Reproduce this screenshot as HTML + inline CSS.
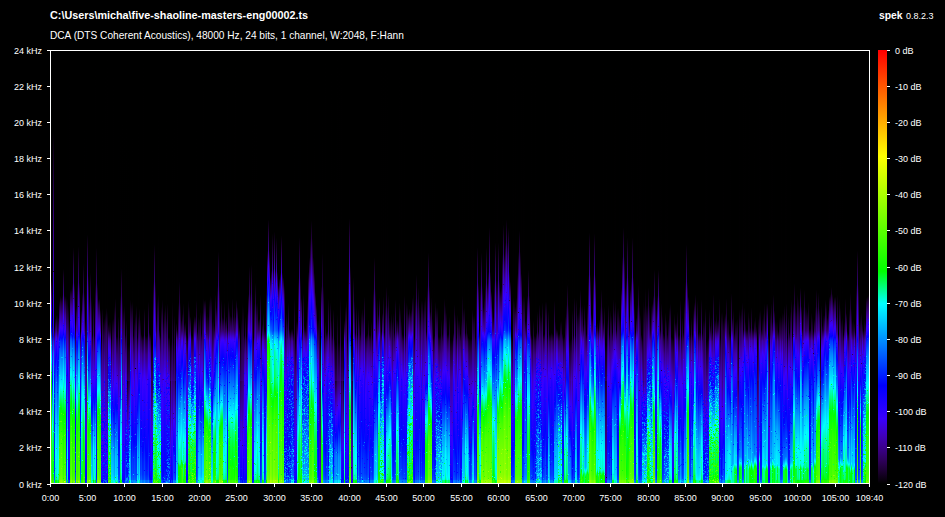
<!DOCTYPE html>
<html lang="en">
<head>
<meta charset="utf-8">
<title>Spek - five-shaoline-masters-eng00002.ts</title>
<style>
html,body{margin:0;padding:0;background:#000;}
body{width:945px;height:517px;overflow:hidden;position:relative;color:#fff;font-family:"Liberation Sans",Arial,sans-serif;}
#spek{position:absolute;left:0;top:0;width:945px;height:517px;background:#000;overflow:hidden;}
#spek svg{position:absolute;left:0;top:0;display:block;}
#sg{position:absolute;left:51px;top:51px;width:818px;height:432px;overflow:hidden;background:#000;}
#sg i{position:absolute;top:0;width:1px;height:432px;display:block;}
.title{position:absolute;left:50px;top:8px;font-size:10.8px;font-weight:bold;line-height:14px;white-space:nowrap;}
.sub{position:absolute;left:50px;top:29px;font-size:10.15px;line-height:13px;white-space:nowrap;}
.brand{position:absolute;right:11.5px;top:8px;font-size:12px;line-height:14px;white-space:nowrap;text-align:right;}
.brand b{font-size:10.4px;}
.brand span{font-size:9px;}
.fl{position:absolute;left:0;width:42px;text-align:right;font-size:9px;line-height:11px;height:11px;white-space:nowrap;}
.tl{position:absolute;top:492.5px;width:60px;text-align:center;font-size:9px;line-height:11px;height:11px;white-space:nowrap;}
.dl{position:absolute;left:895px;font-size:9px;line-height:11px;height:11px;white-space:nowrap;}
</style>
</head>
<body>
<div id="spek">
<div id="sg"><i style="left:0px;background:linear-gradient(#000 228.5px,#010002 229.5px,#1f0036 235.5px,#3e009e 247.5px,#3900fd 259.5px,#00f 275.5px,#0027ff 280.5px,#009eff 290.5px,#00e4ff 302.5px,#00fffa 309.5px,#0f2 330.5px,#01ff00 338.5px,#2cff00 386.5px,#3eff00 421.5px,#5f0 428.5px,#72ff00 429.5px,#78ff00 431.5px)"></i>
<i style="left:1px;background:linear-gradient(#000 0.5px,#010001 266.5px,#19002a 276.5px,#2e005b 285.5px,#3e009c 290.5px,#3b00f1 302.5px,#3600ff 306.5px,#0003ff 330.5px,#009eff 355.5px,#00fdff 375.5px,#00ff83 390.5px,#00ff4c 401.5px,#00ff18 421.5px,#01ff00 424.5px,#10ff00 428.5px,#2dff00 429.5px,#3f0 431.5px)"></i>
<i style="left:2px;background:linear-gradient(#000 0.5px,#000001 80.5px,#180028 107.5px,#3c0091 180.5px,#3b00f5 250.5px,#3400ff 264.5px,#2400ff 280.5px,#0100ff 285.5px,#0036ff 290.5px,#0081ff 303.5px,#00f5ff 332.5px,#00fffc 337.5px,#00ff82 362.5px,#00ff36 384.5px,#00ff16 403.5px,#02ff00 415.5px,#1f0 425.5px,#1eff00 428.5px,#3bff00 429.5px,#41ff00 431.5px)"></i>
<i style="left:3px;background:linear-gradient(#000 275.5px,#12001d 279.5px,#3a0088 287.5px,#3f00ad 290.5px,#3900fe 301.5px,#0004ff 327.5px,#0010ff 333.5px,#002aff 409.5px,#003fff 423.5px,#0058ff 428.5px,#0080ff 429.5px,#0089ff 431.5px)"></i>
<i style="left:4px;background:linear-gradient(#000 0.5px,#010001 267.5px,#21003a 274.5px,#350071 280.5px,#4000cb 286.5px,#3a00f9 289.5px,#2700ff 295.5px,#0002ff 310.5px,#0068ff 336.5px,#00d8ff 377.5px,#00fffb 399.5px,#00ffc1 421.5px,#00ff87 427.5px,#00ff70 428.5px,#00ff0b 429.5px,#03ff00 431.5px)"></i>
<i style="left:5px;background:linear-gradient(#000 263.5px,#030004 264.5px,#1e0035 270.5px,#39007f 279.5px,#3d00e9 286.5px,#3500ff 288.5px,#0100ff 303.5px,#0076ff 333.5px,#00e2ff 380.5px,#00fffa 401.5px,#00ffc7 421.5px,#00ff8d 427.5px,#00ff76 428.5px,#0f1 429.5px,#01ff00 431.5px)"></i>
<i style="left:6px;background:linear-gradient(#000 0.5px,#010001 263.5px,#170027 272.5px,#240042 279.5px,#3f00a6 286.5px,#3f00d4 289.5px,#3700ff 295.5px,#0001ff 317.5px,#0045ff 335.5px,#00c0ff 383.5px,#00eaff 409.5px,#00fbff 422.5px,#00fff7 424.5px,#00ffd9 427.5px,#00ffc2 428.5px,#00ff5d 429.5px,#00ff48 431.5px)"></i>
<i style="left:7px;background:linear-gradient(#000 0.5px,#010001 266.5px,#1d0032 272.5px,#37007a 280.5px,#3f00d5 286.5px,#3700ff 289.5px,#0100ff 307.5px,#0068ff 334.5px,#00d7ff 379.5px,#00fffe 406.5px,#00ffd5 421.5px,#00ff9b 427.5px,#00ff84 428.5px,#00ff1f 429.5px,#00ff0a 431.5px)"></i>
<i style="left:8px;background:linear-gradient(#000 0.5px,#010001 249.5px,#200038 256.5px,#3e009e 269.5px,#3800ff 280.5px,#00f 288.5px,#0038ff 296.5px,#0071ff 308.5px,#00ecff 336.5px,#00fffe 340.5px,#00ff50 356.5px,#01ff00 365.5px,#32ff00 393.5px,#4bff00 423.5px,#5dff00 428.5px,#7aff00 429.5px,#7fff00 431.5px)"></i>
<i style="left:9px;background:linear-gradient(#000 244.5px,#040005 245.5px,#200038 251.5px,#3e009e 264.5px,#3800ff 276.5px,#1800ff 282.5px,#0006ff 286.5px,#0032ff 290.5px,#0078ff 302.5px,#00fffa 334.5px,#0f4 350.5px,#0f0 357.5px,#3bff00 385.5px,#5dff00 423.5px,#6fff00 428.5px,#8cff00 429.5px,#92ff00 431.5px)"></i>
<i style="left:10px;background:linear-gradient(#000 246.5px,#1c0030 252.5px,#3d0096 265.5px,#3a00f9 277.5px,#1f00ff 282.5px,#0006ff 287.5px,#0025ff 290.5px,#0070ff 303.5px,#00f1ff 333.5px,#00fffa 336.5px,#00ff2e 353.5px,#00ff04 357.5px,#40ff00 386.5px,#62ff00 423.5px,#74ff00 428.5px,#91ff00 429.5px,#97ff00 431.5px)"></i>
<i style="left:11px;background:linear-gradient(#000 243.5px,#020003 244.5px,#200038 251.5px,#3d009a 264.5px,#3900fc 277.5px,#1800ff 283.5px,#0300ff 286.5px,#002dff 291.5px,#0071ff 303.5px,#0ff 336.5px,#00ff50 352.5px,#01ff00 361.5px,#36ff00 389.5px,#53ff00 423.5px,#65ff00 428.5px,#82ff00 429.5px,#8f0 431.5px)"></i>
<i style="left:12px;background:linear-gradient(#000 217.5px,#020002 218.5px,#1d0032 227.5px,#3d009a 247.5px,#3900fe 266.5px,#1400ff 280.5px,#0001ff 283.5px,#004cff 289.5px,#009dff 303.5px,#00fffb 327.5px,#00ff95 339.5px,#00ff03 361.5px,#26ff00 396.5px,#3bff00 423.5px,#4dff00 428.5px,#69ff00 429.5px,#6fff00 431.5px)"></i>
<i style="left:13px;background:linear-gradient(#000 243.5px,#020002 244.5px,#200039 252.5px,#3e009f 267.5px,#3b00f1 279.5px,#3800ff 280.5px,#0100ff 288.5px,#0053ff 301.5px,#0df 333.5px,#00fdff 339.5px,#00ff28 358.5px,#00ff01 362.5px,#3aff00 391.5px,#56ff00 423.5px,#68ff00 428.5px,#85ff00 429.5px,#8bff00 431.5px)"></i>
<i style="left:14px;background:linear-gradient(#000 244.5px,#020003 245.5px,#1b002d 250.5px,#3c0093 263.5px,#3b00f5 275.5px,#3200ff 278.5px,#0004ff 286.5px,#002fff 290.5px,#0076ff 302.5px,#00fffc 335.5px,#00ff4f 353.5px,#0f0 363.5px,#2dff00 392.5px,#46ff00 423.5px,#58ff00 428.5px,#75ff00 429.5px,#7bff00 431.5px)"></i>
<i style="left:15px;background:linear-gradient(#000 245.5px,#1c002f 258.5px,#3d0095 286.5px,#3900fe 317.5px,#1f00ff 341.5px,#0005ff 386.5px,#0032ff 413.5px,#0042ff 423.5px,#005bff 428.5px,#0084ff 429.5px,#008cff 431.5px)"></i>
<i style="left:16px;background:linear-gradient(#000 0.5px,#000001 247.5px,#200038 262.5px,#3b0089 282.5px,#4000be 290.5px,#3700ff 299.5px,#0002ff 323.5px,#0090ff 362.5px,#00e8ff 395.5px,#00fffa 414.5px,#00ffe6 421.5px,#00ffac 427.5px,#00ff95 428.5px,#00ff30 429.5px,#00ff1b 431.5px)"></i>
<i style="left:17px;background:linear-gradient(#000 254.5px,#1e0035 268.5px,#3e009e 294.5px,#3800ff 317.5px,#2000ff 333.5px,#0d00ff 417.5px,#0006ff 427.5px,#000fff 428.5px,#0037ff 429.5px,#0040ff 431.5px)"></i>
<i style="left:18px;background:linear-gradient(#000 0.5px,#010001 270.5px,#190029 280.5px,#3b008a 309.5px,#3f00cd 329.5px,#3600ff 372.5px,#0a00ff 424.5px,#0002ff 428.5px,#002bff 429.5px,#03f 431.5px)"></i>
<i style="left:19px;background:linear-gradient(#000 237.5px,#010002 238.5px,#1f0036 244.5px,#3d0099 256.5px,#3900fe 269.5px,#0600ff 281.5px,#0002ff 282.5px,#005aff 289.5px,#00a6ff 302.5px,#00fdff 323.5px,#00ff8a 336.5px,#00ff01 355.5px,#2fff00 391.5px,#47ff00 423.5px,#59ff00 428.5px,#76ff00 429.5px,#7bff00 431.5px)"></i>
<i style="left:20px;background:linear-gradient(#000 237.5px,#030005 238.5px,#1c0030 243.5px,#3b008c 254.5px,#3b00f1 267.5px,#3400ff 270.5px,#0b00ff 280.5px,#0005ff 282.5px,#005cff 289.5px,#00a8ff 302.5px,#00fffd 323.5px,#00ff2f 344.5px,#01ff00 350.5px,#3dff00 383.5px,#5eff00 423.5px,#70ff00 428.5px,#8dff00 429.5px,#93ff00 431.5px)"></i>
<i style="left:21px;background:linear-gradient(#000 231.5px,#020002 232.5px,#1e0033 240.5px,#3d009b 257.5px,#3900fc 273.5px,#2300ff 280.5px,#00f 285.5px,#0037ff 290.5px,#0082ff 303.5px,#00fffc 334.5px,#00ff65 353.5px,#0f0 369.5px,#20ff00 401.5px,#3f0 423.5px,#4f0 428.5px,#61ff00 429.5px,#67ff00 431.5px)"></i>
<i style="left:22px;background:linear-gradient(#000 196.5px,#07000a 199.5px,#270047 214.5px,#3f00ad 239.5px,#3700ff 260.5px,#0e00ff 280.5px,#0100ff 282.5px,#0056ff 289.5px,#00a3ff 302.5px,#00feff 324.5px,#00ffa3 334.5px,#00ff0a 356.5px,#04ff00 360.5px,#2cff00 396.5px,#40ff00 423.5px,#52ff00 428.5px,#6fff00 429.5px,#75ff00 431.5px)"></i>
<i style="left:23px;background:linear-gradient(#000 231.5px,#020002 232.5px,#200038 241.5px,#3e009c 258.5px,#3800ff 275.5px,#2000ff 281.5px,#0005ff 286.5px,#0030ff 290.5px,#07f 302.5px,#00fffe 335.5px,#00ff57 354.5px,#00ff01 366.5px,#27ff00 397.5px,#3cff00 423.5px,#4dff00 428.5px,#6aff00 429.5px,#70ff00 431.5px)"></i>
<i style="left:24px;background:linear-gradient(#000 269.5px,#09000e 273.5px,#28004b 287.5px,#4000bb 311.5px,#3800ff 325.5px,#2100ff 348.5px,#0005ff 391.5px,#0029ff 410.5px,#0039ff 422.5px,#0056ff 428.5px,#007eff 429.5px,#0087ff 431.5px)"></i>
<i style="left:25px;background:linear-gradient(#000 254.5px,#08000d 256.5px,#22003c 262.5px,#3f00a5 275.5px,#4000c7 279.5px,#3600ff 283.5px,#0600ff 291.5px,#000eff 295.5px,#0042ff 305.5px,#00b7ff 332.5px,#00fffe 345.5px,#00ff4c 360.5px,#01ff00 368.5px,#30ff00 392.5px,#4cff00 423.5px,#5dff00 428.5px,#7aff00 429.5px,#80ff00 431.5px)"></i>
<i style="left:26px;background:linear-gradient(#000 231.5px,#1f0036 245.5px,#3e009c 271.5px,#4000bb 279.5px,#3a00f8 283.5px,#2700ff 286.5px,#0b00ff 291.5px,#0004ff 295.5px,#0038ff 305.5px,#00b6ff 334.5px,#00fffb 349.5px,#00ff58 365.5px,#0f0 376.5px,#21ff00 400.5px,#34ff00 423.5px,#46ff00 428.5px,#63ff00 429.5px,#69ff00 431.5px)"></i>
<i style="left:27px;background:linear-gradient(#000 195.5px,#0a0010 200.5px,#22003c 212.5px,#3f00a8 242.5px,#3700ff 267.5px,#1d00ff 280.5px,#0100ff 284.5px,#0042ff 290.5px,#0089ff 302.5px,#00fdff 330.5px,#00ff3a 352.5px,#01ff00 360.5px,#2fff00 391.5px,#48ff00 423.5px,#5aff00 428.5px,#7f0 429.5px,#7dff00 431.5px)"></i>
<i style="left:28px;background:linear-gradient(#000 231.5px,#1c0031 239.5px,#3c0094 255.5px,#3c00f0 270.5px,#3400ff 274.5px,#2000ff 280.5px,#0005ff 285.5px,#0037ff 289.5px,#0083ff 302.5px,#00fffa 332.5px,#00ff32 352.5px,#0f0 358.5px,#35ff00 388.5px,#52ff00 423.5px,#64ff00 428.5px,#81ff00 429.5px,#87ff00 431.5px)"></i>
<i style="left:29px;background:linear-gradient(#000 280.5px,#12001c 283.5px,#34006e 290.5px,#4000c0 302.5px,#3700ff 315.5px,#1500ff 332.5px,#0005ff 374.5px,#0049ff 423.5px,#0062ff 428.5px,#008bff 429.5px,#0093ff 431.5px)"></i>
<i style="left:30px;background:linear-gradient(#000 258.5px,#12001e 262.5px,#29004d 268.5px,#3f00a9 279.5px,#3b00f6 284.5px,#2f00ff 286.5px,#1000ff 292.5px,#0002ff 297.5px,#0053ff 315.5px,#00b2ff 340.5px,#00fffb 368.5px,#00ff97 388.5px,#00ff6f 402.5px,#00ff40 421.5px,#05ff00 428.5px,#2f0 429.5px,#28ff00 431.5px)"></i>
<i style="left:31px;background:linear-gradient(#000 240.5px,#010002 241.5px,#1d0031 248.5px,#3d0098 263.5px,#3900ff 278.5px,#0003ff 287.5px,#02f 290.5px,#0068ff 302.5px,#00e0ff 332.5px,#00fffc 348.5px,#00ff91 375.5px,#00ff5c 396.5px,#00ff48 409.5px,#00ff26 421.5px,#00ff01 425.5px,#0cff00 428.5px,#29ff00 429.5px,#2fff00 431.5px)"></i>
<i style="left:32px;background:linear-gradient(#000 212.5px,#0a0010 217.5px,#200038 228.5px,#3f00a7 259.5px,#3c00ef 279.5px,#3900fd 280.5px,#0200ff 288.5px,#05f 302.5px,#00fcff 344.5px,#0fe 347.5px,#00ff6d 365.5px,#00ff10 383.5px,#02ff00 389.5px,#1cff00 423.5px,#2eff00 428.5px,#4bff00 429.5px,#51ff00 431.5px)"></i>
<i style="left:33px;background:linear-gradient(#000 0.5px,#010001 241.5px,#21003a 254.5px,#3e009f 277.5px,#3f00a8 279.5px,#3700ff 285.5px,#1400ff 291.5px,#0007ff 298.5px,#00dcff 349.5px,#00fffa 360.5px,#00ff84 377.5px,#00ff39 393.5px,#01ff00 419.5px,#1bff00 428.5px,#38ff00 429.5px,#3eff00 431.5px)"></i>
<i style="left:34px;background:linear-gradient(#000 269.5px,#180029 279.5px,#3b008a 314.5px,#3f00b2 329.5px,#4000c1 344.5px,#3600ff 387.5px,#1200ff 425.5px,#0800ff 428.5px,#001aff 429.5px,#02f 431.5px)"></i>
<i style="left:35px;background:linear-gradient(#000 0.5px,#000001 225.5px,#140021 261.5px,#23003f 281.5px,#3c008f 329.5px,#3a0084 330.5px,#3d00ea 374.5px,#3600ff 384.5px,#1200ff 412.5px,#0001ff 427.5px,#000aff 428.5px,#03f 429.5px,#003bff 431.5px)"></i>
<i style="left:36px;background:linear-gradient(#000 183.5px,#200038 199.5px,#3f00a7 230.5px,#3800ff 255.5px,#0c00ff 280.5px,#0003ff 282.5px,#005bff 289.5px,#00a7ff 302.5px,#0ff 323.5px,#00ff54 341.5px,#01ff00 352.5px,#37ff00 385.5px,#5f0 423.5px,#67ff00 428.5px,#84ff00 429.5px,#8aff00 431.5px)"></i>
<i style="left:37px;background:linear-gradient(#000 224.5px,#240040 242.5px,#3f00ad 272.5px,#3f00d2 281.5px,#3400ff 289.5px,#00f 306.5px,#006bff 331.5px,#00f5ff 353.5px,#00fffc 355.5px,#00ff54 369.5px,#01ff00 378.5px,#25ff00 400.5px,#39ff00 423.5px,#4bff00 428.5px,#68ff00 429.5px,#6eff00 431.5px)"></i>
<i style="left:38px;background:linear-gradient(#000 246.5px,#1e0033 260.5px,#390082 280.5px,#3e00dd 286.5px,#3900fc 288.5px,#0200ff 305.5px,#006dff 331.5px,#00fcff 352.5px,#00ffcb 356.5px,#00ff25 369.5px,#00ff04 372.5px,#32ff00 395.5px,#4cff00 423.5px,#5dff00 428.5px,#7aff00 429.5px,#80ff00 431.5px)"></i>
<i style="left:39px;background:linear-gradient(#000 221.5px,#0a0010 226.5px,#200038 237.5px,#3f00a8 268.5px,#3e00dc 281.5px,#30f 287.5px,#1700ff 293.5px,#0005ff 301.5px,#0086ff 331.5px,#00fcff 350.5px,#00ffcf 354.5px,#00ff29 368.5px,#00ff01 372.5px,#2fff00 396.5px,#47ff00 423.5px,#59ff00 428.5px,#76ff00 429.5px,#7bff00 431.5px)"></i>
<i style="left:40px;background:linear-gradient(#000 246.5px,#1e0033 260.5px,#390081 282.5px,#3d00e5 328.5px,#3a00f9 333.5px,#2c00ff 339.5px,#0001ff 357.5px,#00abff 399.5px,#00c1ff 410.5px,#00d1ff 422.5px,#0ef 428.5px,#00ffc5 429.5px,#00ffb0 431.5px)"></i>
<i style="left:41px;background:linear-gradient(#000 283.5px,#040005 284.5px,#1a002c 288.5px,#3a0084 301.5px,#3c00ee 323.5px,#3700ff 327.5px,#0005ff 356.5px,#00a9ff 405.5px,#00beff 422.5px,#00d1ff 427.5px,#00dbff 428.5px,#00fff5 429.5px,#00ffe0 431.5px)"></i>
<i style="left:42px;background:linear-gradient(#000 252.5px,#1c0030 265.5px,#3a0085 289.5px,#3d00e7 321.5px,#3700ff 330.5px,#0004ff 346.5px,#00a3ff 375.5px,#00f6ff 396.5px,#00fff9 400.5px,#00ffda 409.5px,#00ffb9 421.5px,#00ff7f 427.5px,#00ff68 428.5px,#00ff03 429.5px,#05ff00 431.5px)"></i>
<i style="left:43px;background:linear-gradient(#000 283.5px,#020002 284.5px,#170027 288.5px,#38007e 301.5px,#3e00e3 322.5px,#3600ff 329.5px,#0005ff 351.5px,#00a2ff 389.5px,#00d1ff 405.5px,#00eaff 423.5px,#00faff 427.5px,#00fff5 428.5px,#00ff8f 429.5px,#00ff7b 431.5px)"></i>
<i style="left:44px;background:linear-gradient(#000 0.5px,#010001 232.5px,#1e0034 246.5px,#3e009d 275.5px,#3f00d9 299.5px,#3600ff 319.5px,#2400ff 332.5px,#0005ff 344.5px,#009dff 374.5px,#00f0ff 396.5px,#00fffb 403.5px,#00ffca 421.5px,#00ff90 427.5px,#00ff79 428.5px,#00ff13 429.5px,#0f0 431.5px)"></i>
<i style="left:45px;background:linear-gradient(#000 196.5px,#200038 216.5px,#3e009f 252.5px,#3b00f4 283.5px,#3500ff 295.5px,#1a00ff 338.5px,#0800ff 417.5px,#0006ff 425.5px,#0018ff 428.5px,#0040ff 429.5px,#0049ff 431.5px)"></i>
<i style="left:46px;background:linear-gradient(#000 231.5px,#040007 233.5px,#1b002e 241.5px,#3d0094 262.5px,#3d00e7 279.5px,#3600ff 281.5px,#0003ff 289.5px,#0054ff 303.5px,#00d6ff 333.5px,#00fcff 340.5px,#00ffd3 344.5px,#00ff26 359.5px,#0f0 363.5px,#39ff00 390.5px,#56ff00 423.5px,#68ff00 428.5px,#85ff00 429.5px,#8bff00 431.5px)"></i>
<i style="left:47px;background:linear-gradient(#000 248.5px,#1c002f 254.5px,#3e009d 268.5px,#3a00f9 279.5px,#1200ff 285.5px,#0005ff 288.5px,#003dff 296.5px,#006fff 306.5px,#00dfff 332.5px,#00fffc 338.5px,#00ff36 354.5px,#0f0 359.5px,#40ff00 387.5px,#61ff00 423.5px,#73ff00 428.5px,#90ff00 429.5px,#96ff00 431.5px)"></i>
<i style="left:48px;background:linear-gradient(#000 247.5px,#1c0030 253.5px,#3e009d 267.5px,#3a00f9 278.5px,#1500ff 284.5px,#00f 287.5px,#001eff 290.5px,#0065ff 302.5px,#00f8ff 336.5px,#00fff8 338.5px,#00ff48 354.5px,#01ff00 362.5px,#36ff00 390.5px,#52ff00 423.5px,#64ff00 428.5px,#81ff00 429.5px,#87ff00 431.5px)"></i>
<i style="left:49px;background:linear-gradient(#000 257.5px,#020002 258.5px,#21003a 265.5px,#3f00a5 278.5px,#3f00cb 281.5px,#3a00fa 284.5px,#1200ff 291.5px,#0006ff 297.5px,#08f 327.5px,#00fffb 348.5px,#0f4 363.5px,#01ff00 370.5px,#32ff00 395.5px,#4aff00 423.5px,#5cff00 428.5px,#79ff00 429.5px,#7fff00 431.5px)"></i>
<i style="left:50px;background:linear-gradient(#000 287.5px,#0d0015 291.5px,#270047 301.5px,#4000ba 328.5px,#3500ff 408.5px,#2700ff 424.5px,#1b00ff 428.5px,#0500ff 429.5px,#00f 431.5px)"></i>
<i style="left:51px;background:linear-gradient(#000 0.5px,#010001 257.5px,#200038 271.5px,#310064 285.5px,#4000c2 329.5px,#3b00f3 388.5px,#30f 405.5px,#2300ff 424.5px,#1800ff 428.5px,#0100ff 429.5px,#0006ff 431.5px)"></i>
<i style="left:52px;background:linear-gradient(#000 270.5px,#170027 280.5px,#350071 304.5px,#4000bb 329.5px,#3b00f4 372.5px,#3500ff 384.5px,#0f00ff 425.5px,#0500ff 428.5px,#0020ff 429.5px,#0028ff 431.5px)"></i>
<i style="left:53px;background:linear-gradient(#000 267.5px,#140021 275.5px,#2a0050 287.5px,#4000b8 315.5px,#3c00ee 330.5px,#3600ff 383.5px,#2300ff 422.5px,#1300ff 428.5px,#0006ff 429.5px,#000eff 431.5px)"></i>
<i style="left:54px;background:linear-gradient(#000 0.5px,#010001 262.5px,#1d0031 274.5px,#2b0052 285.5px,#3f00ab 329.5px,#3f00a8 332.5px,#3700ff 394.5px,#1b00ff 424.5px,#1000ff 428.5px,#000cff 429.5px,#0015ff 431.5px)"></i>
<i style="left:55px;background:linear-gradient(#000 256.5px,#23003e 272.5px,#300062 284.5px,#3f00ae 329.5px,#3f00ab 332.5px,#3700ff 392.5px,#1900ff 424.5px,#0e00ff 428.5px,#0010ff 429.5px,#0018ff 431.5px)"></i>
<i style="left:56px;background:linear-gradient(#000 0.5px,#010001 260.5px,#1a002c 275.5px,#350072 312.5px,#3b008c 329.5px,#39007f 330.5px,#3d00ea 392.5px,#3600ff 403.5px,#2100ff 425.5px,#1700ff 428.5px,#0100ff 429.5px,#0007ff 431.5px)"></i>
<i style="left:57px;background:linear-gradient(#000 272.5px,#010002 273.5px,#1c0031 279.5px,#3e00a1 287.5px,#4000c7 290.5px,#3600ff 298.5px,#0005ff 322.5px,#0034ff 332.5px,#00beff 356.5px,#00feff 370.5px,#00ff85 384.5px,#00ff3d 396.5px,#02ff00 421.5px,#19ff00 428.5px,#36ff00 429.5px,#3cff00 431.5px)"></i>
<i style="left:58px;background:linear-gradient(#000 270.5px,#160024 279.5px,#19002a 280.5px,#3d0097 288.5px,#4000c4 293.5px,#3900fe 301.5px,#0004ff 327.5px,#0af 364.5px,#0ff 390.5px,#00ffc4 402.5px,#00ff91 421.5px,#00ff57 427.5px,#00ff40 428.5px,#0bff00 429.5px,#10ff00 431.5px)"></i>
<i style="left:59px;background:linear-gradient(#000 270.5px,#160025 279.5px,#1e0034 281.5px,#3e00a4 289.5px,#3900fc 301.5px,#0003ff 327.5px,#00c3ff 360.5px,#00feff 373.5px,#00ff87 387.5px,#00ff48 398.5px,#00ff0a 421.5px,#02ff00 423.5px,#14ff00 428.5px,#31ff00 429.5px,#37ff00 431.5px)"></i>
<i style="left:60px;background:linear-gradient(#000 287.5px,#09000e 289.5px,#21003b 298.5px,#3f00a6 323.5px,#3e00dc 334.5px,#3800ff 340.5px,#0001ff 361.5px,#0af 400.5px,#00bdff 408.5px,#00cfff 422.5px,#00e2ff 427.5px,#00ecff 428.5px,#00ffca 429.5px,#00ffb6 431.5px)"></i>
<i style="left:61px;background:linear-gradient(#000 268.5px,#200038 282.5px,#3e009e 304.5px,#3700ff 325.5px,#0005ff 352.5px,#00adff 400.5px,#00c2ff 413.5px,#00d3ff 423.5px,#00ecff 428.5px,#00ffca 429.5px,#00ffb6 431.5px)"></i>
<i style="left:62px;background:linear-gradient(#000 0.5px,#010001 267.5px,#0c0013 271.5px,#22003c 282.5px,#3e009d 313.5px,#3f00da 332.5px,#3800ff 339.5px,#0002ff 362.5px,#00adff 404.5px,#00c7ff 423.5px,#00e0ff 428.5px,#00ffe7 429.5px,#00ffd2 431.5px)"></i>
<i style="left:63px;background:linear-gradient(#000 255.5px,#08000d 259.5px,#22003c 271.5px,#3e009d 300.5px,#3900fe 331.5px,#0004ff 363.5px,#0093ff 406.5px,#00abff 423.5px,#00c4ff 428.5px,#00edff 429.5px,#00f5ff 431.5px)"></i>
<i style="left:64px;background:linear-gradient(#000 247.5px,#1e0033 261.5px,#3a0087 285.5px,#3d00ea 324.5px,#3400ff 333.5px,#0002ff 354.5px,#00a8ff 395.5px,#00c7ff 407.5px,#00daff 422.5px,#00f7ff 428.5px,#00ffae 429.5px,#00ff9a 431.5px)"></i>
<i style="left:65px;background:linear-gradient(#000 284.5px,#010002 285.5px,#160025 289.5px,#37007a 304.5px,#3e00e3 326.5px,#3600ff 333.5px,#0002ff 357.5px,#00b0ff 403.5px,#00cdff 423.5px,#00e6ff 428.5px,#00ffd9 429.5px,#00ffc4 431.5px)"></i>
<i style="left:66px;background:linear-gradient(#000 285.5px,#09000e 287.5px,#140020 289.5px,#34006e 303.5px,#3f00d6 325.5px,#3700ff 334.5px,#0005ff 357.5px,#00adff 399.5px,#00c1ff 408.5px,#00d7ff 423.5px,#00f0ff 428.5px,#00ffbf 429.5px,#0fa 431.5px)"></i>
<i style="left:67px;background:linear-gradient(#000 0.5px,#000001 265.5px,#10001a 271.5px,#23003f 281.5px,#3d0098 317.5px,#4000b5 329.5px,#4000b9 333.5px,#3700ff 359.5px,#0003ff 397.5px,#0025ff 407.5px,#0038ff 422.5px,#004bff 427.5px,#05f 428.5px,#007dff 429.5px,#0085ff 431.5px)"></i>
<i style="left:68px;background:linear-gradient(#000 285.5px,#010002 286.5px,#10001a 289.5px,#260047 297.5px,#3f00a8 318.5px,#3e00de 330.5px,#3700ff 347.5px,#0003ff 396.5px,#02f 408.5px,#0038ff 423.5px,#0051ff 428.5px,#007aff 429.5px,#0082ff 431.5px)"></i>
<i style="left:69px;background:linear-gradient(#000 0.5px,#010001 244.5px,#1e0034 258.5px,#3c0091 284.5px,#3b00f5 320.5px,#30f 328.5px,#0002ff 342.5px,#0096ff 365.5px,#00fcff 386.5px,#00ffea 389.5px,#00ffa0 399.5px,#00ff70 415.5px,#00ff5f 421.5px,#00ff25 427.5px,#00ff0e 428.5px,#19ff00 429.5px,#1fff00 431.5px)"></i>
<i style="left:70px;background:linear-gradient(#000 217.5px,#0a0010 222.5px,#240040 235.5px,#3f00a7 263.5px,#3e00e2 279.5px,#3800ff 281.5px,#0100ff 289.5px,#004fff 303.5px,#00bfff 331.5px,#00f8ff 398.5px,#00fffa 411.5px,#0fd 421.5px,#00ffa3 427.5px,#00ff8c 428.5px,#00ff27 429.5px,#00ff12 431.5px)"></i>
<i style="left:71px;background:linear-gradient(#000 0.5px,#010001 244.5px,#1e0035 266.5px,#33006b 290.5px,#3f00aa 329.5px,#3f00a7 332.5px,#3700ff 386.5px,#0e00ff 426.5px,#0600ff 428.5px,#001dff 429.5px,#0026ff 431.5px)"></i>
<i style="left:72px;background:linear-gradient(#000 258.5px,#08000d 262.5px,#1d0031 271.5px,#3c0090 299.5px,#3c00ee 330.5px,#3600ff 362.5px,#1700ff 422.5px,#0700ff 428.5px,#001bff 429.5px,#0023ff 431.5px)"></i>
<i style="left:73px;background:linear-gradient(#000 0.5px,#010001 254.5px,#250042 271.5px,#33006b 284.5px,#4000c2 329.5px,#3600ff 382.5px,#1000ff 425.5px,#0600ff 428.5px,#001dff 429.5px,#0026ff 431.5px)"></i>
<i style="left:74px;background:linear-gradient(#000 283.5px,#010002 284.5px,#170026 288.5px,#390081 302.5px,#3d00e6 323.5px,#3600ff 329.5px,#0005ff 395.5px,#02f 410.5px,#0036ff 423.5px,#004fff 428.5px,#07f 429.5px,#0080ff 431.5px)"></i>
<i style="left:75px;background:linear-gradient(#000 0.5px,#010001 269.5px,#1d0031 281.5px,#3d0096 310.5px,#3f00d8 330.5px,#3600ff 354.5px,#0005ff 411.5px,#0014ff 422.5px,#0027ff 427.5px,#0031ff 428.5px,#0059ff 429.5px,#0061ff 431.5px)"></i>
<i style="left:76px;background:linear-gradient(#000 293.5px,#0c0014 300.5px,#1a002c 316.5px,#280049 329.5px,#0e0017 330.5px,#270048 343.5px,#3f00ad 368.5px,#3700ff 387.5px,#0500ff 407.5px,#0006ff 421.5px,#0026ff 428.5px,#004fff 429.5px,#0057ff 431.5px)"></i>
<i style="left:77px;background:linear-gradient(#000 0.5px,#010001 293.5px,#10001a 301.5px,#1c0030 313.5px,#2f005d 329.5px,#23003e 330.5px,#3f00aa 359.5px,#3700ff 380.5px,#0005ff 404.5px,#0023ff 423.5px,#003cff 428.5px,#0064ff 429.5px,#006dff 431.5px)"></i>
<i style="left:78px;background:linear-gradient(#000 292.5px,#12001d 301.5px,#1e0033 312.5px,#320067 329.5px,#2a0050 330.5px,#4000b5 346.5px,#3800ff 358.5px,#0002ff 378.5px,#008fff 405.5px,#00a4ff 422.5px,#00c1ff 428.5px,#00e9ff 429.5px,#00f2ff 431.5px)"></i>
<i style="left:79px;background:linear-gradient(#000 248.5px,#150023 258.5px,#390083 282.5px,#4000ca 293.5px,#3800ff 300.5px,#0002ff 325.5px,#0021ff 336.5px,#00a6ff 408.5px,#00bcff 423.5px,#00d5ff 428.5px,#00fdff 429.5px,#0fe 431.5px)"></i>
<i style="left:80px;background:linear-gradient(#000 252.5px,#240040 269.5px,#38007f 288.5px,#3e00e1 325.5px,#3700ff 342.5px,#0004ff 397.5px,#001fff 408.5px,#0031ff 422.5px,#004eff 428.5px,#0076ff 429.5px,#007fff 431.5px)"></i>
<i style="left:81px;background:linear-gradient(#000 0.5px,#010001 250.5px,#1e0035 264.5px,#3d0094 290.5px,#3a00fb 320.5px,#0003ff 383.5px,#0039ff 410.5px,#0049ff 422.5px,#0065ff 428.5px,#008eff 429.5px,#0096ff 431.5px)"></i>
<i style="left:82px;background:linear-gradient(#000 284.5px,#0f0018 287.5px,#1a002d 289.5px,#390080 303.5px,#3d00ea 325.5px,#3800ff 330.5px,#0003ff 390.5px,#002eff 408.5px,#0040ff 422.5px,#005cff 428.5px,#0085ff 429.5px,#008dff 431.5px)"></i>
<i style="left:83px;background:linear-gradient(#000 270.5px,#1a002b 281.5px,#3c008e 311.5px,#3f00cc 331.5px,#3700ff 351.5px,#0003ff 391.5px,#0038ff 407.5px,#004bff 422.5px,#0068ff 428.5px,#0090ff 429.5px,#09f 431.5px)"></i>
<i style="left:84px;background:linear-gradient(#000 262.5px,#1c0030 274.5px,#3d0096 299.5px,#3a00f9 323.5px,#2b00ff 335.5px,#0004ff 387.5px,#0032ff 410.5px,#0042ff 422.5px,#005fff 428.5px,#0087ff 429.5px,#0090ff 431.5px)"></i>
<i style="left:85px;background:linear-gradient(#000 254.5px,#0d0015 260.5px,#2a004f 275.5px,#4000b5 305.5px,#3800ff 328.5px,#0005ff 392.5px,#002aff 409.5px,#003fff 423.5px,#0058ff 428.5px,#0080ff 429.5px,#0089ff 431.5px)"></i>
<i style="left:86px;background:linear-gradient(#000 285.5px,#020003 286.5px,#11001c 289.5px,#300060 301.5px,#4000c9 324.5px,#3500ff 336.5px,#0004ff 358.5px,#00a8ff 398.5px,#00c0ff 408.5px,#00d6ff 423.5px,#00efff 428.5px,#00ffc2 429.5px,#00ffad 431.5px)"></i>
<i style="left:87px;background:linear-gradient(#000 0.5px,#010001 265.5px,#150022 273.5px,#28004a 282.5px,#390083 291.5px,#3f00cf 302.5px,#3700ff 312.5px,#0400ff 338.5px,#0012ff 349.5px,#009aff 408.5px,#00acff 422.5px,#00bfff 427.5px,#00c9ff 428.5px,#00f1ff 429.5px,#00f9ff 431.5px)"></i>
<i style="left:88px;background:linear-gradient(#000 257.5px,#1e0033 270.5px,#38007e 287.5px,#3e00e1 305.5px,#3600ff 312.5px,#0003ff 338.5px,#00abff 393.5px,#00caff 410.5px,#00daff 422.5px,#00f7ff 428.5px,#00ffae 429.5px,#00ff9a 431.5px)"></i>
<i style="left:89px;background:linear-gradient(#000 268.5px,#200038 282.5px,#3e00a0 306.5px,#3900fe 327.5px,#0005ff 392.5px,#0029ff 409.5px,#003eff 423.5px,#0057ff 428.5px,#007fff 429.5px,#08f 431.5px)"></i>
<i style="left:90px;background:linear-gradient(#000 282.5px,#020004 283.5px,#130020 286.5px,#270048 290.5px,#3d0096 302.5px,#3a00f8 322.5px,#2c00ff 329.5px,#0005ff 383.5px,#003bff 410.5px,#004bff 422.5px,#0068ff 428.5px,#0090ff 429.5px,#09f 431.5px)"></i>
<i style="left:91px;background:linear-gradient(#000 284.5px,#020002 285.5px,#170026 289.5px,#38007b 304.5px,#3e00df 325.5px,#3b00f6 331.5px,#3400ff 342.5px,#0004ff 399.5px,#001aff 410.5px,#002eff 423.5px,#0047ff 428.5px,#0070ff 429.5px,#0078ff 431.5px)"></i>
<i style="left:92px;background:linear-gradient(#000 0.5px,#010001 284.5px,#11001b 287.5px,#1c0030 289.5px,#3a0084 303.5px,#3d00ea 324.5px,#3700ff 329.5px,#0004ff 396.5px,#001fff 410.5px,#002fff 422.5px,#0042ff 427.5px,#004cff 428.5px,#0074ff 429.5px,#007cff 431.5px)"></i>
<i style="left:93px;background:linear-gradient(#000 257.5px,#1e0033 270.5px,#3e009c 298.5px,#3900ff 325.5px,#0004ff 386.5px,#0037ff 410.5px,#004aff 423.5px,#0063ff 428.5px,#008cff 429.5px,#0094ff 431.5px)"></i>
<i style="left:94px;background:linear-gradient(#000 284.5px,#150023 288.5px,#1b002d 289.5px,#390081 303.5px,#3d00e6 324.5px,#3800ff 330.5px,#0004ff 399.5px,#001aff 412.5px,#002cff 423.5px,#0045ff 428.5px,#006dff 429.5px,#0076ff 431.5px)"></i>
<i style="left:95px;background:linear-gradient(#000 285.5px,#150023 289.5px,#350072 303.5px,#3f00da 325.5px,#3c00ef 330.5px,#3600ff 344.5px,#0004ff 404.5px,#001cff 422.5px,#0038ff 428.5px,#0061ff 429.5px,#0069ff 431.5px)"></i>
<i style="left:96px;background:linear-gradient(#000 284.5px,#0f0018 287.5px,#1a002d 289.5px,#390080 303.5px,#3d00ea 325.5px,#3800ff 330.5px,#0005ff 402.5px,#0026ff 423.5px,#003fff 428.5px,#0068ff 429.5px,#0070ff 431.5px)"></i>
<i style="left:97px;background:linear-gradient(#000 250.5px,#11001c 258.5px,#300060 276.5px,#4000c9 301.5px,#3600ff 315.5px,#1800ff 334.5px,#0005ff 380.5px,#0042ff 423.5px,#005bff 428.5px,#0084ff 429.5px,#008cff 431.5px)"></i>
<i style="left:98px;background:linear-gradient(#000 280.5px,#010002 281.5px,#19002a 285.5px,#310063 290.5px,#4000b4 302.5px,#3800ff 317.5px,#1c00ff 332.5px,#0900ff 416.5px,#0005ff 425.5px,#0017ff 428.5px,#003fff 429.5px,#0047ff 431.5px)"></i>
<i style="left:99px;background:linear-gradient(#000 283.5px,#100019 286.5px,#230040 290.5px,#3b008c 302.5px,#3b00f2 323.5px,#3500ff 327.5px,#1200ff 421.5px,#00f 428.5px,#0029ff 429.5px,#0031ff 431.5px)"></i>
<i style="left:100px;background:linear-gradient(#000 292.5px,#11001b 301.5px,#1f0037 315.5px,#300061 329.5px,#260045 330.5px,#4000b4 370.5px,#3700ff 394.5px,#1e00ff 409.5px,#0c00ff 426.5px,#0400ff 428.5px,#0021ff 429.5px,#0029ff 431.5px)"></i>
<i style="left:101px;background:linear-gradient(#000 0.5px,#010001 293.5px,#0f0018 300.5px,#1e0034 315.5px,#2e005c 329.5px,#22003d 330.5px,#3f00a7 357.5px,#3700ff 378.5px,#00f 401.5px,#001aff 406.5px,#002eff 422.5px,#004aff 428.5px,#0073ff 429.5px,#007bff 431.5px)"></i>
<i style="left:102px;background:linear-gradient(#000 230.5px,#1a002b 242.5px,#3d0095 271.5px,#3900fd 299.5px,#0002ff 332.5px,#00a0ff 362.5px,#00fdff 386.5px,#00ffac 400.5px,#00ff72 421.5px,#00ff38 427.5px,#00ff21 428.5px,#13ff00 429.5px,#19ff00 431.5px)"></i>
<i style="left:103px;background:linear-gradient(#000 193.5px,#0a0010 198.5px,#250042 212.5px,#3f00aa 241.5px,#3600ff 266.5px,#0e00ff 287.5px,#0006ff 294.5px,#003fff 305.5px,#00b1ff 334.5px,#00fffb 367.5px,#00ff9f 389.5px,#00ff51 421.5px,#00ff16 427.5px,#0f0 428.5px,#1dff00 429.5px,#23ff00 431.5px)"></i>
<i style="left:104px;background:linear-gradient(#000 230.5px,#1e0034 243.5px,#3e009b 269.5px,#4000c3 279.5px,#3800ff 283.5px,#0800ff 291.5px,#0005ff 294.5px,#0036ff 303.5px,#00c9ff 340.5px,#00fffd 358.5px,#00ff86 378.5px,#0f4 395.5px,#00ff14 417.5px,#03ff00 423.5px,#15ff00 428.5px,#32ff00 429.5px,#38ff00 431.5px)"></i>
<i style="left:105px;background:linear-gradient(#000 267.5px,#1f0035 280.5px,#370077 291.5px,#4000c3 302.5px,#3600ff 315.5px,#0700ff 333.5px,#0009ff 336.5px,#00a1ff 360.5px,#00feff 379.5px,#00ff8a 393.5px,#00ff5e 402.5px,#00ff2c 421.5px,#01ff00 426.5px,#0bff00 428.5px,#27ff00 429.5px,#2dff00 431.5px)"></i>
<i style="left:106px;background:linear-gradient(#000 247.5px,#21003a 263.5px,#3f00a7 291.5px,#3600ff 314.5px,#0f00ff 333.5px,#0003ff 338.5px,#009bff 367.5px,#00f8ff 391.5px,#00fffa 394.5px,#00ffca 403.5px,#00ff9a 421.5px,#00ff60 427.5px,#00ff49 428.5px,#08ff00 429.5px,#0eff00 431.5px)"></i>
<i style="left:107px;background:linear-gradient(#000 0.5px,#010001 243.5px,#250042 261.5px,#3f00ae 289.5px,#3600ff 310.5px,#0003ff 336.5px,#00a5ff 369.5px,#00faff 393.5px,#00fff1 397.5px,#00ffce 406.5px,#00ffa5 421.5px,#00ff6b 427.5px,#00ff54 428.5px,#05ff00 429.5px,#0bff00 431.5px)"></i>
<i style="left:108px;background:linear-gradient(#000 278.5px,#030004 279.5px,#1c0030 283.5px,#390080 289.5px,#3e00db 302.5px,#3600ff 310.5px,#0002ff 334.5px,#00a3ff 375.5px,#00ebff 401.5px,#00fffb 420.5px,#00ffbd 427.5px,#00ffa6 428.5px,#00ff41 429.5px,#00ff2c 431.5px)"></i>
<i style="left:109px;background:linear-gradient(#000 284.5px,#08000d 286.5px,#180029 289.5px,#38007b 303.5px,#3e00df 324.5px,#3500ff 331.5px,#0002ff 345.5px,#009aff 370.5px,#00fdff 392.5px,#00ffbc 403.5px,#00ff8c 421.5px,#00ff52 427.5px,#00ff3b 428.5px,#0cff00 429.5px,#12ff00 431.5px)"></i>
<i style="left:110px;background:linear-gradient(#000 255.5px,#0d0015 261.5px,#2a004f 276.5px,#3f00ad 308.5px,#3c00eb 332.5px,#3600ff 346.5px,#0005ff 402.5px,#001dff 419.5px,#0037ff 427.5px,#0040ff 428.5px,#0069ff 429.5px,#0071ff 431.5px)"></i>
<i style="left:111px;background:linear-gradient(#000 248.5px,#23003e 265.5px,#38007c 283.5px,#3e00e2 327.5px,#3600ff 353.5px,#0005ff 425.5px,#0017ff 428.5px,#003fff 429.5px,#0047ff 431.5px)"></i>
<i style="left:112px;background:linear-gradient(#000 270.5px,#21003a 284.5px,#3e009f 307.5px,#3800ff 328.5px,#0700ff 422.5px,#0007ff 427.5px,#0010ff 428.5px,#0038ff 429.5px,#0041ff 431.5px)"></i>
<i style="left:113px;background:linear-gradient(#000 259.5px,#1f0037 273.5px,#3e009e 299.5px,#3800ff 324.5px,#2800ff 342.5px,#0005ff 412.5px,#0013ff 422.5px,#002fff 428.5px,#0058ff 429.5px,#0060ff 431.5px)"></i>
<i style="left:114px;background:linear-gradient(#000 253.5px,#1d0031 266.5px,#3b008a 291.5px,#3b00f6 325.5px,#3600ff 331.5px,#0004ff 416.5px,#0016ff 424.5px,#002bff 428.5px,#0053ff 429.5px,#005cff 431.5px)"></i>
<i style="left:115px;background:linear-gradient(#000 0.5px,#010001 267.5px,#0c0013 271.5px,#240040 283.5px,#3e00a1 312.5px,#3f00d9 330.5px,#3600ff 360.5px,#0002ff 425.5px,#0013ff 428.5px,#003cff 429.5px,#04f 431.5px)"></i>
<i style="left:116px;background:linear-gradient(#000 252.5px,#11001c 260.5px,#28004a 272.5px,#3f00aa 300.5px,#3700ff 328.5px,#0005ff 407.5px,#001cff 423.5px,#0035ff 428.5px,#005eff 429.5px,#06f 431.5px)"></i>
<i style="left:117px;background:linear-gradient(#000 285.5px,#030004 286.5px,#12001d 289.5px,#310062 301.5px,#3f00cb 324.5px,#3d00e7 331.5px,#3600ff 347.5px,#0005ff 403.5px,#0024ff 423.5px,#003dff 428.5px,#0065ff 429.5px,#006eff 431.5px)"></i>
<i style="left:118px;background:linear-gradient(#000 285.5px,#020003 286.5px,#11001b 289.5px,#30005f 301.5px,#4000c7 324.5px,#3e00e1 330.5px,#3700ff 352.5px,#0003ff 418.5px,#001eff 427.5px,#0028ff 428.5px,#0050ff 429.5px,#0058ff 431.5px)"></i>
<i style="left:119px;background:linear-gradient(#000 293.5px,#0e0016 300.5px,#1b002d 314.5px,#2b0053 329.5px,#1a002b 330.5px,#3e009c 373.5px,#3a00fb 401.5px,#1f00ff 425.5px,#1600ff 428.5px,#0001ff 429.5px,#000aff 431.5px)"></i>
<i style="left:120px;background:linear-gradient(#000 289.5px,#09000e 293.5px,#1b002f 301.5px,#37007a 323.5px,#3d0094 329.5px,#3b008c 330.5px,#3b00f6 374.5px,#3200ff 383.5px,#0c00ff 411.5px,#0004ff 425.5px,#0016ff 428.5px,#003eff 429.5px,#0046ff 431.5px)"></i>
<i style="left:121px;background:linear-gradient(#000 0.5px,#010001 250.5px,#0d0014 265.5px,#2d0057 300.5px,#390082 329.5px,#360073 330.5px,#3e00de 380.5px,#3700ff 394.5px,#2000ff 414.5px,#10f 426.5px,#0a00ff 428.5px,#0017ff 429.5px,#001fff 431.5px)"></i>
<i style="left:122px;background:linear-gradient(#000 291.5px,#150022 300.5px,#230040 312.5px,#38007c 329.5px,#34006e 330.5px,#3f00d5 358.5px,#3600ff 370.5px,#0003ff 397.5px,#002eff 406.5px,#0042ff 422.5px,#005fff 428.5px,#0087ff 429.5px,#0090ff 431.5px)"></i>
<i style="left:123px;background:linear-gradient(#000 0.5px,#010001 264.5px,#1b002e 279.5px,#360073 319.5px,#390082 329.5px,#360073 330.5px,#3e00dc 360.5px,#3800ff 370.5px,#0003ff 399.5px,#0023ff 406.5px,#0037ff 422.5px,#0053ff 428.5px,#007cff 429.5px,#0084ff 431.5px)"></i>
<i style="left:124px;background:linear-gradient(#000 293.5px,#0e0017 301.5px,#19002b 313.5px,#2b0052 329.5px,#180029 330.5px,#3c008f 356.5px,#3b00f3 379.5px,#30f 384.5px,#0002ff 404.5px,#001dff 422.5px,#0030ff 427.5px,#003aff 428.5px,#0062ff 429.5px,#006aff 431.5px)"></i>
<i style="left:125px;background:linear-gradient(#000 271.5px,#020003 272.5px,#21003a 279.5px,#3e009d 286.5px,#4000ca 289.5px,#3800ff 296.5px,#0002ff 319.5px,#0032ff 332.5px,#00b5ff 402.5px,#00ceff 422.5px,#00eaff 428.5px,#00ffcd 429.5px,#00ffb8 431.5px)"></i>
<i style="left:126px;background:linear-gradient(#000 0.5px,#010001 278.5px,#0c0012 280.5px,#2a004e 285.5px,#3a0086 289.5px,#3e00e2 302.5px,#3600ff 309.5px,#0002ff 335.5px,#00a9ff 406.5px,#00bdff 422.5px,#00d9ff 428.5px,#00fff8 429.5px,#00ffe3 431.5px)"></i>
<i style="left:127px;background:linear-gradient(#000 251.5px,#22003c 267.5px,#360076 281.5px,#3d009a 287.5px,#4000c0 290.5px,#3600ff 299.5px,#0004ff 323.5px,#00bfff 365.5px,#0ff 384.5px,#00ffaf 398.5px,#00ff8e 410.5px,#00ff78 411.5px,#00ff1a 413.5px,#02ff00 414.5px,#02ff00 428.5px,#14ff00 429.5px,#1aff00 431.5px)"></i>
<i style="left:128px;background:linear-gradient(#000 230.5px,#0a0010 235.5px,#200038 246.5px,#3f00a8 277.5px,#3700ff 297.5px,#0004ff 325.5px,#00b1ff 366.5px,#00fffb 392.5px,#00ffc9 403.5px,#00ffb6 411.5px,#00ffa5 412.5px,#00ff18 415.5px,#01ff00 416.5px,#01ff00 428.5px,#0eff00 431.5px)"></i>
<i style="left:129px;background:linear-gradient(#000 251.5px,#22003c 267.5px,#38007b 282.5px,#3f00a9 289.5px,#3900fd 300.5px,#0004ff 326.5px,#00b3ff 365.5px,#0ff 388.5px,#0fb 401.5px,#00ffa2 411.5px,#00ff91 412.5px,#0f3 414.5px,#00ff12 415.5px,#00ff12 428.5px,#0eff00 429.5px,#14ff00 431.5px)"></i>
<i style="left:130px;background:linear-gradient(#000 269.5px,#23003f 277.5px,#2f005d 280.5px,#4000c4 287.5px,#3e00e3 289.5px,#3800ff 293.5px,#0600ff 311.5px,#0009ff 316.5px,#00c2ff 361.5px,#00fffb 381.5px,#00ffad 395.5px,#00ff87 408.5px,#01ff00 411.5px,#1cff00 413.5px,#1fff00 431.5px)"></i>
<i style="left:131px;background:linear-gradient(#000 261.5px,#020002 262.5px,#1f0035 271.5px,#300060 279.5px,#4000c8 286.5px,#3b00f6 289.5px,#3200ff 292.5px,#00f 310.5px,#06f 336.5px,#00d9ff 379.5px,#00fffb 402.5px,#00fff0 407.5px,#00ffe3 408.5px,#00ff28 412.5px,#02ff00 413.5px,#3fff00 418.5px,#3fff00 431.5px)"></i>
<i style="left:132px;background:linear-gradient(#000 252.5px,#1c0030 265.5px,#37007a 283.5px,#3f00d5 299.5px,#3800ff 307.5px,#00f 331.5px,#09f 360.5px,#00fcff 385.5px,#00fff0 388.5px,#00ffa9 400.5px,#00ff87 413.5px,#00ff75 414.5px,#00ff6f 421.5px,#00ff35 427.5px,#00ff1f 428.5px,#14ff00 429.5px,#1aff00 431.5px)"></i>
<i style="left:133px;background:linear-gradient(#000 272.5px,#020003 273.5px,#1d0032 279.5px,#3e00a2 287.5px,#4000c8 290.5px,#3900fe 297.5px,#0002ff 321.5px,#00b0ff 364.5px,#0ff 391.5px,#0fc 403.5px,#0fb 410.5px,#00ffa2 411.5px,#00ff16 414.5px,#07ff00 415.5px,#10ff00 417.5px,#10ff00 431.5px)"></i>
<i style="left:134px;background:linear-gradient(#000 270.5px,#020003 271.5px,#1d0033 277.5px,#2a0050 280.5px,#4000b7 287.5px,#3e00dd 290.5px,#3700ff 295.5px,#0002ff 317.5px,#00a7ff 359.5px,#00fdff 389.5px,#00ffc7 404.5px,#0fb 409.5px,#00ff97 410.5px,#00ff0b 413.5px,#0aff00 414.5px,#1eff00 416.5px,#1eff00 431.5px)"></i>
<i style="left:135px;background:linear-gradient(#000 283.5px,#160024 287.5px,#240041 290.5px,#3c0092 303.5px,#3b00f4 323.5px,#3500ff 327.5px,#2c00ff 354.5px,#1b00ff 418.5px,#0700ff 428.5px,#001cff 429.5px,#0025ff 431.5px)"></i>
<i style="left:136px;background:linear-gradient(#000 286.5px,#07000b 288.5px,#0f0018 290.5px,#2a004f 300.5px,#4000bd 325.5px,#3f00cf 330.5px,#3700ff 370.5px,#0b00ff 424.5px,#0001ff 428.5px,#002aff 429.5px,#0032ff 431.5px)"></i>
<i style="left:137px;background:linear-gradient(#000 249.5px,#200038 264.5px,#38007d 281.5px,#3e009c 286.5px,#3f00cf 290.5px,#3600ff 297.5px,#0003ff 320.5px,#004fff 336.5px,#00d2ff 363.5px,#00fffe 375.5px,#00ff96 389.5px,#00ff62 400.5px,#00ff2c 421.5px,#01ff00 426.5px,#0bff00 428.5px,#27ff00 429.5px,#2dff00 431.5px)"></i>
<i style="left:138px;background:linear-gradient(#000 255.5px,#08000d 259.5px,#22003c 271.5px,#300061 280.5px,#4000c6 287.5px,#3c00ec 290.5px,#3700ff 293.5px,#0300ff 312.5px,#0023ff 322.5px,#0062ff 335.5px,#00e4ff 361.5px,#00fffb 368.5px,#00ff7f 383.5px,#00ff38 396.5px,#01ff00 420.5px,#1aff00 428.5px,#37ff00 429.5px,#3dff00 431.5px)"></i>
<i style="left:139px;background:linear-gradient(#000 265.5px,#240041 273.5px,#350072 279.5px,#3f00cc 285.5px,#3a00fa 288.5px,#0500ff 304.5px,#000cff 309.5px,#00daff 359.5px,#00fffa 371.5px,#00ff94 387.5px,#00ff60 400.5px,#00ff2c 421.5px,#01ff00 426.5px,#0bff00 428.5px,#27ff00 429.5px,#2dff00 431.5px)"></i>
<i style="left:140px;background:linear-gradient(#000 283.5px,#160024 287.5px,#240041 290.5px,#3c0092 303.5px,#3b00f4 323.5px,#3500ff 327.5px,#0004ff 341.5px,#00a3ff 365.5px,#00feff 383.5px,#00ff98 395.5px,#00ff6f 403.5px,#00ff40 421.5px,#05ff00 428.5px,#2f0 429.5px,#28ff00 431.5px)"></i>
<i style="left:141px;background:linear-gradient(#000 284.5px,#0f0018 287.5px,#1a002d 289.5px,#390080 303.5px,#3d00ea 325.5px,#3600ff 330.5px,#00f 341.5px,#00a0ff 362.5px,#00feff 378.5px,#00ff81 390.5px,#00ff43 399.5px,#04ff00 423.5px,#16ff00 428.5px,#3f0 429.5px,#39ff00 431.5px)"></i>
<i style="left:142px;background:linear-gradient(#000 270.5px,#200037 283.5px,#3f00a5 305.5px,#3700ff 324.5px,#1a00ff 333.5px,#0004ff 339.5px,#00a4ff 361.5px,#00feff 377.5px,#00ff7d 390.5px,#00ff42 399.5px,#04ff00 423.5px,#16ff00 428.5px,#3f0 429.5px,#39ff00 431.5px)"></i>
<i style="left:143px;background:linear-gradient(#000 264.5px,#08000d 266.5px,#1f0035 271.5px,#3a0086 280.5px,#3c00f0 287.5px,#3800ff 288.5px,#0300ff 304.5px,#0080ff 335.5px,#00f6ff 363.5px,#00fffd 366.5px,#00ff8e 381.5px,#00ff47 395.5px,#04ff00 423.5px,#16ff00 428.5px,#3f0 429.5px,#39ff00 431.5px)"></i>
<i style="left:144px;background:linear-gradient(#000 265.5px,#09000f 267.5px,#270048 274.5px,#39007f 280.5px,#3d00e9 287.5px,#3500ff 289.5px,#0100ff 306.5px,#007cff 335.5px,#00f5ff 363.5px,#00fffd 366.5px,#00ff8b 381.5px,#00ff42 395.5px,#03ff00 422.5px,#17ff00 428.5px,#34ff00 429.5px,#3aff00 431.5px)"></i>
<i style="left:145px;background:linear-gradient(#000 0.5px,#010001 249.5px,#1d0031 262.5px,#3d0097 287.5px,#3900ff 309.5px,#0c00ff 332.5px,#0006ff 385.5px,#002cff 422.5px,#0048ff 428.5px,#0071ff 429.5px,#0079ff 431.5px)"></i>
<i style="left:146px;background:linear-gradient(#000 279.5px,#020003 280.5px,#1b002d 284.5px,#360075 290.5px,#4000c8 302.5px,#3800ff 313.5px,#10f 333.5px,#0006ff 369.5px,#0050ff 423.5px,#0069ff 428.5px,#0091ff 429.5px,#009aff 431.5px)"></i>
<i style="left:147px;background:linear-gradient(#000 265.5px,#180028 275.5px,#3c0091 300.5px,#3b00f4 323.5px,#3400ff 328.5px,#0005ff 354.5px,#00afff 403.5px,#00c8ff 422.5px,#00e5ff 428.5px,#00ffdb 429.5px,#00ffc7 431.5px)"></i>
<i style="left:148px;background:linear-gradient(#000 267.5px,#160025 276.5px,#22003c 281.5px,#30005f 287.5px,#390082 290.5px,#3f00d6 302.5px,#3700ff 311.5px,#0001ff 337.5px,#00a8ff 395.5px,#00c3ff 411.5px,#00d6ff 423.5px,#00efff 428.5px,#00ffc2 429.5px,#00ffad 431.5px)"></i>
<i style="left:149px;background:linear-gradient(#000 260.5px,#09000e 264.5px,#23003e 276.5px,#3f00ab 304.5px,#3600ff 327.5px,#0002ff 355.5px,#00a9ff 404.5px,#00c4ff 423.5px,#0df 428.5px,#00ffef 429.5px,#00ffda 431.5px)"></i>
<i style="left:150px;background:linear-gradient(#000 281.5px,#020003 282.5px,#1a002b 286.5px,#2d0056 290.5px,#3f00a6 302.5px,#3800ff 320.5px,#00f 352.5px,#0098ff 407.5px,#00abff 422.5px,#00c7ff 428.5px,#00f0ff 429.5px,#00f8ff 431.5px)"></i>
<i style="left:151px;background:linear-gradient(#000 0.5px,#000001 261.5px,#160025 270.5px,#3b008d 295.5px,#3b00f2 318.5px,#3700ff 322.5px,#0005ff 349.5px,#00a9ff 395.5px,#00c7ff 409.5px,#00d8ff 422.5px,#00ebff 427.5px,#00f5ff 428.5px,#00ffb4 429.5px,#00ff9f 431.5px)"></i>
<i style="left:152px;background:linear-gradient(#000 0.5px,#010001 247.5px,#240041 269.5px,#34006e 287.5px,#3f00b0 330.5px,#3800ff 342.5px,#0001ff 362.5px,#00abff 399.5px,#00c1ff 408.5px,#00d7ff 423.5px,#00f0ff 428.5px,#00ffbf 429.5px,#0fa 431.5px)"></i>
<i style="left:153px;background:linear-gradient(#000 249.5px,#1b002d 255.5px,#3c0093 268.5px,#3c00f0 279.5px,#3900ff 280.5px,#0100ff 288.5px,#0056ff 302.5px,#00e5ff 335.5px,#00feff 340.5px,#00ff3f 358.5px,#0f0 365.5px,#31ff00 392.5px,#4bff00 423.5px,#5dff00 428.5px,#7aff00 429.5px,#7fff00 431.5px)"></i>
<i style="left:154px;background:linear-gradient(#000 248.5px,#060009 250.5px,#23003f 259.5px,#3e009e 275.5px,#4000b6 279.5px,#3700ff 284.5px,#0e00ff 291.5px,#0006ff 296.5px,#03f 305.5px,#00a9ff 332.5px,#00fffb 347.5px,#00ff3b 363.5px,#01ff00 369.5px,#32ff00 394.5px,#4cff00 423.5px,#5dff00 428.5px,#7aff00 429.5px,#80ff00 431.5px)"></i>
<i style="left:155px;background:linear-gradient(#000 264.5px,#1c0030 276.5px,#250042 280.5px,#3f00a6 287.5px,#3f00cc 290.5px,#3700ff 297.5px,#0005ff 321.5px,#002dff 330.5px,#00d4ff 349.5px,#00fffa 355.5px,#00ff34 367.5px,#02ff00 371.5px,#41ff00 392.5px,#64ff00 424.5px,#73ff00 428.5px,#90ff00 429.5px,#96ff00 431.5px)"></i>
<i style="left:156px;background:linear-gradient(#000 262.5px,#09000e 266.5px,#23003e 278.5px,#2d0057 282.5px,#4000be 289.5px,#3700ff 298.5px,#0004ff 322.5px,#0027ff 330.5px,#00c7ff 348.5px,#00fcff 355.5px,#00ffe3 357.5px,#0f2 369.5px,#00ff06 371.5px,#14ff00 377.5px,#43ff00 395.5px,#5eff00 423.5px,#70ff00 428.5px,#8dff00 429.5px,#93ff00 431.5px)"></i>
<i style="left:157px;background:linear-gradient(#000 265.5px,#140021 273.5px,#260045 281.5px,#310063 286.5px,#3b008e 289.5px,#3d00ea 302.5px,#3700ff 307.5px,#0100ff 330.5px,#00adff 350.5px,#00fcff 361.5px,#00ff2c 376.5px,#01ff00 380.5px,#2bff00 399.5px,#40ff00 423.5px,#52ff00 428.5px,#6fff00 429.5px,#75ff00 431.5px)"></i>
<i style="left:158px;background:linear-gradient(#000 248.5px,#150023 258.5px,#370079 280.5px,#3d0099 283.5px,#3b00f5 289.5px,#3000ff 293.5px,#0100ff 310.5px,#005bff 331.5px,#00e6ff 351.5px,#00feff 355.5px,#00ff4a 369.5px,#0f0 376.5px,#2cff00 398.5px,#42ff00 423.5px,#54ff00 428.5px,#71ff00 429.5px,#7f0 431.5px)"></i>
<i style="left:159px;background:linear-gradient(#000 244.5px,#150023 254.5px,#360075 276.5px,#4000b4 288.5px,#3800ff 298.5px,#0003ff 322.5px,#0026ff 330.5px,#00caff 351.5px,#00feff 359.5px,#00ff4f 372.5px,#0f0 379.5px,#29ff00 399.5px,#3eff00 423.5px,#50ff00 428.5px,#6dff00 429.5px,#73ff00 431.5px)"></i>
<i style="left:160px;background:linear-gradient(#000 246.5px,#1e0033 260.5px,#3d0097 287.5px,#3900fc 315.5px,#0005ff 348.5px,#0af 397.5px,#00c1ff 409.5px,#00d6ff 423.5px,#00efff 428.5px,#00ffc2 429.5px,#00ffad 431.5px)"></i>
<i style="left:161px;background:linear-gradient(#000 270.5px,#180028 280.5px,#3c0090 303.5px,#3b00f2 324.5px,#3600ff 328.5px,#0002ff 353.5px,#0af 399.5px,#00c0ff 411.5px,#00cfff 422.5px,#00e2ff 427.5px,#00ecff 428.5px,#00ffca 429.5px,#00ffb6 431.5px)"></i>
<i style="left:162px;background:linear-gradient(#000 267.5px,#1f0035 280.5px,#3c0091 297.5px,#4000c4 306.5px,#3800ff 318.5px,#1200ff 332.5px,#0003ff 336.5px,#009eff 356.5px,#0ff 372.5px,#00ff80 383.5px,#00ff2c 393.5px,#00ff03 402.5px,#13ff00 423.5px,#24ff00 428.5px,#41ff00 429.5px,#47ff00 431.5px)"></i>
<i style="left:163px;background:linear-gradient(#000 0.5px,#010001 274.5px,#180027 279.5px,#3d0095 287.5px,#3f00b3 289.5px,#3800ff 299.5px,#0003ff 324.5px,#002cff 332.5px,#00bfff 355.5px,#00fdff 367.5px,#00ff67 383.5px,#00ff1f 394.5px,#0f0 403.5px,#15ff00 424.5px,#24ff00 428.5px,#41ff00 429.5px,#47ff00 431.5px)"></i>
<i style="left:164px;background:linear-gradient(#000 243.5px,#1d0032 257.5px,#3b008b 280.5px,#3f00ab 285.5px,#3d00e5 289.5px,#3600ff 293.5px,#0500ff 311.5px,#000cff 316.5px,#004eff 331.5px,#0df 354.5px,#00fffc 361.5px,#00ff70 374.5px,#00ff08 387.5px,#06ff00 392.5px,#23ff00 423.5px,#34ff00 428.5px,#51ff00 429.5px,#57ff00 431.5px)"></i>
<i style="left:165px;background:linear-gradient(#000 256.5px,#07000b 258.5px,#22003c 265.5px,#3e009e 279.5px,#3a00fa 285.5px,#1900ff 291.5px,#00f 298.5px,#0089ff 331.5px,#00e4ff 383.5px,#00fffa 411.5px,#0fd 421.5px,#00ffa3 427.5px,#00ff8c 428.5px,#00ff27 429.5px,#00ff12 431.5px)"></i>
<i style="left:166px;background:linear-gradient(#000 234.5px,#1a002b 246.5px,#3d0095 275.5px,#3f00ab 280.5px,#3800ff 286.5px,#1c00ff 291.5px,#0005ff 300.5px,#08f 333.5px,#00ebff 379.5px,#00fffb 394.5px,#00ffb6 421.5px,#00ff7c 427.5px,#00ff65 428.5px,#0f0 429.5px,#06ff00 431.5px)"></i>
<i style="left:167px;background:linear-gradient(#000 200.5px,#0a0010 205.5px,#22003c 217.5px,#3f00a9 247.5px,#3600ff 272.5px,#2400ff 280.5px,#0200ff 285.5px,#0035ff 290.5px,#007bff 302.5px,#00efff 331.5px,#00fffb 359.5px,#00ffcd 402.5px,#00ffa7 419.5px,#00ff8d 423.5px,#00ff65 427.5px,#00ff4e 428.5px,#07ff00 429.5px,#0cff00 431.5px)"></i>
<i style="left:168px;background:linear-gradient(#000 234.5px,#1c0030 249.5px,#3d0096 282.5px,#3d00ea 330.5px,#3a00fa 331.5px,#0004ff 340.5px,#00afff 356.5px,#0ff 365.5px,#00ff42 375.5px,#00ff02 379.5px,#37ff00 396.5px,#53ff00 423.5px,#65ff00 428.5px,#82ff00 429.5px,#8f0 431.5px)"></i>
<i style="left:169px;background:linear-gradient(#000 268.5px,#010002 269.5px,#1d0032 275.5px,#300060 280.5px,#4000c8 287.5px,#3c00ef 290.5px,#3600ff 293.5px,#0200ff 312.5px,#0049ff 330.5px,#00e9ff 352.5px,#00fff9 356.5px,#00ff54 368.5px,#00ff03 375.5px,#2fff00 397.5px,#46ff00 423.5px,#58ff00 428.5px,#75ff00 429.5px,#7bff00 431.5px)"></i>
<i style="left:170px;background:linear-gradient(#000 248.5px,#150023 258.5px,#370079 280.5px,#3e00e0 287.5px,#3900fe 289.5px,#0300ff 307.5px,#005cff 330.5px,#00f9ff 352.5px,#00fffe 353.5px,#00ff53 365.5px,#0f0 372.5px,#3f0 393.5px,#52ff00 424.5px,#61ff00 428.5px,#7eff00 429.5px,#84ff00 431.5px)"></i>
<i style="left:171px;background:linear-gradient(#000 265.5px,#030004 266.5px,#260045 274.5px,#34006e 279.5px,#3f00d7 286.5px,#3600ff 289.5px,#00f 307.5px,#0061ff 330.5px,#00f7ff 351.5px,#00fdff 352.5px,#00ff32 367.5px,#00ff03 371.5px,#35ff00 393.5px,#54ff00 424.5px,#63ff00 428.5px,#80ff00 429.5px,#86ff00 431.5px)"></i>
<i style="left:172px;background:linear-gradient(#000 266.5px,#020003 267.5px,#1e0034 273.5px,#320065 279.5px,#3f00ce 286.5px,#3900fc 289.5px,#0400ff 307.5px,#0009ff 311.5px,#0063ff 334.5px,#00d6ff 379.5px,#00feff 405.5px,#00ffd5 421.5px,#00ff9b 427.5px,#00ff84 428.5px,#00ff1f 429.5px,#00ff0a 431.5px)"></i>
<i style="left:173px;background:linear-gradient(#000 0.5px,#010001 251.5px,#1f0035 265.5px,#350071 280.5px,#3c0090 283.5px,#3c00eb 289.5px,#3400ff 293.5px,#00f 312.5px,#005cff 336.5px,#00d2ff 381.5px,#00fbff 407.5px,#00fff5 415.5px,#00ffe3 421.5px,#00ffa9 427.5px,#00ff92 428.5px,#00ff2d 429.5px,#00ff18 431.5px)"></i>
<i style="left:174px;background:linear-gradient(#000 269.5px,#240040 277.5px,#2f005e 280.5px,#4000c6 287.5px,#3c00ec 290.5px,#3700ff 293.5px,#0300ff 312.5px,#0023ff 322.5px,#008fff 352.5px,#0ef 387.5px,#00fffb 397.5px,#00ffb9 421.5px,#00ff7f 427.5px,#00ff68 428.5px,#00ff03 429.5px,#05ff00 431.5px)"></i>
<i style="left:175px;background:linear-gradient(#000 265.5px,#09000f 267.5px,#270048 274.5px,#39007f 280.5px,#3d00e9 287.5px,#3500ff 289.5px,#0100ff 306.5px,#0080ff 339.5px,#00eaff 376.5px,#00fff9 387.5px,#00ffc2 402.5px,#00ff91 421.5px,#00ff57 427.5px,#00ff40 428.5px,#0bff00 429.5px,#10ff00 431.5px)"></i>
<i style="left:176px;background:linear-gradient(#000 0.5px,#010001 276.5px,#0f0018 279.5px,#270049 283.5px,#3e009d 289.5px,#3a00fb 302.5px,#0002ff 328.5px,#000bff 341.5px,#0023ff 409.5px,#0038ff 423.5px,#0051ff 428.5px,#007aff 429.5px,#0082ff 431.5px)"></i>
<i style="left:177px;background:linear-gradient(#000 249.5px,#1e0034 262.5px,#38007c 279.5px,#3f00d6 285.5px,#3600ff 288.5px,#0100ff 304.5px,#0085ff 335.5px,#00f8ff 361.5px,#00fffd 363.5px,#00ff7e 379.5px,#00ff32 393.5px,#00ff14 405.5px,#02ff00 415.5px,#1f0 425.5px,#1eff00 428.5px,#3bff00 429.5px,#41ff00 431.5px)"></i>
<i style="left:178px;background:linear-gradient(#000 256.5px,#040006 258.5px,#1f0037 269.5px,#310062 279.5px,#4000ca 286.5px,#3a00f7 289.5px,#3500ff 291.5px,#0600ff 307.5px,#000aff 312.5px,#0062ff 332.5px,#00e6ff 356.5px,#00fff9 362.5px,#00ff73 376.5px,#00ff1f 388.5px,#01ff00 395.5px,#19ff00 423.5px,#2bff00 428.5px,#48ff00 429.5px,#4eff00 431.5px)"></i>
<i style="left:179px;background:linear-gradient(#000 0.5px,#000001 264.5px,#180029 269.5px,#38007b 279.5px,#3f00d6 285.5px,#3600ff 288.5px,#0100ff 304.5px,#008eff 337.5px,#00fcff 363.5px,#00ffe3 367.5px,#00ff70 383.5px,#00ff32 396.5px,#00ff0b 413.5px,#04ff00 414.5px,#1aff00 416.5px,#1bff00 428.5px,#38ff00 429.5px,#3eff00 431.5px)"></i>
<i style="left:180px;background:linear-gradient(#000 265.5px,#09000f 267.5px,#270048 274.5px,#39007f 280.5px,#3d00e9 287.5px,#3500ff 289.5px,#0100ff 306.5px,#007cff 335.5px,#00f4ff 362.5px,#0ff 365.5px,#00ff82 381.5px,#00ff3d 394.5px,#00ff0b 414.5px,#08ff00 415.5px,#12ff00 417.5px,#13ff00 427.5px,#1aff00 428.5px,#37ff00 429.5px,#3dff00 431.5px)"></i>
<i style="left:181px;background:linear-gradient(#000 247.5px,#150023 257.5px,#360076 279.5px,#3e00dd 286.5px,#3900fc 288.5px,#0200ff 305.5px,#0075ff 333.5px,#0ef 359.5px,#00feff 363.5px,#0f7 380.5px,#00ff30 393.5px,#00ff14 403.5px,#04ff00 414.5px,#1f0 415.5px,#15ff00 426.5px,#1fff00 428.5px,#3cff00 429.5px,#42ff00 431.5px)"></i>
<i style="left:182px;background:linear-gradient(#000 264.5px,#010002 265.5px,#19002b 270.5px,#360075 279.5px,#3e00de 286.5px,#3900fd 288.5px,#0100ff 305.5px,#007fff 335.5px,#00f5ff 362.5px,#00fffe 365.5px,#00ff84 381.5px,#00ff40 394.5px,#00ff0d 414.5px,#0aff00 415.5px,#15ff00 416.5px,#19ff00 428.5px,#36ff00 429.5px,#3cff00 431.5px)"></i>
<i style="left:183px;background:linear-gradient(#000 0.5px,#010001 256.5px,#200037 270.5px,#2e005a 279.5px,#4000bf 286.5px,#3c00ec 289.5px,#3700ff 292.5px,#0900ff 308.5px,#0009ff 314.5px,#0062ff 334.5px,#00dfff 360.5px,#0ff 368.5px,#00ff82 384.5px,#00ff3f 397.5px,#00ff13 415.5px,#0f0 417.5px,#0aff00 425.5px,#17ff00 428.5px,#34ff00 429.5px,#39ff00 431.5px)"></i>
<i style="left:184px;background:linear-gradient(#000 0.5px,#010001 265.5px,#21003a 272.5px,#390082 280.5px,#3e00dd 286.5px,#3900fc 288.5px,#0200ff 305.5px,#006bff 331.5px,#00ebff 354.5px,#00feff 358.5px,#00ff64 374.5px,#00ff0d 386.5px,#01ff00 389.5px,#21ff00 423.5px,#3f0 428.5px,#50ff00 429.5px,#56ff00 431.5px)"></i>
<i style="left:185px;background:linear-gradient(#000 248.5px,#020003 249.5px,#1f0037 257.5px,#3e009e 273.5px,#4000c5 279.5px,#3700ff 283.5px,#0700ff 291.5px,#0006ff 294.5px,#003cff 304.5px,#00f7ff 351.5px,#00fffb 354.5px,#00ff75 373.5px,#00ff27 389.5px,#00ff05 403.5px,#1f0 423.5px,#23ff00 428.5px,#40ff00 429.5px,#46ff00 431.5px)"></i>
<i style="left:186px;background:linear-gradient(#000 255.5px,#030004 256.5px,#1e0034 262.5px,#3e009d 275.5px,#4000bf 279.5px,#3900fc 283.5px,#0a00ff 291.5px,#0008ff 295.5px,#04f 307.5px,#00beff 338.5px,#00fffc 361.5px,#00ff8e 381.5px,#00ff54 398.5px,#00ff30 415.5px,#00ff2d 416.5px,#00ff0b 417.5px,#03ff00 418.5px,#08ff00 427.5px,#0fff00 428.5px,#2cff00 429.5px,#31ff00 431.5px)"></i>
<i style="left:187px;background:linear-gradient(#000 266.5px,#140021 274.5px,#21003b 280.5px,#30005f 286.5px,#3b008a 289.5px,#3d00e6 302.5px,#3600ff 308.5px,#0400ff 332.5px,#0009ff 394.5px,#0020ff 421.5px,#0040ff 428.5px,#0069ff 429.5px,#0071ff 431.5px)"></i>
<i style="left:188px;background:linear-gradient(#000 275.5px,#020003 276.5px,#100019 279.5px,#3c0091 288.5px,#3f00af 291.5px,#3900fd 302.5px,#0004ff 328.5px,#000cff 336.5px,#0026ff 409.5px,#0037ff 422.5px,#0053ff 428.5px,#007cff 429.5px,#0084ff 431.5px)"></i>
<i style="left:189px;background:linear-gradient(#000 292.5px,#12001d 301.5px,#1f0036 313.5px,#320068 329.5px,#2a0050 330.5px,#4000bc 370.5px,#3600ff 393.5px,#1b00ff 410.5px,#0a00ff 426.5px,#0200ff 428.5px,#0024ff 429.5px,#002cff 431.5px)"></i>
<i style="left:190px;background:linear-gradient(#000 268.5px,#150022 281.5px,#2a0050 305.5px,#350072 329.5px,#2f005e 330.5px,#4000c6 369.5px,#3600ff 389.5px,#1500ff 411.5px,#0600ff 425.5px,#0006ff 428.5px,#002eff 429.5px,#0037ff 431.5px)"></i>
<i style="left:191px;background:linear-gradient(#000 0.5px,#000001 251.5px,#0b0011 265.5px,#2d0057 302.5px,#38007e 329.5px,#34006f 330.5px,#3f00d7 383.5px,#3600ff 401.5px,#1b00ff 426.5px,#1300ff 428.5px,#0006ff 429.5px,#000eff 431.5px)"></i>
<i style="left:192px;background:linear-gradient(#000 0.5px,#000001 255.5px,#0f0017 267.5px,#23003e 285.5px,#3a0086 329.5px,#370079 330.5px,#3e00e2 372.5px,#3600ff 384.5px,#1000ff 411.5px,#0001ff 426.5px,#000fff 428.5px,#0037ff 429.5px,#0040ff 431.5px)"></i>
<i style="left:193px;background:linear-gradient(#000 284.5px,#160024 288.5px,#1b002e 289.5px,#390082 303.5px,#3d00e7 324.5px,#3700ff 330.5px,#2000ff 416.5px,#1000ff 427.5px,#0b00ff 428.5px,#0015ff 429.5px,#001eff 431.5px)"></i>
<i style="left:194px;background:linear-gradient(#000 265.5px,#1e0034 278.5px,#3d0097 302.5px,#3900fc 326.5px,#1400ff 421.5px,#0200ff 428.5px,#0024ff 429.5px,#002cff 431.5px)"></i>
<i style="left:195px;background:linear-gradient(#000 284.5px,#010002 285.5px,#160025 289.5px,#37007a 304.5px,#3e00e3 326.5px,#3b00f3 330.5px,#3500ff 352.5px,#0b00ff 422.5px,#0100ff 427.5px,#0008ff 428.5px,#0031ff 429.5px,#0039ff 431.5px)"></i>
<i style="left:196px;background:linear-gradient(#000 260.5px,#09000e 264.5px,#23003e 276.5px,#3f00a8 300.5px,#3700ff 320.5px,#1b00ff 331.5px,#0003ff 336.5px,#00a9ff 354.5px,#00fdff 365.5px,#00ff3e 378.5px,#00ff01 383.5px,#27ff00 401.5px,#3bff00 423.5px,#4dff00 428.5px,#69ff00 429.5px,#6fff00 431.5px)"></i>
<i style="left:197px;background:linear-gradient(#000 242.5px,#020003 243.5px,#1d0032 250.5px,#3d0098 265.5px,#3a00f7 279.5px,#2f00ff 281.5px,#0003ff 288.5px,#003bff 296.5px,#0075ff 308.5px,#00e6ff 334.5px,#00fffc 339.5px,#00ff46 355.5px,#00ff02 362.5px,#37ff00 390.5px,#54ff00 423.5px,#65ff00 428.5px,#82ff00 429.5px,#8f0 431.5px)"></i>
<i style="left:198px;background:linear-gradient(#000 215.5px,#0a0010 220.5px,#250042 234.5px,#3f00ab 263.5px,#3d00e5 279.5px,#3900ff 281.5px,#0003ff 290.5px,#004aff 302.5px,#0cf 332.5px,#00feff 340.5px,#00ff1d 357.5px,#02ff00 360.5px,#4f0 386.5px,#60ff00 416.5px,#72ff00 426.5px,#7bff00 428.5px,#98ff00 429.5px,#9eff00 431.5px)"></i>
<i style="left:199px;background:linear-gradient(#000 241.5px,#0b0012 245.5px,#23003e 254.5px,#3f00a6 275.5px,#4000ba 279.5px,#3a00f7 283.5px,#2f00ff 285.5px,#0c00ff 291.5px,#0003ff 295.5px,#0037ff 305.5px,#00acff 332.5px,#00fdff 346.5px,#00ff31 364.5px,#0f0 369.5px,#31ff00 394.5px,#4aff00 423.5px,#5cff00 428.5px,#79ff00 429.5px,#7fff00 431.5px)"></i>
<i style="left:200px;background:linear-gradient(#000 213.5px,#0a0010 218.5px,#250042 232.5px,#3f00aa 261.5px,#3b00f3 280.5px,#2d00ff 283.5px,#00f 290.5px,#004bff 303.5px,#00d1ff 334.5px,#00fffe 343.5px,#00ff43 360.5px,#00ff03 367.5px,#2fff00 394.5px,#48ff00 423.5px,#59ff00 428.5px,#76ff00 429.5px,#7cff00 431.5px)"></i>
<i style="left:201px;background:linear-gradient(#000 0.5px,#010001 242.5px,#200037 267.5px,#390081 304.5px,#3f00a8 329.5px,#3e00a3 331.5px,#3800ff 387.5px,#1200ff 425.5px,#0900ff 428.5px,#0019ff 429.5px,#0021ff 431.5px)"></i>
<i style="left:202px;background:linear-gradient(#000 286.5px,#10001a 290.5px,#2b0052 300.5px,#4000c1 325.5px,#3f00d4 330.5px,#3600ff 369.5px,#0b00ff 424.5px,#0001ff 428.5px,#002aff 429.5px,#0032ff 431.5px)"></i>
<i style="left:203px;background:linear-gradient(#000 0.5px,#010001 252.5px,#23003e 268.5px,#360074 281.5px,#3d0095 286.5px,#4000c2 289.5px,#3900ff 297.5px,#0003ff 321.5px,#0073ff 352.5px,#00daff 389.5px,#00fcff 411.5px,#00fff0 420.5px,#00ffb1 427.5px,#00ff9b 428.5px,#00ff35 429.5px,#00ff20 431.5px)"></i>
<i style="left:204px;background:linear-gradient(#000 231.5px,#200038 247.5px,#3f00a9 278.5px,#3700ff 298.5px,#0004ff 326.5px,#00a3ff 371.5px,#00edff 400.5px,#00fffb 418.5px,#00ffe8 422.5px,#00ffb7 427.5px,#00ffa0 428.5px,#00ff3b 429.5px,#00ff26 431.5px)"></i>
<i style="left:205px;background:linear-gradient(#000 0.5px,#010001 252.5px,#23003e 268.5px,#360074 281.5px,#3e009d 287.5px,#4000c3 290.5px,#3800ff 298.5px,#0002ff 322.5px,#00a2ff 364.5px,#00f7ff 395.5px,#00fff7 402.5px,#00ffc4 421.5px,#00ff8a 427.5px,#00ff73 428.5px,#00ff0e 429.5px,#02ff00 431.5px)"></i>
<i style="left:206px;background:linear-gradient(#000 251.5px,#22003c 267.5px,#350071 280.5px,#3f00d9 287.5px,#3900ff 290.5px,#0600ff 307.5px,#000aff 312.5px,#00a1ff 351.5px,#0ff 384.5px,#00ffb9 400.5px,#00ff83 421.5px,#00ff49 427.5px,#00ff32 428.5px,#0fff00 429.5px,#14ff00 431.5px)"></i>
<i style="left:207px;background:linear-gradient(#000 268.5px,#12001e 272.5px,#29004d 278.5px,#390080 282.5px,#3d00ea 289.5px,#3800ff 292.5px,#0300ff 311.5px,#001bff 319.5px,#0071ff 342.5px,#0df 380.5px,#00fffd 398.5px,#00ffbe 421.5px,#00ff84 427.5px,#00ff6d 428.5px,#00ff08 429.5px,#04ff00 431.5px)"></i>
<i style="left:208px;background:linear-gradient(#000 266.5px,#010002 267.5px,#19002b 272.5px,#310064 279.5px,#3f00cc 286.5px,#3a00fa 289.5px,#0500ff 307.5px,#000cff 312.5px,#0061ff 334.5px,#00cfff 379.5px,#00faff 407.5px,#00fff8 415.5px,#00ffe6 421.5px,#00ffac 427.5px,#00ff95 428.5px,#00ff30 429.5px,#00ff1b 431.5px)"></i>
<i style="left:209px;background:linear-gradient(#000 243.5px,#240041 261.5px,#3e009e 288.5px,#3700ff 323.5px,#0004ff 402.5px,#0024ff 423.5px,#003dff 428.5px,#0065ff 429.5px,#006eff 431.5px)"></i>
<i style="left:210px;background:linear-gradient(#000 283.5px,#040005 284.5px,#1a002c 288.5px,#3a0084 301.5px,#3c00ee 323.5px,#3700ff 327.5px,#0005ff 390.5px,#002fff 411.5px,#0041ff 423.5px,#005aff 428.5px,#0083ff 429.5px,#008bff 431.5px)"></i>
<i style="left:211px;background:linear-gradient(#000 272.5px,#020003 273.5px,#1d0032 279.5px,#3e00a2 287.5px,#4000c8 290.5px,#3900fe 297.5px,#0002ff 321.5px,#00a9ff 363.5px,#00fcff 392.5px,#00ffce 407.5px,#00ffa8 421.5px,#00ff6e 427.5px,#00ff57 428.5px,#04ff00 429.5px,#0aff00 431.5px)"></i>
<i style="left:212px;background:linear-gradient(#000 261.5px,#09000e 265.5px,#23003e 277.5px,#300062 283.5px,#4000ba 289.5px,#3900ff 298.5px,#0005ff 323.5px,#008aff 361.5px,#00e2ff 394.5px,#00fffb 418.5px,#00ffe8 422.5px,#00ffb7 427.5px,#00ffa0 428.5px,#00ff3b 429.5px,#00ff26 431.5px)"></i>
<i style="left:213px;background:linear-gradient(#000 277.5px,#08000d 279.5px,#21003b 283.5px,#3b008e 289.5px,#3d00ea 302.5px,#3700ff 307.5px,#0300ff 331.5px,#01f 404.5px,#0027ff 422.5px,#04f 428.5px,#006cff 429.5px,#0075ff 431.5px)"></i>
<i style="left:214px;background:linear-gradient(#000 279.5px,#040005 280.5px,#1c0030 284.5px,#350072 289.5px,#3f00cc 302.5px,#3600ff 313.5px,#0f00ff 333.5px,#0005ff 375.5px,#003bff 422.5px,#0058ff 428.5px,#0080ff 429.5px,#0089ff 431.5px)"></i>
<i style="left:215px;background:linear-gradient(#000 233.5px,#240040 251.5px,#3f00a6 279.5px,#3700ff 311.5px,#1700ff 332.5px,#0001ff 339.5px,#009fff 369.5px,#00f8ff 392.5px,#00fffa 395.5px,#00ffcd 404.5px,#00ff9f 421.5px,#00ff65 427.5px,#00ff4e 428.5px,#07ff00 429.5px,#0cff00 431.5px)"></i>
<i style="left:216px;background:linear-gradient(#000 199.5px,#1a002c 206.5px,#3c0090 217.5px,#3b00f5 228.5px,#3500ff 230.5px,#00f 243.5px,#004aff 254.5px,#00c9ff 279.5px,#00faff 283.5px,#00ffec 284.5px,#00ff50 289.5px,#00ff06 294.5px,#0dff00 300.5px,#53ff00 378.5px,#68ff00 421.5px,#7fff00 428.5px,#9cff00 429.5px,#a2ff00 431.5px)"></i>
<i style="left:217px;background:linear-gradient(#000 168.5px,#0b0012 172.5px,#23003e 181.5px,#3f00a7 202.5px,#3f00d2 209.5px,#3800ff 215.5px,#00f 231.5px,#0084ff 253.5px,#00ecff 279.5px,#00f8ff 280.5px,#00fff2 281.5px,#00ff18 288.5px,#02ff00 289.5px,#26ff00 300.5px,#46ff00 340.5px,#59ff00 414.5px,#6aff00 425.5px,#76ff00 428.5px,#93ff00 429.5px,#9f0 431.5px)"></i>
<i style="left:218px;background:linear-gradient(#000 199.5px,#1a002b 206.5px,#3d0098 218.5px,#3900fc 229.5px,#0005ff 244.5px,#004cff 255.5px,#00c4ff 279.5px,#00f6ff 283.5px,#00fff7 284.5px,#00ff5c 289.5px,#0f1 294.5px,#0f0 296.5px,#19ff00 316.5px,#42ff00 377.5px,#52ff00 418.5px,#65ff00 427.5px,#6cff00 428.5px,#89ff00 429.5px,#8fff00 431.5px)"></i>
<i style="left:219px;background:linear-gradient(#000 225.5px,#030005 226.5px,#1d0033 230.5px,#3c008f 238.5px,#3b00f6 247.5px,#3200ff 249.5px,#0002ff 263.5px,#006bff 279.5px,#0ef 290.5px,#00fffc 293.5px,#00ffbd 300.5px,#00ff54 330.5px,#0f0 338.5px,#50ff00 372.5px,#70ff00 401.5px,#83ff00 423.5px,#95ff00 428.5px,#b2ff00 429.5px,#b8ff00 431.5px)"></i>
<i style="left:220px;background:linear-gradient(#000 218.5px,#030005 219.5px,#1a002b 223.5px,#3e009e 235.5px,#3900fd 245.5px,#0002ff 262.5px,#005eff 279.5px,#00daff 289.5px,#0ff 296.5px,#00ffdc 301.5px,#00ff76 330.5px,#01ff00 342.5px,#48ff00 375.5px,#64ff00 403.5px,#79ff00 424.5px,#8f0 428.5px,#a5ff00 429.5px,#abff00 431.5px)"></i>
<i style="left:221px;background:linear-gradient(#000 182.5px,#0a0010 187.5px,#200038 198.5px,#300061 208.5px,#4000c7 224.5px,#3800ff 233.5px,#0001ff 254.5px,#004eff 280.5px,#00c2ff 290.5px,#00e7ff 298.5px,#00fffc 314.5px,#00ffc2 330.5px,#00ff13 348.5px,#00ff01 350.5px,#3dff00 382.5px,#61ff00 423.5px,#72ff00 428.5px,#8fff00 429.5px,#95ff00 431.5px)"></i>
<i style="left:222px;background:linear-gradient(#000 0.5px,#000001 217.5px,#1e0033 223.5px,#3d0099 235.5px,#3900fe 247.5px,#0001ff 268.5px,#03f 279.5px,#00afff 289.5px,#00d7ff 297.5px,#00f7ff 316.5px,#00fff9 324.5px,#00ffe0 330.5px,#00ff0e 347.5px,#02ff00 349.5px,#4dff00 379.5px,#68ff00 403.5px,#7dff00 424.5px,#8cff00 428.5px,#a9ff00 429.5px,#afff00 431.5px)"></i>
<i style="left:223px;background:linear-gradient(#000 180.5px,#09000e 184.5px,#270047 198.5px,#360076 208.5px,#3f00d6 222.5px,#3900ff 228.5px,#0003ff 247.5px,#0026ff 255.5px,#0074ff 279.5px,#00f7ff 290.5px,#00fff5 292.5px,#00ffd0 295.5px,#00ffa3 301.5px,#00ff3f 330.5px,#0f0 337.5px,#46ff00 371.5px,#64ff00 401.5px,#7f0 423.5px,#89ff00 428.5px,#a6ff00 429.5px,#acff00 431.5px)"></i>
<i style="left:224px;background:linear-gradient(#000 217.5px,#020004 218.5px,#1e0034 223.5px,#3e009e 234.5px,#3900fe 244.5px,#0300ff 259.5px,#0069ff 279.5px,#00e5ff 289.5px,#00feff 293.5px,#00ffbf 301.5px,#00ff5b 330.5px,#01ff00 341.5px,#41ff00 377.5px,#68ff00 423.5px,#7aff00 428.5px,#97ff00 429.5px,#9cff00 431.5px)"></i>
<i style="left:225px;background:linear-gradient(#000 186.5px,#09000e 190.5px,#23003e 202.5px,#2e005c 208.5px,#4000c2 223.5px,#3900ff 232.5px,#0005ff 252.5px,#005bff 279.5px,#00d8ff 289.5px,#00fcff 296.5px,#00ffda 303.5px,#00ff7c 330.5px,#01ff00 344.5px,#42ff00 378.5px,#69ff00 423.5px,#7bff00 428.5px,#98ff00 429.5px,#9eff00 431.5px)"></i>
<i style="left:226px;background:linear-gradient(#000 220.5px,#210039 226.5px,#3d009a 236.5px,#3a00fa 246.5px,#0003ff 264.5px,#05f 279.5px,#00d1ff 289.5px,#00f9ff 297.5px,#00ffd7 309.5px,#00ff8d 330.5px,#00ff04 343.5px,#4aff00 377.5px,#64ff00 404.5px,#79ff00 424.5px,#8f0 428.5px,#a5ff00 429.5px,#abff00 431.5px)"></i>
<i style="left:227px;background:linear-gradient(#000 234.5px,#19002a 238.5px,#3b0089 247.5px,#3f00d1 255.5px,#3800ff 261.5px,#0003ff 277.5px,#001dff 280.5px,#0094ff 290.5px,#00c5ff 300.5px,#00fffa 326.5px,#00ffe4 331.5px,#00ffb1 394.5px,#00ffa7 407.5px,#00ff80 421.5px,#00ff46 427.5px,#00ff30 428.5px,#0fff00 429.5px,#15ff00 431.5px)"></i>
<i style="left:228px;background:linear-gradient(#000 227.5px,#1d0033 232.5px,#3e009c 242.5px,#3700ff 252.5px,#00f 268.5px,#004aff 279.5px,#00c7ff 289.5px,#0ff 300.5px,#00ff38 334.5px,#01ff00 343.5px,#36ff00 383.5px,#50ff00 422.5px,#65ff00 428.5px,#82ff00 429.5px,#8f0 431.5px)"></i>
<i style="left:229px;background:linear-gradient(#000 221.5px,#050007 222.5px,#21003a 227.5px,#3e00a0 237.5px,#3900ff 246.5px,#0001ff 261.5px,#07f 279.5px,#00f4ff 289.5px,#00fffc 291.5px,#00ffc4 295.5px,#00ff89 301.5px,#0f0 325.5px,#36ff00 374.5px,#4fff00 421.5px,#6f0 428.5px,#83ff00 429.5px,#89ff00 431.5px)"></i>
<i style="left:230px;background:linear-gradient(#000 184.5px,#050007 186.5px,#23003e 197.5px,#3a0086 210.5px,#3d00e6 224.5px,#3800ff 228.5px,#0004ff 247.5px,#006aff 271.5px,#008aff 279.5px,#00faff 288.5px,#00ff97 295.5px,#00ff5c 301.5px,#01ff00 318.5px,#36ff00 359.5px,#5eff00 422.5px,#72ff00 428.5px,#8fff00 429.5px,#95ff00 431.5px)"></i>
<i style="left:231px;background:linear-gradient(#000 221.5px,#1b002f 226.5px,#3d0096 237.5px,#3900fe 248.5px,#0004ff 265.5px,#0058ff 279.5px,#00dbff 290.5px,#00fffd 297.5px,#00ffd8 301.5px,#00ff20 334.5px,#01ff00 342.5px,#29ff00 392.5px,#3bff00 422.5px,#50ff00 428.5px,#6dff00 429.5px,#73ff00 431.5px)"></i>
<i style="left:232px;background:linear-gradient(#000 226.5px,#0c0013 228.5px,#270047 233.5px,#3f00b1 243.5px,#3700ff 251.5px,#0002ff 267.5px,#005eff 280.5px,#00cfff 289.5px,#00feff 298.5px,#00ffd5 304.5px,#01ff00 341.5px,#35ff00 385.5px,#4cff00 422.5px,#61ff00 428.5px,#7eff00 429.5px,#84ff00 431.5px)"></i>
<i style="left:233px;background:linear-gradient(#000 233.5px,#010002 234.5px,#1e0033 243.5px,#34006e 255.5px,#3f00d1 283.5px,#3b00f3 296.5px,#3500ff 325.5px,#0004ff 404.5px,#001cff 422.5px,#0038ff 428.5px,#0061ff 429.5px,#0069ff 431.5px)"></i>
<i style="left:234px;background:linear-gradient(#000 283.5px,#030004 284.5px,#19002a 288.5px,#390081 301.5px,#3d00e7 322.5px,#3600ff 328.5px,#0004ff 396.5px,#001fff 411.5px,#002eff 422.5px,#004aff 428.5px,#0073ff 429.5px,#007bff 431.5px)"></i>
<i style="left:235px;background:linear-gradient(#000 261.5px,#09000e 265.5px,#23003e 277.5px,#3f00a5 306.5px,#3a00f8 331.5px,#3000ff 352.5px,#0003ff 421.5px,#0023ff 428.5px,#004cff 429.5px,#0054ff 431.5px)"></i>
<i style="left:236px;background:linear-gradient(#000 269.5px,#180029 279.5px,#2b0052 286.5px,#38007c 289.5px,#3f00d7 302.5px,#3600ff 311.5px,#0b00ff 332.5px,#0006ff 398.5px,#0020ff 422.5px,#003dff 428.5px,#0065ff 429.5px,#006eff 431.5px)"></i>
<i style="left:237px;background:linear-gradient(#000 251.5px,#21003b 267.5px,#3e009d 293.5px,#3900ff 319.5px,#2600ff 334.5px,#0100ff 420.5px,#0017ff 427.5px,#0020ff 428.5px,#0048ff 429.5px,#0050ff 431.5px)"></i>
<i style="left:238px;background:linear-gradient(#000 277.5px,#07000b 279.5px,#200039 283.5px,#3b008b 289.5px,#3c00ed 303.5px,#3600ff 308.5px,#0400ff 331.5px,#000aff 394.5px,#0025ff 422.5px,#0041ff 428.5px,#006aff 429.5px,#0072ff 431.5px)"></i>
<i style="left:239px;background:linear-gradient(#000 280.5px,#0b0011 282.5px,#28004b 287.5px,#34006d 290.5px,#4000bf 302.5px,#3800ff 315.5px,#1600ff 332.5px,#0005ff 410.5px,#0015ff 422.5px,#0032ff 428.5px,#005aff 429.5px,#0062ff 431.5px)"></i>
<i style="left:240px;background:linear-gradient(#000 277.5px,#08000d 279.5px,#21003b 283.5px,#3b008e 289.5px,#3d00ea 302.5px,#3700ff 307.5px,#0200ff 332.5px,#002eff 399.5px,#004bff 422.5px,#0068ff 428.5px,#0090ff 429.5px,#09f 431.5px)"></i>
<i style="left:241px;background:linear-gradient(#000 277.5px,#09000f 279.5px,#22003d 283.5px,#3d0098 290.5px,#3c00ed 302.5px,#3500ff 307.5px,#0100ff 332.5px,#0046ff 401.5px,#0063ff 422.5px,#007fff 428.5px,#00a8ff 429.5px,#00b0ff 431.5px)"></i>
<i style="left:242px;background:linear-gradient(#000 281.5px,#020003 282.5px,#1a002b 286.5px,#2d0056 290.5px,#3f00a6 302.5px,#3800ff 320.5px,#1f00ff 335.5px,#0004ff 378.5px,#003eff 411.5px,#0051ff 423.5px,#006aff 428.5px,#0092ff 429.5px,#009bff 431.5px)"></i>
<i style="left:243px;background:linear-gradient(#000 0.5px,#010001 247.5px,#1a002b 268.5px,#390080 313.5px,#3d0098 329.5px,#3c0090 331.5px,#3b00f5 393.5px,#3200ff 403.5px,#1e00ff 425.5px,#1400ff 428.5px,#0005ff 429.5px,#000dff 431.5px)"></i>
<i style="left:244px;background:linear-gradient(#000 289.5px,#19002a 299.5px,#1d0032 301.5px,#390080 323.5px,#3d009a 329.5px,#3d0095 331.5px,#3a00f9 384.5px,#2700ff 402.5px,#0e00ff 426.5px,#0600ff 428.5px,#001dff 429.5px,#0026ff 431.5px)"></i>
<i style="left:245px;background:linear-gradient(#000 269.5px,#1a002b 280.5px,#3b008a 310.5px,#4000c3 330.5px,#3600ff 380.5px,#10f 424.5px,#0600ff 428.5px,#001eff 429.5px,#0027ff 431.5px)"></i>
<i style="left:246px;background:linear-gradient(#000 270.5px,#12001d 274.5px,#260045 279.5px,#3f00aa 286.5px,#3f00d8 289.5px,#3900fe 294.5px,#00f 316.5px,#0058ff 339.5px,#00ceff 380.5px,#00fbff 405.5px,#00fff7 412.5px,#0fd 421.5px,#00ffa3 427.5px,#00ff8c 428.5px,#00ff27 429.5px,#00ff12 431.5px)"></i>
<i style="left:247px;background:linear-gradient(#000 0.5px,#000001 226.5px,#1c002f 239.5px,#3d0095 267.5px,#3900fe 299.5px,#0900ff 331.5px,#0005ff 334.5px,#0098ff 356.5px,#0ff 376.5px,#00ff87 389.5px,#00ff4b 399.5px,#00ff10 421.5px,#01ff00 423.5px,#13ff00 428.5px,#30ff00 429.5px,#35ff00 431.5px)"></i>
<i style="left:248px;background:linear-gradient(#000 186.5px,#0a0010 191.5px,#200038 202.5px,#3f00a7 233.5px,#3800ff 258.5px,#0003ff 289.5px,#007fff 317.5px,#00d2ff 339.5px,#00fffb 355.5px,#00ff83 376.5px,#00ff40 394.5px,#0f1 416.5px,#08ff00 424.5px,#17ff00 428.5px,#34ff00 429.5px,#39ff00 431.5px)"></i>
<i style="left:249px;background:linear-gradient(#000 0.5px,#000001 226.5px,#1c002f 239.5px,#3d0095 267.5px,#4000c8 280.5px,#3700ff 284.5px,#0e00ff 291.5px,#0006ff 296.5px,#03f 305.5px,#00aeff 336.5px,#00fffd 367.5px,#00ff9e 387.5px,#00ff75 402.5px,#00ff45 421.5px,#03ff00 428.5px,#20ff00 429.5px,#26ff00 431.5px)"></i>
<i style="left:250px;background:linear-gradient(#000 246.5px,#010002 247.5px,#150023 251.5px,#3b0089 264.5px,#3b00f3 277.5px,#2f00ff 280.5px,#0002ff 287.5px,#0021ff 290.5px,#0067ff 302.5px,#00e3ff 333.5px,#00fffb 345.5px,#00ff85 368.5px,#00ff3c 389.5px,#00ff10 412.5px,#01ff00 420.5px,#1aff00 428.5px,#37ff00 429.5px,#3dff00 431.5px)"></i>
<i style="left:251px;background:linear-gradient(#000 279.5px,#020003 280.5px,#1b002d 284.5px,#360075 290.5px,#4000c8 302.5px,#3800ff 313.5px,#0300ff 340.5px,#005fff 378.5px,#00a5ff 408.5px,#0bf 423.5px,#00d4ff 428.5px,#00fcff 429.5px,#00fff1 431.5px)"></i>
<i style="left:252px;background:linear-gradient(#000 242.5px,#1a002b 254.5px,#3d0098 282.5px,#3b00f6 299.5px,#30f 303.5px,#0004ff 326.5px,#0018ff 334.5px,#0093ff 422.5px,#00b0ff 428.5px,#00d8ff 429.5px,#00e1ff 431.5px)"></i>
<i style="left:253px;background:linear-gradient(#000 274.5px,#160025 279.5px,#3c0093 287.5px,#4000b8 290.5px,#3900fd 299.5px,#0005ff 325.5px,#0020ff 334.5px,#00a0ff 410.5px,#00b4ff 423.5px,#00cdff 428.5px,#00f6ff 429.5px,#00feff 431.5px)"></i>
<i style="left:254px;background:linear-gradient(#000 276.5px,#08000c 278.5px,#13001f 280.5px,#3b008a 288.5px,#3f00af 292.5px,#3b00f5 302.5px,#3400ff 306.5px,#0004ff 330.5px,#0094ff 411.5px,#00a3ff 422.5px,#00b6ff 427.5px,#00c0ff 428.5px,#00e8ff 429.5px,#00f0ff 431.5px)"></i>
<i style="left:255px;background:linear-gradient(#000 268.5px,#09000e 272.5px,#1c0030 280.5px,#29004e 284.5px,#3e009c 290.5px,#3b00f1 302.5px,#3600ff 306.5px,#0003ff 331.5px,#008eff 410.5px,#00a2ff 423.5px,#0bf 428.5px,#00e4ff 429.5px,#00ecff 431.5px)"></i>
<i style="left:256px;background:linear-gradient(#000 0.5px,#010001 249.5px,#1d0031 262.5px,#38007e 281.5px,#3e009e 286.5px,#3f00d2 290.5px,#3800ff 296.5px,#0002ff 319.5px,#002fff 331.5px,#009cff 422.5px,#00b9ff 428.5px,#00e1ff 429.5px,#00eaff 431.5px)"></i>
<i style="left:257px;background:linear-gradient(#000 220.5px,#22003d 232.5px,#3e009f 251.5px,#3700ff 279.5px,#1b00ff 302.5px,#0005ff 344.5px,#0079ff 413.5px,#0089ff 423.5px,#00a2ff 428.5px,#00cbff 429.5px,#00d3ff 431.5px)"></i>
<i style="left:258px;background:linear-gradient(#000 206.5px,#210039 215.5px,#3e00a1 231.5px,#3700ff 246.5px,#0005ff 271.5px,#0024ff 279.5px,#00a7ff 290.5px,#0df 301.5px,#0ff 314.5px,#00ff8d 331.5px,#00ff04 348.5px,#38ff00 384.5px,#57ff00 423.5px,#69ff00 428.5px,#86ff00 429.5px,#8cff00 431.5px)"></i>
<i style="left:259px;background:linear-gradient(#000 187.5px,#200038 203.5px,#3f00a5 225.5px,#3800ff 243.5px,#0002ff 275.5px,#0019ff 281.5px,#0042ff 285.5px,#007aff 290.5px,#00b3ff 302.5px,#00fffd 331.5px,#00ff58 351.5px,#00ff02 364.5px,#26ff00 396.5px,#3bff00 423.5px,#4dff00 428.5px,#69ff00 429.5px,#6fff00 431.5px)"></i>
<i style="left:260px;background:linear-gradient(#000 169.5px,#0a0010 174.5px,#250042 188.5px,#3c0092 209.5px,#3b00f4 228.5px,#3700ff 231.5px,#0001ff 257.5px,#004cff 281.5px,#00acff 289.5px,#00e8ff 301.5px,#00fffd 310.5px,#00ff26 344.5px,#01ff00 352.5px,#2bff00 394.5px,#40ff00 423.5px,#52ff00 428.5px,#6fff00 429.5px,#75ff00 431.5px)"></i>
<i style="left:261px;background:linear-gradient(#000 187.5px,#200038 203.5px,#3f00a5 225.5px,#3800ff 243.5px,#0002ff 275.5px,#0019ff 281.5px,#0079ff 289.5px,#00b6ff 301.5px,#0ff 329.5px,#00ff31 350.5px,#01ff00 356.5px,#37ff00 387.5px,#5f0 423.5px,#67ff00 428.5px,#84ff00 429.5px,#8aff00 431.5px)"></i>
<i style="left:262px;background:linear-gradient(#000 206.5px,#1e0033 215.5px,#3d009b 233.5px,#3900fc 250.5px,#0300ff 279.5px,#07f 289.5px,#00b3ff 301.5px,#00fffd 330.5px,#00ff4c 348.5px,#0f0 357.5px,#36ff00 389.5px,#51ff00 423.5px,#63ff00 428.5px,#80ff00 429.5px,#86ff00 431.5px)"></i>
<i style="left:263px;background:linear-gradient(#000 0.5px,#010001 221.5px,#240040 232.5px,#3f00a7 250.5px,#3700ff 272.5px,#2300ff 280.5px,#00f 285.5px,#0037ff 290.5px,#006eff 301.5px,#00dcff 341.5px,#00fffa 354.5px,#00ff7e 376.5px,#00ff3d 394.5px,#00ff16 413.5px,#06ff00 423.5px,#17ff00 428.5px,#34ff00 429.5px,#3aff00 431.5px)"></i>
<i style="left:264px;background:linear-gradient(#000 240.5px,#020002 241.5px,#1e0034 247.5px,#3b008c 259.5px,#3b00f2 274.5px,#3500ff 277.5px,#1400ff 283.5px,#0002ff 286.5px,#002dff 290.5px,#0064ff 301.5px,#00c4ff 336.5px,#00fffe 355.5px,#00ff89 374.5px,#00ff41 391.5px,#02ff00 421.5px,#19ff00 428.5px,#36ff00 429.5px,#3cff00 431.5px)"></i>
<i style="left:265px;background:linear-gradient(#000 253.5px,#1c002f 259.5px,#3e00a0 273.5px,#3f00d2 279.5px,#3800ff 282.5px,#0400ff 290.5px,#001eff 296.5px,#005cff 309.5px,#00d9ff 341.5px,#00fffa 354.5px,#00ff82 373.5px,#00ff35 391.5px,#02ff00 417.5px,#16ff00 427.5px,#1cff00 428.5px,#39ff00 429.5px,#3fff00 431.5px)"></i>
<i style="left:266px;background:linear-gradient(#000 269.5px,#09000e 273.5px,#1c0031 281.5px,#38007d 295.5px,#4000b9 305.5px,#3600ff 320.5px,#1e00ff 334.5px,#0005ff 384.5px,#0035ff 416.5px,#0046ff 424.5px,#005bff 428.5px,#0084ff 429.5px,#008cff 431.5px)"></i>
<i style="left:267px;background:linear-gradient(#000 269.5px,#180028 279.5px,#2d0057 288.5px,#4000b6 301.5px,#3800ff 316.5px,#1800ff 332.5px,#0004ff 416.5px,#0016ff 424.5px,#002bff 428.5px,#0053ff 429.5px,#005cff 431.5px)"></i>
<i style="left:268px;background:linear-gradient(#000 0.5px,#000001 255.5px,#08000c 266.5px,#1b002e 285.5px,#30005f 313.5px,#360076 329.5px,#310063 330.5px,#4000c5 394.5px,#3d00ea 413.5px,#3200ff 426.5px,#2b00ff 428.5px,#1500ff 429.5px,#1000ff 431.5px)"></i>
<i style="left:269px;background:linear-gradient(#000 0.5px,#000001 293.5px,#0e0017 300.5px,#1c0030 314.5px,#2d0059 329.5px,#1f0036 330.5px,#3d0098 394.5px,#4000bd 413.5px,#3f00d1 423.5px,#3c00f0 428.5px,#2900ff 429.5px,#2400ff 431.5px)"></i>
<i style="left:270px;background:linear-gradient(#000 234.5px,#020003 235.5px,#200037 243.5px,#3e00a0 259.5px,#3800ff 274.5px,#20f 280.5px,#00f 285.5px,#0032ff 289.5px,#007fff 302.5px,#00feff 334.5px,#0f6 360.5px,#00ff0f 381.5px,#01ff00 388.5px,#18ff00 422.5px,#2cff00 428.5px,#49ff00 429.5px,#4fff00 431.5px)"></i>
<i style="left:271px;background:linear-gradient(#000 0.5px,#010001 202.5px,#1b002f 222.5px,#3d0095 267.5px,#3f00cf 296.5px,#3700ff 328.5px,#1f00ff 334.5px,#00f 340.5px,#009fff 360.5px,#00fcff 375.5px,#00ff70 388.5px,#00ff2c 397.5px,#0f1 405.5px,#02ff00 414.5px,#12ff00 425.5px,#1fff00 428.5px,#3cff00 429.5px,#42ff00 431.5px)"></i>
<i style="left:272px;background:linear-gradient(#000 234.5px,#0a0010 239.5px,#22003c 251.5px,#3f00a9 281.5px,#3700ff 309.5px,#1500ff 337.5px,#0005ff 372.5px,#0047ff 416.5px,#0058ff 424.5px,#006dff 428.5px,#0096ff 429.5px,#009eff 431.5px)"></i>
<i style="left:273px;background:linear-gradient(#000 285.5px,#150022 289.5px,#350071 303.5px,#3f00d8 325.5px,#3c00ef 331.5px,#3600ff 342.5px,#0004ff 395.5px,#0025ff 409.5px,#0039ff 423.5px,#0052ff 428.5px,#007bff 429.5px,#0083ff 431.5px)"></i>
<i style="left:274px;background:linear-gradient(#000 0.5px,#010001 270.5px,#21003b 284.5px,#3e009c 306.5px,#3800ff 328.5px,#0004ff 399.5px,#001aff 412.5px,#002cff 423.5px,#0045ff 428.5px,#006dff 429.5px,#0076ff 431.5px)"></i>
<i style="left:275px;background:linear-gradient(#000 281.5px,#0a0010 283.5px,#270048 288.5px,#370078 294.5px,#3f00b2 303.5px,#3700ff 319.5px,#1d00ff 334.5px,#0004ff 386.5px,#0030ff 418.5px,#004bff 427.5px,#05f 428.5px,#007dff 429.5px,#0085ff 431.5px)"></i>
<i style="left:276px;background:linear-gradient(#000 279.5px,#030004 280.5px,#1b002e 284.5px,#370076 290.5px,#4000ca 302.5px,#3800ff 313.5px,#1000ff 333.5px,#0005ff 369.5px,#0049ff 422.5px,#0065ff 428.5px,#008eff 429.5px,#0096ff 431.5px)"></i>
<i style="left:277px;background:linear-gradient(#000 247.5px,#0a0010 252.5px,#240040 265.5px,#3f00a8 293.5px,#3700ff 318.5px,#2300ff 334.5px,#0005ff 411.5px,#0014ff 422.5px,#0027ff 427.5px,#0031ff 428.5px,#0059ff 429.5px,#0061ff 431.5px)"></i>
<i style="left:278px;background:linear-gradient(#000 282.5px,#09000f 284.5px,#1b002d 287.5px,#28004b 290.5px,#3d0099 302.5px,#3900fc 322.5px,#0004ff 356.5px,#0098ff 407.5px,#00abff 422.5px,#00c7ff 428.5px,#00f0ff 429.5px,#00f8ff 431.5px)"></i>
<i style="left:279px;background:linear-gradient(#000 251.5px,#22003c 267.5px,#3a0084 288.5px,#3d00e9 324.5px,#3500ff 334.5px,#0003ff 365.5px,#0089ff 406.5px,#00a1ff 423.5px,#00baff 428.5px,#00e2ff 429.5px,#00ebff 431.5px)"></i>
<i style="left:280px;background:linear-gradient(#000 0.5px,#010001 269.5px,#1f0037 282.5px,#3d009a 303.5px,#3900fb 323.5px,#0002ff 352.5px,#00acff 403.5px,#00c6ff 422.5px,#00e2ff 428.5px,#00ffe1 429.5px,#0fc 431.5px)"></i>
<i style="left:281px;background:linear-gradient(#000 284.5px,#0f0018 287.5px,#1a002d 289.5px,#390080 303.5px,#3d00ea 325.5px,#3800ff 330.5px,#0004ff 365.5px,#0087ff 407.5px,#009aff 422.5px,#00adff 427.5px,#00b7ff 428.5px,#00dfff 429.5px,#00e7ff 431.5px)"></i>
<i style="left:282px;background:linear-gradient(#000 258.5px,#200037 272.5px,#3e009e 299.5px,#3800ff 325.5px,#0003ff 403.5px,#001dff 422.5px,#0030ff 427.5px,#003aff 428.5px,#0062ff 429.5px,#006aff 431.5px)"></i>
<i style="left:283px;background:linear-gradient(#000 0.5px,#010001 287.5px,#0d0014 290.5px,#23003e 298.5px,#3f00aa 323.5px,#3f00ce 332.5px,#3600ff 347.5px,#0002ff 379.5px,#005eff 403.5px,#006eff 411.5px,#0080ff 423.5px,#09f 428.5px,#00c2ff 429.5px,#00caff 431.5px)"></i>
<i style="left:284px;background:linear-gradient(#000 293.5px,#0e0017 301.5px,#19002b 313.5px,#2b0052 329.5px,#19002a 330.5px,#3d0095 348.5px,#3900fe 365.5px,#0001ff 385.5px,#07f 405.5px,#0090ff 423.5px,#00a9ff 428.5px,#00d2ff 429.5px,#00daff 431.5px)"></i>
<i style="left:285px;background:linear-gradient(#000 0.5px,#000001 293.5px,#0e0017 300.5px,#1c0030 314.5px,#2d0059 329.5px,#200038 330.5px,#3e00a0 347.5px,#3900fd 362.5px,#0005ff 383.5px,#0080ff 405.5px,#09f 423.5px,#00b2ff 428.5px,#00dbff 429.5px,#00e3ff 431.5px)"></i>
<i style="left:286px;background:linear-gradient(#000 0.5px,#010001 263.5px,#1b002e 284.5px,#33006a 319.5px,#370078 329.5px,#320067 330.5px,#4000cb 351.5px,#3700ff 362.5px,#0003ff 386.5px,#005bff 403.5px,#0069ff 407.5px,#0080ff 423.5px,#09f 428.5px,#00c2ff 429.5px,#00caff 431.5px)"></i>
<i style="left:287px;background:linear-gradient(#000 291.5px,#150023 301.5px,#240041 313.5px,#370079 329.5px,#33006b 330.5px,#3f00ce 346.5px,#3800ff 354.5px,#0003ff 375.5px,#0097ff 405.5px,#00acff 422.5px,#00bfff 427.5px,#00c9ff 428.5px,#00f1ff 429.5px,#00f9ff 431.5px)"></i>
<i style="left:288px;background:linear-gradient(#000 0.5px,#010001 291.5px,#170026 301.5px,#230040 311.5px,#390080 329.5px,#360074 330.5px,#3f00d7 348.5px,#3700ff 356.5px,#0005ff 379.5px,#0085ff 406.5px,#09f 422.5px,#00b5ff 428.5px,#00deff 429.5px,#00e6ff 431.5px)"></i>
<i style="left:289px;background:linear-gradient(#000 246.5px,#160025 266.5px,#310062 296.5px,#3d0096 329.5px,#3c008e 330.5px,#3b00f5 347.5px,#3200ff 351.5px,#0001ff 370.5px,#00a1ff 405.5px,#00b6ff 422.5px,#00d3ff 428.5px,#00fbff 429.5px,#00fff4 431.5px)"></i>
<i style="left:290px;background:linear-gradient(#000 0.5px,#010001 293.5px,#0f0018 300.5px,#1e0034 315.5px,#2e005c 329.5px,#22003c 330.5px,#3f00ab 376.5px,#3800ff 403.5px,#2100ff 425.5px,#1800ff 428.5px,#0100ff 429.5px,#0006ff 431.5px)"></i>
<i style="left:291px;background:linear-gradient(#000 292.5px,#11001c 300.5px,#200038 313.5px,#33006b 329.5px,#2c0056 330.5px,#4000c0 371.5px,#3600ff 393.5px,#1d00ff 409.5px,#0d00ff 425.5px,#0400ff 428.5px,#02f 429.5px,#002aff 431.5px)"></i>
<i style="left:292px;background:linear-gradient(#000 293.5px,#0d0014 300.5px,#19002a 314.5px,#260046 327.5px,#29004c 329.5px,#11001c 330.5px,#2c0054 348.5px,#4000c3 380.5px,#3600ff 396.5px,#1e00ff 408.5px,#0d00ff 425.5px,#0400ff 428.5px,#02f 429.5px,#002aff 431.5px)"></i>
<i style="left:293px;background:linear-gradient(#000 269.5px,#09000d 271.5px,#22003e 277.5px,#2e005b 280.5px,#4000c3 287.5px,#3d00e9 290.5px,#3800ff 293.5px,#0700ff 311.5px,#0008ff 316.5px,#008aff 350.5px,#00eaff 383.5px,#00fffa 394.5px,#00ffd4 406.5px,#00ffab 421.5px,#00ff71 427.5px,#00ff5a 428.5px,#03ff00 429.5px,#09ff00 431.5px)"></i>
<i style="left:294px;background:linear-gradient(#000 255.5px,#1f0037 269.5px,#3f00a6 296.5px,#3800ff 317.5px,#1f00ff 332.5px,#0c00ff 416.5px,#0004ff 426.5px,#01f 428.5px,#003aff 429.5px,#0042ff 431.5px)"></i>
<i style="left:295px;background:linear-gradient(#000 249.5px,#11001c 257.5px,#300060 275.5px,#38007f 287.5px,#4000ca 329.5px,#3600ff 391.5px,#1c00ff 424.5px,#1000ff 428.5px,#000bff 429.5px,#0014ff 431.5px)"></i>
<i style="left:296px;background:linear-gradient(#000 289.5px,#160025 298.5px,#1e0034 302.5px,#3a0087 325.5px,#3d0099 329.5px,#3c0094 331.5px,#3b00f5 379.5px,#3200ff 389.5px,#1600ff 415.5px,#0600ff 427.5px,#0100ff 428.5px,#0027ff 429.5px,#0030ff 431.5px)"></i>
<i style="left:297px;background:linear-gradient(#000 215.5px,#1e0034 239.5px,#3d0097 285.5px,#3e00e1 332.5px,#3600ff 366.5px,#0e00ff 424.5px,#0200ff 428.5px,#0024ff 429.5px,#002cff 431.5px)"></i>
<i style="left:298px;background:linear-gradient(#000 167.5px,#0a0010 172.5px,#250042 186.5px,#3f00aa 215.5px,#3600ff 240.5px,#0005ff 276.5px,#0036ff 287.5px,#005eff 292.5px,#00a0ff 304.5px,#00fffe 327.5px,#00ff7a 342.5px,#00ff02 359.5px,#2bff00 393.5px,#42ff00 423.5px,#54ff00 428.5px,#71ff00 429.5px,#7f0 431.5px)"></i>
<i style="left:299px;background:linear-gradient(#000 215.5px,#1f0036 227.5px,#3e009c 250.5px,#3900ff 272.5px,#2400ff 280.5px,#0200ff 285.5px,#0035ff 290.5px,#007bff 302.5px,#00fffa 334.5px,#00ff50 352.5px,#00ff01 362.5px,#2eff00 393.5px,#46ff00 423.5px,#58ff00 428.5px,#75ff00 429.5px,#7bff00 431.5px)"></i>
<i style="left:300px;background:linear-gradient(#000 291.5px,#150023 301.5px,#240041 313.5px,#370079 329.5px,#330069 330.5px,#3f00b1 400.5px,#3f00d5 422.5px,#3a00f9 428.5px,#2500ff 429.5px,#2000ff 431.5px)"></i>
<i style="left:301px;background:linear-gradient(#000 293.5px,#0e0016 300.5px,#19002a 312.5px,#2c0054 329.5px,#1a002c 330.5px,#3d0097 394.5px,#4000ba 410.5px,#3f00ce 422.5px,#3d00e6 427.5px,#3b00f2 428.5px,#2800ff 429.5px,#2300ff 431.5px)"></i>
<i style="left:302px;background:linear-gradient(#000 226.5px,#0a0010 231.5px,#250042 245.5px,#3f00ac 274.5px,#4000cb 281.5px,#3d00e5 285.5px,#3800ff 287.5px,#1c00ff 293.5px,#0005ff 303.5px,#0084ff 335.5px,#00f2ff 379.5px,#00fffb 387.5px,#00ffca 402.5px,#00ff9a 421.5px,#00ff60 427.5px,#00ff49 428.5px,#08ff00 429.5px,#0eff00 431.5px)"></i>
<i style="left:303px;background:linear-gradient(#000 0.5px,#000001 249.5px,#1a002d 261.5px,#38007e 281.5px,#3d0098 285.5px,#3f00d4 289.5px,#3700ff 295.5px,#0001ff 317.5px,#0054ff 339.5px,#00ceff 383.5px,#00f6ff 407.5px,#00fffb 417.5px,#0fe 421.5px,#00ffb4 427.5px,#00ff9d 428.5px,#00ff38 429.5px,#00ff23 431.5px)"></i>
<i style="left:304px;background:linear-gradient(#000 281.5px,#030005 282.5px,#1b002d 286.5px,#2d0059 290.5px,#3f00ae 303.5px,#3700ff 320.5px,#0003ff 341.5px,#009fff 373.5px,#00f1ff 396.5px,#00fffb 403.5px,#00ffca 421.5px,#00ff90 427.5px,#00ff79 428.5px,#00ff13 429.5px,#0f0 431.5px)"></i>
<i style="left:305px;background:linear-gradient(#000 255.5px,#22003d 271.5px,#350071 283.5px,#4000bf 296.5px,#3b00f2 304.5px,#3600ff 308.5px,#0004ff 332.5px,#00a1ff 370.5px,#00f4ff 398.5px,#00fff9 408.5px,#00ffd5 421.5px,#00ff9b 427.5px,#00ff84 428.5px,#00ff1f 429.5px,#00ff0a 431.5px)"></i>
<i style="left:306px;background:linear-gradient(#000 283.5px,#160025 287.5px,#240042 290.5px,#3c0093 303.5px,#3b00f5 323.5px,#3400ff 327.5px,#0003ff 403.5px,#001dff 422.5px,#0030ff 427.5px,#003aff 428.5px,#0062ff 429.5px,#006aff 431.5px)"></i>
<i style="left:307px;background:linear-gradient(#000 257.5px,#1e0033 270.5px,#38007e 287.5px,#3e00e1 305.5px,#3600ff 312.5px,#0c00ff 333.5px,#0006ff 355.5px,#0050ff 402.5px,#006dff 422.5px,#0080ff 427.5px,#008aff 428.5px,#00b2ff 429.5px,#00baff 431.5px)"></i>
<i style="left:308px;background:linear-gradient(#000 269.5px,#040007 271.5px,#200037 283.5px,#3e009e 308.5px,#3a00fa 331.5px,#0005ff 396.5px,#0021ff 409.5px,#0036ff 423.5px,#004fff 428.5px,#07f 429.5px,#0080ff 431.5px)"></i>
<i style="left:309px;background:linear-gradient(#000 282.5px,#030004 283.5px,#1a002b 287.5px,#270049 290.5px,#3d0097 302.5px,#3900ff 323.5px,#2700ff 335.5px,#0004ff 397.5px,#002dff 423.5px,#0046ff 428.5px,#006eff 429.5px,#07f 431.5px)"></i>
<i style="left:310px;background:linear-gradient(#000 261.5px,#09000e 265.5px,#23003e 277.5px,#3f00aa 300.5px,#3600ff 319.5px,#1c00ff 334.5px,#0005ff 374.5px,#0046ff 412.5px,#0054ff 422.5px,#0071ff 428.5px,#09f 429.5px,#00a2ff 431.5px)"></i>
<i style="left:311px;background:linear-gradient(#000 257.5px,#1e0033 270.5px,#3e00a0 296.5px,#3800ff 318.5px,#1e00ff 334.5px,#0005ff 384.5px,#0035ff 416.5px,#0046ff 424.5px,#005bff 428.5px,#0084ff 429.5px,#008cff 431.5px)"></i>
<i style="left:312px;background:linear-gradient(#000 263.5px,#160025 272.5px,#3b008b 298.5px,#3b00f5 325.5px,#3400ff 331.5px,#0004ff 387.5px,#0037ff 409.5px,#004bff 423.5px,#0064ff 428.5px,#008dff 429.5px,#0095ff 431.5px)"></i>
<i style="left:313px;background:linear-gradient(#000 245.5px,#1c002f 258.5px,#3e009e 287.5px,#3800ff 311.5px,#1400ff 333.5px,#0005ff 379.5px,#003bff 422.5px,#0058ff 428.5px,#0080ff 429.5px,#0089ff 431.5px)"></i>
<i style="left:314px;background:linear-gradient(#000 285.5px,#08000d 287.5px,#13001f 289.5px,#29004d 297.5px,#4000ba 320.5px,#3d00e8 330.5px,#3600ff 344.5px,#0004ff 394.5px,#0028ff 408.5px,#003aff 422.5px,#0057ff 428.5px,#007fff 429.5px,#08f 431.5px)"></i>
<i style="left:315px;background:linear-gradient(#000 283.5px,#010002 284.5px,#170026 288.5px,#390081 302.5px,#3d00e6 323.5px,#3600ff 329.5px,#0005ff 397.5px,#001eff 410.5px,#002eff 422.5px,#004aff 428.5px,#0073ff 429.5px,#007bff 431.5px)"></i>
<i style="left:316px;background:linear-gradient(#000 282.5px,#09000f 284.5px,#1b002d 287.5px,#28004b 290.5px,#3d0099 302.5px,#3900fc 322.5px,#2500ff 336.5px,#0004ff 388.5px,#002dff 412.5px,#003fff 423.5px,#0058ff 428.5px,#0080ff 429.5px,#0089ff 431.5px)"></i>
<i style="left:317px;background:linear-gradient(#000 268.5px,#09000e 272.5px,#260045 285.5px,#3f00a9 307.5px,#3700ff 326.5px,#0005ff 383.5px,#0040ff 410.5px,#0053ff 423.5px,#006cff 428.5px,#0095ff 429.5px,#009dff 431.5px)"></i>
<i style="left:318px;background:linear-gradient(#000 283.5px,#160025 287.5px,#240042 290.5px,#3c0093 303.5px,#3b00f5 323.5px,#3400ff 327.5px,#1500ff 420.5px,#0200ff 428.5px,#0024ff 429.5px,#002cff 431.5px)"></i>
<i style="left:319px;background:linear-gradient(#000 283.5px,#020003 284.5px,#180028 288.5px,#39007f 301.5px,#3d00e9 323.5px,#3700ff 328.5px,#0004ff 394.5px,#0023ff 410.5px,#0037ff 423.5px,#0050ff 428.5px,#0079ff 429.5px,#0081ff 431.5px)"></i>
<i style="left:320px;background:linear-gradient(#000 270.5px,#1d0032 282.5px,#3d0096 304.5px,#3900fe 326.5px,#0005ff 393.5px,#0027ff 411.5px,#0039ff 423.5px,#0052ff 428.5px,#007bff 429.5px,#0083ff 431.5px)"></i>
<i style="left:321px;background:linear-gradient(#000 285.5px,#020002 286.5px,#130020 290.5px,#320066 303.5px,#3f00d0 326.5px,#3e00e1 331.5px,#3600ff 349.5px,#0004ff 401.5px,#0016ff 410.5px,#0026ff 422.5px,#0039ff 427.5px,#0043ff 428.5px,#006bff 429.5px,#0073ff 431.5px)"></i>
<i style="left:322px;background:linear-gradient(#000 237.5px,#19002a 249.5px,#3d0094 278.5px,#3900fd 310.5px,#1800ff 338.5px,#0005ff 379.5px,#003eff 418.5px,#0059ff 427.5px,#0062ff 428.5px,#008bff 429.5px,#0093ff 431.5px)"></i>
<i style="left:323px;background:linear-gradient(#000 206.5px,#12001d 215.5px,#2c0055 231.5px,#4000bc 261.5px,#3900fe 281.5px,#0c00ff 335.5px,#0005ff 344.5px,#00abff 404.5px,#00c5ff 423.5px,#00deff 428.5px,#00ffec 429.5px,#00ffd7 431.5px)"></i>
<i style="left:324px;background:linear-gradient(#000 237.5px,#19002a 249.5px,#3d0094 278.5px,#3900fd 308.5px,#0003ff 344.5px,#00adff 401.5px,#00ceff 423.5px,#00e7ff 428.5px,#00ffd6 429.5px,#00ffc1 431.5px)"></i>
<i style="left:325px;background:linear-gradient(#000 270.5px,#19002a 280.5px,#2c0055 287.5px,#370078 290.5px,#4000cb 302.5px,#3700ff 313.5px,#0002ff 339.5px,#00a4ff 389.5px,#00ceff 409.5px,#00e2ff 423.5px,#00fbff 428.5px,#00ffa3 429.5px,#00ff8e 431.5px)"></i>
<i style="left:326px;background:linear-gradient(#000 248.5px,#1e0033 262.5px,#3e009e 290.5px,#3800ff 315.5px,#0005ff 351.5px,#009dff 407.5px,#00b4ff 423.5px,#00cdff 428.5px,#00f6ff 429.5px,#00feff 431.5px)"></i>
<i style="left:327px;background:linear-gradient(#000 263.5px,#200037 270.5px,#390082 279.5px,#3e00dd 285.5px,#3900fc 287.5px,#0200ff 302.5px,#0092ff 337.5px,#0ff 364.5px,#0f8 380.5px,#00ff3e 395.5px,#04ff00 422.5px,#18ff00 428.5px,#35ff00 429.5px,#3bff00 431.5px)"></i>
<i style="left:328px;background:linear-gradient(#000 246.5px,#060009 248.5px,#240040 257.5px,#3f00a9 274.5px,#4000c7 279.5px,#3600ff 283.5px,#0600ff 291.5px,#000eff 295.5px,#0042ff 305.5px,#00c5ff 338.5px,#00fffc 358.5px,#00ff8a 378.5px,#00ff4c 394.5px,#00ff1a 417.5px,#00ff0d 421.5px,#04ff00 424.5px,#13ff00 428.5px,#30ff00 429.5px,#36ff00 431.5px)"></i>
<i style="left:329px;background:linear-gradient(#000 265.5px,#040006 267.5px,#1c002f 277.5px,#3e009d 300.5px,#3800ff 320.5px,#0005ff 343.5px,#00a4ff 379.5px,#00e9ff 401.5px,#00fffe 420.5px,#00ffbf 427.5px,#00ffa9 428.5px,#00ff43 429.5px,#00ff2f 431.5px)"></i>
<i style="left:330px;background:linear-gradient(#000 0.5px,#010001 280.5px,#19002a 284.5px,#350071 290.5px,#4000c4 302.5px,#3800ff 314.5px,#0005ff 338.5px,#00a3ff 374.5px,#00efff 398.5px,#00fffa 411.5px,#0fd 421.5px,#00ffa3 427.5px,#00ff8c 428.5px,#00ff27 429.5px,#00ff12 431.5px)"></i>
<i style="left:331px;background:linear-gradient(#000 261.5px,#030004 262.5px,#22003c 269.5px,#3c008f 279.5px,#3a00fa 286.5px,#1c00ff 292.5px,#0003ff 301.5px,#007fff 332.5px,#00deff 390.5px,#00feff 421.5px,#00ffc8 427.5px,#00ffb1 428.5px,#00ff4c 429.5px,#00ff37 431.5px)"></i>
<i style="left:332px;background:linear-gradient(#000 0.5px,#010001 245.5px,#250043 263.5px,#3b008c 281.5px,#3f00a7 284.5px,#3b00f3 289.5px,#3400ff 292.5px,#0300ff 309.5px,#0023ff 319.5px,#0058ff 333.5px,#00cdff 387.5px,#00fbff 422.5px,#00fff7 424.5px,#00ffd9 427.5px,#00ffc2 428.5px,#00ff5d 429.5px,#00ff48 431.5px)"></i>
<i style="left:333px;background:linear-gradient(#000 281.5px,#0a0010 283.5px,#270048 288.5px,#370078 294.5px,#3f00b2 303.5px,#3700ff 319.5px,#1d00ff 334.5px,#0004ff 380.5px,#003bff 416.5px,#004cff 424.5px,#0061ff 428.5px,#0089ff 429.5px,#0092ff 431.5px)"></i>
<i style="left:334px;background:linear-gradient(#000 0.5px,#010001 254.5px,#250042 271.5px,#4000b4 298.5px,#3700ff 316.5px,#1b00ff 333.5px,#0005ff 397.5px,#0025ff 422.5px,#0041ff 428.5px,#006aff 429.5px,#0072ff 431.5px)"></i>
<i style="left:335px;background:linear-gradient(#000 235.5px,#0a0010 240.5px,#200038 251.5px,#3f00a9 282.5px,#3700ff 308.5px,#0900ff 334.5px,#0006ff 338.5px,#00a4ff 372.5px,#00f5ff 396.5px,#00fff9 402.5px,#00ffc4 421.5px,#00ff8a 427.5px,#00ff73 428.5px,#00ff0e 429.5px,#02ff00 431.5px)"></i>
<i style="left:336px;background:linear-gradient(#000 0.5px,#010001 254.5px,#250042 271.5px,#3f00ac 298.5px,#3700ff 320.5px,#1a00ff 333.5px,#0004ff 341.5px,#009eff 369.5px,#00feff 393.5px,#00ffc8 403.5px,#00ff97 421.5px,#00ff5d 427.5px,#00ff46 428.5px,#09ff00 429.5px,#0fff00 431.5px)"></i>
<i style="left:337px;background:linear-gradient(#000 243.5px,#1e0033 257.5px,#3e00a0 286.5px,#3900ff 311.5px,#0d00ff 333.5px,#0006ff 338.5px,#009fff 366.5px,#0ff 390.5px,#00ffbf 400.5px,#00ff83 421.5px,#00ff49 427.5px,#00ff32 428.5px,#0fff00 429.5px,#14ff00 431.5px)"></i>
<i style="left:338px;background:linear-gradient(#000 266.5px,#180029 276.5px,#270047 282.5px,#3f00ad 290.5px,#3900fe 301.5px,#0004ff 327.5px,#00b0ff 362.5px,#00fffa 384.5px,#00ffa9 397.5px,#00ff6e 418.5px,#00ff5b 422.5px,#00ff2a 427.5px,#00ff13 428.5px,#17ff00 429.5px,#1dff00 431.5px)"></i>
<i style="left:339px;background:linear-gradient(#000 269.5px,#180028 279.5px,#29004c 285.5px,#3b008b 290.5px,#3e00df 302.5px,#3700ff 309.5px,#0002ff 332.5px,#009eff 359.5px,#0ff 381.5px,#00ffa2 393.5px,#0f7 402.5px,#00ff45 421.5px,#03ff00 428.5px,#20ff00 429.5px,#26ff00 431.5px)"></i>
<i style="left:340px;background:linear-gradient(#000 262.5px,#040007 264.5px,#1c002f 274.5px,#3e009d 300.5px,#3800ff 323.5px,#0003ff 349.5px,#0af 394.5px,#00c9ff 407.5px,#00e0ff 423.5px,#00f9ff 428.5px,#00ffa9 429.5px,#00ff94 431.5px)"></i>
<i style="left:341px;background:linear-gradient(#000 270.5px,#180027 280.5px,#3b008a 309.5px,#3f00cf 330.5px,#3700ff 352.5px,#0004ff 397.5px,#0021ff 407.5px,#0038ff 423.5px,#0051ff 428.5px,#007aff 429.5px,#0082ff 431.5px)"></i>
<i style="left:342px;background:linear-gradient(#000 262.5px,#09000e 266.5px,#23003e 278.5px,#3f00a8 302.5px,#3700ff 322.5px,#2400ff 336.5px,#0005ff 399.5px,#0026ff 422.5px,#0039ff 427.5px,#0043ff 428.5px,#006bff 429.5px,#0073ff 431.5px)"></i>
<i style="left:343px;background:linear-gradient(#000 281.5px,#0b0011 283.5px,#22003d 287.5px,#2f005d 290.5px,#3f00b3 303.5px,#3700ff 319.5px,#1d00ff 333.5px,#0005ff 393.5px,#0030ff 423.5px,#0049ff 428.5px,#0072ff 429.5px,#007aff 431.5px)"></i>
<i style="left:344px;background:linear-gradient(#000 248.5px,#23003e 265.5px,#3e00a1 292.5px,#3700ff 320.5px,#1a00ff 349.5px,#0005ff 385.5px,#0034ff 411.5px,#0047ff 423.5px,#0060ff 428.5px,#08f 429.5px,#0091ff 431.5px)"></i>
<i style="left:345px;background:linear-gradient(#000 268.5px,#19002b 279.5px,#2d0057 283.5px,#3f00ad 289.5px,#3800ff 300.5px,#0003ff 325.5px,#00b8ff 362.5px,#00fffe 381.5px,#00ffa6 394.5px,#00ff81 404.5px,#00ff53 421.5px,#00ff19 427.5px,#00ff02 428.5px,#1cff00 429.5px,#2f0 431.5px)"></i>
<i style="left:346px;background:linear-gradient(#000 268.5px,#020003 269.5px,#1e0033 275.5px,#310062 280.5px,#4000ca 287.5px,#3c00f0 290.5px,#3500ff 293.5px,#0400ff 311.5px,#0012ff 317.5px,#00d3ff 362.5px,#0ff 375.5px,#00ff9f 390.5px,#00ff70 402.5px,#00ff40 421.5px,#05ff00 428.5px,#2f0 429.5px,#28ff00 431.5px)"></i>
<i style="left:347px;background:linear-gradient(#000 270.5px,#160024 279.5px,#19002b 280.5px,#3d0098 288.5px,#4000b6 291.5px,#3900ff 301.5px,#0001ff 326.5px,#00a7ff 364.5px,#00fdff 391.5px,#00ffca 404.5px,#00ff9d 421.5px,#00ff62 427.5px,#00ff4c 428.5px,#07ff00 429.5px,#0dff00 431.5px)"></i>
<i style="left:348px;background:linear-gradient(#000 0.5px,#010001 251.5px,#1f0035 265.5px,#3e009e 293.5px,#3900fe 319.5px,#20f 338.5px,#0005ff 387.5px,#0032ff 414.5px,#0041ff 423.5px,#005aff 428.5px,#0083ff 429.5px,#008bff 431.5px)"></i>
<i style="left:349px;background:linear-gradient(#000 257.5px,#23003e 273.5px,#3f00a6 302.5px,#3700ff 328.5px,#0005ff 389.5px,#0032ff 409.5px,#0047ff 423.5px,#0060ff 428.5px,#08f 429.5px,#0091ff 431.5px)"></i>
<i style="left:350px;background:linear-gradient(#000 0.5px,#010001 270.5px,#1c0030 281.5px,#350072 292.5px,#4000bb 303.5px,#3800ff 317.5px,#1a00ff 332.5px,#0005ff 381.5px,#0041ff 423.5px,#005aff 428.5px,#0083ff 429.5px,#008bff 431.5px)"></i>
<i style="left:351px;background:linear-gradient(#000 282.5px,#020004 283.5px,#130020 286.5px,#270048 290.5px,#3d0096 302.5px,#3a00f8 322.5px,#2c00ff 329.5px,#0004ff 392.5px,#0028ff 414.5px,#0037ff 423.5px,#0050ff 428.5px,#0079ff 429.5px,#0081ff 431.5px)"></i>
<i style="left:352px;background:linear-gradient(#000 284.5px,#09000f 286.5px,#1a002c 289.5px,#38007e 303.5px,#3e00de 323.5px,#3900fe 330.5px,#0004ff 392.5px,#002aff 409.5px,#003fff 423.5px,#0058ff 428.5px,#0080ff 429.5px,#0089ff 431.5px)"></i>
<i style="left:353px;background:linear-gradient(#000 0.5px,#010001 244.5px,#1e0034 258.5px,#3c0091 284.5px,#3b00f5 318.5px,#3400ff 325.5px,#0005ff 390.5px,#002bff 410.5px,#003fff 423.5px,#0058ff 428.5px,#0080ff 429.5px,#0089ff 431.5px)"></i>
<i style="left:354px;background:linear-gradient(#000 284.5px,#160024 288.5px,#1b002e 289.5px,#390082 303.5px,#3d00e7 324.5px,#3700ff 330.5px,#0004ff 397.5px,#0020ff 413.5px,#0030ff 423.5px,#0049ff 428.5px,#0072ff 429.5px,#007aff 431.5px)"></i>
<i style="left:355px;background:linear-gradient(#000 251.5px,#21003b 267.5px,#3e00a0 293.5px,#3700ff 318.5px,#2000ff 334.5px,#0005ff 391.5px,#0035ff 423.5px,#004eff 428.5px,#0076ff 429.5px,#007fff 431.5px)"></i>
<i style="left:356px;background:linear-gradient(#000 253.5px,#08000d 257.5px,#21003b 269.5px,#3e009c 298.5px,#3900ff 330.5px,#0005ff 344.5px,#0097ff 366.5px,#00fffe 387.5px,#0fa 397.5px,#00ff8a 404.5px,#00ff5c 421.5px,#0f2 427.5px,#00ff0b 428.5px,#1aff00 429.5px,#20ff00 431.5px)"></i>
<i style="left:357px;background:linear-gradient(#000 262.5px,#1c0030 268.5px,#3b008b 279.5px,#3b00f6 286.5px,#2f00ff 288.5px,#0004ff 302.5px,#008bff 336.5px,#00f4ff 376.5px,#00fff9 383.5px,#00ffbd 399.5px,#00ff86 421.5px,#00ff4c 427.5px,#00ff35 428.5px,#0eff00 429.5px,#14ff00 431.5px)"></i>
<i style="left:358px;background:linear-gradient(#000 257.5px,#1c002f 263.5px,#3d0099 276.5px,#4000c2 280.5px,#3900ff 284.5px,#0f00ff 291.5px,#0004ff 296.5px,#0042ff 309.5px,#00d7ff 347.5px,#00fffe 360.5px,#00ff87 379.5px,#00ff43 396.5px,#00ff0c 420.5px,#03ff00 423.5px,#15ff00 428.5px,#32ff00 429.5px,#38ff00 431.5px)"></i>
<i style="left:359px;background:linear-gradient(#000 261.5px,#1c0030 267.5px,#3c0093 279.5px,#3c00ef 285.5px,#3900fe 286.5px,#1e00ff 291.5px,#0002ff 300.5px,#00a2ff 340.5px,#00fffc 373.5px,#00ffa3 391.5px,#00ff7f 405.5px,#00ff53 421.5px,#00ff19 427.5px,#00ff02 428.5px,#1cff00 429.5px,#2f0 431.5px)"></i>
<i style="left:360px;background:linear-gradient(#000 257.5px,#020002 258.5px,#22003c 266.5px,#3d0098 279.5px,#3b00f3 285.5px,#3700ff 286.5px,#1800ff 292.5px,#00f 299.5px,#00aeff 342.5px,#00fffc 369.5px,#00ff95 388.5px,#00ff68 403.5px,#00ff3a 421.5px,#0f0 427.5px,#07ff00 428.5px,#23ff00 429.5px,#29ff00 431.5px)"></i>
<i style="left:361px;background:linear-gradient(#000 246.5px,#140021 252.5px,#2d0056 261.5px,#4000c1 279.5px,#3900fe 283.5px,#0900ff 291.5px,#0009ff 295.5px,#0038ff 304.5px,#00ebff 349.5px,#00fffa 356.5px,#00ff81 374.5px,#00ff35 390.5px,#00ff16 403.5px,#02ff00 415.5px,#1f0 425.5px,#1eff00 428.5px,#3bff00 429.5px,#41ff00 431.5px)"></i>
<i style="left:362px;background:linear-gradient(#000 0.5px,#000001 243.5px,#1b002e 260.5px,#34006d 284.5px,#4000b8 329.5px,#4000bd 334.5px,#3700ff 364.5px,#0005ff 407.5px,#001cff 423.5px,#0035ff 428.5px,#005eff 429.5px,#06f 431.5px)"></i>
<i style="left:363px;background:linear-gradient(#000 285.5px,#08000d 287.5px,#13001f 289.5px,#29004d 297.5px,#4000ba 320.5px,#3d00e7 330.5px,#3600ff 357.5px,#0800ff 424.5px,#0100ff 427.5px,#0007ff 428.5px,#002fff 429.5px,#0038ff 431.5px)"></i>
<i style="left:364px;background:linear-gradient(#000 247.5px,#1e0033 261.5px,#3e009e 289.5px,#3800ff 314.5px,#1b00ff 334.5px,#0005ff 390.5px,#0030ff 422.5px,#004dff 428.5px,#0075ff 429.5px,#007eff 431.5px)"></i>
<i style="left:365px;background:linear-gradient(#000 223.5px,#0a0010 228.5px,#200038 239.5px,#3f00a8 270.5px,#3f00d5 285.5px,#3600ff 308.5px,#0001ff 392.5px,#002fff 423.5px,#0048ff 428.5px,#0071ff 429.5px,#0079ff 431.5px)"></i>
<i style="left:366px;background:linear-gradient(#000 247.5px,#1e0033 261.5px,#3d0095 288.5px,#3a00f8 318.5px,#3100ff 325.5px,#0004ff 389.5px,#002bff 411.5px,#003eff 423.5px,#0057ff 428.5px,#007fff 429.5px,#08f 431.5px)"></i>
<i style="left:367px;background:linear-gradient(#000 236.5px,#200038 252.5px,#3e009e 280.5px,#3900ff 313.5px,#1e00ff 340.5px,#0005ff 395.5px,#002eff 423.5px,#0047ff 428.5px,#0070ff 429.5px,#0078ff 431.5px)"></i>
<i style="left:368px;background:linear-gradient(#000 254.5px,#0d0015 260.5px,#2a004f 275.5px,#4000b7 302.5px,#3600ff 322.5px,#0004ff 376.5px,#0046ff 404.5px,#0062ff 423.5px,#007bff 428.5px,#00a3ff 429.5px,#00acff 431.5px)"></i>
<i style="left:369px;background:linear-gradient(#000 265.5px,#1e0034 278.5px,#3d0097 305.5px,#3b00f2 331.5px,#3500ff 344.5px,#0005ff 404.5px,#001dff 422.5px,#0030ff 427.5px,#003aff 428.5px,#0062ff 429.5px,#006aff 431.5px)"></i>
<i style="left:370px;background:linear-gradient(#000 0.5px,#010001 249.5px,#1d0031 262.5px,#3f00a5 291.5px,#3700ff 313.5px,#1500ff 333.5px,#0005ff 382.5px,#0037ff 422.5px,#0053ff 428.5px,#007cff 429.5px,#0084ff 431.5px)"></i>
<i style="left:371px;background:linear-gradient(#000 249.5px,#1e0033 263.5px,#360076 282.5px,#3f00d9 335.5px,#3600ff 356.5px,#0003ff 403.5px,#0023ff 423.5px,#003cff 428.5px,#0064ff 429.5px,#006dff 431.5px)"></i>
<i style="left:372px;background:linear-gradient(#000 258.5px,#200037 272.5px,#3f00a8 303.5px,#3600ff 329.5px,#0005ff 400.5px,#001aff 413.5px,#002bff 423.5px,#04f 428.5px,#006cff 429.5px,#0075ff 431.5px)"></i>
<i style="left:373px;background:linear-gradient(#000 0.5px,#010001 249.5px,#1d0031 262.5px,#38007c 283.5px,#3e00e1 325.5px,#3600ff 345.5px,#0005ff 403.5px,#0024ff 423.5px,#003dff 428.5px,#0065ff 429.5px,#006eff 431.5px)"></i>
<i style="left:374px;background:linear-gradient(#000 245.5px,#19002a 257.5px,#3b008a 283.5px,#3b00f4 315.5px,#3500ff 321.5px,#2000ff 331.5px,#0001ff 337.5px,#00abff 357.5px,#00fcff 369.5px,#00ffb1 375.5px,#00ff3c 385.5px,#0f0 392.5px,#1aff00 418.5px,#2dff00 427.5px,#34ff00 428.5px,#51ff00 429.5px,#56ff00 431.5px)"></i>
<i style="left:375px;background:linear-gradient(#000 280.5px,#0b0011 282.5px,#28004b 287.5px,#34006d 290.5px,#4000bf 302.5px,#3800ff 315.5px,#1000ff 331.5px,#0100ff 334.5px,#00a8ff 356.5px,#00fdff 370.5px,#00ff63 384.5px,#00ff16 394.5px,#01ff00 399.5px,#17ff00 423.5px,#28ff00 428.5px,#45ff00 429.5px,#4bff00 431.5px)"></i>
<i style="left:376px;background:linear-gradient(#000 234.5px,#0a0010 239.5px,#22003c 251.5px,#3f00a8 281.5px,#3700ff 311.5px,#1d00ff 330.5px,#0200ff 335.5px,#00b0ff 356.5px,#00fffb 368.5px,#0f6 379.5px,#00ff01 389.5px,#16ff00 405.5px,#2aff00 424.5px,#39ff00 428.5px,#56ff00 429.5px,#5cff00 431.5px)"></i>
<i style="left:377px;background:linear-gradient(#000 201.5px,#0a0010 206.5px,#200038 217.5px,#3f00a7 248.5px,#3800ff 273.5px,#2700ff 281.5px,#0004ff 287.5px,#0023ff 290.5px,#0069ff 302.5px,#00eaff 332.5px,#00fffb 336.5px,#00ff32 352.5px,#02ff00 357.5px,#4f0 385.5px,#6bff00 424.5px,#7aff00 428.5px,#97ff00 429.5px,#9dff00 431.5px)"></i>
<i style="left:378px;background:linear-gradient(#000 234.5px,#0b0012 238.5px,#23003f 247.5px,#3f00a9 268.5px,#3e00e0 279.5px,#3900ff 281.5px,#0003ff 290.5px,#004aff 302.5px,#0cf 332.5px,#00fffb 341.5px,#00ff45 355.5px,#00ff02 361.5px,#3eff00 387.5px,#63ff00 424.5px,#72ff00 428.5px,#8fff00 429.5px,#95ff00 431.5px)"></i>
<i style="left:379px;background:linear-gradient(#000 0.5px,#000001 260.5px,#1c0030 266.5px,#3e009b 279.5px,#3a00f7 285.5px,#2e00ff 287.5px,#0200ff 298.5px,#008fff 331.5px,#0ff 348.5px,#00ff41 362.5px,#01ff00 368.5px,#37ff00 390.5px,#57ff00 423.5px,#69ff00 428.5px,#86ff00 429.5px,#8cff00 431.5px)"></i>
<i style="left:380px;background:linear-gradient(#000 246.5px,#1e0033 260.5px,#3b008b 282.5px,#3f00d5 294.5px,#3700ff 300.5px,#0004ff 325.5px,#0025ff 331.5px,#0cf 349.5px,#00fbff 355.5px,#00ffe2 357.5px,#00ff26 368.5px,#02ff00 371.5px,#43ff00 391.5px,#5fff00 419.5px,#78ff00 428.5px,#95ff00 429.5px,#9bff00 431.5px)"></i>
<i style="left:381px;background:linear-gradient(#000 0.5px,#010001 267.5px,#1d0032 279.5px,#2e005a 286.5px,#3b0089 290.5px,#3e00de 302.5px,#3800ff 309.5px,#0800ff 332.5px,#0006ff 403.5px,#001dff 422.5px,#0030ff 427.5px,#003aff 428.5px,#0062ff 429.5px,#006aff 431.5px)"></i>
<i style="left:382px;background:linear-gradient(#000 286.5px,#020002 287.5px,#0b0011 289.5px,#260046 299.5px,#4000b8 325.5px,#3f00cd 331.5px,#3600ff 355.5px,#0005ff 400.5px,#001bff 408.5px,#0030ff 423.5px,#0049ff 428.5px,#0072ff 429.5px,#007aff 431.5px)"></i>
<i style="left:383px;background:linear-gradient(#000 0.5px,#010001 284.5px,#11001b 287.5px,#1c002f 289.5px,#390083 303.5px,#3d00e9 324.5px,#3700ff 329.5px,#0005ff 405.5px,#001eff 423.5px,#0037ff 428.5px,#0060ff 429.5px,#0068ff 431.5px)"></i>
<i style="left:384px;background:linear-gradient(#000 250.5px,#22003c 266.5px,#3b008a 289.5px,#3b00f5 326.5px,#3700ff 333.5px,#0005ff 404.5px,#001dff 422.5px,#0030ff 427.5px,#003aff 428.5px,#0062ff 429.5px,#006aff 431.5px)"></i>
<i style="left:385px;background:linear-gradient(#000 256.5px,#23003e 272.5px,#3f00ad 300.5px,#3800ff 321.5px,#0004ff 353.5px,#00a5ff 406.5px,#00bdff 423.5px,#00d6ff 428.5px,#0ff 429.5px,#00ffeb 431.5px)"></i>
<i style="left:386px;background:linear-gradient(#000 256.5px,#23003e 272.5px,#3f00a5 301.5px,#3700ff 328.5px,#0004ff 359.5px,#009dff 406.5px,#00b5ff 423.5px,#00ceff 428.5px,#00f7ff 429.5px,#0ff 431.5px)"></i>
<i style="left:387px;background:linear-gradient(#000 284.5px,#020002 285.5px,#170026 289.5px,#38007b 304.5px,#3e00df 325.5px,#3700ff 333.5px,#0005ff 361.5px,#00a2ff 406.5px,#00b6ff 422.5px,#00d3ff 428.5px,#00fbff 429.5px,#00fff4 431.5px)"></i>
<i style="left:388px;background:linear-gradient(#000 285.5px,#030004 286.5px,#12001d 289.5px,#310062 301.5px,#3f00cb 324.5px,#3700ff 336.5px,#0002ff 362.5px,#00a1ff 405.5px,#00b6ff 422.5px,#00d3ff 428.5px,#00fbff 429.5px,#00fff4 431.5px)"></i>
<i style="left:389px;background:linear-gradient(#000 284.5px,#09000f 286.5px,#1a002c 289.5px,#38007e 303.5px,#3e00de 323.5px,#3900ff 330.5px,#0003ff 360.5px,#009dff 406.5px,#00b5ff 423.5px,#00ceff 428.5px,#00f7ff 429.5px,#0ff 431.5px)"></i>
<i style="left:390px;background:linear-gradient(#000 268.5px,#180029 278.5px,#3b0089 305.5px,#3b00f2 335.5px,#3500ff 340.5px,#0005ff 371.5px,#0080ff 406.5px,#0098ff 423.5px,#00b1ff 428.5px,#00d9ff 429.5px,#00e2ff 431.5px)"></i>
<i style="left:391px;background:linear-gradient(#000 282.5px,#020004 283.5px,#130020 286.5px,#270048 290.5px,#3d0096 302.5px,#3a00f8 322.5px,#2c00ff 329.5px,#0002ff 346.5px,#00a3ff 384.5px,#00dfff 404.5px,#00f5ff 422.5px,#00fffb 425.5px,#00ffe7 427.5px,#00ffd0 428.5px,#00ff6b 429.5px,#00ff56 431.5px)"></i>
<i style="left:392px;background:linear-gradient(#000 267.5px,#09000e 271.5px,#200038 281.5px,#3b008e 297.5px,#3e00de 312.5px,#3700ff 319.5px,#0003ff 344.5px,#00a4ff 387.5px,#00d5ff 406.5px,#00e9ff 422.5px,#00fcff 427.5px,#00ffef 428.5px,#00ff8a 429.5px,#00ff75 431.5px)"></i>
<i style="left:393px;background:linear-gradient(#000 247.5px,#0a0010 252.5px,#240040 265.5px,#3e00a1 292.5px,#3800ff 321.5px,#1300ff 339.5px,#0002ff 347.5px,#009fff 385.5px,#00d8ff 404.5px,#00f2ff 423.5px,#00feff 426.5px,#00fff8 427.5px,#00ffe1 428.5px,#00ff7c 429.5px,#00ff67 431.5px)"></i>
<i style="left:394px;background:linear-gradient(#000 254.5px,#1e0035 268.5px,#3e009f 294.5px,#3800ff 317.5px,#0600ff 338.5px,#000aff 342.5px,#00a1ff 374.5px,#00f1ff 397.5px,#00fff9 407.5px,#00ffd2 421.5px,#00ff98 427.5px,#00ff81 428.5px,#00ff1c 429.5px,#00ff07 431.5px)"></i>
<i style="left:395px;background:linear-gradient(#000 0.5px,#010001 261.5px,#1d0031 273.5px,#3e009c 298.5px,#3900fd 320.5px,#0003ff 345.5px,#00a2ff 383.5px,#00e0ff 404.5px,#00faff 423.5px,#00fff9 425.5px,#00ffe4 427.5px,#00ffcd 428.5px,#00ff68 429.5px,#00ff53 431.5px)"></i>
<i style="left:396px;background:linear-gradient(#000 283.5px,#040005 284.5px,#1a002c 288.5px,#3a0084 301.5px,#3c00ee 323.5px,#3700ff 327.5px,#0002ff 350.5px,#00a5ff 391.5px,#00ceff 406.5px,#00e2ff 422.5px,#0ff 428.5px,#00ff9b 429.5px,#00ff86 431.5px)"></i>
<i style="left:397px;background:linear-gradient(#000 282.5px,#020004 283.5px,#130020 286.5px,#270048 290.5px,#3d0096 302.5px,#3a00f8 322.5px,#2c00ff 329.5px,#0003ff 346.5px,#00a5ff 384.5px,#00e1ff 404.5px,#00fbff 423.5px,#00fff6 425.5px,#00ffe1 427.5px,#00ffca 428.5px,#00ff65 429.5px,#00ff50 431.5px)"></i>
<i style="left:398px;background:linear-gradient(#000 265.5px,#1e0034 278.5px,#3e009d 303.5px,#3800ff 326.5px,#0001ff 348.5px,#00a3ff 386.5px,#00dbff 405.5px,#00f4ff 423.5px,#00fffc 426.5px,#00fff2 427.5px,#00ffdb 428.5px,#00ff76 429.5px,#00ff61 431.5px)"></i>
<i style="left:399px;background:linear-gradient(#000 288.5px,#0f0018 294.5px,#200037 301.5px,#3c0093 325.5px,#3f00a5 329.5px,#3e00a4 332.5px,#3800ff 377.5px,#0e00ff 416.5px,#0003ff 427.5px,#000dff 428.5px,#0035ff 429.5px,#003dff 431.5px)"></i>
<i style="left:400px;background:linear-gradient(#000 288.5px,#09000e 292.5px,#1d0032 300.5px,#3b008b 324.5px,#3e00a1 329.5px,#3e00a1 333.5px,#3800ff 383.5px,#1500ff 419.5px,#0200ff 428.5px,#0025ff 429.5px,#002eff 431.5px)"></i>
<i style="left:401px;background:linear-gradient(#000 288.5px,#1a002b 297.5px,#3e009d 325.5px,#3f00b0 329.5px,#4000c3 348.5px,#3600ff 392.5px,#1900ff 424.5px,#0e00ff 428.5px,#0010ff 429.5px,#0018ff 431.5px)"></i>
<i style="left:402px;background:linear-gradient(#000 281.5px,#0b0011 283.5px,#22003d 287.5px,#2f005d 290.5px,#3f00b3 303.5px,#3700ff 319.5px,#1d00ff 333.5px,#0005ff 384.5px,#0040ff 423.5px,#0059ff 428.5px,#0082ff 429.5px,#008aff 431.5px)"></i>
<i style="left:403px;background:linear-gradient(#000 253.5px,#0d0015 259.5px,#2a004f 274.5px,#4000b5 305.5px,#3800ff 330.5px,#0004ff 394.5px,#0026ff 411.5px,#0038ff 423.5px,#0051ff 428.5px,#007aff 429.5px,#0082ff 431.5px)"></i>
<i style="left:404px;background:linear-gradient(#000 263.5px,#1c0030 275.5px,#3c008f 307.5px,#4000cb 331.5px,#3700ff 355.5px,#0005ff 401.5px,#0017ff 408.5px,#002dff 423.5px,#0046ff 428.5px,#006eff 429.5px,#07f 431.5px)"></i>
<i style="left:405px;background:linear-gradient(#000 286.5px,#0e0017 289.5px,#2a004f 299.5px,#4000c0 324.5px,#3f00d8 330.5px,#3600ff 354.5px,#0005ff 411.5px,#0014ff 422.5px,#0027ff 427.5px,#0031ff 428.5px,#0059ff 429.5px,#0061ff 431.5px)"></i>
<i style="left:406px;background:linear-gradient(#000 263.5px,#160025 272.5px,#28004a 281.5px,#3e009c 295.5px,#3f00d0 303.5px,#3700ff 313.5px,#1000ff 332.5px,#0005ff 377.5px,#0039ff 422.5px,#0056ff 428.5px,#007eff 429.5px,#0087ff 431.5px)"></i>
<i style="left:407px;background:linear-gradient(#000 269.5px,#180029 279.5px,#3c0090 306.5px,#3d00e9 330.5px,#3600ff 345.5px,#0005ff 400.5px,#0019ff 410.5px,#002dff 423.5px,#0046ff 428.5px,#006eff 429.5px,#07f 431.5px)"></i>
<i style="left:408px;background:linear-gradient(#000 0.5px,#010001 269.5px,#1d0033 281.5px,#3e009e 303.5px,#3800ff 323.5px,#2500ff 335.5px,#0005ff 386.5px,#0032ff 411.5px,#0041ff 422.5px,#0054ff 427.5px,#005eff 428.5px,#0086ff 429.5px,#008eff 431.5px)"></i>
<i style="left:409px;background:linear-gradient(#000 282.5px,#11001b 285.5px,#2a0050 290.5px,#3e009f 302.5px,#3900fd 321.5px,#2600ff 332.5px,#0a00ff 419.5px,#0005ff 426.5px,#0012ff 428.5px,#003bff 429.5px,#0043ff 431.5px)"></i>
<i style="left:410px;background:linear-gradient(#000 269.5px,#09000e 273.5px,#19002a 280.5px,#3b008a 311.5px,#4000bf 330.5px,#3600ff 362.5px,#0004ff 409.5px,#0015ff 422.5px,#0032ff 428.5px,#005aff 429.5px,#0062ff 431.5px)"></i>
<i style="left:411px;background:linear-gradient(#000 0.5px,#010001 244.5px,#1e0035 267.5px,#370078 299.5px,#3f00a7 329.5px,#3e00a2 330.5px,#3700ff 345.5px,#0002ff 365.5px,#00afff 403.5px,#00cdff 423.5px,#00e6ff 428.5px,#00ffd9 429.5px,#00ffc4 431.5px)"></i>
<i style="left:412px;background:linear-gradient(#000 258.5px,#09000e 262.5px,#210039 273.5px,#310063 282.5px,#38007b 286.5px,#3f00ad 290.5px,#3900fe 301.5px,#0004ff 327.5px,#005dff 364.5px,#00b4ff 408.5px,#00c6ff 422.5px,#00e2ff 428.5px,#00ffe1 429.5px,#0fc 431.5px)"></i>
<i style="left:413px;background:linear-gradient(#000 0.5px,#010001 256.5px,#200037 270.5px,#38007e 286.5px,#4000c9 299.5px,#3700ff 310.5px,#00f 337.5px,#00a4ff 406.5px,#00bcff 423.5px,#00d5ff 428.5px,#00fdff 429.5px,#0fe 431.5px)"></i>
<i style="left:414px;background:linear-gradient(#000 281.5px,#040005 282.5px,#1b002e 286.5px,#2e005a 290.5px,#3f00aa 302.5px,#3600ff 320.5px,#0600ff 338.5px,#0007ff 341.5px,#009fff 371.5px,#00f2ff 393.5px,#00fffd 398.5px,#00ffdc 406.5px,#00ffb3 421.5px,#00ff79 427.5px,#00ff62 428.5px,#01ff00 429.5px,#07ff00 431.5px)"></i>
<i style="left:415px;background:linear-gradient(#000 269.5px,#180028 279.5px,#39007f 295.5px,#3f00b2 303.5px,#3700ff 319.5px,#0005ff 343.5px,#00a0ff 381.5px,#00e1ff 403.5px,#00fcff 423.5px,#00ffe9 426.5px,#00ffde 427.5px,#00ffc8 428.5px,#00ff62 429.5px,#00ff4e 431.5px)"></i>
<i style="left:416px;background:linear-gradient(#000 281.5px,#030005 282.5px,#1b002d 286.5px,#2d0059 290.5px,#3f00ae 303.5px,#3700ff 320.5px,#0004ff 342.5px,#009bff 375.5px,#00ecff 399.5px,#00fffa 415.5px,#00ffe9 421.5px,#00ffae 427.5px,#00ff98 428.5px,#00ff32 429.5px,#00ff1e 431.5px)"></i>
<i style="left:417px;background:linear-gradient(#000 0.5px,#010001 286.5px,#100019 289.5px,#300060 302.5px,#4000c8 325.5px,#3800ff 336.5px,#0001ff 359.5px,#00abff 401.5px,#00bfff 413.5px,#00cfff 423.5px,#00e8ff 428.5px,#00ffd3 429.5px,#00ffbe 431.5px)"></i>
<i style="left:418px;background:linear-gradient(#000 287.5px,#08000d 289.5px,#23003f 299.5px,#3f00ad 325.5px,#4000c1 329.5px,#3600ff 356.5px,#0003ff 395.5px,#002aff 407.5px,#0041ff 423.5px,#005aff 428.5px,#0083ff 429.5px,#008bff 431.5px)"></i>
<i style="left:419px;background:linear-gradient(#000 287.5px,#0b0012 290.5px,#29004d 302.5px,#4000bd 328.5px,#3600ff 358.5px,#0003ff 400.5px,#0018ff 408.5px,#002eff 423.5px,#0047ff 428.5px,#0070ff 429.5px,#0078ff 431.5px)"></i>
<i style="left:420px;background:linear-gradient(#000 0.5px,#010001 287.5px,#0d0014 290.5px,#23003e 298.5px,#3f00aa 323.5px,#4000c6 330.5px,#3700ff 352.5px,#0005ff 393.5px,#03f 407.5px,#004aff 423.5px,#0063ff 428.5px,#008cff 429.5px,#0094ff 431.5px)"></i>
<i style="left:421px;background:linear-gradient(#000 0.5px,#010001 258.5px,#1e0035 271.5px,#33006b 288.5px,#3f00cc 328.5px,#3e00df 333.5px,#3800ff 339.5px,#0003ff 363.5px,#00abff 405.5px,#00c4ff 423.5px,#0df 428.5px,#00ffef 429.5px,#00ffda 431.5px)"></i>
<i style="left:422px;background:linear-gradient(#000 0.5px,#010001 264.5px,#170026 273.5px,#3a0085 301.5px,#3d00e4 331.5px,#3700ff 336.5px,#0001ff 357.5px,#00abff 397.5px,#00c6ff 408.5px,#00d8ff 422.5px,#00ebff 427.5px,#00f5ff 428.5px,#00ffb4 429.5px,#00ff9f 431.5px)"></i>
<i style="left:423px;background:linear-gradient(#000 263.5px,#160025 272.5px,#2b0052 286.5px,#4000b6 329.5px,#4000c6 337.5px,#3700ff 358.5px,#0005ff 396.5px,#002cff 407.5px,#0042ff 423.5px,#005bff 428.5px,#0084ff 429.5px,#008cff 431.5px)"></i>
<i style="left:424px;background:linear-gradient(#000 285.5px,#020003 286.5px,#11001b 289.5px,#30005f 301.5px,#4000c7 324.5px,#3e00e3 331.5px,#3600ff 345.5px,#0005ff 392.5px,#0031ff 407.5px,#0048ff 423.5px,#0061ff 428.5px,#0089ff 429.5px,#0092ff 431.5px)"></i>
<i style="left:425px;background:linear-gradient(#000 0.5px,#000001 232.5px,#1b002d 262.5px,#3b008b 315.5px,#3e00a1 329.5px,#3d0099 330.5px,#3900fd 366.5px,#0002ff 403.5px,#0010ff 410.5px,#0024ff 423.5px,#003dff 428.5px,#0065ff 429.5px,#006eff 431.5px)"></i>
<i style="left:426px;background:linear-gradient(#000 196.5px,#200038 212.5px,#3f00a7 243.5px,#3800ff 268.5px,#10f 287.5px,#0006ff 292.5px,#0048ff 304.5px,#00c6ff 333.5px,#00fdff 343.5px,#0f2 363.5px,#01ff00 367.5px,#3f0 393.5px,#4cff00 423.5px,#5eff00 428.5px,#7bff00 429.5px,#81ff00 431.5px)"></i>
<i style="left:427px;background:linear-gradient(#000 231.5px,#060009 233.5px,#240041 242.5px,#3f00aa 259.5px,#3800ff 273.5px,#2100ff 280.5px,#0004ff 285.5px,#003cff 290.5px,#0082ff 302.5px,#00fffa 332.5px,#00ff3c 349.5px,#00ff01 355.5px,#42ff00 388.5px,#60ff00 423.5px,#72ff00 428.5px,#8eff00 429.5px,#94ff00 431.5px)"></i>
<i style="left:428px;background:linear-gradient(#000 279.5px,#11001c 282.5px,#320068 288.5px,#4000b8 298.5px,#3700ff 312.5px,#0004ff 335.5px,#00a9ff 368.5px,#00fffe 392.5px,#00ffc7 402.5px,#00ff94 421.5px,#00ff5a 427.5px,#00ff43 428.5px,#0aff00 429.5px,#10ff00 431.5px)"></i>
<i style="left:429px;background:linear-gradient(#000 234.5px,#0a0010 239.5px,#22003c 251.5px,#3f00a8 281.5px,#3700ff 313.5px,#1b00ff 332.5px,#0004ff 342.5px,#00a2ff 376.5px,#00f2ff 400.5px,#00fffa 412.5px,#00ffe0 421.5px,#00ffa6 427.5px,#00ff8f 428.5px,#00ff2a 429.5px,#00ff15 431.5px)"></i>
<i style="left:430px;background:linear-gradient(#000 201.5px,#0a0010 206.5px,#200038 217.5px,#3f00a7 248.5px,#3800ff 273.5px,#1400ff 288.5px,#0002ff 293.5px,#003eff 304.5px,#00b2ff 331.5px,#00fdff 342.5px,#00ff12 359.5px,#02ff00 361.5px,#45ff00 385.5px,#5fff00 408.5px,#71ff00 424.5px,#80ff00 428.5px,#9dff00 429.5px,#a3ff00 431.5px)"></i>
<i style="left:431px;background:linear-gradient(#000 234.5px,#050007 236.5px,#23003f 248.5px,#3f00a7 270.5px,#3f00d1 279.5px,#3900ff 282.5px,#0500ff 290.5px,#0016ff 295.5px,#004aff 305.5px,#00baff 331.5px,#00fdff 341.5px,#0f1 358.5px,#02ff00 360.5px,#46ff00 384.5px,#5eff00 404.5px,#73ff00 424.5px,#82ff00 428.5px,#9fff00 429.5px,#a5ff00 431.5px)"></i>
<i style="left:432px;background:linear-gradient(#000 255.5px,#1b002d 261.5px,#3e009f 275.5px,#4000c0 279.5px,#3900fe 283.5px,#0900ff 291.5px,#0009ff 295.5px,#0038ff 304.5px,#00acff 331.5px,#00fcff 344.5px,#00ffeb 346.5px,#00ff38 360.5px,#0f0 365.5px,#3aff00 390.5px,#59ff00 423.5px,#6aff00 428.5px,#87ff00 429.5px,#8dff00 431.5px)"></i>
<i style="left:433px;background:linear-gradient(#000 245.5px,#11001b 251.5px,#320065 266.5px,#3f00a5 279.5px,#3800ff 285.5px,#1500ff 291.5px,#0005ff 298.5px,#0097ff 331.5px,#00fffe 346.5px,#00ff3e 359.5px,#01ff00 364.5px,#43ff00 388.5px,#60ff00 419.5px,#79ff00 428.5px,#96ff00 429.5px,#9cff00 431.5px)"></i>
<i style="left:434px;background:linear-gradient(#000 231.5px,#09000e 235.5px,#200039 245.5px,#3e00a0 269.5px,#4000ca 279.5px,#3a00f8 282.5px,#2700ff 285.5px,#0500ff 291.5px,#01f 295.5px,#004dff 307.5px,#00b5ff 331.5px,#00fffd 342.5px,#00ff2f 356.5px,#02ff00 360.5px,#47ff00 384.5px,#60ff00 404.5px,#75ff00 424.5px,#84ff00 428.5px,#a1ff00 429.5px,#a7ff00 431.5px)"></i>
<i style="left:435px;background:linear-gradient(#000 196.5px,#200038 212.5px,#3f00a7 243.5px,#3800ff 268.5px,#0d00ff 289.5px,#0005ff 294.5px,#0036ff 303.5px,#00afff 331.5px,#00fffb 343.5px,#00ff3b 356.5px,#02ff00 361.5px,#48ff00 386.5px,#65ff00 415.5px,#74ff00 425.5px,#81ff00 428.5px,#9eff00 429.5px,#a4ff00 431.5px)"></i>
<i style="left:436px;background:linear-gradient(#000 231.5px,#020003 232.5px,#22003c 240.5px,#3f00a7 255.5px,#3700ff 268.5px,#0d00ff 280.5px,#0001ff 282.5px,#005fff 290.5px,#00a5ff 302.5px,#00fffb 324.5px,#0f1 347.5px,#0f0 349.5px,#42ff00 382.5px,#6f0 423.5px,#78ff00 428.5px,#95ff00 429.5px,#9bff00 431.5px)"></i>
<i style="left:437px;background:linear-gradient(#000 220.5px,#1f0037 229.5px,#3d0095 244.5px,#3900ff 261.5px,#00f 280.5px,#0070ff 289.5px,#00c1ff 303.5px,#0ff 318.5px,#0f5 335.5px,#00ff03 345.5px,#3cff00 380.5px,#60ff00 423.5px,#72ff00 428.5px,#8eff00 429.5px,#94ff00 431.5px)"></i>
<i style="left:438px;background:linear-gradient(#000 176.5px,#0c0013 182.5px,#23003f 194.5px,#3f00a7 223.5px,#3600ff 249.5px,#0700ff 279.5px,#00f 280.5px,#0070ff 289.5px,#00c1ff 303.5px,#0ff 318.5px,#00ff2d 339.5px,#00ff01 344.5px,#41ff00 378.5px,#69ff00 423.5px,#7aff00 428.5px,#97ff00 429.5px,#9dff00 431.5px)"></i>
<i style="left:439px;background:linear-gradient(#000 220.5px,#140021 226.5px,#38007c 242.5px,#3e00e3 260.5px,#3600ff 266.5px,#0e00ff 280.5px,#0100ff 282.5px,#0056ff 289.5px,#00a3ff 302.5px,#00feff 324.5px,#00ff0d 348.5px,#04ff00 351.5px,#42ff00 383.5px,#65ff00 423.5px,#76ff00 428.5px,#93ff00 429.5px,#9f0 431.5px)"></i>
<i style="left:440px;background:linear-gradient(#000 240.5px,#1e0034 246.5px,#3d0094 258.5px,#3b00f3 270.5px,#30f 273.5px,#0e00ff 281.5px,#0100ff 283.5px,#004aff 289.5px,#0096ff 302.5px,#00feff 327.5px,#00ff19 350.5px,#0f0 353.5px,#3bff00 384.5px,#5dff00 423.5px,#6eff00 428.5px,#8bff00 429.5px,#91ff00 431.5px)"></i>
<i style="left:441px;background:linear-gradient(#000 256.5px,#22003c 268.5px,#350072 279.5px,#3f00cc 285.5px,#3a00fa 288.5px,#0500ff 304.5px,#000cff 309.5px,#00cdff 357.5px,#0ff 373.5px,#00ff9c 390.5px,#00ff73 402.5px,#00ff42 421.5px,#04ff00 428.5px,#21ff00 429.5px,#27ff00 431.5px)"></i>
<i style="left:442px;background:linear-gradient(#000 265.5px,#09000d 267.5px,#23003e 273.5px,#38007e 280.5px,#3f00d9 286.5px,#3a00f8 288.5px,#2e00ff 291.5px,#0200ff 306.5px,#007aff 335.5px,#00f3ff 363.5px,#00fffa 367.5px,#00ff84 383.5px,#00ff41 397.5px,#04ff00 423.5px,#16ff00 428.5px,#3f0 429.5px,#39ff00 431.5px)"></i>
<i style="left:443px;background:linear-gradient(#000 0.5px,#010001 229.5px,#23003e 246.5px,#3f00a8 275.5px,#4000c8 282.5px,#3b00f3 288.5px,#3700ff 289.5px,#0100ff 307.5px,#00d6ff 360.5px,#0ff 373.5px,#00ff9c 389.5px,#00ff6d 402.5px,#00ff3d 421.5px,#00ff03 427.5px,#06ff00 428.5px,#23ff00 429.5px,#29ff00 431.5px)"></i>
<i style="left:444px;background:linear-gradient(#000 191.5px,#0a0010 196.5px,#250042 210.5px,#3f00aa 239.5px,#3600ff 264.5px,#0003ff 296.5px,#0080ff 334.5px,#00e1ff 383.5px,#00fffa 411.5px,#0fd 421.5px,#00ffa3 427.5px,#00ff8c 428.5px,#00ff27 429.5px,#00ff12 431.5px)"></i>
<i style="left:445px;background:linear-gradient(#000 0.5px,#010001 229.5px,#23003e 246.5px,#3f00a8 275.5px,#4000c9 282.5px,#3e00e3 286.5px,#3800ff 288.5px,#0300ff 304.5px,#006bff 332.5px,#00d1ff 386.5px,#00fffa 423.5px,#00ffd3 427.5px,#00ffbc 428.5px,#00ff57 429.5px,#00ff42 431.5px)"></i>
<i style="left:446px;background:linear-gradient(#000 0.5px,#010001 229.5px,#23003e 246.5px,#3f00a8 275.5px,#4000b6 279.5px,#3900fe 284.5px,#1000ff 291.5px,#0003ff 296.5px,#0041ff 309.5px,#009aff 330.5px,#0ff 342.5px,#00ff12 355.5px,#00ff02 356.5px,#59ff00 379.5px,#83ff00 399.5px,#98ff00 423.5px,#af0 428.5px,#c7ff00 429.5px,#cdff00 431.5px)"></i>
<i style="left:447px;background:linear-gradient(#000 191.5px,#0a0010 196.5px,#250042 210.5px,#3f00aa 239.5px,#3600ff 264.5px,#0004ff 298.5px,#006aff 330.5px,#00faff 347.5px,#00fff8 348.5px,#00ff25 360.5px,#00ff05 362.5px,#50ff00 385.5px,#6dff00 402.5px,#80ff00 423.5px,#92ff00 428.5px,#afff00 429.5px,#b5ff00 431.5px)"></i>
<i style="left:448px;background:linear-gradient(#000 228.5px,#050007 230.5px,#23003f 240.5px,#3f00a8 259.5px,#3800ff 275.5px,#2700ff 280.5px,#0004ff 286.5px,#002fff 290.5px,#0076ff 302.5px,#00f8ff 332.5px,#0ff 333.5px,#00ff1f 348.5px,#00ff04 350.5px,#5f0 378.5px,#7f0 400.5px,#8bff00 423.5px,#9dff00 428.5px,#baff00 429.5px,#c0ff00 431.5px)"></i>
<i style="left:449px;background:linear-gradient(#000 239.5px,#09000e 241.5px,#250042 247.5px,#3f00aa 260.5px,#3800ff 271.5px,#1300ff 280.5px,#0004ff 283.5px,#004eff 289.5px,#009bff 302.5px,#0ff 326.5px,#00ffc6 331.5px,#00ff03 346.5px,#50ff00 375.5px,#73ff00 399.5px,#87ff00 423.5px,#9f0 428.5px,#b6ff00 429.5px,#bcff00 431.5px)"></i>
<i style="left:450px;background:linear-gradient(#000 235.5px,#23003e 245.5px,#3e00a4 261.5px,#3700ff 276.5px,#2000ff 281.5px,#0004ff 286.5px,#002fff 290.5px,#0076ff 302.5px,#00f8ff 332.5px,#0ff 333.5px,#00ff1f 348.5px,#00ff04 350.5px,#5f0 378.5px,#7f0 400.5px,#8bff00 423.5px,#9dff00 428.5px,#baff00 429.5px,#c0ff00 431.5px)"></i>
<i style="left:451px;background:linear-gradient(#000 0.5px,#010001 203.5px,#23003e 220.5px,#3f00a6 249.5px,#3700ff 275.5px,#2400ff 282.5px,#0200ff 287.5px,#02f 291.5px,#0067ff 303.5px,#00dfff 331.5px,#00fff9 336.5px,#00ff20 350.5px,#00ff04 352.5px,#53ff00 378.5px,#7f0 400.5px,#8bff00 423.5px,#9dff00 428.5px,#baff00 429.5px,#c0ff00 431.5px)"></i>
<i style="left:452px;background:linear-gradient(#000 173.5px,#0d0015 179.5px,#250042 191.5px,#3f00a9 218.5px,#3700ff 242.5px,#0005ff 276.5px,#000eff 279.5px,#008aff 289.5px,#00dbff 303.5px,#00fffc 312.5px,#00ff02 336.5px,#4fff00 370.5px,#72ff00 399.5px,#86ff00 423.5px,#97ff00 428.5px,#b4ff00 429.5px,#baff00 431.5px)"></i>
<i style="left:453px;background:linear-gradient(#000 202.5px,#010002 203.5px,#1d0031 211.5px,#3e009c 229.5px,#3800ff 246.5px,#0004ff 268.5px,#0038ff 279.5px,#00b5ff 289.5px,#00fdff 301.5px,#0f0 326.5px,#54ff00 361.5px,#7fff00 394.5px,#93ff00 422.5px,#a7ff00 428.5px,#c4ff00 429.5px,#caff00 431.5px)"></i>
<i style="left:454px;background:linear-gradient(#000 191.5px,#22003c 203.5px,#3f00a6 224.5px,#3800ff 242.5px,#0005ff 268.5px,#0032ff 279.5px,#00aeff 289.5px,#0ff 303.5px,#01ff00 328.5px,#53ff00 364.5px,#79ff00 396.5px,#8eff00 423.5px,#a0ff00 428.5px,#bdff00 429.5px,#c3ff00 431.5px)"></i>
<i style="left:455px;background:linear-gradient(#000 168.5px,#0d0015 174.5px,#23003e 185.5px,#3f00a8 213.5px,#3700ff 237.5px,#0003ff 271.5px,#001bff 279.5px,#009eff 290.5px,#00e4ff 302.5px,#00fffa 309.5px,#00ff04 333.5px,#4eff00 371.5px,#6cff00 402.5px,#7eff00 423.5px,#90ff00 428.5px,#adff00 429.5px,#b3ff00 431.5px)"></i>
<i style="left:456px;background:linear-gradient(#000 191.5px,#22003c 204.5px,#3e00a2 226.5px,#3800ff 246.5px,#0003ff 274.5px,#0016ff 279.5px,#0092ff 289.5px,#00e3ff 303.5px,#00fffd 310.5px,#0f0 335.5px,#4aff00 371.5px,#68ff00 402.5px,#7aff00 423.5px,#8cff00 428.5px,#a9ff00 429.5px,#afff00 431.5px)"></i>
<i style="left:457px;background:linear-gradient(#000 176.5px,#040007 178.5px,#1c0030 187.5px,#3d0095 209.5px,#3900fe 232.5px,#0004ff 261.5px,#0046ff 279.5px,#00c2ff 289.5px,#00fffb 299.5px,#01ff00 323.5px,#4bff00 355.5px,#7aff00 391.5px,#8fff00 422.5px,#a3ff00 428.5px,#c0ff00 429.5px,#c6ff00 431.5px)"></i>
<i style="left:458px;background:linear-gradient(#000 220.5px,#10001a 224.5px,#2b0051 232.5px,#4000b9 247.5px,#3900fe 257.5px,#0003ff 276.5px,#001fff 280.5px,#0090ff 289.5px,#00dcff 302.5px,#00fdff 310.5px,#0f0 335.5px,#4fff00 368.5px,#74ff00 397.5px,#89ff00 423.5px,#9bff00 428.5px,#b7ff00 429.5px,#bdff00 431.5px)"></i>
<i style="left:459px;background:linear-gradient(#000 230.5px,#0a000f 232.5px,#2c0054 240.5px,#4000ba 252.5px,#3800ff 261.5px,#0003ff 277.5px,#001dff 280.5px,#0094ff 290.5px,#00daff 302.5px,#00fffe 311.5px,#0f0 336.5px,#4dff00 371.5px,#6dff00 403.5px,#7fff00 423.5px,#91ff00 428.5px,#aeff00 429.5px,#b4ff00 431.5px)"></i>
<i style="left:460px;background:linear-gradient(#000 285.5px,#140021 289.5px,#350070 303.5px,#3f00d7 325.5px,#3c00ec 330.5px,#3500ff 346.5px,#0005ff 407.5px,#001cff 423.5px,#0035ff 428.5px,#005eff 429.5px,#06f 431.5px)"></i>
<i style="left:461px;background:linear-gradient(#000 0.5px,#000001 289.5px,#170027 298.5px,#22003c 304.5px,#3c0093 327.5px,#3e009c 329.5px,#3d0099 331.5px,#3a00fa 365.5px,#0002ff 402.5px,#0012ff 407.5px,#0025ff 422.5px,#0041ff 428.5px,#006aff 429.5px,#0072ff 431.5px)"></i>
<i style="left:462px;background:linear-gradient(#000 0.5px,#010001 246.5px,#250043 264.5px,#3b008e 286.5px,#3b00f5 326.5px,#3400ff 338.5px,#0005ff 401.5px,#001aff 415.5px,#002cff 424.5px,#0041ff 428.5px,#006aff 429.5px,#0072ff 431.5px)"></i>
<i style="left:463px;background:linear-gradient(#000 249.5px,#200038 264.5px,#390080 285.5px,#3d00e6 325.5px,#3600ff 340.5px,#0005ff 391.5px,#0031ff 408.5px,#0047ff 423.5px,#0060ff 428.5px,#08f 429.5px,#0091ff 431.5px)"></i>
<i style="left:464px;background:linear-gradient(#000 0.5px,#010001 255.5px,#200038 262.5px,#3e00a1 275.5px,#4000c3 279.5px,#3800ff 283.5px,#0800ff 291.5px,#0005ff 294.5px,#0036ff 303.5px,#00b4ff 332.5px,#00feff 345.5px,#00ff37 362.5px,#01ff00 368.5px,#3f0 393.5px,#4dff00 423.5px,#5fff00 428.5px,#7cff00 429.5px,#82ff00 431.5px)"></i>
<i style="left:465px;background:linear-gradient(#000 246.5px,#1f0036 258.5px,#3d0096 279.5px,#3b00f1 285.5px,#3800ff 286.5px,#1c00ff 291.5px,#0005ff 300.5px,#008aff 331.5px,#00fcff 349.5px,#00ffcf 353.5px,#00ff2f 366.5px,#00ff04 370.5px,#32ff00 394.5px,#4cff00 423.5px,#5eff00 428.5px,#7bff00 429.5px,#81ff00 431.5px)"></i>
<i style="left:466px;background:linear-gradient(#000 0.5px,#000001 222.5px,#1c002f 235.5px,#3e009b 265.5px,#3f00d5 280.5px,#3900ff 283.5px,#0c00ff 290.5px,#0004ff 294.5px,#0035ff 303.5px,#00b3ff 332.5px,#0ff 345.5px,#00ff47 360.5px,#01ff00 367.5px,#37ff00 394.5px,#50ff00 423.5px,#62ff00 428.5px,#7fff00 429.5px,#85ff00 431.5px)"></i>
<i style="left:467px;background:linear-gradient(#000 200.5px,#1e0034 213.5px,#3e009c 239.5px,#3800ff 264.5px,#1700ff 280.5px,#0200ff 283.5px,#004dff 290.5px,#0093ff 302.5px,#0ff 328.5px,#00ff46 347.5px,#01ff00 356.5px,#34ff00 386.5px,#53ff00 423.5px,#65ff00 428.5px,#82ff00 429.5px,#8f0 431.5px)"></i>
<i style="left:468px;background:linear-gradient(#000 179.5px,#200038 195.5px,#3f00a7 226.5px,#3800ff 251.5px,#00f 283.5px,#0018ff 287.5px,#0037ff 290.5px,#0082ff 303.5px,#00fffd 333.5px,#00ff40 352.5px,#01ff00 360.5px,#3f0 390.5px,#4eff00 423.5px,#60ff00 428.5px,#7dff00 429.5px,#83ff00 431.5px)"></i>
<i style="left:469px;background:linear-gradient(#000 200.5px,#1c0030 212.5px,#3d0096 237.5px,#3900ff 263.5px,#1500ff 280.5px,#0100ff 283.5px,#004aff 289.5px,#0096ff 302.5px,#00feff 327.5px,#00ff3d 348.5px,#0f0 356.5px,#32ff00 387.5px,#4fff00 423.5px,#61ff00 428.5px,#7eff00 429.5px,#84ff00 431.5px)"></i>
<i style="left:470px;background:linear-gradient(#000 0.5px,#010001 222.5px,#22003d 233.5px,#3e009f 251.5px,#3800ff 269.5px,#1900ff 280.5px,#0005ff 284.5px,#0043ff 289.5px,#0094ff 303.5px,#00fffd 329.5px,#00ff40 350.5px,#01ff00 359.5px,#2fff00 390.5px,#48ff00 423.5px,#5aff00 428.5px,#7f0 429.5px,#7dff00 431.5px)"></i>
<i style="left:471px;background:linear-gradient(#000 246.5px,#1b002f 264.5px,#320068 287.5px,#3f00ad 329.5px,#3f00aa 331.5px,#3700ff 361.5px,#0002ff 397.5px,#0025ff 406.5px,#0039ff 422.5px,#0056ff 428.5px,#007eff 429.5px,#0087ff 431.5px)"></i>
<i style="left:472px;background:linear-gradient(#000 0.5px,#010001 244.5px,#1e0034 258.5px,#3b0088 282.5px,#3b00f5 339.5px,#3200ff 349.5px,#0005ff 392.5px,#0031ff 407.5px,#0048ff 423.5px,#0061ff 428.5px,#0089ff 429.5px,#0092ff 431.5px)"></i>
<i style="left:473px;background:linear-gradient(#000 0.5px,#010001 245.5px,#250043 263.5px,#3c0090 282.5px,#3e00e0 294.5px,#3900ff 298.5px,#0005ff 323.5px,#0021ff 331.5px,#005fff 404.5px,#0076ff 422.5px,#0089ff 427.5px,#0093ff 428.5px,#0bf 429.5px,#00c3ff 431.5px)"></i>
<i style="left:474px;background:linear-gradient(#000 269.5px,#030004 270.5px,#22003c 277.5px,#330068 281.5px,#3f00d1 288.5px,#3c00ef 291.5px,#3900ff 293.5px,#0500ff 312.5px,#000fff 318.5px,#0040ff 331.5px,#006eff 410.5px,#007eff 422.5px,#009aff 428.5px,#00c3ff 429.5px,#00cbff 431.5px)"></i>
<i style="left:475px;background:linear-gradient(#000 266.5px,#1e0034 279.5px,#2d0057 285.5px,#3b008e 289.5px,#3d00ea 302.5px,#3700ff 307.5px,#0100ff 332.5px,#0058ff 398.5px,#007fff 423.5px,#0098ff 428.5px,#00c1ff 429.5px,#00c9ff 431.5px)"></i>
<i style="left:476px;background:linear-gradient(#000 244.5px,#200038 252.5px,#3f00a4 267.5px,#3a00fb 279.5px,#0300ff 287.5px,#0038ff 295.5px,#006cff 305.5px,#00e6ff 336.5px,#00fffe 345.5px,#00ff7a 367.5px,#00ff28 387.5px,#00ff08 403.5px,#06ff00 416.5px,#1bff00 427.5px,#2f0 428.5px,#3fff00 429.5px,#45ff00 431.5px)"></i>
<i style="left:477px;background:linear-gradient(#000 218.5px,#09000e 222.5px,#2a004f 239.5px,#4000b8 266.5px,#3d00ea 279.5px,#3400ff 281.5px,#0005ff 289.5px,#0056ff 303.5px,#00d2ff 334.5px,#00fffe 351.5px,#00ff8c 372.5px,#00ff46 391.5px,#0f1 416.5px,#08ff00 424.5px,#17ff00 428.5px,#34ff00 429.5px,#39ff00 431.5px)"></i>
<i style="left:478px;background:linear-gradient(#000 244.5px,#23003f 254.5px,#3f00a7 270.5px,#3e00e0 279.5px,#3900ff 281.5px,#0003ff 290.5px,#004aff 302.5px,#0ff 347.5px,#00ff75 365.5px,#00ff1a 381.5px,#01ff00 388.5px,#1dff00 423.5px,#2fff00 428.5px,#4cff00 429.5px,#52ff00 431.5px)"></i>
<i style="left:479px;background:linear-gradient(#000 267.5px,#1c002f 279.5px,#250042 282.5px,#3f00a5 289.5px,#3900fe 301.5px,#0004ff 327.5px,#0010ff 333.5px,#002aff 409.5px,#003fff 423.5px,#0058ff 428.5px,#0080ff 429.5px,#0089ff 431.5px)"></i>
<i style="left:480px;background:linear-gradient(#000 0.5px,#010001 284.5px,#11001b 287.5px,#1c0030 289.5px,#3a0084 303.5px,#3d00ea 324.5px,#3700ff 329.5px,#0004ff 394.5px,#0026ff 411.5px,#0038ff 423.5px,#0051ff 428.5px,#007aff 429.5px,#0082ff 431.5px)"></i>
<i style="left:481px;background:linear-gradient(#000 286.5px,#020002 287.5px,#0b0011 289.5px,#260046 299.5px,#4000b8 325.5px,#4000ca 330.5px,#3700ff 355.5px,#0002ff 400.5px,#0017ff 408.5px,#002dff 423.5px,#0046ff 428.5px,#006eff 429.5px,#07f 431.5px)"></i>
<i style="left:482px;background:linear-gradient(#000 269.5px,#180029 279.5px,#3b0089 304.5px,#3c00ea 330.5px,#3600ff 345.5px,#0003ff 403.5px,#001eff 422.5px,#003bff 428.5px,#0063ff 429.5px,#006cff 431.5px)"></i>
<i style="left:483px;background:linear-gradient(#000 284.5px,#160024 288.5px,#1b002e 289.5px,#390082 303.5px,#3d00e7 324.5px,#3700ff 330.5px,#0005ff 397.5px,#001fff 410.5px,#002fff 422.5px,#0042ff 427.5px,#004cff 428.5px,#0074ff 429.5px,#007cff 431.5px)"></i>
<i style="left:484px;background:linear-gradient(#000 0.5px,#010001 285.5px,#150023 289.5px,#360073 303.5px,#3e00db 325.5px,#3c00f0 330.5px,#3500ff 346.5px,#0004ff 420.5px,#0026ff 428.5px,#004fff 429.5px,#0057ff 431.5px)"></i>
<i style="left:485px;background:linear-gradient(#000 0.5px,#000001 281.5px,#12001e 284.5px,#300061 290.5px,#4000b7 303.5px,#3700ff 318.5px,#1a00ff 333.5px,#0005ff 367.5px,#004eff 403.5px,#006dff 423.5px,#0086ff 428.5px,#00afff 429.5px,#00b7ff 431.5px)"></i>
<i style="left:486px;background:linear-gradient(#000 260.5px,#09000e 264.5px,#21003a 275.5px,#3e00a0 299.5px,#3800ff 321.5px,#0002ff 363.5px,#0069ff 403.5px,#08f 423.5px,#00a1ff 428.5px,#00caff 429.5px,#00d2ff 431.5px)"></i>
<i style="left:487px;background:linear-gradient(#000 279.5px,#020003 280.5px,#1a002c 284.5px,#360074 290.5px,#4000c7 302.5px,#3700ff 314.5px,#0d00ff 335.5px,#0006ff 348.5px,#008dff 408.5px,#00a3ff 423.5px,#00bcff 428.5px,#00e5ff 429.5px,#00edff 431.5px)"></i>
<i style="left:488px;background:linear-gradient(#000 253.5px,#200038 268.5px,#3d0096 294.5px,#3900ff 325.5px,#0005ff 377.5px,#004bff 403.5px,#0060ff 417.5px,#0074ff 425.5px,#0085ff 428.5px,#00aeff 429.5px,#00b6ff 431.5px)"></i>
<i style="left:489px;background:linear-gradient(#000 263.5px,#160025 272.5px,#3d0095 297.5px,#3a00fb 318.5px,#1400ff 340.5px,#0005ff 357.5px,#0084ff 408.5px,#009aff 423.5px,#00b3ff 428.5px,#00dcff 429.5px,#00e4ff 431.5px)"></i>
<i style="left:490px;background:linear-gradient(#000 265.5px,#160025 274.5px,#3a0087 301.5px,#3d00ea 330.5px,#3600ff 339.5px,#0003ff 378.5px,#0057ff 403.5px,#0065ff 410.5px,#0075ff 422.5px,#0091ff 428.5px,#00baff 429.5px,#00c2ff 431.5px)"></i>
<i style="left:491px;background:linear-gradient(#000 251.5px,#22003c 267.5px,#3a0084 288.5px,#3d00ea 323.5px,#3900ff 333.5px,#0005ff 412.5px,#0013ff 422.5px,#002fff 428.5px,#0058ff 429.5px,#0060ff 431.5px)"></i>
<i style="left:492px;background:linear-gradient(#000 283.5px,#040005 284.5px,#1a002c 288.5px,#3a0084 301.5px,#3c00ee 323.5px,#3700ff 327.5px,#0004ff 391.5px,#0029ff 410.5px,#0039ff 422.5px,#0056ff 428.5px,#007eff 429.5px,#0087ff 431.5px)"></i>
<i style="left:493px;background:linear-gradient(#000 282.5px,#170027 286.5px,#2a0051 290.5px,#3f00a5 303.5px,#3700ff 322.5px,#2300ff 334.5px,#0005ff 387.5px,#0031ff 414.5px,#0040ff 423.5px,#0059ff 428.5px,#0082ff 429.5px,#008aff 431.5px)"></i>
<i style="left:494px;background:linear-gradient(#000 0.5px,#010001 250.5px,#1e0035 264.5px,#3d0095 290.5px,#3a00f8 318.5px,#3100ff 325.5px,#0004ff 379.5px,#0042ff 409.5px,#0053ff 422.5px,#06f 427.5px,#0070ff 428.5px,#0098ff 429.5px,#00a0ff 431.5px)"></i>
<i style="left:495px;background:linear-gradient(#000 0.5px,#000001 250.5px,#22003c 266.5px,#3e009d 294.5px,#3800ff 326.5px,#0005ff 402.5px,#0025ff 423.5px,#003eff 428.5px,#0067ff 429.5px,#006fff 431.5px)"></i>
<i style="left:496px;background:linear-gradient(#000 285.5px,#09000e 287.5px,#140020 289.5px,#34006e 303.5px,#3f00d6 325.5px,#3c00ef 332.5px,#3600ff 343.5px,#0005ff 397.5px,#0020ff 408.5px,#0036ff 423.5px,#004fff 428.5px,#07f 429.5px,#0080ff 431.5px)"></i>
<i style="left:497px;background:linear-gradient(#000 259.5px,#1e0033 272.5px,#3e009e 298.5px,#3800ff 321.5px,#0004ff 348.5px,#0af 393.5px,#00cdff 408.5px,#00e2ff 423.5px,#00fbff 428.5px,#00ffa3 429.5px,#00ff8e 431.5px)"></i>
<i style="left:498px;background:linear-gradient(#000 282.5px,#020004 283.5px,#130020 286.5px,#270048 290.5px,#3d0096 302.5px,#3a00f8 322.5px,#2c00ff 329.5px,#0005ff 357.5px,#0097ff 407.5px,#00adff 423.5px,#00c6ff 428.5px,#00efff 429.5px,#00f7ff 431.5px)"></i>
<i style="left:499px;background:linear-gradient(#000 282.5px,#020003 283.5px,#19002a 287.5px,#29004e 291.5px,#3d0099 303.5px,#3900fc 323.5px,#2700ff 336.5px,#0005ff 393.5px,#0025ff 413.5px,#0036ff 423.5px,#004fff 428.5px,#07f 429.5px,#0080ff 431.5px)"></i>
<i style="left:500px;background:linear-gradient(#000 281.5px,#12001d 284.5px,#300060 290.5px,#3f00b1 302.5px,#3800ff 318.5px,#1c00ff 333.5px,#0005ff 383.5px,#0040ff 423.5px,#0059ff 428.5px,#0082ff 429.5px,#008aff 431.5px)"></i>
<i style="left:501px;background:linear-gradient(#000 282.5px,#170027 286.5px,#2a0051 290.5px,#3f00a5 303.5px,#3700ff 322.5px,#2300ff 334.5px,#0005ff 387.5px,#002fff 414.5px,#0043ff 424.5px,#0058ff 428.5px,#0080ff 429.5px,#0089ff 431.5px)"></i>
<i style="left:502px;background:linear-gradient(#000 283.5px,#040005 284.5px,#1a002c 288.5px,#3a0084 301.5px,#3c00ee 323.5px,#3700ff 327.5px,#0005ff 398.5px,#0020ff 415.5px,#0032ff 424.5px,#0047ff 428.5px,#0070ff 429.5px,#0078ff 431.5px)"></i>
<i style="left:503px;background:linear-gradient(#000 249.5px,#0a0010 254.5px,#260045 268.5px,#3f00aa 296.5px,#3600ff 322.5px,#0004ff 352.5px,#00aeff 403.5px,#00c7ff 422.5px,#00e4ff 428.5px,#00ffde 429.5px,#00ffc9 431.5px)"></i>
<i style="left:504px;background:linear-gradient(#000 270.5px,#180029 280.5px,#3d0096 302.5px,#3a00f8 322.5px,#2c00ff 329.5px,#0002ff 350.5px,#00a5ff 396.5px,#00c0ff 408.5px,#00d6ff 423.5px,#00efff 428.5px,#00ffc2 429.5px,#00ffad 431.5px)"></i>
<i style="left:505px;background:linear-gradient(#000 277.5px,#09000f 279.5px,#22003d 283.5px,#3d0098 290.5px,#3c00ed 302.5px,#3500ff 307.5px,#0004ff 332.5px,#00acff 395.5px,#0cf 417.5px,#00e0ff 425.5px,#00f1ff 428.5px,#00ffbc 429.5px,#00ffa8 431.5px)"></i>
<i style="left:506px;background:linear-gradient(#000 278.5px,#040006 279.5px,#170026 282.5px,#390082 289.5px,#3e00de 302.5px,#3800ff 309.5px,#0003ff 336.5px,#00abff 398.5px,#00ceff 422.5px,#00eaff 428.5px,#00ffcd 429.5px,#00ffb8 431.5px)"></i>
<i style="left:507px;background:linear-gradient(#000 282.5px,#020004 283.5px,#130020 286.5px,#270048 290.5px,#3d0096 302.5px,#3a00f8 322.5px,#2c00ff 329.5px,#0005ff 345.5px,#00a2ff 379.5px,#00e9ff 400.5px,#00fffb 419.5px,#00ffea 422.5px,#00ffba 427.5px,#00ffa3 428.5px,#00ff3e 429.5px,#00ff29 431.5px)"></i>
<i style="left:508px;background:linear-gradient(#000 0.5px,#010001 282.5px,#180028 286.5px,#2b0052 290.5px,#3e00a1 302.5px,#3800ff 321.5px,#0004ff 345.5px,#009fff 383.5px,#0df 404.5px,#00f3ff 422.5px,#00feff 425.5px,#00ffec 427.5px,#00ffd6 428.5px,#00ff70 429.5px,#00ff5c 431.5px)"></i>
<i style="left:509px;background:linear-gradient(#000 270.5px,#160024 279.5px,#3a0085 298.5px,#3d00e6 317.5px,#3600ff 323.5px,#0004ff 348.5px,#00a4ff 391.5px,#00caff 406.5px,#00e2ff 423.5px,#00fbff 428.5px,#00ffa3 429.5px,#00ff8e 431.5px)"></i>
<i style="left:510px;background:linear-gradient(#000 269.5px,#1d0031 281.5px,#3e009f 303.5px,#3700ff 323.5px,#0004ff 344.5px,#009fff 377.5px,#00edff 400.5px,#00fffb 416.5px,#00ffeb 421.5px,#00ffb1 427.5px,#00ff9b 428.5px,#00ff35 429.5px,#00ff20 431.5px)"></i>
<i style="left:511px;background:linear-gradient(#000 0.5px,#010001 282.5px,#180028 286.5px,#2b0052 290.5px,#3e00a1 302.5px,#3800ff 321.5px,#2300ff 333.5px,#0005ff 389.5px,#002bff 413.5px,#003cff 423.5px,#05f 428.5px,#007dff 429.5px,#0085ff 431.5px)"></i>
<i style="left:512px;background:linear-gradient(#000 286.5px,#0e0016 289.5px,#29004d 299.5px,#4000b8 323.5px,#3f00d8 331.5px,#3600ff 351.5px,#0003ff 398.5px,#001dff 407.5px,#0030ff 422.5px,#004dff 428.5px,#0075ff 429.5px,#007eff 431.5px)"></i>
<i style="left:513px;background:linear-gradient(#000 284.5px,#020004 285.5px,#180027 289.5px,#370079 303.5px,#3e00e2 325.5px,#3200ff 332.5px,#0004ff 344.5px,#00a2ff 368.5px,#00fcff 386.5px,#00ffdf 390.5px,#00ff9b 399.5px,#00ff7a 409.5px,#00ff59 421.5px,#00ff1f 427.5px,#00ff08 428.5px,#1bff00 429.5px,#21ff00 431.5px)"></i>
<i style="left:514px;background:linear-gradient(#000 0.5px,#000001 265.5px,#10001a 271.5px,#23003f 281.5px,#3e009d 322.5px,#3f00aa 330.5px,#3900fe 339.5px,#0001ff 354.5px,#0098ff 379.5px,#00edff 398.5px,#00fffb 407.5px,#00ffd5 421.5px,#00ff9b 427.5px,#00ff84 428.5px,#00ff1f 429.5px,#00ff0a 431.5px)"></i>
<i style="left:515px;background:linear-gradient(#000 0.5px,#010001 253.5px,#23003e 269.5px,#350070 281.5px,#3e009c 288.5px,#4000ba 291.5px,#3900fe 300.5px,#0005ff 326.5px,#00b3ff 363.5px,#00fffa 385.5px,#00ffad 398.5px,#00ff6d 421.5px,#0f3 427.5px,#00ff1c 428.5px,#15ff00 429.5px,#1bff00 431.5px)"></i>
<i style="left:516px;background:linear-gradient(#000 233.5px,#0a0010 238.5px,#250042 252.5px,#3f00ae 281.5px,#3700ff 300.5px,#0003ff 328.5px,#00a9ff 365.5px,#00feff 391.5px,#00ffc7 403.5px,#00ff97 421.5px,#00ff5d 427.5px,#00ff46 428.5px,#09ff00 429.5px,#0fff00 431.5px)"></i>
<i style="left:517px;background:linear-gradient(#000 0.5px,#010001 253.5px,#23003e 269.5px,#37007a 283.5px,#4000bf 294.5px,#3900fc 303.5px,#0005ff 330.5px,#0087ff 413.5px,#0098ff 423.5px,#00b1ff 428.5px,#00d9ff 429.5px,#00e2ff 431.5px)"></i>
<i style="left:518px;background:linear-gradient(#000 288.5px,#1a002d 298.5px,#3d009b 326.5px,#3f00a9 329.5px,#3f00aa 331.5px,#3600ff 351.5px,#0005ff 378.5px,#007aff 406.5px,#0092ff 423.5px,#00abff 428.5px,#00d4ff 429.5px,#00dcff 431.5px)"></i>
<i style="left:519px;background:linear-gradient(#000 289.5px,#140020 297.5px,#1b002e 300.5px,#370079 322.5px,#3d0098 329.5px,#3c0091 330.5px,#3b00f2 352.5px,#3600ff 356.5px,#0002ff 382.5px,#0061ff 403.5px,#006eff 407.5px,#0081ff 422.5px,#009eff 428.5px,#00c6ff 429.5px,#00cfff 431.5px)"></i>
<i style="left:520px;background:linear-gradient(#000 287.5px,#0b0012 290.5px,#29004d 302.5px,#4000bd 328.5px,#3600ff 355.5px,#0003ff 394.5px,#002eff 407.5px,#0041ff 422.5px,#0054ff 427.5px,#005eff 428.5px,#0086ff 429.5px,#008eff 431.5px)"></i>
<i style="left:521px;background:linear-gradient(#000 0.5px,#010001 259.5px,#1e0035 273.5px,#2c0055 285.5px,#3e009e 329.5px,#3d0096 330.5px,#3a00f9 369.5px,#2400ff 387.5px,#0200ff 410.5px,#000cff 422.5px,#0029ff 428.5px,#0051ff 429.5px,#0059ff 431.5px)"></i>
<i style="left:522px;background:linear-gradient(#000 284.5px,#09000e 286.5px,#19002b 289.5px,#38007d 303.5px,#3e00e2 324.5px,#3900fe 331.5px,#0003ff 399.5px,#0019ff 411.5px,#002cff 423.5px,#0045ff 428.5px,#006dff 429.5px,#0076ff 431.5px)"></i>
<i style="left:523px;background:linear-gradient(#000 0.5px,#010001 246.5px,#250043 264.5px,#3c008e 286.5px,#3b00f6 326.5px,#3500ff 335.5px,#0004ff 397.5px,#001eff 410.5px,#002eff 422.5px,#004aff 428.5px,#0073ff 429.5px,#007bff 431.5px)"></i>
<i style="left:524px;background:linear-gradient(#000 283.5px,#020004 284.5px,#180029 288.5px,#390080 301.5px,#3d00ea 323.5px,#3700ff 328.5px,#0003ff 351.5px,#00a9ff 393.5px,#00cdff 407.5px,#00e0ff 422.5px,#00fcff 428.5px,#00ffa0 429.5px,#00ff8b 431.5px)"></i>
<i style="left:525px;background:linear-gradient(#000 248.5px,#150023 258.5px,#360076 280.5px,#3f00da 306.5px,#3600ff 317.5px,#0003ff 347.5px,#00a7ff 397.5px,#00c0ff 410.5px,#00d0ff 422.5px,#00edff 428.5px,#00ffc8 429.5px,#00ffb3 431.5px)"></i>
<i style="left:526px;background:linear-gradient(#000 0.5px,#000001 263.5px,#19002a 273.5px,#3c0090 301.5px,#3b00f5 331.5px,#3400ff 343.5px,#0003ff 401.5px,#001bff 417.5px,#002fff 425.5px,#0040ff 428.5px,#0069ff 429.5px,#0071ff 431.5px)"></i>
<i style="left:527px;background:linear-gradient(#000 261.5px,#09000e 265.5px,#23003e 277.5px,#3e00a0 309.5px,#3e00dd 331.5px,#3600ff 352.5px,#0005ff 404.5px,#001dff 422.5px,#0030ff 427.5px,#003aff 428.5px,#0062ff 429.5px,#006aff 431.5px)"></i>
<i style="left:528px;background:linear-gradient(#000 255.5px,#0d0015 261.5px,#2a004f 276.5px,#4000b4 306.5px,#3800ff 330.5px,#0005ff 387.5px,#0039ff 408.5px,#004bff 422.5px,#0068ff 428.5px,#0090ff 429.5px,#09f 431.5px)"></i>
<i style="left:529px;background:linear-gradient(#000 238.5px,#1c0031 252.5px,#3d0094 279.5px,#3a00fb 299.5px,#0002ff 325.5px,#00bcff 363.5px,#00fffe 381.5px,#00ffa6 394.5px,#00ff81 404.5px,#00ff53 421.5px,#00ff3e 422.5px,#00ff1b 423.5px,#00ff19 427.5px,#00ff02 428.5px,#1cff00 429.5px,#2f0 431.5px)"></i>
<i style="left:530px;background:linear-gradient(#000 255.5px,#09000e 259.5px,#240040 271.5px,#300061 279.5px,#4000c8 286.5px,#3b00f6 289.5px,#3200ff 292.5px,#00f 310.5px,#00caff 360.5px,#0ff 377.5px,#00ffa5 393.5px,#00ff7f 406.5px,#00ff63 417.5px,#00ff0e 419.5px,#09ff00 420.5px,#2fff00 423.5px,#2fff00 431.5px)"></i>
<i style="left:531px;background:linear-gradient(#000 253.5px,#0d0015 259.5px,#2a004f 274.5px,#37007a 283.5px,#3d009a 287.5px,#4000c0 290.5px,#3600ff 299.5px,#0004ff 323.5px,#009eff 364.5px,#00f1ff 394.5px,#00fffa 404.5px,#0fc 421.5px,#00ffc2 422.5px,#00ff07 426.5px,#18ff00 428.5px,#18ff00 431.5px)"></i>
<i style="left:532px;background:linear-gradient(#000 272.5px,#010002 273.5px,#1c0031 279.5px,#3e00a1 287.5px,#4000c7 290.5px,#3600ff 298.5px,#0005ff 322.5px,#0bf 365.5px,#00fffe 387.5px,#00ffb8 401.5px,#0f8 420.5px,#00ff7a 421.5px,#00ff1c 423.5px,#05ff00 424.5px,#10ff00 425.5px,#14ff00 431.5px)"></i>
<i style="left:533px;background:linear-gradient(#000 253.5px,#200038 268.5px,#3d0098 294.5px,#3900fe 323.5px,#0001ff 350.5px,#00a5ff 393.5px,#00c8ff 407.5px,#00d1ff 416.5px,#00f4ff 418.5px,#00ffeb 419.5px,#00ff5f 422.5px,#00ff51 423.5px,#00ff51 431.5px)"></i>
<i style="left:534px;background:linear-gradient(#000 266.5px,#1c0030 278.5px,#3d0099 300.5px,#3900fc 320.5px,#0004ff 353.5px,#009dff 406.5px,#00acff 416.5px,#00f7ff 420.5px,#00ffe3 421.5px,#00ff28 425.5px,#02ff00 426.5px,#0cff00 428.5px,#0cff00 431.5px)"></i>
<i style="left:535px;background:linear-gradient(#000 282.5px,#09000f 284.5px,#1b002d 287.5px,#28004b 290.5px,#3d0099 302.5px,#3900fc 322.5px,#0004ff 350.5px,#00a7ff 397.5px,#00c1ff 410.5px,#00c6ff 415.5px,#00e1ff 417.5px,#00f4ff 418.5px,#00ffeb 419.5px,#00ff30 423.5px,#00ff21 424.5px,#00ff21 431.5px)"></i>
<i style="left:536px;background:linear-gradient(#000 252.5px,#11001c 260.5px,#28004a 272.5px,#4000ba 297.5px,#3800ff 312.5px,#0002ff 336.5px,#009eff 369.5px,#00f5ff 394.5px,#00fffb 399.5px,#00ffda 409.5px,#00ffc5 417.5px,#00ff0f 421.5px,#09ff00 422.5px,#1dff00 424.5px,#1dff00 431.5px)"></i>
<i style="left:537px;background:linear-gradient(#000 223.5px,#1a002b 235.5px,#3c0090 263.5px,#3f00d0 282.5px,#3700ff 310.5px,#2300ff 331.5px,#0004ff 342.5px,#00a2ff 372.5px,#00f7ff 394.5px,#00fff8 398.5px,#00ffd9 405.5px,#00ffb5 419.5px,#00ffa9 420.5px,#00ff1f 423.5px,#00ff1f 428.5px,#02ff00 429.5px,#08ff00 431.5px)"></i>
<i style="left:538px;background:linear-gradient(#000 181.5px,#200038 197.5px,#3f00a7 228.5px,#3800ff 253.5px,#0005ff 286.5px,#00afff 325.5px,#00fdff 340.5px,#00ff2c 358.5px,#00ff03 362.5px,#3bff00 390.5px,#59ff00 423.5px,#6aff00 428.5px,#87ff00 429.5px,#8dff00 431.5px)"></i>
<i style="left:539px;background:linear-gradient(#000 223.5px,#1b002d 232.5px,#3d0096 253.5px,#3900ff 274.5px,#2700ff 280.5px,#0005ff 286.5px,#0030ff 290.5px,#07f 302.5px,#00fffb 334.5px,#00ff3f 350.5px,#00ff01 356.5px,#3fff00 385.5px,#62ff00 423.5px,#74ff00 428.5px,#91ff00 429.5px,#97ff00 431.5px)"></i>
<i style="left:540px;background:linear-gradient(#000 262.5px,#030004 263.5px,#260045 271.5px,#3a0087 279.5px,#3e00e2 285.5px,#3800ff 287.5px,#1c00ff 293.5px,#0005ff 303.5px,#007eff 331.5px,#00fffe 351.5px,#00ff48 365.5px,#01ff00 372.5px,#32ff00 395.5px,#4bff00 423.5px,#5dff00 428.5px,#7aff00 429.5px,#7fff00 431.5px)"></i>
<i style="left:541px;background:linear-gradient(#000 266.5px,#020003 267.5px,#1e0034 273.5px,#320065 279.5px,#3f00ce 286.5px,#3900fc 289.5px,#0400ff 307.5px,#0009ff 311.5px,#0061ff 331.5px,#00f3ff 353.5px,#0ff 355.5px,#00ff4e 369.5px,#01ff00 377.5px,#29ff00 398.5px,#3fff00 423.5px,#51ff00 428.5px,#6dff00 429.5px,#73ff00 431.5px)"></i>
<i style="left:542px;background:linear-gradient(#000 0.5px,#010001 224.5px,#23003e 241.5px,#3f00a7 270.5px,#3d00e6 285.5px,#3700ff 291.5px,#0005ff 317.5px,#003bff 330.5px,#00d8ff 351.5px,#00feff 357.5px,#00ff4f 370.5px,#0f0 377.5px,#2bff00 397.5px,#42ff00 423.5px,#54ff00 428.5px,#71ff00 429.5px,#7f0 431.5px)"></i>
<i style="left:543px;background:linear-gradient(#000 182.5px,#0a0010 187.5px,#200038 198.5px,#3f00a7 229.5px,#3600ff 255.5px,#0b00ff 280.5px,#0006ff 282.5px,#005dff 289.5px,#00aeff 303.5px,#00fffa 323.5px,#00ff4c 341.5px,#00ff02 350.5px,#3bff00 385.5px,#59ff00 423.5px,#6bff00 428.5px,#8f0 429.5px,#8eff00 431.5px)"></i>
<i style="left:544px;background:linear-gradient(#000 223.5px,#050007 225.5px,#200038 234.5px,#3e009f 253.5px,#3800ff 271.5px,#1e00ff 280.5px,#0200ff 284.5px,#0040ff 290.5px,#008bff 303.5px,#00feff 331.5px,#00ff56 354.5px,#0f0 369.5px,#1eff00 402.5px,#30ff00 423.5px,#42ff00 428.5px,#5fff00 429.5px,#65ff00 431.5px)"></i>
<i style="left:545px;background:linear-gradient(#000 273.5px,#020003 274.5px,#190029 279.5px,#3d0098 287.5px,#4000b6 289.5px,#3700ff 299.5px,#0005ff 324.5px,#008aff 362.5px,#00e1ff 395.5px,#00fffe 419.5px,#00ffec 420.5px,#00ff02 425.5px,#0dff00 426.5px,#0dff00 431.5px)"></i>
<i style="left:546px;background:linear-gradient(#000 271.5px,#200038 278.5px,#3a0086 284.5px,#3f00d1 289.5px,#3900ff 295.5px,#0100ff 317.5px,#00a0ff 359.5px,#00f7ff 390.5px,#00fffa 395.5px,#00ffc4 413.5px,#00ffba 417.5px,#00ffa1 418.5px,#00ff14 421.5px,#08ff00 422.5px,#14ff00 423.5px,#14ff00 431.5px)"></i>
<i style="left:547px;background:linear-gradient(#000 276.5px,#020002 277.5px,#0b0011 279.5px,#29004e 284.5px,#3e009c 290.5px,#3b00f1 302.5px,#3600ff 306.5px,#0002ff 330.5px,#009dff 370.5px,#00ecff 398.5px,#00fffa 415.5px,#00ffe9 421.5px,#00ffd5 422.5px,#00ff48 425.5px,#00ff2f 426.5px,#00ff2f 429.5px,#00ff1e 431.5px)"></i>
<i style="left:548px;background:linear-gradient(#000 268.5px,#1c0030 274.5px,#320067 280.5px,#3f00cf 287.5px,#3c00ee 289.5px,#3600ff 292.5px,#0100ff 311.5px,#005eff 336.5px,#00d0ff 380.5px,#00faff 406.5px,#00fff7 414.5px,#00fff2 416.5px,#00ffce 417.5px,#00ff13 421.5px,#08ff00 422.5px,#30ff00 425.5px,#34ff00 431.5px)"></i>
<i style="left:549px;background:linear-gradient(#000 255.5px,#0d0015 261.5px,#2a004f 276.5px,#38007b 284.5px,#4000c7 290.5px,#3600ff 298.5px,#0005ff 322.5px,#00a4ff 363.5px,#00f9ff 393.5px,#00fff7 398.5px,#00ffc0 418.5px,#00ffad 419.5px,#00ff21 422.5px,#04ff00 423.5px,#09ff00 431.5px)"></i>
<i style="left:550px;background:linear-gradient(#000 238.5px,#1c0031 252.5px,#3d0094 279.5px,#3900fc 299.5px,#0004ff 325.5px,#009dff 365.5px,#00efff 394.5px,#00fffb 405.5px,#00ffd7 419.5px,#0fc 420.5px,#0f1 424.5px,#01ff00 425.5px,#01ff00 431.5px)"></i>
<i style="left:551px;background:linear-gradient(#000 255.5px,#0d0015 261.5px,#2a004f 276.5px,#3a0086 286.5px,#3f00b3 289.5px,#3800ff 299.5px,#0003ff 324.5px,#00acff 366.5px,#00fcff 394.5px,#00ffbf 416.5px,#00ffb8 419.5px,#00ff64 421.5px,#00ff06 423.5px,#08ff00 431.5px)"></i>
<i style="left:552px;background:linear-gradient(#000 0.5px,#010001 271.5px,#1c0031 277.5px,#29004e 280.5px,#4000b4 287.5px,#3f00da 290.5px,#3800ff 295.5px,#0004ff 318.5px,#06f 344.5px,#00d8ff 383.5px,#00fffe 406.5px,#00ffe1 417.5px,#00ffd0 418.5px,#00ff14 422.5px,#08ff00 423.5px,#1dff00 425.5px,#1dff00 431.5px)"></i>
<i style="left:553px;background:linear-gradient(#000 255.5px,#21003a 270.5px,#34006e 282.5px,#3b008c 287.5px,#3f00b0 290.5px,#3800ff 301.5px,#0003ff 326.5px,#00a2ff 369.5px,#00f1ff 399.5px,#00fffa 413.5px,#00ffe8 420.5px,#00ffc8 421.5px,#00ff0d 425.5px,#0f0 426.5px,#0f0 431.5px)"></i>
<i style="left:554px;background:linear-gradient(#000 293.5px,#0f0018 301.5px,#1a002d 313.5px,#2c0056 329.5px,#1c0030 330.5px,#3c0092 395.5px,#3f00b3 412.5px,#4000c4 422.5px,#3d00e8 428.5px,#2c00ff 429.5px,#2800ff 431.5px)"></i>
<i style="left:555px;background:linear-gradient(#000 0.5px,#010001 293.5px,#0f0017 300.5px,#1b002f 313.5px,#2e0059 329.5px,#200037 330.5px,#3c008f 398.5px,#4000b9 422.5px,#3f00d1 427.5px,#3e00dd 428.5px,#3100ff 429.5px,#2d00ff 431.5px)"></i>
<i style="left:556px;background:linear-gradient(#000 269.5px,#1c0030 281.5px,#3c0093 305.5px,#3b00f6 328.5px,#3400ff 337.5px,#0003ff 394.5px,#0025ff 409.5px,#0039ff 423.5px,#0052ff 428.5px,#007bff 429.5px,#0083ff 431.5px)"></i>
<i style="left:557px;background:linear-gradient(#000 253.5px,#200038 268.5px,#3e009d 295.5px,#3700ff 323.5px,#10f 366.5px,#0006ff 390.5px,#002cff 411.5px,#003fff 423.5px,#0058ff 428.5px,#0080ff 429.5px,#0089ff 431.5px)"></i>
<i style="left:558px;background:linear-gradient(#000 283.5px,#100019 286.5px,#230040 290.5px,#3b008c 302.5px,#3b00f2 323.5px,#3500ff 327.5px,#0005ff 398.5px,#0023ff 419.5px,#003dff 427.5px,#0046ff 428.5px,#006eff 429.5px,#07f 431.5px)"></i>
<i style="left:559px;background:linear-gradient(#000 259.5px,#1f0037 273.5px,#3d0097 303.5px,#3b00f1 335.5px,#3500ff 344.5px,#0003ff 389.5px,#0038ff 407.5px,#004bff 422.5px,#0068ff 428.5px,#0090ff 429.5px,#09f 431.5px)"></i>
<i style="left:560px;background:linear-gradient(#000 0.5px,#000001 264.5px,#19002a 274.5px,#3d0096 299.5px,#3a00f9 321.5px,#2800ff 333.5px,#0005ff 400.5px,#0025ff 422.5px,#0041ff 428.5px,#006aff 429.5px,#0072ff 431.5px)"></i>
<i style="left:561px;background:linear-gradient(#000 280.5px,#030005 281.5px,#1b002e 285.5px,#320068 290.5px,#4000ba 302.5px,#3800ff 316.5px,#0001ff 339.5px,#009bff 374.5px,#00ebff 399.5px,#00fffb 416.5px,#00ffeb 421.5px,#00ffb1 427.5px,#00ff9b 428.5px,#00ff35 429.5px,#00ff20 431.5px)"></i>
<i style="left:562px;background:linear-gradient(#000 248.5px,#150023 258.5px,#39007f 282.5px,#3d00e6 305.5px,#3800ff 311.5px,#0001ff 337.5px,#009eff 375.5px,#00ebff 401.5px,#00fffb 420.5px,#00ffbd 427.5px,#00ffa6 428.5px,#00ff41 429.5px,#00ff2c 431.5px)"></i>
<i style="left:563px;background:linear-gradient(#000 0.5px,#010001 258.5px,#1e0035 271.5px,#310065 282.5px,#3b008c 288.5px,#3f00aa 291.5px,#3a00f8 302.5px,#2c00ff 309.5px,#0004ff 329.5px,#00acff 399.5px,#00cfff 423.5px,#00e8ff 428.5px,#00ffd3 429.5px,#00ffbe 431.5px)"></i>
<i style="left:564px;background:linear-gradient(#000 0.5px,#010001 250.5px,#1e0035 264.5px,#38007f 282.5px,#4000ca 294.5px,#3900fc 301.5px,#0003ff 327.5px,#008bff 378.5px,#00c6ff 408.5px,#00d8ff 422.5px,#00ebff 427.5px,#00f5ff 428.5px,#00ffb4 429.5px,#00ff9f 431.5px)"></i>
<i style="left:565px;background:linear-gradient(#000 278.5px,#0b0011 280.5px,#29004d 285.5px,#3a0085 289.5px,#3e00e1 302.5px,#3600ff 309.5px,#0001ff 335.5px,#00acff 403.5px,#00c5ff 422.5px,#00e1ff 428.5px,#00ffe4 429.5px,#00ffcf 431.5px)"></i>
<i style="left:566px;background:linear-gradient(#000 257.5px,#23003e 273.5px,#3f00ae 297.5px,#3700ff 314.5px,#1300ff 332.5px,#0005ff 395.5px,#0025ff 422.5px,#0041ff 428.5px,#006aff 429.5px,#0072ff 431.5px)"></i>
<i style="left:567px;background:linear-gradient(#000 256.5px,#23003e 272.5px,#3f00ae 300.5px,#3700ff 321.5px,#2400ff 336.5px,#0005ff 399.5px,#0026ff 422.5px,#0039ff 427.5px,#0043ff 428.5px,#006bff 429.5px,#0073ff 431.5px)"></i>
<i style="left:568px;background:linear-gradient(#000 0.5px,#000001 264.5px,#19002a 274.5px,#3e009d 299.5px,#3700ff 320.5px,#1900ff 331.5px,#00f 335.5px,#00afff 353.5px,#00fffb 363.5px,#00ff40 374.5px,#00ff07 378.5px,#09ff00 381.5px,#34ff00 397.5px,#50ff00 424.5px,#5fff00 428.5px,#7cff00 429.5px,#82ff00 431.5px)"></i>
<i style="left:569px;background:linear-gradient(#000 267.5px,#160025 276.5px,#3b0089 298.5px,#3b00f1 320.5px,#3600ff 324.5px,#2100ff 331.5px,#0200ff 336.5px,#00c8ff 357.5px,#00fffd 364.5px,#00ff42 375.5px,#01ff00 380.5px,#31ff00 397.5px,#4aff00 423.5px,#5cff00 428.5px,#79ff00 429.5px,#7fff00 431.5px)"></i>
<i style="left:570px;background:linear-gradient(#000 236.5px,#07000b 238.5px,#260047 246.5px,#3f00a7 259.5px,#3800ff 271.5px,#1700ff 280.5px,#0200ff 283.5px,#004dff 290.5px,#0093ff 302.5px,#0ff 328.5px,#0f6 346.5px,#0f0 361.5px,#29ff00 393.5px,#3dff00 422.5px,#51ff00 428.5px,#6eff00 429.5px,#74ff00 431.5px)"></i>
<i style="left:571px;background:linear-gradient(#000 205.5px,#1c002f 215.5px,#3d0096 237.5px,#3900fd 259.5px,#0900ff 280.5px,#0008ff 282.5px,#005fff 289.5px,#00acff 302.5px,#0ff 322.5px,#00ff9d 332.5px,#00ff03 354.5px,#2dff00 390.5px,#45ff00 423.5px,#57ff00 428.5px,#74ff00 429.5px,#7aff00 431.5px)"></i>
<i style="left:572px;background:linear-gradient(#000 176.5px,#0a0010 181.5px,#22003c 193.5px,#3f00a6 222.5px,#3800ff 247.5px,#0400ff 279.5px,#0037ff 284.5px,#0076ff 289.5px,#00c2ff 302.5px,#00fffb 317.5px,#00ff6f 331.5px,#01ff00 351.5px,#2bff00 393.5px,#3eff00 422.5px,#52ff00 428.5px,#6fff00 429.5px,#75ff00 431.5px)"></i>
<i style="left:573px;background:linear-gradient(#000 205.5px,#1c002f 218.5px,#3d0097 247.5px,#3900fc 275.5px,#0003ff 305.5px,#0068ff 331.5px,#00f5ff 353.5px,#00fffc 355.5px,#00ff50 369.5px,#00ff01 377.5px,#27ff00 399.5px,#3cff00 423.5px,#4dff00 428.5px,#6aff00 429.5px,#70ff00 431.5px)"></i>
<i style="left:574px;background:linear-gradient(#000 236.5px,#200038 252.5px,#3f00a6 281.5px,#3700ff 296.5px,#0004ff 319.5px,#03f 330.5px,#00d8ff 351.5px,#00fffe 357.5px,#00ff50 369.5px,#01ff00 376.5px,#2fff00 396.5px,#4bff00 424.5px,#5aff00 428.5px,#7f0 429.5px,#7dff00 431.5px)"></i>
<i style="left:575px;background:linear-gradient(#000 0.5px,#010001 226.5px,#23003e 238.5px,#3f00aa 259.5px,#3800ff 276.5px,#2400ff 281.5px,#0100ff 286.5px,#002aff 290.5px,#0070ff 302.5px,#00ebff 333.5px,#00fffb 342.5px,#00ff80 367.5px,#00ff38 389.5px,#00ff10 411.5px,#01ff00 419.5px,#1bff00 428.5px,#38ff00 429.5px,#3eff00 431.5px)"></i>
<i style="left:576px;background:linear-gradient(#000 186.5px,#0a0010 191.5px,#200038 202.5px,#3f00a7 233.5px,#3800ff 258.5px,#0a00ff 283.5px,#00f 285.5px,#0037ff 290.5px,#0082ff 303.5px,#00f9ff 333.5px,#00fff6 337.5px,#00ff79 361.5px,#00ff26 384.5px,#00ff06 402.5px,#1f0 423.5px,#23ff00 428.5px,#40ff00 429.5px,#46ff00 431.5px)"></i>
<i style="left:577px;background:linear-gradient(#000 0.5px,#000001 226.5px,#1c002f 239.5px,#3d0095 267.5px,#3f00d5 283.5px,#3700ff 292.5px,#0003ff 316.5px,#0045ff 331.5px,#00d0ff 353.5px,#00feff 362.5px,#00ff6d 376.5px,#0f1 388.5px,#02ff00 392.5px,#1fff00 423.5px,#30ff00 428.5px,#4dff00 429.5px,#53ff00 431.5px)"></i>
<i style="left:578px;background:linear-gradient(#000 264.5px,#010002 265.5px,#1d0032 272.5px,#300060 279.5px,#4000c8 286.5px,#3b00f6 289.5px,#3200ff 292.5px,#00f 310.5px,#05f 330.5px,#00ebff 351.5px,#00fdff 354.5px,#00ff2d 370.5px,#00ff01 374.5px,#2fff00 395.5px,#48ff00 423.5px,#5aff00 428.5px,#7f0 429.5px,#7dff00 431.5px)"></i>
<i style="left:579px;background:linear-gradient(#000 237.5px,#030005 238.5px,#1c0030 243.5px,#3b008c 254.5px,#3b00f1 267.5px,#3400ff 270.5px,#0b00ff 280.5px,#0005ff 282.5px,#005cff 289.5px,#00a8ff 302.5px,#00fffd 323.5px,#00ff6d 338.5px,#01ff00 352.5px,#37ff00 386.5px,#51ff00 422.5px,#65ff00 428.5px,#82ff00 429.5px,#8f0 431.5px)"></i>
<i style="left:580px;background:linear-gradient(#000 0.5px,#010001 226.5px,#250042 238.5px,#3f00aa 257.5px,#3800ff 273.5px,#20f 280.5px,#00f 285.5px,#0032ff 289.5px,#007fff 302.5px,#00fdff 332.5px,#00ff26 353.5px,#00ff02 357.5px,#39ff00 387.5px,#58ff00 423.5px,#69ff00 428.5px,#86ff00 429.5px,#8cff00 431.5px)"></i>
<i style="left:581px;background:linear-gradient(#000 186.5px,#0a0010 191.5px,#200038 202.5px,#3f00a7 233.5px,#3800ff 258.5px,#0b00ff 283.5px,#0004ff 287.5px,#0023ff 290.5px,#0069ff 302.5px,#00fffe 337.5px,#00ff4b 354.5px,#01ff00 363.5px,#32ff00 391.5px,#4cff00 423.5px,#5eff00 428.5px,#7bff00 429.5px,#81ff00 431.5px)"></i>
<i style="left:582px;background:linear-gradient(#000 0.5px,#010001 226.5px,#1d0033 234.5px,#3d0097 250.5px,#3a00fb 266.5px,#1000ff 280.5px,#0200ff 282.5px,#0054ff 289.5px,#00a5ff 303.5px,#00fffc 325.5px,#0f4 344.5px,#00ff01 352.5px,#3aff00 386.5px,#58ff00 423.5px,#69ff00 428.5px,#86ff00 429.5px,#8cff00 431.5px)"></i>
<i style="left:583px;background:linear-gradient(#000 252.5px,#1c0030 265.5px,#3e00a1 293.5px,#3700ff 316.5px,#1b00ff 334.5px,#0005ff 383.5px,#0040ff 423.5px,#0059ff 428.5px,#0082ff 429.5px,#008aff 431.5px)"></i>
<i style="left:584px;background:linear-gradient(#000 280.5px,#020003 281.5px,#1a002b 285.5px,#310064 290.5px,#4000b6 302.5px,#3800ff 317.5px,#1a00ff 332.5px,#0005ff 399.5px,#0026ff 423.5px,#003fff 428.5px,#0068ff 429.5px,#0070ff 431.5px)"></i>
<i style="left:585px;background:linear-gradient(#000 266.5px,#240040 274.5px,#330069 279.5px,#3f00d2 286.5px,#3800ff 289.5px,#00f 308.5px,#007aff 339.5px,#00e9ff 377.5px,#00fffc 388.5px,#00ffc8 402.5px,#00ff97 421.5px,#00ff5d 427.5px,#00ff46 428.5px,#09ff00 429.5px,#0fff00 431.5px)"></i>
<i style="left:586px;background:linear-gradient(#000 0.5px,#010001 253.5px,#240040 269.5px,#320067 279.5px,#3f00cf 286.5px,#3900fd 289.5px,#0100ff 308.5px,#0067ff 335.5px,#00daff 381.5px,#00fffe 406.5px,#00ffd5 421.5px,#00ff9b 427.5px,#00ff84 428.5px,#00ff1f 429.5px,#00ff0a 431.5px)"></i>
<i style="left:587px;background:linear-gradient(#000 233.5px,#0a0010 238.5px,#250042 252.5px,#3f00aa 281.5px,#3700ff 322.5px,#0004ff 387.5px,#0032ff 409.5px,#0047ff 423.5px,#0060ff 428.5px,#08f 429.5px,#0091ff 431.5px)"></i>
<i style="left:588px;background:linear-gradient(#000 0.5px,#010001 253.5px,#23003e 269.5px,#3b008a 292.5px,#3b00f5 331.5px,#3400ff 343.5px,#0005ff 402.5px,#0026ff 423.5px,#003fff 428.5px,#0068ff 429.5px,#0070ff 431.5px)"></i>
<i style="left:589px;background:linear-gradient(#000 0.5px,#010001 263.5px,#1b002e 274.5px,#3a0084 302.5px,#3f00cd 330.5px,#3600ff 355.5px,#0003ff 400.5px,#0017ff 408.5px,#002dff 423.5px,#0046ff 428.5px,#006eff 429.5px,#07f 431.5px)"></i>
<i style="left:590px;background:linear-gradient(#000 0.5px,#010001 283.5px,#170027 287.5px,#250044 290.5px,#3d0095 303.5px,#3a00f8 323.5px,#2d00ff 330.5px,#0005ff 394.5px,#0023ff 412.5px,#0035ff 423.5px,#004eff 428.5px,#0076ff 429.5px,#007fff 431.5px)"></i>
<i style="left:591px;background:linear-gradient(#000 286.5px,#010002 287.5px,#0d0015 290.5px,#260045 299.5px,#4000b6 325.5px,#3700ff 341.5px,#0003ff 366.5px,#009fff 406.5px,#00b6ff 423.5px,#00cfff 428.5px,#00f8ff 429.5px,#00fffc 431.5px)"></i>
<i style="left:592px;background:linear-gradient(#000 0.5px,#000001 248.5px,#0c0012 263.5px,#270048 292.5px,#390083 329.5px,#360076 330.5px,#3e00db 346.5px,#3800ff 352.5px,#0004ff 373.5px,#009dff 405.5px,#00b6ff 423.5px,#00cfff 428.5px,#00f8ff 429.5px,#00fffc 431.5px)"></i>
<i style="left:593px;background:linear-gradient(#000 254.5px,#140020 264.5px,#2e005a 282.5px,#3f00a8 329.5px,#3e00a3 330.5px,#3700ff 346.5px,#0003ff 368.5px,#00a5ff 405.5px,#00beff 423.5px,#00d7ff 428.5px,#00fffd 429.5px,#00ffe8 431.5px)"></i>
<i style="left:594px;background:linear-gradient(#000 0.5px,#010001 237.5px,#19002a 264.5px,#390082 313.5px,#3d009b 329.5px,#3c0093 330.5px,#3a00fa 350.5px,#0004ff 376.5px,#0087ff 406.5px,#009bff 422.5px,#00b8ff 428.5px,#00e0ff 429.5px,#00e9ff 431.5px)"></i>
<i style="left:595px;background:linear-gradient(#000 254.5px,#0d0015 260.5px,#2a004f 275.5px,#3e009d 305.5px,#3f00d9 331.5px,#3600ff 340.5px,#0005ff 366.5px,#009bff 406.5px,#00b3ff 423.5px,#0cf 428.5px,#00f4ff 429.5px,#00fdff 431.5px)"></i>
<i style="left:596px;background:linear-gradient(#000 254.5px,#0d0015 260.5px,#2a004f 275.5px,#3a0086 286.5px,#3e00e3 298.5px,#3800ff 303.5px,#0003ff 328.5px,#00b6ff 358.5px,#00fffd 374.5px,#00ff8b 387.5px,#00ff4b 398.5px,#00ff0d 421.5px,#04ff00 424.5px,#13ff00 428.5px,#30ff00 429.5px,#36ff00 431.5px)"></i>
<i style="left:597px;background:linear-gradient(#000 236.5px,#200038 252.5px,#3e009f 280.5px,#3800ff 302.5px,#00f 330.5px,#00a0ff 354.5px,#00feff 372.5px,#00ff7b 386.5px,#00ff36 397.5px,#0f0 417.5px,#14ff00 427.5px,#1bff00 428.5px,#38ff00 429.5px,#3eff00 431.5px)"></i>
<i style="left:598px;background:linear-gradient(#000 254.5px,#0d0015 260.5px,#2a004f 275.5px,#370077 283.5px,#3c008e 286.5px,#4000bb 289.5px,#3800ff 298.5px,#0002ff 322.5px,#00c1ff 364.5px,#00fffc 382.5px,#00ffa6 396.5px,#00ff78 412.5px,#00ff5f 421.5px,#00ff25 427.5px,#00ff0e 428.5px,#19ff00 429.5px,#1fff00 431.5px)"></i>
<i style="left:599px;background:linear-gradient(#000 270.5px,#160024 279.5px,#200039 282.5px,#3d009b 289.5px,#3a00f8 302.5px,#2c00ff 309.5px,#0004ff 329.5px,#00a4ff 370.5px,#00f2ff 398.5px,#00fff9 410.5px,#00ffda 421.5px,#00ffa0 427.5px,#00ff8a 428.5px,#00ff24 429.5px,#00ff10 431.5px)"></i>
<i style="left:600px;background:linear-gradient(#000 0.5px,#010001 254.5px,#250042 271.5px,#3a0088 287.5px,#3d00e6 306.5px,#3600ff 312.5px,#0005ff 339.5px,#00a8ff 392.5px,#00c9ff 409.5px,#00daff 422.5px,#00f7ff 428.5px,#00ffae 429.5px,#00ff9a 431.5px)"></i>
<i style="left:601px;background:linear-gradient(#000 251.5px,#010002 252.5px,#1d0031 258.5px,#3d0098 271.5px,#3e00dc 279.5px,#3a00fb 281.5px,#00f 290.5px,#004bff 303.5px,#00baff 331.5px,#00d7ff 412.5px,#00e9ff 423.5px,#00f9ff 427.5px,#00fff7 428.5px,#00ff92 429.5px,#00ff7d 431.5px)"></i>
<i style="left:602px;background:linear-gradient(#000 244.5px,#22003c 252.5px,#3f00a8 266.5px,#3700ff 278.5px,#0300ff 286.5px,#002dff 291.5px,#0071ff 303.5px,#00fffc 336.5px,#00ff3e 353.5px,#02ff00 360.5px,#39ff00 388.5px,#58ff00 423.5px,#69ff00 428.5px,#86ff00 429.5px,#8cff00 431.5px)"></i>
<i style="left:603px;background:linear-gradient(#000 218.5px,#200038 234.5px,#3f00a8 265.5px,#3e00e1 280.5px,#3400ff 284.5px,#0a00ff 291.5px,#00f 294.5px,#0036ff 304.5px,#00b0ff 332.5px,#00fffc 346.5px,#00ff51 360.5px,#0f0 368.5px,#3f0 393.5px,#4dff00 423.5px,#5fff00 428.5px,#7cff00 429.5px,#82ff00 431.5px)"></i>
<i style="left:604px;background:linear-gradient(#000 244.5px,#21003a 260.5px,#4000b4 291.5px,#3600ff 310.5px,#0e00ff 334.5px,#0006ff 362.5px,#0042ff 404.5px,#005aff 422.5px,#0076ff 428.5px,#009fff 429.5px,#00a7ff 431.5px)"></i>
<i style="left:605px;background:linear-gradient(#000 257.5px,#0d0015 263.5px,#22003d 273.5px,#3e00a0 298.5px,#3900ff 322.5px,#2800ff 336.5px,#0005ff 405.5px,#001eff 423.5px,#0037ff 428.5px,#0060ff 429.5px,#0068ff 431.5px)"></i>
<i style="left:606px;background:linear-gradient(#000 244.5px,#200039 252.5px,#3f00a5 267.5px,#3900fc 279.5px,#0300ff 287.5px,#002dff 293.5px,#0069ff 304.5px,#00e8ff 336.5px,#00fffe 344.5px,#00ff84 363.5px,#00ff2b 382.5px,#0f0 398.5px,#14ff00 423.5px,#26ff00 428.5px,#43ff00 429.5px,#49ff00 431.5px)"></i>
<i style="left:607px;background:linear-gradient(#000 218.5px,#050008 220.5px,#200038 229.5px,#3e009d 248.5px,#3900fd 266.5px,#1400ff 280.5px,#0001ff 283.5px,#004cff 289.5px,#009dff 303.5px,#00fffb 327.5px,#00ffdb 331.5px,#00ff72 365.5px,#00ff3d 393.5px,#00ff2e 407.5px,#00ff07 421.5px,#06ff00 424.5px,#15ff00 428.5px,#32ff00 429.5px,#38ff00 431.5px)"></i>
<i style="left:608px;background:linear-gradient(#000 244.5px,#21003a 260.5px,#3f00a5 290.5px,#3700ff 319.5px,#2100ff 331.5px,#0004ff 338.5px,#00a1ff 358.5px,#00fdff 373.5px,#00ff65 387.5px,#00ff1c 397.5px,#00ff01 406.5px,#1f0 423.5px,#23ff00 428.5px,#40ff00 429.5px,#46ff00 431.5px)"></i>
<i style="left:609px;background:linear-gradient(#000 0.5px,#010001 278.5px,#0c0012 280.5px,#2a004e 285.5px,#3a0086 289.5px,#3e00e2 302.5px,#3600ff 309.5px,#0001ff 331.5px,#00a5ff 351.5px,#00fffa 365.5px,#00ff68 376.5px,#00ff03 386.5px,#1aff00 404.5px,#2fff00 424.5px,#3eff00 428.5px,#5bff00 429.5px,#61ff00 431.5px)"></i>
<i style="left:610px;background:linear-gradient(#000 0.5px,#010001 252.5px,#23003e 268.5px,#3f00a9 297.5px,#3700ff 322.5px,#2100ff 332.5px,#0003ff 340.5px,#09f 362.5px,#00fcff 381.5px,#00ffc9 387.5px,#00ff7b 397.5px,#00ff5d 405.5px,#00ff32 421.5px,#00ff02 426.5px,#09ff00 428.5px,#26ff00 429.5px,#2cff00 431.5px)"></i>
<i style="left:611px;background:linear-gradient(#000 263.5px,#1c0030 275.5px,#3e00a0 298.5px,#3900ff 316.5px,#1900ff 332.5px,#0005ff 394.5px,#0028ff 422.5px,#0045ff 428.5px,#006dff 429.5px,#0076ff 431.5px)"></i>
<i style="left:612px;background:linear-gradient(#000 282.5px,#160025 286.5px,#2a004f 290.5px,#3e009d 302.5px,#3800ff 322.5px,#2400ff 334.5px,#0005ff 389.5px,#002bff 413.5px,#003cff 423.5px,#05f 428.5px,#007dff 429.5px,#0085ff 431.5px)"></i>
<i style="left:613px;background:linear-gradient(#000 284.5px,#09000d 286.5px,#19002a 289.5px,#38007c 303.5px,#3e00e1 324.5px,#3900fe 331.5px,#0004ff 383.5px,#0047ff 407.5px,#005aff 422.5px,#0076ff 428.5px,#009fff 429.5px,#00a7ff 431.5px)"></i>
<i style="left:614px;background:linear-gradient(#000 0.5px,#010001 261.5px,#1d0031 273.5px,#3c0090 299.5px,#3b00f3 327.5px,#3500ff 335.5px,#0005ff 382.5px,#004cff 407.5px,#0063ff 423.5px,#007cff 428.5px,#00a5ff 429.5px,#00adff 431.5px)"></i>
<i style="left:615px;background:linear-gradient(#000 0.5px,#010001 268.5px,#1d0032 280.5px,#3d0097 306.5px,#3a00f7 331.5px,#3200ff 341.5px,#0005ff 385.5px,#0043ff 407.5px,#005aff 423.5px,#0073ff 428.5px,#009bff 429.5px,#00a4ff 431.5px)"></i>
<i style="left:616px;background:linear-gradient(#000 0.5px,#010001 283.5px,#170027 287.5px,#250044 290.5px,#3d0095 303.5px,#3a00f8 323.5px,#2d00ff 330.5px,#0004ff 378.5px,#04f 404.5px,#005cff 422.5px,#0079ff 428.5px,#00a1ff 429.5px,#00a9ff 431.5px)"></i>
<i style="left:617px;background:linear-gradient(#000 268.5px,#240040 284.5px,#3f00a6 308.5px,#3700ff 329.5px,#0005ff 378.5px,#004dff 403.5px,#0062ff 417.5px,#0076ff 425.5px,#0087ff 428.5px,#00b0ff 429.5px,#00b8ff 431.5px)"></i>
<i style="left:618px;background:linear-gradient(#000 256.5px,#1b002e 268.5px,#3c008f 294.5px,#3b00f4 322.5px,#3500ff 327.5px,#0003ff 345.5px,#009eff 375.5px,#00f1ff 397.5px,#00fff8 405.5px,#0fc 421.5px,#00ff92 427.5px,#00ff7c 428.5px,#00ff16 429.5px,#00ff01 431.5px)"></i>
<i style="left:619px;background:linear-gradient(#000 252.5px,#22003d 268.5px,#39007f 288.5px,#3d00e8 328.5px,#3b00f5 331.5px,#30f 334.5px,#0003ff 350.5px,#009eff 380.5px,#00ecff 401.5px,#00fffb 418.5px,#00ffe8 422.5px,#00ffb7 427.5px,#00ffa0 428.5px,#00ff3b 429.5px,#00ff26 431.5px)"></i>
<i style="left:620px;background:linear-gradient(#000 285.5px,#08000d 287.5px,#12001e 289.5px,#310063 301.5px,#4000c8 323.5px,#3600ff 334.5px,#00f 352.5px,#009eff 385.5px,#00dfff 404.5px,#00f5ff 422.5px,#00fffb 425.5px,#00ffe7 427.5px,#00ffd0 428.5px,#00ff6b 429.5px,#00ff56 431.5px)"></i>
<i style="left:621px;background:linear-gradient(#000 286.5px,#08000c 288.5px,#100019 290.5px,#260045 298.5px,#4000b9 324.5px,#3f00d1 330.5px,#3600ff 390.5px,#1d00ff 424.5px,#10f 428.5px,#0009ff 429.5px,#01f 431.5px)"></i>
<i style="left:622px;background:linear-gradient(#000 287.5px,#0b0012 290.5px,#29004d 302.5px,#4000bd 328.5px,#3600ff 390.5px,#1b00ff 424.5px,#0f00ff 428.5px,#000eff 429.5px,#0016ff 431.5px)"></i>
<i style="left:623px;background:linear-gradient(#000 262.5px,#040007 264.5px,#1c002f 274.5px,#2f005c 289.5px,#4000b9 330.5px,#3700ff 337.5px,#0100ff 349.5px,#00a8ff 374.5px,#00fdff 391.5px,#00ffb2 401.5px,#00ff78 421.5px,#00ff3e 427.5px,#00ff27 428.5px,#12ff00 429.5px,#18ff00 431.5px)"></i>
<i style="left:624px;background:linear-gradient(#000 271.5px,#020004 272.5px,#1d0033 278.5px,#390081 284.5px,#3f00cb 289.5px,#3800ff 296.5px,#0003ff 319.5px,#00c8ff 364.5px,#00fffb 381.5px,#00ffa7 395.5px,#00ff7d 409.5px,#00ff5c 421.5px,#0f2 427.5px,#00ff0b 428.5px,#1aff00 429.5px,#20ff00 431.5px)"></i>
<i style="left:625px;background:linear-gradient(#000 270.5px,#160025 279.5px,#29004d 285.5px,#3a0085 289.5px,#3e00e1 302.5px,#3600ff 309.5px,#0003ff 333.5px,#009fff 371.5px,#00f0ff 398.5px,#00fffa 411.5px,#0fd 421.5px,#00ffa3 427.5px,#00ff8c 428.5px,#00ff27 429.5px,#00ff12 431.5px)"></i>
<i style="left:626px;background:linear-gradient(#000 260.5px,#1e0033 273.5px,#2f005d 282.5px,#37007a 286.5px,#3f00ad 290.5px,#3900fe 301.5px,#0004ff 327.5px,#00a7ff 361.5px,#00feff 385.5px,#00ffaf 399.5px,#00ff72 421.5px,#00ff38 427.5px,#00ff21 428.5px,#13ff00 429.5px,#19ff00 431.5px)"></i>
<i style="left:627px;background:linear-gradient(#000 283.5px,#020003 284.5px,#180028 288.5px,#39007f 301.5px,#3d00e9 323.5px,#3700ff 328.5px,#0005ff 381.5px,#0042ff 404.5px,#005bff 422.5px,#006eff 427.5px,#0078ff 428.5px,#00a0ff 429.5px,#00a8ff 431.5px)"></i>
<i style="left:628px;background:linear-gradient(#000 283.5px,#160025 287.5px,#240042 290.5px,#3c0093 303.5px,#3b00f5 323.5px,#3400ff 327.5px,#0004ff 377.5px,#0049ff 404.5px,#0065ff 423.5px,#007eff 428.5px,#00a7ff 429.5px,#00afff 431.5px)"></i>
<i style="left:629px;background:linear-gradient(#000 248.5px,#150023 258.5px,#360075 280.5px,#3f00d8 320.5px,#3a00fa 333.5px,#0004ff 368.5px,#0085ff 407.5px,#009bff 423.5px,#00b4ff 428.5px,#0df 429.5px,#00e5ff 431.5px)"></i>
<i style="left:630px;background:linear-gradient(#000 284.5px,#020002 285.5px,#170026 289.5px,#38007b 304.5px,#3e00df 325.5px,#3a00fa 332.5px,#0005ff 381.5px,#0048ff 403.5px,#0056ff 410.5px,#06f 422.5px,#0083ff 428.5px,#00abff 429.5px,#00b4ff 431.5px)"></i>
<i style="left:631px;background:linear-gradient(#000 266.5px,#19002a 276.5px,#3c008f 304.5px,#3c00eb 331.5px,#3600ff 344.5px,#0005ff 398.5px,#001dff 408.5px,#002fff 422.5px,#0042ff 427.5px,#004cff 428.5px,#0074ff 429.5px,#007cff 431.5px)"></i>
<i style="left:632px;background:linear-gradient(#000 281.5px,#0a0010 283.5px,#270048 288.5px,#370078 294.5px,#3f00b2 303.5px,#3700ff 319.5px,#1d00ff 334.5px,#0005ff 379.5px,#003dff 415.5px,#004fff 424.5px,#0064ff 428.5px,#008dff 429.5px,#0095ff 431.5px)"></i>
<i style="left:633px;background:linear-gradient(#000 249.5px,#1e0033 263.5px,#390080 285.5px,#3d00e6 323.5px,#30f 334.5px,#0005ff 358.5px,#00aeff 404.5px,#00c5ff 422.5px,#00e1ff 428.5px,#00ffe4 429.5px,#00ffcf 431.5px)"></i>
<i style="left:634px;background:linear-gradient(#000 230.5px,#1a002b 242.5px,#3d0095 271.5px,#4000cb 289.5px,#3700ff 312.5px,#0004ff 354.5px,#0097ff 407.5px,#00adff 423.5px,#00c6ff 428.5px,#00efff 429.5px,#00f7ff 431.5px)"></i>
<i style="left:635px;background:linear-gradient(#000 193.5px,#0a0010 198.5px,#250042 212.5px,#3f00aa 241.5px,#3600ff 266.5px,#1200ff 285.5px,#0005ff 292.5px,#0047ff 304.5px,#00b2ff 331.5px,#00cdff 410.5px,#00e1ff 423.5px,#00faff 428.5px,#00ffa6 429.5px,#00ff91 431.5px)"></i>
<i style="left:636px;background:linear-gradient(#000 230.5px,#1d0031 239.5px,#3d0099 258.5px,#3900fb 276.5px,#2c00ff 280.5px,#0300ff 286.5px,#002dff 291.5px,#0071ff 303.5px,#00fdff 336.5px,#00ff30 357.5px,#0f0 363.5px,#30ff00 391.5px,#4aff00 423.5px,#5cff00 428.5px,#79ff00 429.5px,#7fff00 431.5px)"></i>
<i style="left:637px;background:linear-gradient(#000 245.5px,#19002a 250.5px,#3c0090 263.5px,#3b00f2 275.5px,#30f 278.5px,#0002ff 286.5px,#002dff 290.5px,#0078ff 303.5px,#00fffe 335.5px,#00ff4d 352.5px,#01ff00 361.5px,#3f0 390.5px,#4fff00 423.5px,#61ff00 428.5px,#7eff00 429.5px,#84ff00 431.5px)"></i>
<i style="left:638px;background:linear-gradient(#000 268.5px,#1a002d 279.5px,#34006d 290.5px,#4000bf 302.5px,#3800ff 315.5px,#1500ff 333.5px,#0005ff 368.5px,#004eff 417.5px,#0062ff 425.5px,#0073ff 428.5px,#009bff 429.5px,#00a4ff 431.5px)"></i>
<i style="left:639px;background:linear-gradient(#000 283.5px,#09000d 285.5px,#1f0036 289.5px,#3b008c 303.5px,#3b00f2 324.5px,#3500ff 328.5px,#0005ff 393.5px,#0027ff 410.5px,#0037ff 422.5px,#0053ff 428.5px,#007cff 429.5px,#0084ff 431.5px)"></i>
<i style="left:640px;background:linear-gradient(#000 266.5px,#140021 274.5px,#260045 282.5px,#3a0084 292.5px,#3f00cd 303.5px,#3800ff 313.5px,#0f00ff 334.5px,#0005ff 353.5px,#0067ff 403.5px,#0085ff 423.5px,#009eff 428.5px,#00c6ff 429.5px,#00cfff 431.5px)"></i>
<i style="left:641px;background:linear-gradient(#000 283.5px,#160025 287.5px,#240042 290.5px,#3c0093 303.5px,#3b00f5 323.5px,#3400ff 327.5px,#0005ff 372.5px,#0058ff 403.5px,#006aff 415.5px,#007cff 424.5px,#0091ff 428.5px,#00baff 429.5px,#00c2ff 431.5px)"></i>
<i style="left:642px;background:linear-gradient(#000 258.5px,#09000e 262.5px,#210039 273.5px,#3e009f 302.5px,#3900ff 330.5px,#0002ff 344.5px,#009cff 368.5px,#00fcff 388.5px,#00fff4 390.5px,#0fa 400.5px,#00ff6d 421.5px,#0f3 427.5px,#00ff1c 428.5px,#15ff00 429.5px,#1bff00 431.5px)"></i>
<i style="left:643px;background:linear-gradient(#000 251.5px,#07000b 253.5px,#250042 260.5px,#3f00ab 273.5px,#3e00dd 279.5px,#3900fc 281.5px,#0001ff 290.5px,#004cff 303.5px,#00c0ff 332.5px,#00fffd 364.5px,#00ffa8 388.5px,#00ff89 404.5px,#00ff5c 421.5px,#0f2 427.5px,#00ff0b 428.5px,#1aff00 429.5px,#20ff00 431.5px)"></i>
<i style="left:644px;background:linear-gradient(#000 243.5px,#0b0012 247.5px,#23003f 256.5px,#3e009f 275.5px,#3f00b3 279.5px,#3900ff 284.5px,#0f00ff 291.5px,#0004ff 296.5px,#0042ff 309.5px,#009cff 332.5px,#00f3ff 384.5px,#00fffb 397.5px,#00ffc6 420.5px,#00ff87 427.5px,#00ff70 428.5px,#00ff0b 429.5px,#03ff00 431.5px)"></i>
<i style="left:645px;background:linear-gradient(#000 263.5px,#160025 272.5px,#28004a 281.5px,#3e00a0 296.5px,#3f00d6 305.5px,#3700ff 314.5px,#0005ff 340.5px,#00a7ff 387.5px,#00d3ff 406.5px,#00ebff 423.5px,#00fbff 427.5px,#00fff2 428.5px,#00ff8d 429.5px,#00ff78 431.5px)"></i>
<i style="left:646px;background:linear-gradient(#000 249.5px,#11001c 257.5px,#300060 275.5px,#4000c9 296.5px,#3900fe 305.5px,#0005ff 332.5px,#00a5ff 390.5px,#00c9ff 410.5px,#00d9ff 422.5px,#00f6ff 428.5px,#00ffb1 429.5px,#00ff9c 431.5px)"></i>
<i style="left:647px;background:linear-gradient(#000 281.5px,#020003 282.5px,#1a002b 286.5px,#2d0056 290.5px,#3f00a6 302.5px,#3800ff 320.5px,#0003ff 347.5px,#00a7ff 395.5px,#00c5ff 409.5px,#00d9ff 423.5px,#00f2ff 428.5px,#00ffba 429.5px,#00ffa5 431.5px)"></i>
<i style="left:648px;background:linear-gradient(#000 280.5px,#12001d 283.5px,#35006f 290.5px,#4000c2 302.5px,#3700ff 315.5px,#0004ff 341.5px,#00a8ff 390.5px,#00cfff 408.5px,#00e1ff 422.5px,#00f4ff 427.5px,#00feff 428.5px,#00ff9d 429.5px,#00ff89 431.5px)"></i>
<i style="left:649px;background:linear-gradient(#000 281.5px,#12001d 284.5px,#300060 290.5px,#3f00b1 302.5px,#3800ff 318.5px,#0003ff 343.5px,#00a7ff 387.5px,#00d7ff 406.5px,#00ebff 422.5px,#0ff 427.5px,#00ffe9 428.5px,#00ff84 429.5px,#00ff6f 431.5px)"></i>
<i style="left:650px;background:linear-gradient(#000 248.5px,#150023 258.5px,#360076 280.5px,#3f00da 306.5px,#3600ff 317.5px,#1500ff 333.5px,#0005ff 340.5px,#00a0ff 369.5px,#00f7ff 391.5px,#00fff5 395.5px,#00ffc8 404.5px,#00ff9a 421.5px,#00ff60 427.5px,#00ff49 428.5px,#08ff00 429.5px,#0eff00 431.5px)"></i>
<i style="left:651px;background:linear-gradient(#000 281.5px,#010002 282.5px,#19002a 286.5px,#2c0054 290.5px,#3e00a4 302.5px,#3900fd 320.5px,#0005ff 343.5px,#00a4ff 378.5px,#0ef 401.5px,#00fffb 417.5px,#0fe 421.5px,#00ffb4 427.5px,#00ff9d 428.5px,#00ff38 429.5px,#00ff23 431.5px)"></i>
<i style="left:652px;background:linear-gradient(#000 268.5px,#1c002f 280.5px,#3d0095 316.5px,#4000ba 329.5px,#3e00e2 349.5px,#3600ff 363.5px,#0004ff 404.5px,#001dff 422.5px,#0030ff 427.5px,#003aff 428.5px,#0062ff 429.5px,#006aff 431.5px)"></i>
<i style="left:653px;background:linear-gradient(#000 269.5px,#180028 279.5px,#38007c 316.5px,#3d0097 329.5px,#3c008e 330.5px,#3b00f4 368.5px,#3400ff 375.5px,#00f 410.5px,#0014ff 423.5px,#002dff 428.5px,#0056ff 429.5px,#005eff 431.5px)"></i>
<i style="left:654px;background:linear-gradient(#000 0.5px,#010001 257.5px,#22003c 272.5px,#2f005c 282.5px,#3f00aa 329.5px,#3f00a6 331.5px,#3600ff 371.5px,#0200ff 412.5px,#000bff 422.5px,#001eff 427.5px,#0028ff 428.5px,#0050ff 429.5px,#0058ff 431.5px)"></i>
<i style="left:655px;background:linear-gradient(#000 0.5px,#010001 290.5px,#1a002c 301.5px,#370079 324.5px,#3c008e 329.5px,#3a0088 331.5px,#3d00ea 365.5px,#3500ff 374.5px,#0005ff 407.5px,#001cff 423.5px,#0035ff 428.5px,#005eff 429.5px,#06f 431.5px)"></i>
<i style="left:656px;background:linear-gradient(#000 0.5px,#000001 289.5px,#170027 298.5px,#22003c 304.5px,#3c0093 327.5px,#3e009c 329.5px,#3d0099 331.5px,#3900ff 366.5px,#0004ff 402.5px,#0014ff 407.5px,#0027ff 422.5px,#04f 428.5px,#006cff 429.5px,#0075ff 431.5px)"></i>
<i style="left:657px;background:linear-gradient(#000 285.5px,#020002 286.5px,#130020 290.5px,#320066 303.5px,#3f00d0 326.5px,#3e00e1 331.5px,#3700ff 349.5px,#0005ff 403.5px,#0024ff 423.5px,#003dff 428.5px,#0065ff 429.5px,#006eff 431.5px)"></i>
<i style="left:658px;background:linear-gradient(#000 258.5px,#200037 272.5px,#310064 282.5px,#390081 287.5px,#3e00a4 290.5px,#3a00f9 302.5px,#2000ff 314.5px,#0005ff 329.5px,#00a5ff 357.5px,#00feff 377.5px,#00ff8d 392.5px,#00ff60 402.5px,#00ff2f 421.5px,#0f0 426.5px,#0aff00 428.5px,#27ff00 429.5px,#2dff00 431.5px)"></i>
<i style="left:659px;background:linear-gradient(#000 274.5px,#170026 279.5px,#3c0094 287.5px,#4000b9 290.5px,#3900fe 299.5px,#0002ff 324.5px,#0040ff 336.5px,#00caff 362.5px,#00fffd 375.5px,#00ff8e 389.5px,#00ff57 400.5px,#00ff21 421.5px,#01ff00 425.5px,#0eff00 428.5px,#2bff00 429.5px,#31ff00 431.5px)"></i>
<i style="left:660px;background:linear-gradient(#000 266.5px,#140021 274.5px,#240040 281.5px,#310062 287.5px,#3a0084 290.5px,#3e00de 303.5px,#3800ff 310.5px,#0003ff 333.5px,#009aff 358.5px,#0ff 380.5px,#00ff97 393.5px,#00ff69 403.5px,#00ff3a 421.5px,#0f0 427.5px,#07ff00 428.5px,#23ff00 429.5px,#29ff00 431.5px)"></i>
<i style="left:661px;background:linear-gradient(#000 280.5px,#020003 281.5px,#1a002c 285.5px,#320065 290.5px,#4000b7 302.5px,#3700ff 317.5px,#0d00ff 333.5px,#0004ff 337.5px,#00a7ff 364.5px,#00fdff 383.5px,#00ff9c 396.5px,#00ff7b 404.5px,#00ff4e 421.5px,#00ff14 427.5px,#01ff00 428.5px,#1eff00 429.5px,#24ff00 431.5px)"></i>
<i style="left:662px;background:linear-gradient(#000 243.5px,#1e0033 257.5px,#3d0097 285.5px,#3900fe 319.5px,#2500ff 331.5px,#0100ff 339.5px,#00a5ff 363.5px,#00fffe 380.5px,#00ff93 391.5px,#00ff56 401.5px,#00ff21 421.5px,#01ff00 425.5px,#0eff00 428.5px,#2bff00 429.5px,#31ff00 431.5px)"></i>
<i style="left:663px;background:linear-gradient(#000 268.5px,#09000e 272.5px,#1c0030 280.5px,#38007d 294.5px,#4000b7 303.5px,#3700ff 318.5px,#0f00ff 333.5px,#0002ff 337.5px,#009cff 361.5px,#00feff 381.5px,#00ff98 393.5px,#00ff69 402.5px,#00ff37 421.5px,#01ff00 427.5px,#07ff00 428.5px,#24ff00 429.5px,#2aff00 431.5px)"></i>
<i style="left:664px;background:linear-gradient(#000 269.5px,#23003f 277.5px,#2f005d 280.5px,#4000c4 287.5px,#3e00e3 289.5px,#3800ff 293.5px,#0600ff 311.5px,#0009ff 316.5px,#005aff 334.5px,#00dcff 361.5px,#00feff 370.5px,#00ff8c 385.5px,#00ff4b 398.5px,#00ff10 421.5px,#01ff00 423.5px,#13ff00 428.5px,#30ff00 429.5px,#35ff00 431.5px)"></i>
<i style="left:665px;background:linear-gradient(#000 262.5px,#040007 264.5px,#1c002f 274.5px,#280049 280.5px,#4000be 288.5px,#3e00dc 291.5px,#3700ff 296.5px,#0004ff 319.5px,#0048ff 334.5px,#00cfff 362.5px,#00fffe 375.5px,#00ff98 389.5px,#00ff62 401.5px,#00ff2f 421.5px,#0f0 426.5px,#0aff00 428.5px,#27ff00 429.5px,#2dff00 431.5px)"></i>
<i style="left:666px;background:linear-gradient(#000 270.5px,#12001d 274.5px,#260045 279.5px,#3f00aa 286.5px,#3f00d8 289.5px,#3900fe 294.5px,#00f 316.5px,#0051ff 334.5px,#00d0ff 360.5px,#0ff 372.5px,#00ff8d 387.5px,#00ff53 399.5px,#00ff1b 421.5px,#0f0 424.5px,#0fff00 428.5px,#2cff00 429.5px,#32ff00 431.5px)"></i>
<i style="left:667px;background:linear-gradient(#000 268.5px,#23003f 276.5px,#320066 280.5px,#3f00ce 287.5px,#3b00f4 290.5px,#30f 293.5px,#0200ff 311.5px,#0065ff 335.5px,#00e2ff 364.5px,#00fffb 373.5px,#00ff95 388.5px,#00ff61 400.5px,#00ff2c 421.5px,#01ff00 426.5px,#0bff00 428.5px,#27ff00 429.5px,#2dff00 431.5px)"></i>
<i style="left:668px;background:linear-gradient(#000 247.5px,#1b002e 263.5px,#320068 283.5px,#4000b4 329.5px,#4000b9 334.5px,#3700ff 365.5px,#0005ff 408.5px,#001bff 423.5px,#0034ff 428.5px,#005cff 429.5px,#0065ff 431.5px)"></i>
<i style="left:669px;background:linear-gradient(#000 286.5px,#07000b 288.5px,#0f0018 290.5px,#250043 298.5px,#3f00ad 322.5px,#3f00cf 330.5px,#3600ff 353.5px,#0003ff 398.5px,#001dff 407.5px,#0030ff 422.5px,#004dff 428.5px,#0075ff 429.5px,#007eff 431.5px)"></i>
<i style="left:670px;background:linear-gradient(#000 261.5px,#09000e 265.5px,#23003e 277.5px,#3e009c 315.5px,#4000bc 329.5px,#4000c2 335.5px,#3600ff 366.5px,#00f 413.5px,#000cff 422.5px,#0029ff 428.5px,#0051ff 429.5px,#0059ff 431.5px)"></i>
<i style="left:671px;background:linear-gradient(#000 260.5px,#0c0012 266.5px,#22003d 279.5px,#3c0090 328.5px,#3c0091 329.5px,#3a0087 330.5px,#3d00e8 361.5px,#3700ff 369.5px,#0005ff 401.5px,#001aff 406.5px,#002eff 422.5px,#004aff 428.5px,#0073ff 429.5px,#007bff 431.5px)"></i>
<i style="left:672px;background:linear-gradient(#000 0.5px,#010001 269.5px,#1b002d 280.5px,#3c0090 311.5px,#3f00d0 333.5px,#3600ff 352.5px,#0003ff 391.5px,#0038ff 407.5px,#004bff 422.5px,#0068ff 428.5px,#0090ff 429.5px,#09f 431.5px)"></i>
<i style="left:673px;background:linear-gradient(#000 265.5px,#140021 273.5px,#23003f 281.5px,#3e009d 318.5px,#4000b9 329.5px,#4000bd 333.5px,#3700ff 361.5px,#0003ff 401.5px,#0015ff 407.5px,#0028ff 422.5px,#0045ff 428.5px,#006dff 429.5px,#0076ff 431.5px)"></i>
<i style="left:674px;background:linear-gradient(#000 262.5px,#1c0030 268.5px,#3b008b 279.5px,#3b00f6 286.5px,#2f00ff 288.5px,#0004ff 302.5px,#0079ff 331.5px,#00cfff 403.5px,#00e5ff 422.5px,#00f9ff 427.5px,#00fff7 428.5px,#00ff92 429.5px,#00ff7d 431.5px)"></i>
<i style="left:675px;background:linear-gradient(#000 247.5px,#150023 257.5px,#390082 281.5px,#3e009c 285.5px,#3f00d6 289.5px,#3600ff 295.5px,#0003ff 317.5px,#003fff 333.5px,#00bcff 398.5px,#00daff 422.5px,#00f7ff 428.5px,#00ffae 429.5px,#00ff9a 431.5px)"></i>
<i style="left:676px;background:linear-gradient(#000 268.5px,#1d0031 280.5px,#34006d 290.5px,#4000bf 302.5px,#3800ff 315.5px,#0003ff 340.5px,#00a1ff 382.5px,#0df 404.5px,#00f3ff 422.5px,#00feff 425.5px,#00ffec 427.5px,#00ffd6 428.5px,#00ff70 429.5px,#00ff5c 431.5px)"></i>
<i style="left:677px;background:linear-gradient(#000 267.5px,#1f0035 280.5px,#320066 288.5px,#3b008a 292.5px,#3f00cf 302.5px,#3700ff 312.5px,#0005ff 337.5px,#00a6ff 378.5px,#00e8ff 402.5px,#00feff 421.5px,#00ffc8 427.5px,#00ffb1 428.5px,#00ff4c 429.5px,#00ff37 431.5px)"></i>
<i style="left:678px;background:linear-gradient(#000 281.5px,#020003 282.5px,#1a002b 286.5px,#2d0056 290.5px,#3f00a6 302.5px,#3800ff 320.5px,#0001ff 342.5px,#009bff 376.5px,#00ebff 400.5px,#00fffb 418.5px,#00ffe8 422.5px,#00ffb7 427.5px,#00ffa0 428.5px,#00ff3b 429.5px,#00ff26 431.5px)"></i>
<i style="left:679px;background:linear-gradient(#000 0.5px,#010001 284.5px,#11001b 287.5px,#1c002f 289.5px,#390083 303.5px,#3d00e9 324.5px,#3700ff 329.5px,#0001ff 349.5px,#009cff 383.5px,#00e0ff 404.5px,#00faff 423.5px,#00fff9 425.5px,#00ffe4 427.5px,#00ffcd 428.5px,#00ff68 429.5px,#00ff53 431.5px)"></i>
<i style="left:680px;background:linear-gradient(#000 242.5px,#1a002b 254.5px,#3a0088 279.5px,#3e00e2 285.5px,#3800ff 287.5px,#1c00ff 293.5px,#0005ff 303.5px,#0075ff 331.5px,#00c7ff 421.5px,#00e7ff 428.5px,#00ffd6 429.5px,#00ffc1 431.5px)"></i>
<i style="left:681px;background:linear-gradient(#000 266.5px,#010002 267.5px,#19002b 272.5px,#310064 279.5px,#3f00cc 286.5px,#3a00fa 289.5px,#0500ff 307.5px,#000cff 312.5px,#0056ff 331.5px,#00a9ff 413.5px,#00f3ff 417.5px,#00ffed 418.5px,#00ffbe 419.5px,#00ffa9 420.5px,#00ffa9 431.5px)"></i>
<i style="left:682px;background:linear-gradient(#000 258.5px,#09000e 262.5px,#210039 273.5px,#3f00a7 303.5px,#3600ff 329.5px,#0004ff 356.5px,#00aeff 404.5px,#0bf 412.5px,#00f3ff 415.5px,#00ffef 416.5px,#00ffc0 417.5px,#00ffac 418.5px,#00ffac 431.5px)"></i>
<i style="left:683px;background:linear-gradient(#000 281.5px,#020003 282.5px,#19002a 286.5px,#2c0055 290.5px,#3f00a5 302.5px,#3700ff 321.5px,#0005ff 344.5px,#00a2ff 381.5px,#00e6ff 404.5px,#00edff 411.5px,#00f4ff 412.5px,#00ffeb 413.5px,#00ff5e 416.5px,#00ff50 417.5px,#00ff4f 430.5px,#00ff45 431.5px)"></i>
<i style="left:684px;background:linear-gradient(#000 270.5px,#1c002f 281.5px,#38007e 295.5px,#3f00b0 303.5px,#3800ff 319.5px,#0005ff 344.5px,#00a2ff 384.5px,#00daff 404.5px,#00e2ff 411.5px,#00feff 413.5px,#00ff47 417.5px,#00ff2c 418.5px,#00ff2c 431.5px)"></i>
<i style="left:685px;background:linear-gradient(#000 269.5px,#1b002e 280.5px,#38007c 294.5px,#4000b5 303.5px,#3800ff 318.5px,#0001ff 343.5px,#00a0ff 386.5px,#00d2ff 405.5px,#00d9ff 411.5px,#00f7ff 413.5px,#00ffe5 414.5px,#00ff2a 418.5px,#0f1 419.5px,#0f1 431.5px)"></i>
<i style="left:686px;background:linear-gradient(#000 267.5px,#160025 276.5px,#1e0033 280.5px,#390083 323.5px,#3b008d 329.5px,#390082 330.5px,#3d00ea 361.5px,#3700ff 368.5px,#0003ff 398.5px,#0026ff 406.5px,#003aff 422.5px,#0057ff 428.5px,#007fff 429.5px,#08f 431.5px)"></i>
<i style="left:687px;background:linear-gradient(#000 292.5px,#11001b 301.5px,#1f0035 314.5px,#300061 329.5px,#260047 330.5px,#4000b7 356.5px,#3700ff 372.5px,#0005ff 396.5px,#003dff 406.5px,#0051ff 422.5px,#006dff 428.5px,#0096ff 429.5px,#009eff 431.5px)"></i>
<i style="left:688px;background:linear-gradient(#000 0.5px,#010001 258.5px,#22003c 273.5px,#3f00ab 297.5px,#3600ff 315.5px,#0e00ff 336.5px,#0006ff 350.5px,#0086ff 405.5px,#00f7ff 411.5px,#00ffe5 412.5px,#01ff00 417.5px,#02ff00 431.5px)"></i>
<i style="left:689px;background:linear-gradient(#000 263.5px,#160025 272.5px,#2a004f 282.5px,#3f00aa 299.5px,#3800ff 316.5px,#0f00ff 337.5px,#0005ff 350.5px,#008eff 405.5px,#00f9ff 411.5px,#00ffde 412.5px,#00ff23 416.5px,#00ff17 417.5px,#00ff17 431.5px)"></i>
<i style="left:690px;background:linear-gradient(#000 257.5px,#23003e 273.5px,#3f00a9 298.5px,#3800ff 318.5px,#0001ff 353.5px,#008eff 406.5px,#00f9ff 412.5px,#00ffde 413.5px,#00ff52 416.5px,#00ff42 417.5px,#00ff42 431.5px)"></i>
<i style="left:691px;background:linear-gradient(#000 251.5px,#11001c 259.5px,#300061 277.5px,#4000c8 300.5px,#3700ff 313.5px,#1300ff 332.5px,#0005ff 382.5px,#0035ff 422.5px,#0051ff 428.5px,#007aff 429.5px,#0082ff 431.5px)"></i>
<i style="left:692px;background:linear-gradient(#000 0.5px,#010001 278.5px,#0c0012 280.5px,#2a004e 285.5px,#3a0086 289.5px,#3e00e2 302.5px,#3600ff 309.5px,#0600ff 332.5px,#0008ff 360.5px,#003aff 415.5px,#004cff 424.5px,#0061ff 428.5px,#0089ff 429.5px,#0092ff 431.5px)"></i>
<i style="left:693px;background:linear-gradient(#000 0.5px,#010001 256.5px,#240041 270.5px,#330069 279.5px,#3f00d2 286.5px,#3800ff 289.5px,#00f 308.5px,#005bff 331.5px,#00aeff 409.5px,#00f8ff 413.5px,#00ffe1 414.5px,#00ff26 418.5px,#00ff23 431.5px)"></i>
<i style="left:694px;background:linear-gradient(#000 0.5px,#010001 270.5px,#1c0031 279.5px,#3e00a1 287.5px,#4000c7 290.5px,#3600ff 298.5px,#0005ff 322.5px,#002cff 333.5px,#00b4ff 403.5px,#00beff 412.5px,#00daff 414.5px,#00fffd 416.5px,#0fd 417.5px,#0fd 428.5px,#00ffbe 431.5px)"></i>
<i style="left:695px;background:linear-gradient(#000 277.5px,#08000d 279.5px,#21003b 283.5px,#3b008e 289.5px,#3d00ea 302.5px,#3700ff 307.5px,#0004ff 333.5px,#00abff 399.5px,#00baff 409.5px,#00f1ff 412.5px,#00fff3 413.5px,#0f6 416.5px,#00ff45 417.5px,#00ff45 431.5px)"></i>
<i style="left:696px;background:linear-gradient(#000 277.5px,#020002 278.5px,#0d0014 280.5px,#2a0051 285.5px,#3c0090 290.5px,#3d00e5 302.5px,#3700ff 308.5px,#0003ff 333.5px,#00a5ff 383.5px,#00d8ff 406.5px,#00e0ff 409.5px,#00f3ff 410.5px,#0fe 411.5px,#00ff90 413.5px,#00ff84 414.5px,#00ff81 429.5px,#00ff6c 431.5px)"></i>
<i style="left:697px;background:linear-gradient(#000 0.5px,#010001 260.5px,#1b002d 271.5px,#38007e 289.5px,#3e00e1 308.5px,#3600ff 315.5px,#0100ff 342.5px,#00a9ff 406.5px,#00b3ff 412.5px,#00feff 416.5px,#00ffa3 418.5px,#00ff95 419.5px,#00ff95 431.5px)"></i>
<i style="left:698px;background:linear-gradient(#000 0.5px,#010001 266.5px,#19002a 276.5px,#22003d 280.5px,#3f00ac 288.5px,#4000ca 291.5px,#3800ff 298.5px,#0002ff 322.5px,#0025ff 332.5px,#00acff 407.5px,#00f7ff 411.5px,#00ffe3 412.5px,#00ff28 416.5px,#02ff00 417.5px,#16ff00 419.5px,#16ff00 431.5px)"></i>
<i style="left:699px;background:linear-gradient(#000 276.5px,#0e0017 279.5px,#270047 283.5px,#3e009c 289.5px,#3a00f9 302.5px,#2000ff 314.5px,#0005ff 329.5px,#00a5ff 408.5px,#00adff 409.5px,#00f8ff 413.5px,#00ffe1 414.5px,#00ff26 418.5px,#0f0 419.5px,#0f0 431.5px)"></i>
<i style="left:700px;background:linear-gradient(#000 256.5px,#23003e 272.5px,#310065 281.5px,#3a0086 286.5px,#3f00b3 289.5px,#3800ff 299.5px,#0003ff 324.5px,#002dff 337.5px,#00baff 401.5px,#00c0ff 406.5px,#00daff 408.5px,#00fffd 410.5px,#00ff13 415.5px,#04ff00 416.5px,#04ff00 431.5px)"></i>
<i style="left:701px;background:linear-gradient(#000 276.5px,#0d0015 279.5px,#2b0052 284.5px,#3d0099 289.5px,#3a00f7 302.5px,#3100ff 307.5px,#0003ff 329.5px,#00a6ff 409.5px,#00f1ff 413.5px,#00fff2 414.5px,#00ff08 419.5px,#0f0 421.5px,#0f0 431.5px)"></i>
<i style="left:702px;background:linear-gradient(#000 277.5px,#09000e 279.5px,#22003c 283.5px,#3c008f 289.5px,#3b00f1 303.5px,#3600ff 307.5px,#0003ff 333.5px,#009dff 409.5px,#00b8ff 411.5px,#00f0ff 414.5px,#00fff4 415.5px,#00ff39 419.5px,#00ff14 420.5px,#00ff14 431.5px)"></i>
<i style="left:703px;background:linear-gradient(#000 0.5px,#010001 269.5px,#1e0035 277.5px,#2a004f 280.5px,#4000b5 287.5px,#3f00d4 289.5px,#3700ff 295.5px,#0001ff 317.5px,#0036ff 331.5px,#0076ff 402.5px,#0090ff 404.5px,#00fffb 410.5px,#0f1 415.5px,#09ff00 416.5px,#23ff00 418.5px,#28ff00 431.5px)"></i>
<i style="left:704px;background:linear-gradient(#000 265.5px,#180028 275.5px,#23003f 280.5px,#3e00a2 287.5px,#4000c8 290.5px,#3900fe 297.5px,#0002ff 321.5px,#0029ff 332.5px,#008dff 403.5px,#00f8ff 409.5px,#00ffe0 410.5px,#00ff25 414.5px,#03ff00 415.5px,#10ff00 416.5px,#10ff00 431.5px)"></i>
<i style="left:705px;background:linear-gradient(#000 275.5px,#13001e 279.5px,#3b0089 287.5px,#3f00a7 289.5px,#3900ff 301.5px,#0001ff 326.5px,#0015ff 333.5px,#0084ff 405.5px,#00f2ff 411.5px,#00fff1 412.5px,#00ff07 417.5px,#02ff00 420.5px,#02ff00 431.5px)"></i>
<i style="left:706px;background:linear-gradient(#000 0.5px,#000001 292.5px,#13001e 301.5px,#200039 313.5px,#34006c 329.5px,#2d0057 330.5px,#4000c4 372.5px,#3600ff 393.5px,#1d00ff 409.5px,#0d00ff 425.5px,#0400ff 428.5px,#02f 429.5px,#002aff 431.5px)"></i>
<i style="left:707px;background:linear-gradient(#000 267.5px,#09000e 271.5px,#1b002f 279.5px,#38007b 322.5px,#3a0086 329.5px,#370079 330.5px,#3e00e3 377.5px,#3600ff 390.5px,#1a00ff 412.5px,#0800ff 427.5px,#0200ff 428.5px,#0024ff 429.5px,#002cff 431.5px)"></i>
<i style="left:708px;background:linear-gradient(#000 0.5px,#010001 260.5px,#1b002d 271.5px,#2e005a 281.5px,#4000c0 288.5px,#3e00df 291.5px,#3900fe 295.5px,#0002ff 318.5px,#0032ff 330.5px,#004eff 398.5px,#007eff 401.5px,#00efff 407.5px,#00fff9 408.5px,#00ff6d 411.5px,#00ff4b 412.5px,#00ff4b 431.5px)"></i>
<i style="left:709px;background:linear-gradient(#000 0.5px,#010001 258.5px,#22003c 273.5px,#370078 286.5px,#4000b6 296.5px,#3d00e8 304.5px,#3500ff 310.5px,#0800ff 332.5px,#0006ff 403.5px,#001dff 422.5px,#0030ff 427.5px,#003aff 428.5px,#0062ff 429.5px,#006aff 431.5px)"></i>
<i style="left:710px;background:linear-gradient(#000 277.5px,#010002 278.5px,#0c0013 280.5px,#2a0050 285.5px,#3c008f 290.5px,#3d00e3 302.5px,#3700ff 308.5px,#0600ff 331.5px,#0007ff 395.5px,#0021ff 422.5px,#003eff 428.5px,#0067ff 429.5px,#006fff 431.5px)"></i>
<i style="left:711px;background:linear-gradient(#000 267.5px,#09000e 271.5px,#1b002f 279.5px,#250042 282.5px,#3f00a5 289.5px,#3900fe 301.5px,#0004ff 327.5px,#0093ff 375.5px,#00d5ff 406.5px,#00dfff 413.5px,#00f1ff 414.5px,#00fff2 415.5px,#0f6 418.5px,#00ff56 419.5px,#00ff56 431.5px)"></i>
<i style="left:712px;background:linear-gradient(#000 262.5px,#1c0030 274.5px,#2e005b 283.5px,#370079 287.5px,#3e009d 290.5px,#3a00f8 303.5px,#2c00ff 310.5px,#0003ff 330.5px,#00a3ff 378.5px,#00e0ff 404.5px,#00e9ff 413.5px,#00f3ff 414.5px,#00ffef 415.5px,#00ff94 417.5px,#00ff94 428.5px,#00ff68 429.5px,#00ff53 431.5px)"></i>
<i style="left:713px;background:linear-gradient(#000 252.5px,#11001c 260.5px,#28004a 272.5px,#3b008a 286.5px,#3f00d1 298.5px,#3900ff 306.5px,#0003ff 332.5px,#00a7ff 385.5px,#00d7ff 409.5px,#00dcff 414.5px,#00fbff 416.5px,#00ffab 418.5px,#00ff91 419.5px,#00ff8d 429.5px,#00ff78 431.5px)"></i>
<i style="left:714px;background:linear-gradient(#000 269.5px,#09000e 273.5px,#170027 279.5px,#3c0094 287.5px,#4000b9 290.5px,#3900fe 299.5px,#0002ff 324.5px,#002fff 338.5px,#00baff 399.5px,#00caff 412.5px,#00e6ff 414.5px,#00f8ff 415.5px,#00ffe1 416.5px,#00ff25 420.5px,#00ff1b 422.5px,#00ff1b 431.5px)"></i>
<i style="left:715px;background:linear-gradient(#000 252.5px,#1c0030 265.5px,#350072 281.5px,#3b008d 285.5px,#4000c9 289.5px,#3900fe 296.5px,#0005ff 320.5px,#003fff 336.5px,#00bcff 384.5px,#00e4ff 408.5px,#00e6ff 410.5px,#00fff6 412.5px,#00ff10 417.5px,#00ff10 431.5px)"></i>
<i style="left:716px;background:linear-gradient(#000 252.5px,#1a002d 258.5px,#3d0095 271.5px,#3f00d8 279.5px,#3600ff 282.5px,#0200ff 290.5px,#0047ff 303.5px,#00b6ff 331.5px,#00d3ff 411.5px,#00efff 413.5px,#00fff9 414.5px,#00ff0f 419.5px,#00ff09 425.5px,#00ff09 431.5px)"></i>
<i style="left:717px;background:linear-gradient(#000 283.5px,#0a000f 285.5px,#200039 289.5px,#3c008f 303.5px,#3b00f1 323.5px,#3600ff 327.5px,#2b00ff 371.5px,#1a00ff 421.5px,#0800ff 428.5px,#001aff 429.5px,#02f 431.5px)"></i>
<i style="left:718px;background:linear-gradient(#000 0.5px,#010001 291.5px,#160024 300.5px,#260046 313.5px,#390081 329.5px,#360074 330.5px,#3f00da 376.5px,#3600ff 392.5px,#1d00ff 413.5px,#0e00ff 426.5px,#0600ff 428.5px,#001dff 429.5px,#0026ff 431.5px)"></i>
<i style="left:719px;background:linear-gradient(#000 261.5px,#09000e 265.5px,#21003a 276.5px,#30005f 283.5px,#4000b6 289.5px,#3700ff 299.5px,#0005ff 324.5px,#0026ff 334.5px,#00aeff 407.5px,#00b0ff 409.5px,#00f7ff 413.5px,#00ffe5 414.5px,#00ff59 417.5px,#00ff36 418.5px,#00ff36 431.5px)"></i>
<i style="left:720px;background:linear-gradient(#000 0.5px,#010001 252.5px,#23003e 268.5px,#390082 284.5px,#3f00d1 297.5px,#3800ff 305.5px,#0004ff 331.5px,#00a6ff 406.5px,#00acff 411.5px,#00dcff 414.5px,#00fff9 416.5px,#00ff9b 418.5px,#00ff82 419.5px,#00ff82 431.5px)"></i>
<i style="left:721px;background:linear-gradient(#000 0.5px,#010001 270.5px,#240041 278.5px,#390082 283.5px,#3e00dc 289.5px,#3700ff 294.5px,#00f 315.5px,#0041ff 332.5px,#00beff 399.5px,#00c6ff 406.5px,#00e2ff 408.5px,#00f5ff 409.5px,#00ffea 410.5px,#0f0 415.5px,#01ff00 431.5px)"></i>
<i style="left:722px;background:linear-gradient(#000 243.5px,#050007 245.5px,#23003f 257.5px,#3f00a5 279.5px,#3800ff 285.5px,#1500ff 291.5px,#0005ff 298.5px,#008cff 330.5px,#00c0ff 408.5px,#00f4ff 411.5px,#00ffeb 412.5px,#00ff30 416.5px,#00ff2f 431.5px)"></i>
<i style="left:723px;background:linear-gradient(#000 0.5px,#000001 259.5px,#180028 264.5px,#3c0093 277.5px,#3f00b3 280.5px,#3800ff 285.5px,#1600ff 291.5px,#0004ff 298.5px,#008dff 331.5px,#00dcff 411.5px,#00fdff 413.5px,#00ff1a 418.5px,#0f1 420.5px,#0f1 431.5px)"></i>
<i style="left:724px;background:linear-gradient(#000 269.5px,#180028 279.5px,#2c0056 286.5px,#390080 289.5px,#3e00db 302.5px,#3600ff 310.5px,#0004ff 335.5px,#00a6ff 381.5px,#00dfff 404.5px,#00e7ff 412.5px,#00fff6 414.5px,#00ff69 417.5px,#00ff60 430.5px,#00ff56 431.5px)"></i>
<i style="left:725px;background:linear-gradient(#000 270.5px,#160024 279.5px,#2a0050 287.5px,#350071 290.5px,#4000c4 302.5px,#3800ff 314.5px,#0002ff 338.5px,#00a1ff 377.5px,#00e7ff 401.5px,#00f6ff 413.5px,#00feff 414.5px,#00ffd3 415.5px,#00ffb7 416.5px,#00ffb7 427.5px,#00ffae 428.5px,#00ff49 429.5px,#00ff34 431.5px)"></i>
<i style="left:726px;background:linear-gradient(#000 270.5px,#160024 279.5px,#21003a 282.5px,#3e009c 289.5px,#3a00f9 302.5px,#2000ff 314.5px,#0005ff 329.5px,#00a4ff 377.5px,#00e2ff 404.5px,#00efff 411.5px,#00fff9 412.5px,#00ff3e 416.5px,#00ff1e 417.5px,#00ff1e 431.5px)"></i>
<i style="left:727px;background:linear-gradient(#000 279.5px,#020003 280.5px,#1b002d 284.5px,#360075 290.5px,#4000c8 302.5px,#3800ff 313.5px,#0005ff 339.5px,#00a3ff 382.5px,#0df 404.5px,#00ecff 414.5px,#0ff 415.5px,#00ffa1 417.5px,#00ff92 418.5px,#00ff92 428.5px,#00ff70 429.5px,#00ff5c 431.5px)"></i>
<i style="left:728px;background:linear-gradient(#000 266.5px,#1c0030 278.5px,#35006f 289.5px,#4000ca 302.5px,#3800ff 313.5px,#0005ff 339.5px,#00a7ff 385.5px,#00d8ff 405.5px,#00e6ff 414.5px,#00f9ff 415.5px,#00ffdf 416.5px,#0f8 418.5px,#0f8 428.5px,#00ff6a 431.5px)"></i>
<i style="left:729px;background:linear-gradient(#000 264.5px,#040007 266.5px,#180027 274.5px,#29004d 282.5px,#34006d 286.5px,#3e00a0 290.5px,#3b00f5 302.5px,#3400ff 306.5px,#0004ff 330.5px,#0025ff 408.5px,#0037ff 422.5px,#0053ff 428.5px,#007cff 429.5px,#0084ff 431.5px)"></i>
<i style="left:730px;background:linear-gradient(#000 0.5px,#010001 266.5px,#19002a 276.5px,#3a0083 293.5px,#4000c0 302.5px,#3700ff 315.5px,#1500ff 332.5px,#0005ff 386.5px,#0031ff 422.5px,#004eff 428.5px,#0076ff 429.5px,#007fff 431.5px)"></i>
<i style="left:731px;background:linear-gradient(#000 261.5px,#1a002c 272.5px,#30005f 283.5px,#370077 287.5px,#3e009c 290.5px,#3b00f1 302.5px,#3600ff 306.5px,#0001ff 331.5px,#003cff 404.5px,#0053ff 422.5px,#06f 427.5px,#0070ff 428.5px,#0098ff 429.5px,#00a0ff 431.5px)"></i>
<i style="left:732px;background:linear-gradient(#000 262.5px,#040007 264.5px,#1c002f 274.5px,#3d0094 301.5px,#3a00f8 328.5px,#2e00ff 338.5px,#0004ff 371.5px,#0079ff 408.5px,#00fcff 415.5px,#0fa 417.5px,#00ff4c 419.5px,#00ff37 420.5px,#00ff37 431.5px)"></i>
<i style="left:733px;background:linear-gradient(#000 254.5px,#1f0036 268.5px,#3c0091 294.5px,#3b00f3 325.5px,#3600ff 331.5px,#0005ff 370.5px,#0074ff 407.5px,#0092ff 409.5px,#00efff 414.5px,#00fff7 415.5px,#00ff3c 419.5px,#00ff31 420.5px,#00ff31 431.5px)"></i>
<i style="left:734px;background:linear-gradient(#000 0.5px,#010001 268.5px,#22003c 282.5px,#3f00a7 303.5px,#3800ff 321.5px,#1a00ff 339.5px,#0004ff 362.5px,#006aff 403.5px,#0071ff 405.5px,#00f4ff 412.5px,#00ffeb 413.5px,#00ff01 418.5px,#1f0 420.5px,#1f0 431.5px)"></i>
<i style="left:735px;background:linear-gradient(#000 0.5px,#010001 252.5px,#1f0035 266.5px,#3e00a0 294.5px,#3800ff 320.5px,#0004ff 362.5px,#0076ff 405.5px,#00f5ff 412.5px,#00ffe8 413.5px,#0f0 418.5px,#0aff00 420.5px,#0aff00 431.5px)"></i>
<i style="left:736px;background:linear-gradient(#000 286.5px,#0e0016 289.5px,#29004d 299.5px,#4000b8 323.5px,#3900fd 340.5px,#0005ff 374.5px,#0078ff 406.5px,#0081ff 410.5px,#00f2ff 416.5px,#00fff1 417.5px,#00ffc3 418.5px,#00ffa8 419.5px,#00ffa8 431.5px)"></i>
<i style="left:737px;background:linear-gradient(#000 263.5px,#160025 272.5px,#2a004f 282.5px,#3e00a3 297.5px,#3e00dc 307.5px,#3600ff 315.5px,#1400ff 332.5px,#0005ff 397.5px,#0023ff 422.5px,#003fff 428.5px,#0068ff 429.5px,#0070ff 431.5px)"></i>
<i style="left:738px;background:linear-gradient(#000 280.5px,#020003 281.5px,#1a002b 285.5px,#310064 290.5px,#4000b6 302.5px,#3800ff 317.5px,#1a00ff 332.5px,#0005ff 391.5px,#002eff 422.5px,#004aff 428.5px,#0073ff 429.5px,#007bff 431.5px)"></i>
<i style="left:739px;background:linear-gradient(#000 0.5px,#010001 260.5px,#1b002d 271.5px,#3d0096 297.5px,#3a00f8 321.5px,#2f00ff 328.5px,#0003ff 355.5px,#00a1ff 406.5px,#00a9ff 411.5px,#00f4ff 415.5px,#00ffeb 416.5px,#00ff5e 419.5px,#00ff5a 431.5px)"></i>
<i style="left:740px;background:linear-gradient(#000 248.5px,#200038 263.5px,#3e009e 290.5px,#3800ff 316.5px,#0005ff 351.5px,#00a4ff 406.5px,#00a7ff 409.5px,#00ebff 413.5px,#00feff 414.5px,#00ff47 418.5px,#0f2 419.5px,#0f2 431.5px)"></i>
<i style="left:741px;background:linear-gradient(#000 283.5px,#030004 284.5px,#19002a 288.5px,#390081 301.5px,#3d00e7 322.5px,#3600ff 328.5px,#0002ff 352.5px,#00a8ff 396.5px,#00c4ff 408.5px,#00c7ff 411.5px,#0ff 414.5px,#00ffd0 415.5px,#00ffb1 416.5px,#00ffaf 430.5px,#00ffa5 431.5px)"></i>
<i style="left:742px;background:linear-gradient(#000 252.5px,#210039 263.5px,#3c008e 279.5px,#3d00e9 285.5px,#3500ff 287.5px,#1900ff 293.5px,#0006ff 302.5px,#00edff 358.5px,#00fffa 364.5px,#00ff84 381.5px,#00ff43 395.5px,#05ff00 423.5px,#17ff00 428.5px,#34ff00 429.5px,#39ff00 431.5px)"></i>
<i style="left:743px;background:linear-gradient(#000 232.5px,#0a0010 237.5px,#200038 248.5px,#3f00a9 279.5px,#4000b7 281.5px,#3700ff 286.5px,#1b00ff 291.5px,#0001ff 299.5px,#00f5ff 357.5px,#0ff 360.5px,#00ff86 376.5px,#00ff37 391.5px,#00ff16 403.5px,#02ff00 415.5px,#1f0 425.5px,#1eff00 428.5px,#3bff00 429.5px,#41ff00 431.5px)"></i>
<i style="left:744px;background:linear-gradient(#000 252.5px,#240040 269.5px,#350072 281.5px,#3d0099 287.5px,#4000b7 289.5px,#3700ff 299.5px,#0002ff 323.5px,#008dff 361.5px,#00e8ff 394.5px,#00fffa 413.5px,#00ffe8 414.5px,#00ff2d 418.5px,#00ff2d 429.5px,#00ff18 431.5px)"></i>
<i style="left:745px;background:linear-gradient(#000 259.5px,#09000e 263.5px,#21003a 274.5px,#300060 282.5px,#38007a 285.5px,#4000b6 289.5px,#3700ff 299.5px,#0005ff 324.5px,#09f 364.5px,#00efff 396.5px,#00fff9 410.5px,#00fff1 413.5px,#00ffe3 414.5px,#00ff57 417.5px,#00ff36 418.5px,#00ff36 428.5px,#00ff1a 430.5px,#00ff10 431.5px)"></i>
<i style="left:746px;background:linear-gradient(#000 243.5px,#1d0032 257.5px,#3d0098 283.5px,#3900fe 304.5px,#0005ff 331.5px,#009eff 366.5px,#00f7ff 394.5px,#00fff9 399.5px,#00ffcb 415.5px,#00ffab 417.5px,#00ffa6 423.5px,#00ff7f 427.5px,#00ff68 428.5px,#00ff03 429.5px,#05ff00 431.5px)"></i>
<i style="left:747px;background:linear-gradient(#000 247.5px,#0a0010 252.5px,#240040 265.5px,#3a0085 282.5px,#3f00d8 296.5px,#3800ff 302.5px,#0002ff 327.5px,#00a3ff 366.5px,#00f9ff 395.5px,#00fffa 399.5px,#00ffd0 414.5px,#00ffb7 415.5px,#0f8 416.5px,#00ff7a 417.5px,#00ff7a 427.5px,#00ff6b 428.5px,#00ff05 429.5px,#04ff00 431.5px)"></i>
<i style="left:748px;background:linear-gradient(#000 254.5px,#0d0015 260.5px,#2a004f 275.5px,#4000b7 296.5px,#3c00ed 305.5px,#3500ff 310.5px,#0005ff 334.5px,#009eff 371.5px,#00f1ff 399.5px,#00fffa 412.5px,#00ffe7 417.5px,#00ffba 418.5px,#00ffba 425.5px,#00ffa6 427.5px,#00ff8f 428.5px,#00ff2a 429.5px,#00ff15 431.5px)"></i>
<i style="left:749px;background:linear-gradient(#000 236.5px,#060009 238.5px,#240041 248.5px,#3f00a6 266.5px,#3c00f0 279.5px,#3900ff 280.5px,#0100ff 288.5px,#0056ff 302.5px,#00caff 331.5px,#00fffe 394.5px,#00ffeb 408.5px,#00ffe3 411.5px,#00ffd3 412.5px,#00ff18 416.5px,#05ff00 417.5px,#05ff00 431.5px)"></i>
<i style="left:750px;background:linear-gradient(#000 254.5px,#020004 255.5px,#1e0034 261.5px,#3e009c 274.5px,#4000c3 279.5px,#3800ff 283.5px,#0800ff 291.5px,#0005ff 294.5px,#0036ff 303.5px,#00a9ff 332.5px,#00f7ff 389.5px,#00fff7 404.5px,#00ffde 414.5px,#00ffbd 415.5px,#00ff5f 417.5px,#00ff5f 428.5px,#00ff13 429.5px,#0f0 431.5px)"></i>
<i style="left:751px;background:linear-gradient(#000 276.5px,#010002 277.5px,#0a0010 279.5px,#29004d 284.5px,#3c0093 289.5px,#3c00f0 302.5px,#3600ff 306.5px,#0001ff 330.5px,#00a0ff 369.5px,#00f2ff 397.5px,#00fff9 408.5px,#00ffe7 415.5px,#00ffd7 416.5px,#00ffa8 417.5px,#00ff94 418.5px,#00ff94 427.5px,#00ff84 428.5px,#00ff1f 429.5px,#00ff0a 431.5px)"></i>
<i style="left:752px;background:linear-gradient(#000 255.5px,#0d0015 261.5px,#2a004f 276.5px,#38007b 284.5px,#4000c2 289.5px,#3900ff 297.5px,#0003ff 321.5px,#008cff 358.5px,#00eaff 392.5px,#00fff9 408.5px,#00ffe9 413.5px,#00ff2e 417.5px,#00ff1a 418.5px,#00ff1a 429.5px,#00ff0a 431.5px)"></i>
<i style="left:753px;background:linear-gradient(#000 238.5px,#1c0031 252.5px,#3d0094 279.5px,#4000c1 286.5px,#3c00ee 289.5px,#3600ff 292.5px,#0100ff 311.5px,#00b2ff 357.5px,#00fffd 384.5px,#00ffb7 399.5px,#00ff8d 416.5px,#00ff6b 417.5px,#00ff5b 418.5px,#00ff58 425.5px,#0f4 427.5px,#00ff2d 428.5px,#10ff00 429.5px,#16ff00 431.5px)"></i>
<i style="left:754px;background:linear-gradient(#000 255.5px,#09000e 259.5px,#23003e 271.5px,#2f005d 279.5px,#4000c4 286.5px,#3b00f2 289.5px,#3400ff 292.5px,#0200ff 310.5px,#0af 355.5px,#00feff 385.5px,#00ffbc 401.5px,#00ff98 416.5px,#00ff48 418.5px,#00ff48 427.5px,#00ff38 428.5px,#0dff00 429.5px,#13ff00 431.5px)"></i>
<i style="left:755px;background:linear-gradient(#000 256.5px,#040007 258.5px,#22003c 270.5px,#310063 279.5px,#4000cb 286.5px,#3a00f9 289.5px,#2700ff 295.5px,#0002ff 310.5px,#00a5ff 351.5px,#0ff 381.5px,#00ffb2 397.5px,#00ff84 415.5px,#00ff6c 416.5px,#00ff45 417.5px,#00ff43 426.5px,#00ff38 427.5px,#00ff21 428.5px,#13ff00 429.5px,#19ff00 431.5px)"></i>
<i style="left:756px;background:linear-gradient(#000 260.5px,#1f0036 269.5px,#350070 279.5px,#3f00d9 286.5px,#3a00f8 288.5px,#2e00ff 291.5px,#0200ff 306.5px,#0086ff 341.5px,#00edff 377.5px,#00fffc 386.5px,#00ffc4 400.5px,#00ff9f 415.5px,#00ff13 418.5px,#00ff13 428.5px,#0bff00 429.5px,#1f0 431.5px)"></i>
<i style="left:757px;background:linear-gradient(#000 250.5px,#11001c 258.5px,#300060 276.5px,#38007c 281.5px,#3f00d6 287.5px,#3b00f5 289.5px,#3000ff 293.5px,#0100ff 310.5px,#00a8ff 353.5px,#00fffe 383.5px,#00ffb7 398.5px,#00ff8d 415.5px,#00ff85 416.5px,#00ff56 417.5px,#00ff4b 418.5px,#00ff4b 426.5px,#00ff41 427.5px,#00ff2a 428.5px,#1f0 429.5px,#17ff00 431.5px)"></i>
<i style="left:758px;background:linear-gradient(#000 277.5px,#08000d 279.5px,#21003b 283.5px,#3b008e 289.5px,#3d00ea 302.5px,#3700ff 307.5px,#0300ff 331.5px,#01f 404.5px,#0027ff 422.5px,#04f 428.5px,#006cff 429.5px,#0075ff 431.5px)"></i>
<i style="left:759px;background:linear-gradient(#000 277.5px,#08000d 279.5px,#21003b 283.5px,#3b008e 289.5px,#3d00ea 302.5px,#3700ff 307.5px,#0300ff 331.5px,#01f 404.5px,#0027ff 422.5px,#04f 428.5px,#006cff 429.5px,#0075ff 431.5px)"></i>
<i style="left:760px;background:linear-gradient(#000 261.5px,#1c002f 273.5px,#2e005a 282.5px,#3b008d 286.5px,#4000ba 289.5px,#3900ff 298.5px,#0005ff 323.5px,#0027ff 333.5px,#00b3ff 405.5px,#00b9ff 409.5px,#00f1ff 412.5px,#00fff2 413.5px,#00ff37 417.5px,#00ff37 431.5px)"></i>
<i style="left:761px;background:linear-gradient(#000 265.5px,#040006 267.5px,#1c002f 277.5px,#2b0053 283.5px,#3f00a9 289.5px,#3900fd 300.5px,#0004ff 326.5px,#05f 357.5px,#0bf 406.5px,#00c3ff 410.5px,#00fcff 413.5px,#0fa 415.5px,#00ff7b 416.5px,#00ff68 417.5px,#00ff68 431.5px)"></i>
<i style="left:762px;background:linear-gradient(#000 279.5px,#030004 280.5px,#1b002e 284.5px,#370076 290.5px,#4000ca 302.5px,#3800ff 313.5px,#0a00ff 336.5px,#0006ff 347.5px,#008dff 408.5px,#0094ff 414.5px,#0ff 420.5px,#00ffd1 421.5px,#00ffbd 422.5px,#00ffbd 431.5px)"></i>
<i style="left:763px;background:linear-gradient(#000 267.5px,#020003 268.5px,#22003c 275.5px,#33006b 280.5px,#4000c4 286.5px,#3b00f2 289.5px,#3400ff 292.5px,#0200ff 310.5px,#0050ff 331.5px,#00b6ff 405.5px,#00d2ff 407.5px,#00f7ff 409.5px,#00ffe4 410.5px,#02ff00 415.5px,#19ff00 417.5px,#19ff00 431.5px)"></i>
<i style="left:764px;background:linear-gradient(#000 255.5px,#0d0015 261.5px,#2a004f 276.5px,#310062 280.5px,#4000ca 287.5px,#3c00f0 290.5px,#3500ff 293.5px,#0400ff 311.5px,#0012ff 317.5px,#0048ff 331.5px,#00b3ff 406.5px,#00fbff 410.5px,#00ffac 412.5px,#00ff1f 415.5px,#04ff00 416.5px,#12ff00 417.5px,#14ff00 431.5px)"></i>
<i style="left:765px;background:linear-gradient(#000 238.5px,#1c0031 252.5px,#3d0094 279.5px,#3a00f8 299.5px,#2c00ff 306.5px,#0005ff 327.5px,#001cff 331.5px,#00c3ff 352.5px,#00feff 361.5px,#00ff5b 373.5px,#00ff02 381.5px,#25ff00 400.5px,#39ff00 423.5px,#4bff00 428.5px,#68ff00 429.5px,#6eff00 431.5px)"></i>
<i style="left:766px;background:linear-gradient(#000 255.5px,#050008 257.5px,#1d0031 264.5px,#3a0087 279.5px,#3e00e2 285.5px,#3800ff 287.5px,#1c00ff 293.5px,#0005ff 303.5px,#007dff 331.5px,#00feff 352.5px,#00ff4a 367.5px,#00ff04 374.5px,#2bff00 398.5px,#40ff00 423.5px,#52ff00 428.5px,#6fff00 429.5px,#75ff00 431.5px)"></i>
<i style="left:767px;background:linear-gradient(#000 241.5px,#040007 243.5px,#1d0032 253.5px,#3d0098 276.5px,#3f00a5 279.5px,#3800ff 285.5px,#1500ff 291.5px,#0005ff 298.5px,#0096ff 331.5px,#00feff 348.5px,#00ff3a 364.5px,#01ff00 370.5px,#30ff00 392.5px,#4cff00 423.5px,#5eff00 428.5px,#7bff00 429.5px,#81ff00 431.5px)"></i>
<i style="left:768px;background:linear-gradient(#000 257.5px,#1f0036 266.5px,#3a0083 279.5px,#3c00ed 286.5px,#3900fd 287.5px,#0900ff 299.5px,#0006ff 304.5px,#007bff 331.5px,#00fcff 350.5px,#00ffe9 352.5px,#00ff3a 365.5px,#0f0 370.5px,#35ff00 392.5px,#52ff00 423.5px,#64ff00 428.5px,#81ff00 429.5px,#87ff00 431.5px)"></i>
<i style="left:769px;background:linear-gradient(#000 0.5px,#000001 293.5px,#0e0017 300.5px,#1a002c 312.5px,#2d0058 329.5px,#1f0036 330.5px,#3f00a6 359.5px,#3800ff 380.5px,#00f 403.5px,#000eff 407.5px,#0025ff 423.5px,#003eff 428.5px,#0067ff 429.5px,#006fff 431.5px)"></i>
<i style="left:770px;background:linear-gradient(#000 254.5px,#0d0015 260.5px,#2a004f 275.5px,#370076 283.5px,#3c0094 287.5px,#4000b9 290.5px,#3900fe 299.5px,#0002ff 324.5px,#00b3ff 364.5px,#00fffe 387.5px,#00ffb9 400.5px,#00ff92 415.5px,#00ff85 416.5px,#00ff57 417.5px,#0f4 418.5px,#0f4 427.5px,#00ff30 428.5px,#0fff00 429.5px,#15ff00 431.5px)"></i>
<i style="left:771px;background:linear-gradient(#000 273.5px,#020003 274.5px,#190029 279.5px,#3d0098 287.5px,#4000b6 289.5px,#3700ff 299.5px,#0005ff 324.5px,#00c3ff 363.5px,#0ff 379.5px,#00ffa4 392.5px,#0f7 403.5px,#00ff48 421.5px,#03ff00 428.5px,#1fff00 429.5px,#25ff00 431.5px)"></i>
<i style="left:772px;background:linear-gradient(#000 264.5px,#160025 273.5px,#22003d 279.5px,#3e00a1 286.5px,#3f00ce 289.5px,#3600ff 296.5px,#0005ff 319.5px,#004eff 335.5px,#00ceff 362.5px,#0ff 375.5px,#00ff8f 391.5px,#00ff62 402.5px,#00ff49 413.5px,#00ff2f 414.5px,#00ff2e 421.5px,#00ff02 426.5px,#09ff00 428.5px,#26ff00 429.5px,#2cff00 431.5px)"></i>
<i style="left:773px;background:linear-gradient(#000 263.5px,#030004 264.5px,#1e0035 270.5px,#39007f 279.5px,#3d00e9 286.5px,#3500ff 288.5px,#0100ff 303.5px,#00b8ff 350.5px,#00fffe 374.5px,#00ff9f 392.5px,#00ff7c 405.5px,#00ff51 421.5px,#00ff16 427.5px,#0f0 428.5px,#1dff00 429.5px,#23ff00 431.5px)"></i>
<i style="left:774px;background:linear-gradient(#000 248.5px,#050008 250.5px,#1e0034 258.5px,#3d0097 276.5px,#3f00a8 279.5px,#3700ff 285.5px,#1400ff 291.5px,#0007ff 298.5px,#009cff 334.5px,#00feff 370.5px,#00ffa0 391.5px,#00ff68 414.5px,#00ff45 415.5px,#00ff2e 416.5px,#00ff2e 425.5px,#00ff19 427.5px,#00ff02 428.5px,#1cff00 429.5px,#2f0 431.5px)"></i>
<i style="left:775px;background:linear-gradient(#000 252.5px,#07000a 255.5px,#270047 269.5px,#350071 279.5px,#4000cb 285.5px,#3a00f9 288.5px,#2300ff 294.5px,#0002ff 307.5px,#00b1ff 351.5px,#00fffa 378.5px,#00ffac 393.5px,#00ff8a 405.5px,#00ff73 414.5px,#00ff5a 415.5px,#00ff2c 416.5px,#00ff2b 426.5px,#00ff25 427.5px,#00ff0e 428.5px,#19ff00 429.5px,#1fff00 431.5px)"></i>
<i style="left:776px;background:linear-gradient(#000 266.5px,#140021 270.5px,#320068 279.5px,#3f00d0 286.5px,#3900fe 289.5px,#0300ff 307.5px,#0064ff 332.5px,#00e2ff 362.5px,#00fffc 371.5px,#00ff96 386.5px,#00ff5e 399.5px,#00ff26 421.5px,#00ff01 425.5px,#0cff00 428.5px,#29ff00 429.5px,#2fff00 431.5px)"></i>
<i style="left:777px;background:linear-gradient(#000 0.5px,#010001 258.5px,#200037 266.5px,#3c008e 279.5px,#3d00e9 285.5px,#3500ff 287.5px,#1900ff 293.5px,#0006ff 302.5px,#00b2ff 345.5px,#00fffa 371.5px,#00ff9d 388.5px,#00ff71 401.5px,#00ff59 412.5px,#00ff40 413.5px,#0f1 414.5px,#03ff00 415.5px,#05ff00 428.5px,#2f0 429.5px,#28ff00 431.5px)"></i>
<i style="left:778px;background:linear-gradient(#000 0.5px,#010001 245.5px,#1a002c 250.5px,#3c0091 263.5px,#3b00f3 275.5px,#30f 278.5px,#0003ff 286.5px,#002eff 290.5px,#0079ff 303.5px,#00fffe 335.5px,#00ff4d 353.5px,#00ff02 362.5px,#2fff00 392.5px,#48ff00 423.5px,#5aff00 428.5px,#7f0 429.5px,#7dff00 431.5px)"></i>
<i style="left:779px;background:linear-gradient(#000 242.5px,#020003 243.5px,#23003e 250.5px,#3f00ae 264.5px,#3900ff 274.5px,#1900ff 281.5px,#0005ff 285.5px,#0037ff 289.5px,#0083ff 302.5px,#00fffd 332.5px,#0f5 350.5px,#0f0 361.5px,#2dff00 391.5px,#47ff00 423.5px,#59ff00 428.5px,#76ff00 429.5px,#7bff00 431.5px)"></i>
<i style="left:780px;background:linear-gradient(#000 235.5px,#020003 236.5px,#200039 244.5px,#3e009d 259.5px,#3900fb 273.5px,#20f 280.5px,#0002ff 285.5px,#0039ff 290.5px,#0080ff 302.5px,#00fffb 333.5px,#00ff56 351.5px,#00ff02 362.5px,#2dff00 394.5px,#41ff00 422.5px,#5f0 428.5px,#72ff00 429.5px,#78ff00 431.5px)"></i>
<i style="left:781px;background:linear-gradient(#000 242.5px,#030005 243.5px,#1c0030 248.5px,#3d0097 261.5px,#3a00f9 273.5px,#2500ff 279.5px,#0300ff 284.5px,#003fff 290.5px,#008aff 303.5px,#00feff 331.5px,#00ff3c 351.5px,#00ff01 358.5px,#34ff00 389.5px,#50ff00 423.5px,#61ff00 428.5px,#7eff00 429.5px,#84ff00 431.5px)"></i>
<i style="left:782px;background:linear-gradient(#000 0.5px,#000001 250.5px,#240040 258.5px,#3f00a9 271.5px,#3d00ea 279.5px,#3400ff 281.5px,#0005ff 289.5px,#0056ff 303.5px,#00d7ff 333.5px,#00fffb 341.5px,#00ff46 357.5px,#00ff03 364.5px,#3f0 391.5px,#4fff00 423.5px,#61ff00 428.5px,#7eff00 429.5px,#84ff00 431.5px)"></i>
<i style="left:783px;background:linear-gradient(#000 245.5px,#030004 246.5px,#170026 250.5px,#3b008c 263.5px,#3c00ee 275.5px,#3900ff 277.5px,#0100ff 286.5px,#002aff 290.5px,#0070ff 302.5px,#00fffe 336.5px,#0f5 353.5px,#00ff02 363.5px,#2fff00 393.5px,#47ff00 423.5px,#59ff00 428.5px,#76ff00 429.5px,#7bff00 431.5px)"></i>
<i style="left:784px;background:linear-gradient(#000 245.5px,#19002a 250.5px,#3c0090 263.5px,#3b00f2 275.5px,#30f 278.5px,#0002ff 286.5px,#002dff 290.5px,#0078ff 303.5px,#00fffe 335.5px,#00ff46 353.5px,#00ff01 361.5px,#3f0 391.5px,#4dff00 423.5px,#5fff00 428.5px,#7cff00 429.5px,#82ff00 431.5px)"></i>
<i style="left:785px;background:linear-gradient(#000 0.5px,#010001 265.5px,#21003a 272.5px,#390082 280.5px,#3e00dd 286.5px,#3900fc 288.5px,#0200ff 305.5px,#006cff 331.5px,#00fbff 355.5px,#00fff1 357.5px,#00ff4c 372.5px,#0f0 381.5px,#1eff00 403.5px,#3f0 424.5px,#42ff00 428.5px,#5fff00 429.5px,#65ff00 431.5px)"></i>
<i style="left:786px;background:linear-gradient(#000 243.5px,#19002a 255.5px,#3b008a 280.5px,#3e00a1 283.5px,#3900fd 289.5px,#0100ff 308.5px,#0062ff 331.5px,#00f6ff 353.5px,#00fff9 355.5px,#00ff50 368.5px,#01ff00 376.5px,#2bff00 397.5px,#42ff00 423.5px,#54ff00 428.5px,#71ff00 429.5px,#7f0 431.5px)"></i>
<i style="left:787px;background:linear-gradient(#000 282.5px,#020004 283.5px,#130020 286.5px,#270048 290.5px,#3d0096 302.5px,#3a00f8 322.5px,#2c00ff 329.5px,#0005ff 356.5px,#009cff 407.5px,#00f5ff 412.5px,#00ffea 413.5px,#00ff8f 415.5px,#00ff8f 431.5px)"></i>
<i style="left:788px;background:linear-gradient(#000 247.5px,#150023 257.5px,#360076 279.5px,#3f00d8 310.5px,#3600ff 324.5px,#0004ff 368.5px,#0064ff 403.5px,#0073ff 409.5px,#00f6ff 416.5px,#00ffe7 417.5px,#00ff5b 420.5px,#00ff5a 431.5px)"></i>
<i style="left:789px;background:linear-gradient(#000 0.5px,#010001 256.5px,#200037 270.5px,#3c008f 290.5px,#3b00f2 310.5px,#3500ff 314.5px,#0b00ff 336.5px,#0006ff 349.5px,#0081ff 404.5px,#009bff 406.5px,#00f9ff 411.5px,#00ffdf 412.5px,#00ff24 416.5px,#03ff00 417.5px,#08ff00 431.5px)"></i>
<i style="left:790px;background:linear-gradient(#000 269.5px,#040007 271.5px,#1a002c 280.5px,#39007f 295.5px,#3f00b2 303.5px,#3700ff 319.5px,#0f00ff 342.5px,#0006ff 356.5px,#0085ff 406.5px,#00a3ff 408.5px,#00fffa 413.5px,#00ff3f 417.5px,#00ff2e 418.5px,#00ff2e 431.5px)"></i>
<i style="left:791px;background:linear-gradient(#000 0.5px,#010001 266.5px,#19002a 276.5px,#3d0097 299.5px,#3a00fb 319.5px,#1000ff 343.5px,#0006ff 357.5px,#008dff 407.5px,#00feff 413.5px,#00ff47 417.5px,#0f4 431.5px)"></i>
<i style="left:792px;background:linear-gradient(#000 283.5px,#160025 287.5px,#240042 290.5px,#3c0093 303.5px,#3b00f5 323.5px,#3400ff 327.5px,#00f 342.5px,#0098ff 368.5px,#00f5ff 389.5px,#00fffd 392.5px,#00ffbd 402.5px,#00ff98 416.5px,#00ff8b 417.5px,#00ff89 421.5px,#00ff4f 427.5px,#00ff38 428.5px,#0dff00 429.5px,#13ff00 431.5px)"></i>
<i style="left:793px;background:linear-gradient(#000 270.5px,#07000a 272.5px,#200038 279.5px,#3f00a9 287.5px,#3f00cf 290.5px,#3600ff 297.5px,#0003ff 320.5px,#0067ff 347.5px,#00d4ff 385.5px,#00fbff 408.5px,#00fff5 416.5px,#00fff0 418.5px,#00ffd5 419.5px,#00ffa6 420.5px,#00ff8e 421.5px,#00ff8e 428.5px,#00ff30 429.5px,#00ff1b 431.5px)"></i>
<i style="left:794px;background:linear-gradient(#000 247.5px,#150023 257.5px,#390082 281.5px,#3e00a2 286.5px,#3f00cd 289.5px,#3700ff 296.5px,#0004ff 319.5px,#00b5ff 363.5px,#0ff 388.5px,#00ffc0 402.5px,#00ff8e 421.5px,#00ff54 427.5px,#00ff3e 428.5px,#0bff00 429.5px,#1f0 431.5px)"></i>
<i style="left:795px;background:linear-gradient(#000 261.5px,#020003 262.5px,#1d0033 268.5px,#3c008e 279.5px,#3d00e9 285.5px,#3500ff 287.5px,#1900ff 293.5px,#0006ff 302.5px,#0086ff 334.5px,#00edff 374.5px,#00fffc 384.5px,#00ffc3 400.5px,#00ffa8 412.5px,#00ff85 413.5px,#00ff27 415.5px,#02ff00 416.5px,#0dff00 417.5px,#1f0 431.5px)"></i>
<i style="left:796px;background:linear-gradient(#000 279.5px,#030004 280.5px,#1b002e 284.5px,#370076 290.5px,#4000ca 302.5px,#3800ff 313.5px,#0d00ff 334.5px,#0005ff 348.5px,#007eff 404.5px,#009aff 406.5px,#00f8ff 411.5px,#00ffe2 412.5px,#00ff27 416.5px,#02ff00 417.5px,#0bff00 419.5px,#0bff00 431.5px)"></i>
<i style="left:797px;background:linear-gradient(#000 282.5px,#11001b 285.5px,#2a0050 290.5px,#3e009f 302.5px,#3900fd 321.5px,#0003ff 356.5px,#0090ff 407.5px,#00fffc 413.5px,#00ff6f 416.5px,#00ff62 417.5px,#00ff62 431.5px)"></i>
<i style="left:798px;background:linear-gradient(#000 257.5px,#1e0033 270.5px,#3f00a8 297.5px,#3800ff 316.5px,#0003ff 342.5px,#009eff 382.5px,#00dbff 404.5px,#00e3ff 411.5px,#00f6ff 412.5px,#00ffe7 413.5px,#00ff2c 417.5px,#00ff17 418.5px,#00ff17 431.5px)"></i>
<i style="left:799px;background:linear-gradient(#000 241.5px,#0a0010 246.5px,#22003c 258.5px,#3e00a0 286.5px,#3700ff 318.5px,#0005ff 351.5px,#00afff 404.5px,#00b9ff 413.5px,#00fdff 417.5px,#00ff19 422.5px,#00ff12 425.5px,#00ff12 431.5px)"></i>
<i style="left:800px;background:linear-gradient(#000 257.5px,#1e0033 270.5px,#310063 281.5px,#390083 284.5px,#3f00ce 289.5px,#3600ff 296.5px,#0005ff 319.5px,#003cff 334.5px,#00beff 389.5px,#00dcff 410.5px,#00f9ff 412.5px,#00ffdf 413.5px,#00ff23 417.5px,#03ff00 418.5px,#04ff00 431.5px)"></i>
<i style="left:801px;background:linear-gradient(#000 270.5px,#160025 279.5px,#240042 283.5px,#3d0096 289.5px,#3a00f8 303.5px,#2c00ff 310.5px,#0003ff 330.5px,#00a9ff 392.5px,#00c9ff 411.5px,#0cf 414.5px,#00fffc 417.5px,#00ff6f 420.5px,#00ff67 422.5px,#00ff67 431.5px)"></i>
<i style="left:802px;background:linear-gradient(#000 268.5px,#09000e 272.5px,#1c0030 280.5px,#2a004e 285.5px,#3a0086 289.5px,#3e00e2 302.5px,#3600ff 309.5px,#0004ff 334.5px,#00a4ff 384.5px,#00d6ff 407.5px,#00e1ff 415.5px,#00f4ff 416.5px,#00ffec 417.5px,#00ffbd 418.5px,#00ffac 419.5px,#00ffac 428.5px,#00ff8a 429.5px,#00ff75 431.5px)"></i>
<i style="left:803px;background:linear-gradient(#000 271.5px,#020003 272.5px,#21003a 279.5px,#3e009d 286.5px,#4000ca 289.5px,#3800ff 296.5px,#0002ff 319.5px,#0038ff 334.5px,#0bf 395.5px,#00d1ff 411.5px,#00f7ff 413.5px,#00ffe5 414.5px,#02ff00 419.5px,#07ff00 431.5px)"></i>
<i style="left:804px;background:linear-gradient(#000 281.5px,#0a0010 283.5px,#270048 288.5px,#370078 294.5px,#3f00b2 303.5px,#3700ff 319.5px,#1d00ff 334.5px,#0005ff 385.5px,#003eff 423.5px,#0057ff 428.5px,#007fff 429.5px,#08f 431.5px)"></i>
<i style="left:805px;background:linear-gradient(#000 233.5px,#1c0031 247.5px,#3d0097 275.5px,#3a00f8 301.5px,#3000ff 308.5px,#0b00ff 333.5px,#0006ff 368.5px,#0041ff 422.5px,#0054ff 427.5px,#005eff 428.5px,#0086ff 429.5px,#008eff 431.5px)"></i>
<i style="left:806px;background:linear-gradient(#000 199.5px,#0a0010 204.5px,#200038 215.5px,#3f00a7 246.5px,#3800ff 271.5px,#1c00ff 284.5px,#0100ff 288.5px,#0056ff 302.5px,#00dbff 333.5px,#0ff 340.5px,#00ff4b 356.5px,#0f0 364.5px,#3f0 391.5px,#4fff00 423.5px,#61ff00 428.5px,#7eff00 429.5px,#84ff00 431.5px)"></i>
<i style="left:807px;background:linear-gradient(#000 233.5px,#1c0031 247.5px,#3d0097 275.5px,#3900fe 309.5px,#1a00ff 338.5px,#0005ff 389.5px,#0036ff 423.5px,#004fff 428.5px,#07f 429.5px,#0080ff 431.5px)"></i>
<i style="left:808px;background:linear-gradient(#000 270.5px,#160024 279.5px,#2a0050 287.5px,#350071 290.5px,#4000c4 302.5px,#3800ff 314.5px,#1200ff 333.5px,#0005ff 367.5px,#004bff 418.5px,#06f 427.5px,#0070ff 428.5px,#0098ff 429.5px,#00a0ff 431.5px)"></i>
<i style="left:809px;background:linear-gradient(#000 265.5px,#040006 267.5px,#1c002f 277.5px,#2e005b 285.5px,#3c0093 289.5px,#3c00f0 302.5px,#3600ff 306.5px,#0004ff 330.5px,#00aeff 349.5px,#00fffa 360.5px,#00ff3f 372.5px,#01ff00 377.5px,#32ff00 396.5px,#4eff00 424.5px,#5dff00 428.5px,#7aff00 429.5px,#80ff00 431.5px)"></i>
<i style="left:810px;background:linear-gradient(#000 0.5px,#010001 261.5px,#1d0031 273.5px,#3e009f 296.5px,#3800ff 314.5px,#1400ff 332.5px,#0005ff 387.5px,#002fff 422.5px,#0042ff 427.5px,#004cff 428.5px,#0074ff 429.5px,#007cff 431.5px)"></i>
<i style="left:811px;background:linear-gradient(#000 272.5px,#020003 273.5px,#1d0032 279.5px,#3e00a2 287.5px,#4000c8 290.5px,#3900fe 297.5px,#0002ff 321.5px,#0026ff 331.5px,#0041ff 409.5px,#0052ff 422.5px,#006eff 428.5px,#0097ff 429.5px,#009fff 431.5px)"></i>
<i style="left:812px;background:linear-gradient(#000 278.5px,#030004 279.5px,#1c0030 283.5px,#390080 289.5px,#3e00db 302.5px,#3600ff 310.5px,#0005ff 335.5px,#00a3ff 377.5px,#00e6ff 402.5px,#00f4ff 414.5px,#00ffeb 415.5px,#00ffbc 416.5px,#00ffa2 417.5px,#00ffa2 428.5px,#00ff51 429.5px,#00ff3d 431.5px)"></i>
<i style="left:813px;background:linear-gradient(#000 0.5px,#010001 268.5px,#1b002e 279.5px,#28004a 283.5px,#3e009f 289.5px,#3900fc 302.5px,#0003ff 328.5px,#00a0ff 373.5px,#00e8ff 402.5px,#00f2ff 412.5px,#00fff3 413.5px,#00ff67 416.5px,#00ff51 417.5px,#00ff4f 429.5px,#00ff3a 431.5px)"></i>
<i style="left:814px;background:linear-gradient(#000 271.5px,#020003 272.5px,#21003a 279.5px,#3e009d 286.5px,#4000ca 289.5px,#3800ff 296.5px,#0002ff 319.5px,#0061ff 345.5px,#00d0ff 384.5px,#00f6ff 406.5px,#00f9ff 409.5px,#00ffeb 410.5px,#00ff01 415.5px,#05ff00 431.5px)"></i>
<i style="left:815px;background:linear-gradient(#000 246.5px,#09000f 248.5px,#1b002f 252.5px,#3d0095 265.5px,#3a00f8 277.5px,#2e00ff 280.5px,#0005ff 287.5px,#0024ff 290.5px,#006fff 303.5px,#00feff 337.5px,#00ff50 355.5px,#0f0 365.5px,#2bff00 393.5px,#4f0 423.5px,#5f0 428.5px,#72ff00 429.5px,#78ff00 431.5px)"></i>
<i style="left:816px;background:linear-gradient(#000 0.5px,#010001 245.5px,#1a002c 250.5px,#3c0091 263.5px,#3b00f3 275.5px,#30f 278.5px,#0003ff 286.5px,#002eff 290.5px,#0079ff 303.5px,#00fffd 335.5px,#00ff4a 353.5px,#0f0 362.5px,#30ff00 391.5px,#4aff00 423.5px,#5cff00 428.5px,#79ff00 429.5px,#7fff00 431.5px)"></i>
<i style="left:817px;background:linear-gradient(#000 243.5px,#030005 244.5px,#1c0030 249.5px,#3d0096 262.5px,#3a00f7 274.5px,#3500ff 276.5px,#0e00ff 283.5px,#00f 285.5px,#0032ff 289.5px,#007fff 302.5px,#00fffc 333.5px,#00ff46 352.5px,#0f0 361.5px,#30ff00 391.5px,#49ff00 423.5px,#5bff00 428.5px,#78ff00 429.5px,#7eff00 431.5px)"></i></div>
<svg width="945" height="517" viewBox="0 0 945 517" shape-rendering="crispEdges">
<defs><linearGradient id="cb" gradientUnits="userSpaceOnUse" x1="0" y1="50" x2="0" y2="484"><stop offset="0.001152" stop-color="#ff0000"/><stop offset="0.2454" stop-color="#ffff00"/><stop offset="0.5081" stop-color="#01ff00"/><stop offset="0.5104" stop-color="#00ff03"/><stop offset="0.5841" stop-color="#00fffd"/><stop offset="0.5887" stop-color="#00faff"/><stop offset="0.773" stop-color="#0000ff"/><stop offset="0.8491" stop-color="#3900fe"/><stop offset="0.8675" stop-color="#3e00de"/><stop offset="0.8906" stop-color="#4000b7"/><stop offset="0.9136" stop-color="#3c0090"/><stop offset="0.9459" stop-color="#2e005a"/><stop offset="0.9666" stop-color="#1f0037"/><stop offset="0.9919" stop-color="#08000c"/><stop offset="0.9988" stop-color="#000000"/></linearGradient></defs>
<g transform="translate(0,.5)" fill="none" stroke-width="1"><path stroke="#000" d="M135 368h1"/><path stroke="#11001c" d="M606 477h1"/><path stroke="#200038" d="M53 271h1M260 358h1M351 467h1M518 312h1M661 370h1M813 353h1"/><path stroke="#2c0054" d="M78 306h1M219 362h1M296 399h1M348 370h1M348 377h1M469 384h1M509 300h1M631 321h1M769 426h1M852 354h1M861 363h1"/><path stroke="#350071" d="M69 382h1M73 298h1M85 398h1M85 411h1M117 375h1M173 413h1M242 445h1M243 427h1M247 358h1M261 381h1M340 393h1M393 360h1M396 347h1M414 397h1M415 363h1M417 356h1M424 375h1M425 362h1M432 350h1M466 366h1M503 284h1M512 404h1M528 324h1M543 368h1M562 367h1M579 364h1M605 474h1M608 386h1M614 349h1M639 390h1M653 321h1M722 406h1M739 358h1M784 366h1M790 367h1M793 334h1M803 343h1"/><path stroke="#3b008d" d="M91 383h1M132 395h1M142 400h1M163 379h1M173 418h1M187 399h1M187 410h1M199 354h1M227 350h1M246 426h1M261 385h1M299 310h1M314 315h1M324 380h1M324 385h1M325 369h1M333 384h1M337 405h1M351 468h1M371 366h1M372 382h1M374 329h1M374 330h1M377 355h1M416 350h1M422 399h1M450 406h1M451 411h1M455 390h1M466 361h1M469 389h1M471 383h1M471 393h1M472 381h1M475 381h1M476 406h1M481 310h1M486 311h1M521 313h1M528 329h1M618 382h1M626 322h1M628 336h1M635 375h1M658 326h1M691 360h1M719 409h1M721 418h1M728 352h1M733 365h1M750 346h1M758 421h1M776 357h1M792 369h1M793 336h1M802 347h1M812 348h1M831 320h1"/><path stroke="#3f00a9" d="M75 376h1M90 331h1M96 369h1M120 370h1M131 394h1M131 412h1M147 379h1M152 424h1M161 391h1M162 379h1M185 343h1M187 405h1M202 371h1M205 334h1M228 343h1M240 440h1M245 416h1M256 349h1M296 424h1M296 453h1M322 364h1M324 384h1M325 375h1M326 367h1M333 387h1M335 414h1M346 413h1M346 443h1M349 283h1M352 479h1M363 371h1M370 398h1M371 376h1M373 352h1M388 357h1M390 357h1M396 350h1M416 339h1M419 386h1M434 422h1M446 365h1M452 422h1M456 412h1M459 369h1M469 427h1M517 336h1M518 329h1M545 369h1M550 378h1M554 374h1M574 376h1M575 378h1M578 400h1M579 370h1M585 389h1M589 305h1M617 363h1M617 366h1M635 363h1M661 382h1M682 383h1M700 366h1M729 368h1M742 371h1M743 362h1M747 362h1M753 362h1M830 321h1M844 365h1M860 355h1"/><path stroke="#4000c5" d="M63 323h1M66 375h1M68 430h1M119 396h1M124 450h1M143 410h1M147 419h1M164 397h1M165 381h1M165 405h1M170 457h1M170 465h1M185 353h1M206 350h1M208 362h1M261 401h1M299 321h1M326 393h1M350 333h1M357 380h1M368 382h1M368 384h1M369 391h1M372 399h1M374 377h1M390 370h1M395 373h1M401 386h1M454 418h1M461 419h1M464 368h1M470 442h1M481 326h1M486 322h1M505 304h1M506 292h1M512 423h1M513 393h1M514 384h1M519 308h1M530 358h1M532 409h1M544 376h1M545 376h1M590 328h1M611 383h1M615 368h1M631 330h1M641 395h1M678 406h1M678 413h1M684 380h1M685 383h1M686 345h1M719 425h1M739 367h1M740 375h1M744 346h1M746 360h1M768 391h1M787 398h1M789 430h1M790 384h1M795 359h1M802 356h1M802 361h1M804 355h1M853 365h1M857 325h1M858 380h1M862 354h1"/><path stroke="#3e00e1" d="M54 366h1M75 405h1M80 371h1M90 344h1M124 444h1M132 388h1M132 392h1M146 404h1M146 405h1M162 427h1M163 409h1M181 348h1M186 410h1M186 442h1M199 372h1M203 398h1M204 337h1M239 368h1M239 373h1M244 434h1M244 442h1M246 435h1M273 306h1M280 299h1M295 463h1M296 447h1M313 316h1M323 393h1M336 424h1M346 461h1M348 466h1M352 481h1M360 392h1M369 450h1M374 369h1M389 358h1M393 380h1M395 413h1M414 437h1M417 440h1M420 411h1M421 371h1M423 410h1M450 464h1M451 477h1M460 387h1M463 360h1M464 369h1M471 437h1M519 319h1M529 336h1M546 397h1M546 401h1M552 425h1M571 430h1M581 353h1M591 342h1M596 354h1M598 364h1M607 431h1M609 394h1M629 357h1M633 326h1M635 404h1M636 347h1M663 410h1M682 409h1M729 375h1M773 339h1M786 389h1M799 376h1M817 353h1M853 366h1M861 396h1"/><path stroke="#3900fd" d="M134 422h1M134 434h1M139 378h1M149 409h1M202 388h1M202 390h1M204 338h1M207 366h1M215 357h1M223 364h1M232 364h1M235 356h1M246 447h1M250 338h1M253 475h1M255 366h1M313 313h1M318 422h1M335 432h1M343 469h1M345 390h1M345 451h1M348 365h1M359 427h1M361 386h1M362 383h1M366 424h1M374 382h1M377 387h1M385 388h1M388 380h1M394 412h1M401 390h1M416 411h1M419 429h1M430 341h1M453 360h1M457 387h1M458 429h1M458 435h1M469 425h1M474 432h1M479 380h1M498 333h1M504 306h1M514 417h1M526 366h1M532 427h1M532 433h1M533 468h1M542 436h1M543 446h1M562 391h1M562 406h1M569 417h1M574 430h1M576 387h1M587 351h1M608 417h1M609 416h1M636 360h1M641 416h1M656 423h1M656 437h1M657 334h1M662 452h1M683 359h1M684 397h1M688 337h1M692 407h1M692 408h1M699 384h1M700 395h1M742 404h1M753 371h1M758 469h1M761 372h1M778 377h1M783 417h1M800 323h1M803 366h1M804 350h1M810 348h1M814 360h1M829 332h1M844 360h1M845 357h1M856 401h1M858 395h1M866 334h1"/><path stroke="#2d00ff" d="M54 374h1M78 335h1M82 323h1M83 320h1M101 405h1M101 417h1M102 401h1M102 412h1M102 417h1M105 412h1M105 414h1M105 418h1M106 416h1M107 424h1M107 429h1M113 409h1M117 403h1M125 433h1M127 429h1M135 433h1M141 420h1M143 441h1M144 427h1M145 426h1M145 437h1M147 470h1M152 451h1M165 368h1M166 377h1M168 374h1M172 431h1M179 338h1M181 370h1M186 367h1M191 365h1M191 370h1M196 403h1M200 398h1M206 368h1M211 402h1M214 371h1M222 360h1M239 415h1M242 430h1M257 358h1M264 349h1M265 392h1M265 408h1M272 307h1M282 319h1M285 369h1M286 367h1M293 360h1M294 424h1M295 413h1M317 359h1M317 363h1M324 373h1M327 414h1M328 357h1M332 372h1M345 459h1M355 389h1M356 381h1M367 426h1M368 429h1M370 425h1M372 454h1M378 354h1M380 363h1M384 438h1M389 346h1M394 422h1M395 417h1M398 380h1M399 435h1M401 412h1M401 448h1M405 465h1M421 355h1M421 388h1M422 392h1M424 438h1M435 363h1M435 367h1M438 372h1M440 369h1M454 364h1M457 424h1M460 468h1M462 420h1M483 332h1M486 350h1M494 335h1M512 399h1M513 452h1M520 305h1M530 430h1M530 450h1M531 438h1M534 453h1M539 361h1M539 365h1M539 366h1M541 371h1M543 456h1M558 363h1M560 362h1M561 363h1M562 438h1M563 381h1M573 450h1M584 394h1M585 366h1M587 381h1M588 335h1M591 349h1M596 377h1M597 340h1M597 376h1M610 424h1M612 359h1M619 359h1M628 361h1M634 400h1M634 435h1M635 357h1M642 383h1M644 388h1M655 391h1M656 429h1M662 410h1M662 425h1M662 444h1M664 370h1M664 373h1M676 352h1M683 430h1M691 384h1M691 393h1M699 399h1M705 399h1M705 403h1M720 389h1M727 387h1M750 388h1M754 400h1M757 434h1M783 410h1M783 427h1M789 407h1M789 431h1M802 384h1M803 341h1M814 364h1M839 410h1M840 390h1M847 415h1M848 369h1M850 362h1M853 380h1M857 343h1M868 322h1"/><path stroke="#2000ff" d="M51 305h1M53 293h1M54 450h1M68 479h1M72 315h1M78 307h1M93 376h1M94 409h1M101 415h1M101 438h1M102 403h1M102 410h1M102 422h1M102 427h1M103 392h1M103 397h1M103 400h1M103 403h1M103 406h1M103 413h1M104 385h1M104 396h1M106 427h1M106 432h1M107 425h1M107 426h1M107 444h1M107 446h1M113 411h1M117 410h1M123 394h1M126 385h1M126 399h1M127 425h1M127 426h1M127 430h1M127 431h1M128 420h1M128 421h1M134 396h1M136 373h1M142 452h1M143 437h1M150 369h1M157 358h1M160 374h1M162 384h1M162 386h1M164 462h1M165 473h1M166 379h1M166 381h1M167 361h1M167 365h1M167 366h1M168 383h1M169 375h1M169 385h1M169 393h1M175 462h1M180 380h1M193 364h1M231 357h1M234 341h1M238 462h1M242 433h1M246 380h1M261 440h1M264 408h1M264 452h1M265 407h1M277 296h1M283 326h1M284 357h1M285 368h1M290 359h1M293 367h1M294 419h1M294 425h1M294 430h1M294 432h1M294 443h1M302 358h1M302 359h1M314 344h1M326 360h1M326 438h1M328 364h1M329 368h1M330 368h1M331 370h1M341 450h1M346 414h1M347 424h1M354 340h1M363 374h1M364 463h1M367 434h1M368 372h1M373 419h1M375 349h1M384 361h1M399 362h1M399 442h1M401 364h1M413 408h1M420 452h1M424 464h1M432 399h1M435 364h1M435 371h1M435 375h1M436 359h1M436 369h1M437 372h1M438 381h1M439 379h1M439 383h1M440 370h1M441 385h1M445 362h1M457 402h1M468 378h1M469 448h1M478 322h1M502 316h1M504 321h1M522 392h1M522 396h1M523 381h1M531 445h1M535 380h1M537 360h1M540 367h1M541 375h1M541 379h1M541 382h1M545 355h1M550 367h1M551 438h1M551 448h1M552 458h1M554 401h1M559 363h1M559 366h1M559 371h1M560 363h1M564 377h1M583 383h1M584 401h1M584 418h1M592 367h1M623 287h1M626 320h1M635 468h1M641 369h1M641 474h1M645 397h1M646 378h1M655 398h1M662 433h1M662 447h1M662 450h1M665 374h1M667 367h1M667 369h1M667 371h1M670 375h1M673 415h1M683 427h1M686 312h1M690 438h1M690 475h1M694 330h1M695 348h1M704 417h1M704 422h1M705 396h1M705 398h1M705 408h1M706 417h1M707 404h1M708 385h1M708 386h1M712 359h1M730 396h1M736 389h1M741 357h1M746 390h1M755 348h1M755 398h1M757 440h1M760 440h1M766 342h1M770 392h1M778 389h1M780 449h1M782 411h1M785 367h1M788 463h1M809 379h1M809 390h1M809 407h1M809 422h1M810 391h1M822 382h1M846 356h1M849 363h1M852 382h1M858 349h1M858 355h1M858 430h1M858 444h1M859 424h1M860 384h1M861 436h1M862 445h1M868 319h1"/><path stroke="#1400ff" d="M54 406h1M54 422h1M57 375h1M67 377h1M78 317h1M84 335h1M97 351h1M101 392h1M101 426h1M101 428h1M101 431h1M101 451h1M101 452h1M101 466h1M102 391h1M102 394h1M102 404h1M102 419h1M102 445h1M103 399h1M103 418h1M103 428h1M103 429h1M104 381h1M104 405h1M104 406h1M104 410h1M104 418h1M104 422h1M104 425h1M104 430h1M104 434h1M104 438h1M104 452h1M105 410h1M105 425h1M105 434h1M105 437h1M106 417h1M106 425h1M106 445h1M106 446h1M116 383h1M118 455h1M123 384h1M125 457h1M126 381h1M126 383h1M126 391h1M126 402h1M128 422h1M129 406h1M139 363h1M140 373h1M147 384h1M147 402h1M150 378h1M156 360h1M157 363h1M166 378h1M166 394h1M166 397h1M167 360h1M167 373h1M167 377h1M167 378h1M168 391h1M168 392h1M169 388h1M169 394h1M169 403h1M169 410h1M174 417h1M175 456h1M180 394h1M191 369h1M191 371h1M192 375h1M192 381h1M197 364h1M203 417h1M216 363h1M220 373h1M227 424h1M230 366h1M241 420h1M244 373h1M246 394h1M252 434h1M253 380h1M257 343h1M260 359h1M260 367h1M261 379h1M261 380h1M264 430h1M271 319h1M272 283h1M273 299h1M276 319h1M284 371h1M285 380h1M285 384h1M286 374h1M286 392h1M286 396h1M286 398h1M286 400h1M288 364h1M290 368h1M293 364h1M293 372h1M294 441h1M294 449h1M302 362h1M311 318h1M323 368h1M327 439h1M328 370h1M328 371h1M329 363h1M330 371h1M330 374h1M330 379h1M330 384h1M332 373h1M332 375h1M332 376h1M332 381h1M332 385h1M347 441h1M348 405h1M357 469h1M359 376h1M362 458h1M364 448h1M371 456h1M372 406h1M373 366h1M378 360h1M380 364h1M380 370h1M380 371h1M380 372h1M381 368h1M387 371h1M388 358h1M393 371h1M404 448h1M405 385h1M405 393h1M406 372h1M407 374h1M414 392h1M417 376h1M417 378h1M424 397h1M425 365h1M428 321h1M432 365h1M435 387h1M437 364h1M438 377h1M439 389h1M441 380h1M441 384h1M441 386h1M447 370h1M451 435h1M456 459h1M460 374h1M463 403h1M471 453h1M479 388h1M491 322h1M493 363h1M496 369h1M515 348h1M522 400h1M523 398h1M523 448h1M525 407h1M526 419h1M531 454h1M536 364h1M536 365h1M537 363h1M537 371h1M539 370h1M539 376h1M540 360h1M540 368h1M540 372h1M541 372h1M541 373h1M541 384h1M542 469h1M547 467h1M550 387h1M558 364h1M558 373h1M559 372h1M559 374h1M560 366h1M560 372h1M560 376h1M561 372h1M561 373h1M562 452h1M563 401h1M570 406h1M572 412h1M573 455h1M578 474h1M590 325h1M595 326h1M598 386h1M598 387h1M607 375h1M610 389h1M614 384h1M624 316h1M640 463h1M640 470h1M643 395h1M644 387h1M644 398h1M645 394h1M645 403h1M646 381h1M646 384h1M651 360h1M651 363h1M661 362h1M664 376h1M665 375h1M665 376h1M666 377h1M666 380h1M666 382h1M666 386h1M666 387h1M667 365h1M667 373h1M668 379h1M703 404h1M703 411h1M704 407h1M705 401h1M705 407h1M705 417h1M705 428h1M706 421h1M706 422h1M707 406h1M707 412h1M707 414h1M708 380h1M708 388h1M708 395h1M708 401h1M711 361h1M712 367h1M713 357h1M713 362h1M714 364h1M724 456h1M727 362h1M730 375h1M730 382h1M735 377h1M741 427h1M742 441h1M743 361h1M743 411h1M746 355h1M748 359h1M756 356h1M756 405h1M759 426h1M760 458h1M764 400h1M780 391h1M780 444h1M789 366h1M789 459h1M801 335h1M802 396h1M810 461h1M821 396h1M838 364h1M844 352h1M844 381h1M847 418h1M850 372h1M853 360h1M854 346h1M862 393h1M868 324h1"/><path stroke="#0700ff" d="M54 470h1M56 341h1M59 346h1M63 325h1M70 320h1M75 399h1M88 370h1M90 341h1M95 370h1M101 406h1M101 445h1M101 448h1M101 460h1M101 468h1M102 411h1M102 421h1M102 428h1M102 432h1M102 434h1M102 440h1M102 448h1M102 452h1M102 467h1M103 410h1M103 421h1M103 422h1M103 430h1M104 382h1M104 390h1M104 398h1M104 409h1M104 415h1M104 423h1M104 426h1M104 440h1M104 458h1M104 464h1M104 465h1M105 438h1M105 443h1M105 444h1M105 463h1M106 424h1M106 430h1M106 439h1M106 440h1M106 444h1M106 449h1M106 451h1M106 461h1M107 440h1M107 441h1M107 442h1M107 445h1M107 447h1M107 451h1M107 460h1M107 466h1M107 469h1M107 472h1M109 360h1M115 423h1M124 446h1M126 380h1M126 395h1M126 397h1M126 400h1M126 410h1M126 411h1M126 420h1M127 433h1M127 436h1M127 443h1M128 429h1M129 412h1M135 406h1M137 423h1M139 373h1M141 446h1M143 400h1M144 402h1M158 363h1M160 373h1M164 392h1M166 387h1M166 388h1M166 405h1M166 411h1M166 413h1M166 427h1M166 431h1M166 435h1M167 383h1M167 409h1M168 387h1M168 388h1M168 400h1M168 405h1M168 414h1M169 387h1M169 405h1M169 416h1M169 418h1M169 419h1M174 472h1M191 374h1M192 384h1M192 385h1M212 388h1M212 421h1M217 340h1M220 374h1M226 370h1M229 372h1M238 476h1M244 385h1M244 445h1M245 419h1M246 441h1M260 372h1M277 303h1M278 309h1M284 380h1M284 383h1M284 385h1M284 386h1M284 395h1M284 397h1M284 406h1M286 390h1M286 409h1M286 424h1M287 363h1M287 366h1M289 361h1M289 365h1M291 357h1M291 363h1M292 357h1M293 377h1M293 379h1M294 436h1M294 445h1M294 457h1M294 461h1M294 466h1M302 360h1M303 358h1M303 359h1M303 360h1M306 357h1M317 377h1M325 402h1M328 366h1M329 366h1M330 382h1M331 366h1M331 371h1M331 378h1M331 380h1M332 371h1M348 428h1M348 434h1M350 340h1M353 339h1M360 368h1M360 380h1M364 467h1M365 408h1M365 419h1M367 459h1M368 391h1M369 398h1M369 422h1M371 384h1M372 415h1M374 413h1M374 422h1M381 365h1M384 364h1M384 472h1M386 407h1M387 373h1M388 372h1M394 373h1M405 478h1M407 378h1M414 441h1M418 471h1M426 393h1M428 326h1M435 384h1M435 394h1M435 398h1M436 367h1M436 372h1M437 366h1M437 381h1M437 388h1M438 380h1M438 391h1M438 392h1M440 376h1M440 389h1M441 389h1M441 395h1M441 396h1M450 446h1M454 395h1M454 471h1M458 392h1M469 421h1M471 416h1M489 315h1M505 300h1M513 476h1M515 359h1M520 319h1M522 476h1M525 432h1M528 333h1M530 359h1M532 477h1M535 386h1M535 393h1M535 400h1M535 402h1M535 404h1M535 405h1M535 415h1M536 358h1M536 368h1M536 371h1M536 372h1M536 374h1M537 370h1M537 380h1M538 362h1M539 372h1M540 364h1M540 366h1M540 374h1M540 380h1M541 387h1M543 457h1M543 468h1M550 464h1M551 368h1M558 365h1M558 377h1M558 378h1M559 376h1M560 377h1M561 378h1M562 475h1M573 465h1M579 383h1M597 346h1M601 356h1M607 416h1M608 462h1M610 457h1M611 474h1M626 328h1M638 381h1M639 411h1M641 385h1M642 381h1M642 397h1M643 402h1M643 407h1M644 396h1M644 402h1M645 399h1M645 407h1M646 389h1M646 398h1M650 358h1M651 367h1M651 369h1M659 397h1M660 361h1M664 371h1M664 386h1M664 399h1M665 383h1M665 387h1M665 391h1M665 393h1M666 378h1M666 392h1M666 395h1M667 368h1M667 393h1M668 381h1M668 389h1M672 437h1M673 413h1M678 446h1M690 372h1M701 395h1M702 404h1M703 408h1M703 417h1M703 426h1M705 412h1M705 415h1M705 416h1M705 424h1M706 410h1M706 414h1M706 423h1M707 398h1M707 400h1M707 427h1M708 384h1M708 390h1M708 393h1M708 415h1M708 418h1M709 358h1M709 359h1M711 358h1M712 365h1M712 368h1M713 365h1M713 376h1M713 382h1M714 370h1M714 371h1M714 373h1M742 367h1M745 389h1M755 383h1M765 360h1M781 465h1M782 447h1M784 385h1M784 447h1M791 423h1M792 387h1M792 388h1M795 357h1M809 359h1M811 384h1M812 389h1M814 377h1M819 370h1M822 398h1M836 343h1M836 347h1M840 425h1M841 373h1M850 422h1M856 367h1M859 469h1M863 363h1"/><path stroke="#0009ff" d="M59 347h1M68 482h1M71 328h1M75 471h1M80 378h1M92 393h1M96 379h1M96 399h1M101 419h1M101 422h1M101 429h1M101 446h1M101 454h1M101 458h1M101 464h1M101 469h1M102 395h1M102 430h1M102 454h1M102 462h1M103 445h1M103 446h1M103 456h1M103 457h1M103 467h1M104 402h1M104 414h1M104 424h1M104 427h1M104 436h1M104 444h1M104 449h1M104 450h1M104 454h1M104 467h1M104 472h1M104 476h1M105 421h1M105 441h1M105 457h1M105 462h1M106 463h1M107 476h1M108 358h1M109 357h1M111 405h1M122 475h1M123 444h1M124 460h1M126 388h1M126 404h1M126 435h1M127 438h1M127 441h1M127 447h1M128 444h1M129 418h1M131 414h1M144 412h1M144 470h1M148 379h1M153 364h1M156 358h1M156 361h1M156 365h1M156 366h1M156 367h1M156 374h1M156 376h1M157 364h1M157 371h1M157 378h1M157 379h1M158 367h1M158 373h1M160 389h1M163 481h1M164 481h1M166 403h1M166 425h1M166 443h1M166 447h1M167 388h1M167 393h1M167 400h1M167 402h1M168 376h1M168 434h1M169 384h1M169 402h1M181 388h1M186 427h1M186 464h1M187 462h1M191 367h1M192 374h1M193 382h1M200 390h1M203 400h1M203 427h1M203 432h1M212 438h1M224 385h1M229 382h1M231 348h1M232 349h1M254 360h1M284 382h1M284 411h1M284 428h1M285 401h1M285 412h1M285 414h1M286 378h1M286 401h1M286 402h1M286 407h1M286 427h1M287 357h1M288 376h1M288 385h1M288 390h1M288 400h1M288 406h1M288 410h1M288 414h1M290 362h1M290 364h1M290 380h1M290 384h1M291 358h1M291 361h1M292 364h1M293 365h1M293 380h1M293 394h1M294 433h1M294 447h1M294 459h1M294 468h1M294 472h1M294 476h1M298 362h1M299 317h1M299 368h1M301 347h1M302 365h1M303 366h1M304 357h1M304 360h1M304 362h1M305 360h1M305 364h1M306 362h1M306 363h1M306 365h1M311 328h1M314 328h1M318 416h1M326 398h1M328 368h1M328 393h1M328 399h1M328 401h1M329 380h1M330 383h1M330 389h1M331 390h1M332 382h1M332 389h1M333 415h1M334 448h1M345 434h1M347 463h1M353 347h1M358 456h1M359 395h1M360 412h1M362 479h1M374 381h1M374 418h1M379 360h1M380 368h1M380 383h1M381 363h1M384 468h1M385 414h1M388 376h1M395 406h1M399 405h1M401 379h1M406 390h1M407 372h1M407 377h1M407 379h1M417 392h1M419 449h1M423 401h1M435 383h1M435 388h1M435 390h1M435 401h1M436 366h1M436 388h1M437 378h1M437 384h1M438 389h1M439 384h1M441 383h1M441 391h1M441 398h1M441 400h1M445 404h1M449 387h1M457 472h1M458 420h1M463 349h1M465 402h1M467 376h1M468 394h1M469 397h1M472 402h1M474 409h1M486 328h1M486 358h1M489 324h1M514 426h1M517 368h1M522 437h1M524 361h1M533 440h1M533 479h1M535 413h1M535 416h1M535 417h1M536 378h1M537 367h1M537 379h1M537 384h1M537 390h1M538 359h1M539 368h1M539 384h1M539 392h1M539 394h1M539 397h1M539 398h1M539 401h1M540 373h1M540 377h1M540 385h1M540 387h1M541 406h1M543 410h1M554 420h1M557 370h1M558 369h1M558 380h1M559 370h1M559 385h1M560 375h1M561 385h1M566 360h1M570 456h1M574 477h1M577 422h1M585 390h1M587 355h1M592 349h1M593 359h1M613 377h1M615 406h1M641 405h1M642 391h1M642 402h1M642 403h1M643 411h1M644 394h1M644 401h1M644 403h1M644 407h1M645 411h1M645 413h1M646 391h1M646 399h1M647 364h1M648 360h1M648 362h1M649 358h1M651 362h1M657 349h1M658 329h1M664 377h1M664 389h1M664 397h1M664 403h1M666 405h1M668 376h1M668 403h1M683 459h1M683 464h1M691 435h1M692 459h1M703 400h1M703 403h1M703 423h1M703 433h1M704 406h1M704 420h1M705 429h1M705 432h1M705 436h1M706 409h1M706 411h1M706 418h1M706 432h1M706 436h1M706 437h1M706 439h1M707 417h1M707 418h1M707 424h1M707 426h1M707 431h1M708 425h1M708 426h1M709 357h1M709 362h1M710 360h1M710 361h1M710 365h1M711 371h1M711 372h1M711 373h1M712 370h1M712 373h1M712 375h1M713 366h1M713 381h1M714 376h1M714 380h1M719 434h1M720 411h1M723 469h1M728 414h1M731 376h1M740 382h1M756 418h1M763 406h1M777 363h1M781 364h1M784 405h1M789 389h1M790 422h1M808 396h1M813 443h1M814 344h1M814 381h1M820 439h1M826 341h1M838 386h1M838 388h1M841 441h1M843 377h1M845 387h1M847 430h1M850 427h1M853 363h1M855 363h1M860 359h1M860 368h1M863 368h1M864 357h1M864 361h1"/><path stroke="#0020ff" d="M52 373h1M57 392h1M67 402h1M72 334h1M76 339h1M78 359h1M87 341h1M92 430h1M96 403h1M101 459h1M102 435h1M102 437h1M102 471h1M102 472h1M102 474h1M102 475h1M103 436h1M103 462h1M103 464h1M103 471h1M103 472h1M104 446h1M104 466h1M104 471h1M104 474h1M105 453h1M105 454h1M105 474h1M105 476h1M105 477h1M106 470h1M107 456h1M107 477h1M108 360h1M109 362h1M109 371h1M110 358h1M110 361h1M110 368h1M117 398h1M121 329h1M121 353h1M122 460h1M122 472h1M126 407h1M127 434h1M127 437h1M127 448h1M129 408h1M129 423h1M130 425h1M135 422h1M140 419h1M150 470h1M153 358h1M153 362h1M156 382h1M158 371h1M158 376h1M158 378h1M159 365h1M160 388h1M165 444h1M166 430h1M166 441h1M166 451h1M166 463h1M167 404h1M167 405h1M167 406h1M167 412h1M167 414h1M168 419h1M168 430h1M168 436h1M169 408h1M169 411h1M169 412h1M169 422h1M169 423h1M169 426h1M169 433h1M169 436h1M169 450h1M177 374h1M177 431h1M179 364h1M180 391h1M184 408h1M187 470h1M192 386h1M193 376h1M193 381h1M193 385h1M200 396h1M210 361h1M215 388h1M220 384h1M226 352h1M241 468h1M243 457h1M256 369h1M284 404h1M284 418h1M284 421h1M284 424h1M284 425h1M284 429h1M284 431h1M285 393h1M285 410h1M285 431h1M286 403h1M286 413h1M286 417h1M286 422h1M286 432h1M286 436h1M286 439h1M287 358h1M287 364h1M287 374h1M288 370h1M288 379h1M288 387h1M288 394h1M288 412h1M288 418h1M288 423h1M288 428h1M288 431h1M288 433h1M288 437h1M288 443h1M288 449h1M289 368h1M289 371h1M289 374h1M290 360h1M290 378h1M290 388h1M290 406h1M292 362h1M292 370h1M292 372h1M293 392h1M294 440h1M302 380h1M303 368h1M304 361h1M305 358h1M305 368h1M305 369h1M306 360h1M306 366h1M306 370h1M306 373h1M308 367h1M308 374h1M317 405h1M318 413h1M321 335h1M325 409h1M325 422h1M326 384h1M328 372h1M328 378h1M328 410h1M328 416h1M328 418h1M328 432h1M329 387h1M330 392h1M330 395h1M330 404h1M330 409h1M337 452h1M345 448h1M350 345h1M358 452h1M361 473h1M370 438h1M371 425h1M378 381h1M379 378h1M380 382h1M381 370h1M393 411h1M396 369h1M399 406h1M403 478h1M407 387h1M415 403h1M423 385h1M425 399h1M427 400h1M432 368h1M432 397h1M435 424h1M435 432h1M435 437h1M435 438h1M435 443h1M436 370h1M436 378h1M436 395h1M436 398h1M437 379h1M437 387h1M437 394h1M437 397h1M437 398h1M439 395h1M439 401h1M439 402h1M440 382h1M440 391h1M440 392h1M440 395h1M440 396h1M440 400h1M441 397h1M441 409h1M450 449h1M457 410h1M472 408h1M481 366h1M482 342h1M490 325h1M494 357h1M496 387h1M498 379h1M511 446h1M511 482h1M513 418h1M524 463h1M525 358h1M529 356h1M531 439h1M531 478h1M535 395h1M535 401h1M535 412h1M536 376h1M536 387h1M536 394h1M537 372h1M537 376h1M537 398h1M537 399h1M538 370h1M538 378h1M538 386h1M539 379h1M540 382h1M540 393h1M541 402h1M541 417h1M545 398h1M545 412h1M545 465h1M553 428h1M557 444h1M558 379h1M558 381h1M558 385h1M558 386h1M559 383h1M560 385h1M560 390h1M561 384h1M566 366h1M572 448h1M594 324h1M602 401h1M609 390h1M611 422h1M617 419h1M618 431h1M642 398h1M642 404h1M642 406h1M642 407h1M643 419h1M644 409h1M644 412h1M646 403h1M649 369h1M650 368h1M651 366h1M651 368h1M651 376h1M653 357h1M664 383h1M665 400h1M665 402h1M665 408h1M665 412h1M665 424h1M666 401h1M666 419h1M667 386h1M667 398h1M667 410h1M668 409h1M668 418h1M670 390h1M670 393h1M673 472h1M677 366h1M678 416h1M678 425h1M679 466h1M681 464h1M689 390h1M694 352h1M696 373h1M703 428h1M703 439h1M704 421h1M704 445h1M704 448h1M705 437h1M705 447h1M705 448h1M706 440h1M706 442h1M706 446h1M707 438h1M707 445h1M708 396h1M708 419h1M708 431h1M708 435h1M708 441h1M708 442h1M709 363h1M709 366h1M709 369h1M709 370h1M710 357h1M710 359h1M711 377h1M713 374h1M714 384h1M716 358h1M717 361h1M718 358h1M725 376h1M733 444h1M744 381h1M746 367h1M749 435h1M750 414h1M755 363h1M761 363h1M763 410h1M767 339h1M768 432h1M779 381h1M779 411h1M781 391h1M783 405h1M786 442h1M789 409h1M791 432h1M794 370h1M813 445h1M815 431h1M825 365h1M828 340h1M829 347h1M841 403h1M841 450h1M854 362h1M855 411h1M856 479h1M861 404h1M864 358h1M864 360h1M864 363h1"/><path stroke="#0036ff" d="M57 370h1M58 360h1M59 341h1M75 435h1M84 372h1M87 331h1M94 435h1M102 436h1M103 435h1M103 463h1M103 474h1M103 477h1M104 463h1M104 479h1M105 465h1M105 478h1M106 441h1M106 465h1M106 471h1M107 461h1M107 479h1M108 362h1M110 362h1M110 371h1M110 374h1M110 377h1M112 400h1M115 432h1M119 481h1M121 338h1M126 431h1M126 452h1M126 455h1M127 452h1M127 465h1M128 445h1M128 451h1M129 424h1M129 427h1M136 446h1M136 480h1M142 441h1M149 453h1M152 442h1M153 372h1M153 379h1M153 380h1M156 372h1M156 381h1M157 377h1M157 383h1M157 386h1M158 375h1M158 383h1M159 372h1M159 374h1M159 378h1M159 379h1M161 437h1M166 448h1M166 469h1M166 471h1M167 387h1M167 417h1M167 425h1M167 426h1M167 438h1M167 449h1M167 450h1M167 451h1M168 413h1M168 444h1M168 450h1M168 451h1M169 427h1M169 456h1M180 373h1M188 362h1M188 364h1M189 361h1M191 391h1M192 390h1M209 359h1M210 365h1M210 368h1M223 361h1M224 393h1M232 351h1M233 386h1M235 361h1M257 399h1M262 363h1M265 412h1M277 317h1M284 390h1M284 436h1M284 455h1M285 386h1M285 390h1M285 400h1M285 418h1M285 425h1M285 441h1M285 445h1M286 456h1M287 389h1M287 415h1M287 428h1M287 431h1M288 380h1M288 386h1M288 405h1M288 407h1M288 429h1M288 434h1M288 445h1M288 451h1M288 465h1M289 377h1M289 385h1M289 393h1M290 374h1M290 390h1M290 394h1M290 399h1M290 400h1M290 401h1M290 436h1M290 439h1M290 457h1M291 382h1M292 369h1M292 378h1M292 380h1M292 384h1M293 383h1M293 405h1M302 363h1M302 383h1M303 369h1M303 370h1M303 373h1M303 375h1M304 368h1M305 370h1M306 379h1M307 371h1M308 357h1M308 364h1M308 383h1M308 384h1M308 385h1M308 392h1M328 390h1M328 406h1M328 408h1M328 422h1M328 427h1M328 449h1M329 391h1M329 393h1M329 401h1M329 404h1M330 398h1M330 401h1M330 403h1M330 408h1M330 416h1M331 396h1M331 398h1M332 392h1M332 398h1M332 403h1M332 410h1M332 413h1M332 414h1M334 466h1M341 478h1M348 476h1M355 412h1M357 452h1M359 443h1M372 447h1M381 369h1M383 357h1M383 359h1M391 402h1M393 430h1M394 451h1M402 445h1M403 425h1M404 394h1M404 442h1M407 383h1M407 388h1M407 389h1M407 393h1M413 456h1M424 453h1M429 363h1M432 431h1M435 403h1M435 417h1M435 420h1M435 429h1M435 430h1M435 435h1M437 374h1M437 392h1M437 405h1M438 396h1M438 399h1M439 411h1M440 379h1M440 390h1M440 399h1M440 402h1M458 480h1M461 481h1M463 378h1M489 349h1M494 395h1M504 302h1M513 441h1M520 347h1M535 389h1M535 447h1M536 375h1M536 380h1M536 383h1M536 390h1M536 396h1M536 397h1M536 400h1M536 411h1M536 416h1M537 413h1M538 376h1M538 379h1M538 380h1M538 388h1M538 391h1M538 398h1M539 399h1M539 405h1M539 407h1M539 410h1M540 376h1M540 392h1M541 413h1M541 421h1M548 437h1M551 434h1M553 480h1M556 380h1M558 376h1M559 381h1M559 386h1M559 388h1M560 378h1M560 394h1M561 393h1M563 423h1M567 407h1M573 445h1M602 366h1M602 369h1M607 425h1M617 425h1M636 399h1M639 439h1M642 410h1M643 414h1M644 408h1M644 415h1M644 418h1M645 401h1M646 404h1M646 411h1M647 365h1M647 369h1M647 376h1M648 370h1M648 374h1M650 371h1M650 373h1M650 378h1M651 373h1M651 377h1M651 379h1M651 380h1M651 381h1M651 383h1M655 396h1M656 444h1M663 415h1M664 398h1M664 418h1M664 420h1M664 424h1M665 416h1M666 413h1M666 416h1M666 426h1M666 429h1M666 430h1M666 431h1M667 380h1M668 371h1M668 405h1M668 417h1M668 422h1M676 383h1M678 429h1M691 459h1M694 361h1M698 381h1M703 414h1M703 437h1M703 441h1M703 445h1M703 451h1M703 454h1M704 427h1M704 432h1M704 444h1M705 433h1M705 439h1M705 446h1M705 454h1M705 456h1M706 434h1M707 439h1M707 451h1M708 420h1M708 424h1M708 439h1M708 446h1M710 367h1M712 376h1M712 379h1M713 386h1M716 362h1M716 370h1M717 358h1M717 365h1M718 361h1M721 475h1M722 449h1M722 454h1M723 434h1M731 413h1M732 424h1M739 449h1M743 406h1M748 387h1M754 444h1M756 447h1M764 413h1M765 411h1M765 420h1M767 371h1M770 418h1M772 362h1M775 431h1M785 411h1M788 399h1M789 434h1M796 368h1M797 403h1M811 414h1M812 425h1M812 439h1M814 355h1M817 375h1M823 370h1M841 389h1M842 402h1M848 447h1M852 415h1M858 405h1M858 421h1M863 361h1M863 384h1M864 369h1M864 371h1M864 372h1M864 373h1M867 338h1"/><path stroke="#004dff" d="M54 393h1M54 403h1M65 357h1M71 333h1M103 479h1M104 453h1M106 459h1M106 472h1M106 480h1M106 481h1M108 374h1M111 448h1M115 436h1M125 434h1M126 427h1M126 430h1M126 438h1M126 456h1M126 461h1M126 466h1M127 467h1M128 447h1M128 452h1M128 455h1M128 467h1M128 472h1M129 420h1M129 425h1M130 370h1M135 447h1M138 457h1M149 455h1M156 389h1M157 388h1M158 364h1M158 380h1M159 384h1M160 397h1M160 398h1M161 444h1M166 460h1M166 475h1M167 410h1M167 433h1M167 454h1M167 460h1M168 410h1M168 440h1M168 443h1M168 452h1M168 453h1M168 456h1M168 458h1M168 460h1M169 442h1M169 449h1M169 459h1M169 463h1M169 466h1M169 468h1M174 455h1M176 435h1M178 377h1M188 366h1M191 377h1M191 390h1M193 387h1M193 389h1M194 358h1M195 358h1M198 451h1M199 438h1M202 402h1M207 379h1M209 362h1M209 366h1M210 357h1M210 370h1M210 371h1M212 452h1M214 395h1M217 403h1M221 385h1M228 401h1M234 393h1M238 405h1M238 427h1M238 438h1M238 446h1M241 477h1M260 442h1M263 407h1M270 311h1M277 337h1M284 419h1M284 423h1M284 437h1M284 452h1M284 454h1M284 459h1M284 469h1M285 395h1M285 413h1M285 415h1M285 428h1M285 442h1M285 448h1M286 448h1M286 451h1M286 458h1M286 471h1M287 390h1M287 404h1M287 422h1M287 429h1M287 450h1M287 453h1M287 455h1M288 409h1M288 463h1M288 464h1M288 475h1M289 381h1M289 394h1M289 400h1M289 407h1M289 416h1M289 427h1M289 434h1M289 446h1M289 462h1M289 465h1M290 365h1M290 389h1M290 408h1M290 415h1M290 432h1M290 434h1M290 442h1M290 449h1M290 461h1M290 463h1M290 466h1M290 469h1M291 380h1M291 383h1M291 384h1M291 395h1M291 419h1M291 420h1M292 368h1M292 376h1M292 385h1M292 392h1M292 399h1M292 403h1M292 408h1M293 374h1M293 397h1M293 402h1M293 410h1M293 415h1M293 418h1M293 427h1M302 389h1M302 395h1M302 397h1M303 388h1M305 365h1M305 377h1M305 384h1M306 364h1M306 376h1M306 385h1M306 388h1M307 372h1M308 371h1M308 375h1M308 380h1M308 388h1M308 393h1M308 402h1M308 405h1M309 326h1M317 430h1M318 420h1M328 397h1M328 435h1M328 436h1M328 444h1M328 466h1M330 418h1M331 392h1M331 403h1M332 416h1M336 475h1M347 479h1M353 358h1M361 421h1M364 481h1M368 425h1M373 441h1M383 361h1M383 362h1M389 372h1M401 429h1M401 443h1M402 481h1M421 462h1M432 435h1M432 469h1M434 469h1M435 441h1M435 449h1M435 457h1M435 459h1M435 469h1M436 380h1M436 387h1M436 394h1M436 404h1M436 408h1M437 403h1M437 412h1M438 393h1M438 406h1M438 409h1M438 416h1M439 405h1M439 409h1M440 412h1M441 424h1M442 426h1M446 430h1M449 435h1M461 469h1M464 379h1M464 395h1M468 453h1M473 406h1M479 389h1M480 427h1M490 333h1M495 333h1M495 390h1M502 359h1M519 354h1M522 433h1M523 451h1M526 398h1M529 373h1M534 440h1M535 434h1M535 459h1M535 467h1M536 389h1M536 417h1M536 418h1M537 404h1M537 409h1M537 414h1M537 422h1M538 385h1M538 395h1M538 397h1M539 389h1M539 416h1M539 417h1M539 422h1M540 391h1M540 394h1M540 395h1M540 402h1M540 406h1M540 412h1M555 408h1M556 438h1M557 382h1M558 396h1M559 394h1M560 388h1M573 438h1M591 355h1M595 355h1M599 407h1M601 411h1M604 377h1M609 441h1M617 414h1M627 355h1M642 417h1M642 418h1M642 419h1M643 423h1M644 406h1M644 414h1M647 360h1M647 374h1M648 359h1M648 372h1M649 362h1M649 367h1M649 372h1M649 374h1M650 365h1M650 381h1M650 384h1M651 386h1M651 393h1M664 405h1M664 411h1M664 415h1M664 416h1M664 427h1M664 429h1M664 433h1M665 431h1M665 433h1M665 438h1M665 440h1M666 412h1M667 413h1M667 417h1M667 432h1M668 421h1M668 425h1M668 426h1M668 429h1M670 395h1M680 418h1M680 465h1M685 397h1M686 389h1M692 430h1M692 476h1M693 420h1M703 422h1M703 460h1M703 461h1M704 435h1M704 440h1M704 449h1M704 469h1M705 458h1M706 447h1M706 449h1M706 452h1M706 453h1M706 455h1M707 444h1M708 461h1M708 465h1M709 376h1M709 377h1M709 378h1M709 381h1M710 376h1M711 370h1M711 380h1M712 377h1M712 386h1M713 373h1M713 389h1M713 393h1M714 388h1M715 367h1M716 361h1M716 363h1M717 367h1M717 370h1M718 357h1M718 359h1M718 364h1M718 368h1M719 451h1M726 418h1M731 402h1M733 408h1M736 397h1M736 425h1M737 442h1M741 408h1M741 409h1M741 411h1M744 423h1M749 430h1M750 448h1M761 422h1M763 419h1M766 415h1M774 351h1M780 385h1M784 424h1M796 408h1M806 395h1M808 362h1M814 413h1M827 361h1M839 402h1M841 408h1M848 412h1M851 365h1M853 387h1M855 448h1M856 448h1M863 386h1M864 379h1M864 381h1M865 364h1"/><path stroke="#0063ff" d="M54 398h1M58 367h1M71 356h1M80 437h1M94 458h1M101 482h1M103 481h1M103 482h1M104 480h1M105 480h1M108 364h1M108 365h1M108 382h1M110 364h1M110 379h1M114 429h1M117 454h1M121 399h1M126 434h1M126 446h1M126 458h1M127 466h1M127 477h1M128 463h1M128 465h1M128 469h1M128 471h1M128 474h1M128 476h1M129 430h1M129 435h1M131 436h1M132 482h1M133 457h1M137 474h1M139 394h1M153 382h1M153 383h1M153 385h1M156 386h1M156 392h1M158 389h1M159 380h1M159 391h1M160 394h1M163 477h1M166 470h1M167 440h1M167 444h1M167 471h1M167 473h1M168 427h1M168 446h1M168 470h1M168 474h1M168 476h1M169 458h1M169 467h1M169 471h1M169 472h1M173 446h1M176 461h1M177 463h1M189 374h1M190 358h1M190 363h1M191 394h1M192 395h1M193 386h1M194 360h1M194 361h1M194 366h1M195 357h1M195 366h1M198 406h1M198 467h1M209 363h1M211 446h1M221 400h1M223 358h1M230 398h1M235 359h1M236 355h1M238 463h1M251 374h1M251 377h1M257 367h1M257 398h1M259 412h1M263 455h1M264 417h1M268 325h1M284 449h1M284 460h1M284 465h1M284 473h1M284 474h1M284 475h1M285 411h1M285 432h1M285 456h1M286 441h1M286 445h1M286 449h1M286 464h1M287 365h1M287 414h1M287 416h1M287 420h1M287 427h1M287 457h1M287 462h1M287 463h1M287 468h1M287 469h1M287 475h1M287 478h1M288 436h1M288 450h1M288 455h1M288 461h1M289 378h1M289 384h1M289 402h1M289 404h1M289 421h1M289 424h1M289 432h1M289 436h1M289 448h1M289 452h1M289 453h1M289 454h1M289 455h1M289 456h1M289 463h1M289 471h1M290 393h1M290 396h1M290 441h1M290 456h1M290 470h1M290 473h1M291 370h1M291 381h1M291 392h1M291 401h1M291 412h1M291 415h1M291 418h1M291 425h1M291 431h1M291 434h1M291 444h1M292 374h1M292 379h1M292 424h1M293 419h1M293 429h1M293 439h1M294 480h1M302 387h1M302 398h1M303 377h1M303 378h1M303 391h1M304 363h1M304 377h1M304 379h1M304 380h1M304 382h1M304 385h1M305 392h1M306 372h1M306 380h1M306 390h1M306 396h1M306 398h1M306 402h1M306 403h1M307 370h1M308 390h1M308 399h1M308 404h1M308 410h1M316 388h1M326 441h1M327 456h1M328 423h1M328 433h1M328 440h1M328 472h1M329 389h1M329 406h1M329 411h1M329 422h1M330 381h1M330 402h1M330 413h1M330 415h1M330 420h1M330 421h1M331 407h1M331 412h1M331 416h1M332 425h1M346 480h1M353 363h1M358 481h1M363 445h1M372 456h1M381 380h1M381 384h1M381 386h1M381 390h1M381 393h1M381 395h1M383 364h1M383 369h1M383 372h1M386 431h1M389 387h1M399 427h1M400 452h1M400 471h1M406 444h1M407 390h1M407 398h1M407 399h1M410 361h1M411 357h1M411 359h1M416 419h1M428 374h1M435 423h1M435 427h1M435 458h1M435 476h1M436 401h1M436 407h1M436 410h1M436 413h1M438 411h1M439 420h1M440 414h1M441 412h1M441 425h1M449 407h1M453 449h1M464 453h1M469 458h1M477 385h1M494 398h1M495 418h1M496 364h1M497 355h1M499 371h1M518 336h1M528 344h1M535 445h1M535 461h1M535 463h1M535 466h1M535 473h1M535 479h1M536 413h1M536 426h1M536 429h1M536 430h1M537 406h1M537 410h1M537 417h1M537 433h1M538 400h1M539 423h1M539 427h1M539 438h1M539 445h1M540 410h1M541 424h1M541 442h1M543 439h1M546 475h1M549 457h1M549 460h1M551 444h1M551 461h1M553 451h1M556 441h1M560 399h1M561 392h1M565 410h1M569 438h1M572 468h1M575 448h1M575 471h1M587 395h1M600 420h1M602 373h1M603 407h1M604 415h1M608 453h1M609 466h1M621 353h1M629 394h1M632 337h1M634 439h1M642 425h1M643 429h1M643 430h1M643 433h1M645 419h1M645 423h1M645 425h1M645 429h1M645 432h1M646 417h1M646 421h1M646 423h1M647 379h1M647 384h1M649 377h1M649 379h1M650 376h1M651 391h1M651 397h1M661 413h1M664 435h1M665 426h1M665 429h1M665 443h1M665 447h1M667 390h1M667 436h1M668 440h1M668 442h1M668 443h1M681 482h1M685 462h1M685 479h1M686 438h1M691 429h1M694 402h1M701 394h1M703 474h1M704 442h1M704 463h1M704 467h1M704 471h1M704 473h1M705 461h1M705 472h1M706 457h1M706 458h1M706 464h1M706 477h1M707 447h1M707 449h1M707 459h1M707 472h1M708 430h1M708 444h1M708 462h1M708 464h1M708 471h1M708 476h1M709 372h1M710 372h1M710 375h1M711 386h1M712 390h1M713 383h1M713 394h1M714 390h1M714 391h1M715 365h1M716 368h1M717 364h1M717 375h1M718 365h1M718 370h1M720 458h1M744 437h1M750 398h1M764 393h1M767 403h1M771 453h1M774 443h1M778 450h1M780 450h1M789 470h1M790 414h1M790 456h1M804 409h1M810 425h1M811 448h1M832 366h1M841 415h1M843 401h1M851 423h1M851 429h1M861 455h1"/><path stroke="#007aff" d="M55 423h1M57 423h1M81 357h1M84 367h1M93 430h1M99 375h1M105 481h1M108 379h1M108 380h1M108 384h1M109 381h1M115 447h1M117 467h1M121 422h1M122 482h1M126 465h1M127 464h1M128 475h1M129 437h1M135 434h1M137 419h1M141 428h1M153 390h1M154 359h1M157 390h1M158 391h1M158 399h1M159 376h1M159 382h1M159 385h1M159 389h1M159 392h1M159 398h1M160 395h1M160 400h1M160 402h1M167 459h1M167 462h1M167 463h1M167 479h1M168 462h1M168 466h1M168 467h1M169 464h1M169 473h1M169 477h1M181 378h1M188 371h1M189 365h1M189 369h1M190 366h1M190 367h1M190 368h1M191 397h1M193 393h1M193 395h1M195 367h1M195 374h1M209 368h1M209 369h1M209 371h1M210 378h1M210 379h1M210 381h1M210 382h1M211 411h1M222 367h1M228 370h1M233 365h1M233 367h1M233 398h1M238 457h1M239 477h1M254 441h1M259 413h1M280 319h1M284 451h1M285 422h1M285 461h1M285 468h1M285 472h1M285 473h1M285 475h1M286 468h1M286 476h1M286 479h1M287 417h1M287 473h1M287 479h1M288 466h1M289 425h1M289 458h1M290 404h1M290 451h1M290 467h1M291 379h1M291 391h1M291 403h1M291 404h1M291 406h1M291 411h1M291 428h1M291 435h1M291 453h1M291 461h1M292 391h1M292 395h1M292 407h1M292 411h1M292 413h1M292 433h1M293 407h1M293 422h1M293 446h1M293 449h1M293 460h1M293 463h1M297 381h1M299 377h1M301 384h1M302 388h1M302 392h1M302 396h1M302 404h1M303 376h1M303 394h1M303 397h1M303 399h1M303 406h1M303 409h1M303 413h1M303 420h1M304 381h1M304 383h1M304 401h1M305 379h1M305 385h1M305 387h1M305 395h1M305 398h1M305 400h1M305 408h1M305 413h1M305 415h1M306 387h1M306 392h1M306 397h1M306 407h1M306 409h1M306 414h1M307 373h1M307 375h1M307 384h1M307 389h1M307 396h1M308 398h1M308 414h1M308 419h1M308 424h1M308 426h1M308 430h1M317 448h1M322 415h1M326 466h1M326 467h1M328 413h1M328 425h1M328 467h1M328 469h1M328 474h1M328 475h1M329 383h1M330 431h1M331 410h1M331 415h1M331 419h1M331 420h1M340 479h1M364 442h1M370 467h1M371 471h1M378 402h1M380 392h1M380 401h1M380 403h1M382 364h1M383 368h1M383 376h1M383 377h1M383 378h1M390 390h1M400 456h1M401 469h1M403 439h1M404 473h1M408 363h1M410 363h1M410 366h1M411 360h1M411 363h1M435 436h1M435 446h1M435 466h1M435 472h1M435 473h1M436 416h1M436 420h1M437 420h1M438 421h1M438 424h1M439 407h1M439 422h1M439 426h1M441 419h1M469 460h1M471 464h1M495 357h1M504 331h1M511 476h1M514 450h1M520 358h1M523 457h1M524 372h1M524 402h1M524 407h1M527 372h1M531 475h1M536 420h1M536 442h1M537 429h1M537 431h1M537 440h1M538 392h1M538 396h1M538 403h1M538 404h1M538 409h1M538 410h1M538 415h1M539 439h1M539 450h1M540 404h1M540 411h1M540 413h1M540 428h1M541 440h1M541 441h1M541 444h1M554 478h1M555 456h1M558 404h1M558 405h1M558 407h1M559 410h1M560 411h1M561 396h1M561 404h1M566 413h1M568 430h1M591 367h1M602 416h1M616 467h1M628 375h1M642 412h1M642 413h1M643 422h1M644 422h1M644 423h1M645 434h1M645 435h1M645 437h1M645 439h1M646 418h1M647 378h1M647 383h1M647 388h1M648 373h1M648 385h1M649 373h1M650 385h1M650 389h1M654 357h1M655 441h1M664 425h1M664 428h1M664 438h1M665 436h1M665 442h1M665 450h1M666 418h1M666 453h1M667 441h1M667 442h1M668 439h1M668 453h1M675 379h1M676 385h1M680 441h1M682 479h1M696 437h1M699 443h1M701 424h1M703 470h1M704 466h1M705 440h1M705 463h1M705 471h1M705 476h1M705 477h1M705 479h1M706 465h1M707 453h1M707 458h1M707 461h1M707 468h1M707 478h1M708 470h1M709 385h1M710 364h1M710 386h1M711 389h1M711 391h1M714 394h1M715 361h1M715 366h1M715 368h1M715 381h1M716 372h1M716 376h1M717 374h1M717 377h1M718 373h1M725 462h1M726 434h1M731 471h1M739 434h1M747 445h1M759 448h1M762 404h1M763 446h1M765 388h1M773 364h1M775 436h1M776 433h1M777 439h1M779 452h1M780 456h1M782 465h1M789 444h1M789 449h1M792 457h1M793 394h1M811 402h1M811 462h1M813 425h1M818 386h1M819 392h1M819 395h1M829 344h1M830 361h1M845 412h1M852 455h1M862 433h1M863 401h1M864 388h1M864 389h1M864 396h1M865 370h1M865 373h1"/><path stroke="#0090ff" d="M54 432h1M58 425h1M72 348h1M74 377h1M75 452h1M84 394h1M84 399h1M106 482h1M109 391h1M109 393h1M109 394h1M110 384h1M110 391h1M110 392h1M126 460h1M126 478h1M126 479h1M127 463h1M127 478h1M127 479h1M129 436h1M153 393h1M153 394h1M153 395h1M153 397h1M154 358h1M154 361h1M155 357h1M156 394h1M156 397h1M157 394h1M158 395h1M158 396h1M159 375h1M159 383h1M159 388h1M159 396h1M159 406h1M160 407h1M164 478h1M166 481h1M167 478h1M168 475h1M169 481h1M175 481h1M179 419h1M188 387h1M189 360h1M189 367h1M189 371h1M189 382h1M190 375h1M191 392h1M192 404h1M193 401h1M194 357h1M194 362h1M194 372h1M195 361h1M195 365h1M195 372h1M199 409h1M200 421h1M200 430h1M201 422h1M202 406h1M210 377h1M212 424h1M213 411h1M213 419h1M218 377h1M224 428h1M224 437h1M225 462h1M226 425h1M236 389h1M236 391h1M236 393h1M250 397h1M258 425h1M266 406h1M277 348h1M284 458h1M284 463h1M284 478h1M285 470h1M285 474h1M285 476h1M287 459h1M287 464h1M287 476h1M289 413h1M289 449h1M289 477h1M290 455h1M290 465h1M291 410h1M291 451h1M291 463h1M291 471h1M292 398h1M292 423h1M292 435h1M292 441h1M292 451h1M293 456h1M293 464h1M302 409h1M302 413h1M302 426h1M303 383h1M303 384h1M304 378h1M304 399h1M304 408h1M305 407h1M305 420h1M305 424h1M306 393h1M306 413h1M306 423h1M306 425h1M307 367h1M307 380h1M307 390h1M307 399h1M307 400h1M307 410h1M307 413h1M307 414h1M308 420h1M308 422h1M308 423h1M308 427h1M308 428h1M308 429h1M311 356h1M326 443h1M328 431h1M328 451h1M329 409h1M329 420h1M329 421h1M329 427h1M330 429h1M331 414h1M331 426h1M332 417h1M332 424h1M332 442h1M344 432h1M380 402h1M380 405h1M381 397h1M381 406h1M382 362h1M383 365h1M390 398h1M391 413h1M392 477h1M395 460h1M397 377h1M397 411h1M397 412h1M399 472h1M411 358h1M411 364h1M412 362h1M420 481h1M421 477h1M429 386h1M431 383h1M435 474h1M436 412h1M437 426h1M438 415h1M438 425h1M438 427h1M438 431h1M439 421h1M439 423h1M439 430h1M439 433h1M441 427h1M441 431h1M441 436h1M441 437h1M441 442h1M442 445h1M442 462h1M443 457h1M446 412h1M446 446h1M449 465h1M457 463h1M463 477h1M465 433h1M466 414h1M466 447h1M477 388h1M477 394h1M479 433h1M481 362h1M482 386h1M505 347h1M517 360h1M525 382h1M535 472h1M536 435h1M536 436h1M537 430h1M537 436h1M537 437h1M537 443h1M537 445h1M538 384h1M538 393h1M538 417h1M538 424h1M538 429h1M538 430h1M538 435h1M539 425h1M539 432h1M539 433h1M539 463h1M540 432h1M540 441h1M540 442h1M541 446h1M541 449h1M541 450h1M543 478h1M549 437h1M557 405h1M558 394h1M558 409h1M558 413h1M559 400h1M559 407h1M560 414h1M560 415h1M576 468h1M587 406h1M589 353h1M599 382h1M600 429h1M601 385h1M601 432h1M601 443h1M612 436h1M616 419h1M636 422h1M642 423h1M642 429h1M643 434h1M644 428h1M646 427h1M646 437h1M649 382h1M650 386h1M650 388h1M650 391h1M650 400h1M651 400h1M651 405h1M651 407h1M651 412h1M664 437h1M664 450h1M665 448h1M665 452h1M665 469h1M665 470h1M666 449h1M666 454h1M666 456h1M667 420h1M667 427h1M667 433h1M667 451h1M667 458h1M668 449h1M668 460h1M676 406h1M678 465h1M687 378h1M699 467h1M700 415h1M703 473h1M705 453h1M705 459h1M707 462h1M709 384h1M709 392h1M709 393h1M710 383h1M710 384h1M710 391h1M711 390h1M711 396h1M712 392h1M712 394h1M712 396h1M712 399h1M714 392h1M715 372h1M715 380h1M715 382h1M716 377h1M716 387h1M717 380h1M717 386h1M718 376h1M718 377h1M718 378h1M718 381h1M719 482h1M727 450h1M730 454h1M731 465h1M736 407h1M740 441h1M750 406h1M754 421h1M764 405h1M772 458h1M778 410h1M782 454h1M796 437h1M798 448h1M809 399h1M811 464h1M829 349h1M833 388h1M843 435h1M844 391h1M854 384h1M860 402h1M862 458h1M863 394h1M863 399h1M863 402h1M863 405h1M864 399h1M864 404h1M865 367h1M865 383h1M865 385h1M865 394h1"/><path stroke="#00a7ff" d="M55 468h1M56 382h1M61 379h1M70 367h1M73 370h1M82 347h1M82 350h1M87 365h1M87 369h1M88 403h1M90 395h1M95 411h1M103 455h1M108 387h1M108 392h1M109 389h1M109 392h1M109 395h1M109 396h1M109 398h1M115 434h1M120 409h1M126 480h1M129 447h1M153 402h1M154 364h1M154 367h1M154 369h1M155 358h1M155 365h1M155 366h1M157 400h1M158 393h1M158 404h1M167 466h1M167 482h1M168 464h1M178 421h1M180 401h1M184 401h1M185 428h1M188 374h1M188 391h1M189 383h1M190 369h1M190 370h1M191 408h1M192 399h1M192 402h1M193 402h1M194 381h1M195 377h1M195 379h1M195 381h1M209 374h1M209 376h1M210 389h1M212 423h1M216 452h1M220 402h1M224 395h1M225 435h1M225 441h1M230 405h1M232 414h1M237 409h1M259 451h1M272 359h1M285 451h1M287 398h1M287 480h1M288 476h1M289 391h1M289 399h1M289 447h1M289 466h1M289 479h1M290 479h1M291 414h1M291 443h1M291 473h1M291 479h1M292 431h1M292 460h1M292 464h1M292 466h1M292 476h1M293 450h1M293 461h1M293 476h1M293 478h1M299 361h1M299 396h1M299 405h1M300 432h1M302 402h1M302 427h1M302 433h1M302 434h1M302 439h1M303 423h1M303 424h1M304 389h1M304 414h1M304 419h1M304 424h1M304 425h1M305 423h1M305 433h1M306 391h1M306 411h1M306 427h1M306 432h1M306 436h1M306 437h1M307 388h1M307 420h1M307 421h1M307 435h1M308 448h1M314 391h1M317 478h1M329 415h1M329 429h1M330 422h1M330 444h1M331 413h1M331 417h1M331 424h1M331 429h1M332 426h1M332 449h1M336 452h1M358 476h1M368 478h1M374 410h1M380 404h1M380 406h1M380 407h1M380 408h1M380 410h1M381 402h1M381 410h1M382 371h1M383 370h1M383 382h1M383 386h1M383 396h1M385 482h1M386 399h1M395 461h1M395 474h1M408 365h1M408 375h1M409 363h1M409 366h1M410 367h1M410 376h1M410 379h1M411 378h1M412 358h1M412 366h1M425 414h1M428 356h1M435 468h1M436 421h1M436 430h1M436 432h1M436 433h1M437 411h1M437 421h1M437 429h1M437 438h1M438 434h1M439 416h1M439 436h1M439 439h1M441 440h1M443 475h1M446 459h1M447 418h1M462 438h1M480 465h1M484 371h1M486 365h1M487 371h1M490 376h1M495 382h1M517 394h1M525 419h1M525 420h1M525 467h1M535 481h1M536 456h1M536 470h1M536 473h1M537 432h1M538 414h1M538 416h1M538 432h1M539 454h1M539 464h1M539 470h1M539 475h1M539 477h1M540 419h1M540 431h1M540 449h1M541 457h1M541 461h1M541 468h1M548 477h1M558 408h1M558 417h1M559 418h1M559 422h1M560 420h1M560 427h1M560 428h1M561 417h1M569 462h1M576 425h1M577 480h1M577 482h1M579 478h1M589 340h1M591 375h1M602 403h1M602 440h1M615 469h1M620 397h1M622 366h1M627 389h1M631 377h1M637 374h1M642 422h1M642 435h1M642 439h1M642 442h1M643 439h1M644 424h1M644 425h1M644 431h1M644 438h1M646 444h1M647 387h1M647 394h1M647 395h1M648 382h1M649 381h1M651 398h1M651 413h1M651 416h1M651 418h1M651 423h1M654 391h1M658 380h1M660 415h1M664 458h1M664 464h1M664 467h1M665 454h1M665 455h1M665 471h1M666 451h1M666 465h1M666 470h1M666 477h1M667 460h1M667 474h1M668 464h1M668 467h1M669 441h1M669 462h1M676 451h1M680 453h1M687 346h1M691 447h1M691 466h1M693 405h1M693 433h1M693 446h1M695 424h1M703 480h1M705 481h1M706 480h1M707 474h1M707 477h1M707 479h1M707 480h1M708 481h1M709 397h1M710 382h1M710 395h1M711 393h1M711 395h1M711 402h1M712 402h1M713 398h1M713 404h1M713 405h1M715 386h1M717 378h1M717 388h1M718 379h1M718 386h1M720 479h1M722 476h1M729 453h1M740 461h1M745 395h1M747 415h1M751 411h1M755 426h1M756 451h1M760 482h1M774 446h1M786 447h1M796 398h1M797 457h1M800 412h1M804 425h1M811 423h1M813 417h1M823 384h1M833 386h1M836 376h1M849 417h1M849 422h1M853 408h1M863 406h1M864 402h1M865 382h1M865 395h1"/><path stroke="#00beff" d="M61 357h1M62 357h1M84 375h1M90 379h1M91 425h1M108 391h1M110 386h1M110 398h1M116 432h1M120 410h1M129 442h1M133 474h1M153 381h1M153 398h1M153 399h1M153 404h1M153 407h1M154 363h1M154 366h1M154 371h1M155 370h1M156 403h1M157 403h1M157 404h1M157 406h1M158 409h1M159 409h1M159 414h1M159 416h1M160 410h1M166 482h1M169 480h1M190 371h1M190 374h1M190 380h1M191 404h1M191 406h1M194 378h1M194 380h1M216 388h1M217 443h1M222 402h1M226 443h1M229 410h1M254 410h1M256 404h1M259 395h1M263 413h1M263 472h1M266 471h1M273 364h1M278 375h1M284 481h1M285 467h1M285 481h1M291 429h1M291 476h1M292 437h1M292 453h1M292 465h1M293 455h1M297 461h1M302 429h1M302 436h1M302 437h1M303 410h1M303 421h1M303 430h1M303 433h1M304 405h1M304 410h1M304 411h1M304 431h1M304 436h1M305 425h1M305 434h1M305 439h1M305 442h1M305 446h1M306 420h1M306 428h1M306 435h1M306 438h1M306 439h1M306 445h1M306 452h1M306 457h1M307 416h1M307 429h1M307 444h1M307 452h1M308 437h1M308 452h1M308 454h1M308 455h1M308 457h1M308 463h1M328 480h1M329 414h1M329 436h1M329 441h1M330 446h1M330 447h1M330 451h1M330 452h1M330 453h1M332 430h1M332 435h1M354 475h1M356 468h1M361 477h1M380 411h1M380 412h1M380 418h1M382 357h1M382 369h1M382 374h1M383 381h1M383 383h1M383 390h1M383 404h1M388 453h1M407 410h1M407 412h1M409 365h1M409 367h1M409 368h1M410 365h1M410 372h1M410 377h1M411 375h1M411 381h1M411 383h1M412 370h1M412 371h1M436 419h1M437 436h1M437 437h1M437 442h1M437 448h1M438 444h1M438 446h1M438 447h1M439 437h1M439 443h1M439 444h1M440 440h1M440 447h1M441 434h1M441 452h1M441 459h1M441 461h1M441 467h1M449 433h1M465 454h1M477 368h1M486 372h1M493 383h1M525 464h1M536 457h1M536 471h1M537 446h1M537 451h1M537 460h1M537 474h1M538 446h1M539 469h1M539 474h1M540 430h1M540 444h1M540 446h1M540 464h1M541 471h1M541 473h1M561 406h1M561 408h1M561 414h1M566 405h1M583 461h1M587 451h1M597 403h1M614 425h1M622 346h1M631 386h1M637 456h1M643 442h1M644 444h1M645 446h1M645 447h1M645 448h1M645 453h1M646 438h1M646 441h1M646 448h1M648 392h1M648 398h1M649 386h1M649 392h1M649 395h1M652 360h1M657 407h1M664 461h1M664 463h1M665 465h1M666 469h1M666 476h1M667 445h1M667 457h1M668 462h1M668 468h1M668 472h1M668 473h1M676 460h1M678 470h1M682 481h1M686 367h1M691 464h1M694 362h1M707 481h1M707 482h1M709 396h1M710 390h1M710 392h1M710 396h1M711 403h1M711 405h1M713 401h1M714 404h1M714 407h1M716 388h1M718 375h1M718 383h1M718 390h1M718 393h1M729 418h1M729 468h1M731 363h1M735 416h1M744 413h1M744 421h1M746 428h1M748 447h1M749 444h1M765 419h1M777 465h1M786 438h1M796 455h1M800 452h1M801 370h1M805 434h1M808 397h1M812 428h1M826 374h1M831 386h1M841 453h1M849 427h1M852 427h1M863 412h1M863 420h1M864 408h1M864 410h1M864 412h1M864 415h1M865 398h1M865 406h1M866 356h1M866 393h1"/><path stroke="#00d4ff" d="M51 364h1M76 375h1M78 383h1M82 356h1M82 426h1M84 429h1M93 427h1M94 437h1M95 424h1M110 395h1M111 434h1M117 440h1M120 415h1M120 449h1M121 376h1M121 463h1M129 445h1M129 449h1M129 453h1M129 455h1M129 458h1M129 459h1M129 464h1M129 466h1M129 471h1M130 449h1M153 409h1M153 411h1M154 374h1M155 359h1M155 375h1M156 404h1M156 410h1M157 413h1M158 411h1M158 414h1M158 415h1M158 416h1M159 402h1M159 425h1M160 414h1M179 449h1M181 397h1M184 402h1M184 448h1M188 389h1M189 390h1M189 392h1M190 387h1M190 394h1M191 405h1M192 407h1M192 408h1M193 399h1M193 406h1M194 386h1M194 390h1M195 390h1M203 436h1M204 398h1M207 410h1M209 388h1M216 470h1M223 478h1M224 455h1M226 442h1M235 410h1M250 402h1M255 472h1M257 400h1M257 457h1M263 425h1M268 302h1M269 342h1M272 335h1M277 361h1M278 442h1M282 359h1M291 475h1M291 481h1M292 449h1M293 451h1M293 479h1M298 463h1M299 358h1M301 368h1M301 459h1M302 414h1M302 424h1M302 428h1M302 446h1M303 434h1M303 445h1M303 469h1M304 409h1M304 432h1M304 451h1M304 453h1M304 461h1M305 451h1M305 453h1M305 471h1M306 449h1M307 386h1M307 440h1M307 443h1M307 445h1M307 453h1M307 455h1M307 460h1M307 461h1M308 469h1M308 474h1M308 476h1M309 339h1M329 443h1M329 451h1M330 465h1M330 467h1M332 448h1M332 450h1M332 455h1M332 466h1M332 475h1M336 473h1M380 421h1M380 422h1M380 430h1M381 413h1M381 419h1M382 390h1M383 375h1M383 388h1M383 389h1M383 392h1M383 393h1M383 399h1M398 453h1M407 409h1M408 373h1M408 379h1M409 370h1M409 371h1M409 381h1M410 390h1M412 369h1M412 373h1M426 424h1M436 426h1M436 439h1M436 447h1M436 454h1M438 429h1M438 437h1M438 450h1M439 441h1M440 427h1M440 430h1M440 439h1M440 444h1M440 448h1M441 454h1M441 457h1M441 462h1M441 463h1M441 464h1M441 472h1M466 428h1M473 421h1M477 370h1M479 473h1M486 373h1M494 436h1M515 378h1M517 378h1M518 382h1M526 454h1M526 456h1M529 404h1M536 443h1M536 463h1M536 466h1M536 479h1M537 450h1M537 458h1M537 462h1M538 459h1M538 461h1M538 462h1M538 466h1M538 468h1M540 452h1M540 457h1M540 469h1M541 459h1M541 474h1M541 475h1M541 476h1M549 455h1M554 442h1M558 419h1M559 427h1M560 434h1M561 410h1M561 412h1M561 415h1M566 446h1M567 444h1M582 465h1M595 386h1M595 392h1M601 450h1M612 419h1M613 474h1M621 385h1M627 410h1M637 405h1M642 434h1M642 453h1M643 457h1M644 450h1M644 452h1M645 445h1M645 452h1M645 454h1M645 464h1M645 475h1M646 433h1M646 450h1M646 459h1M646 460h1M647 397h1M647 402h1M648 394h1M649 388h1M649 391h1M649 400h1M650 414h1M651 417h1M651 425h1M651 428h1M651 429h1M652 366h1M658 385h1M658 453h1M660 403h1M664 456h1M664 457h1M664 474h1M665 456h1M666 468h1M667 468h1M667 475h1M668 476h1M669 467h1M676 421h1M697 438h1M701 421h1M706 481h1M709 401h1M709 407h1M710 397h1M711 398h1M711 400h1M712 409h1M712 413h1M713 411h1M714 401h1M715 387h1M715 390h1M716 392h1M716 398h1M717 376h1M717 394h1M718 389h1M725 403h1M726 426h1M731 401h1M732 391h1M735 474h1M747 438h1M752 452h1M771 431h1M774 380h1M775 465h1M790 482h1M802 417h1M803 463h1M821 447h1M822 403h1M825 443h1M827 423h1M828 451h1M833 367h1M843 415h1M843 470h1M844 412h1M854 416h1M863 413h1M863 421h1M864 418h1M864 423h1M865 389h1M865 402h1M865 412h1"/><path stroke="#00ebff" d="M51 345h1M53 431h1M64 397h1M67 429h1M71 379h1M84 389h1M88 418h1M97 376h1M98 374h1M108 403h1M110 397h1M111 481h1M129 463h1M129 472h1M130 440h1M153 414h1M154 382h1M156 407h1M156 409h1M156 412h1M157 408h1M157 422h1M159 421h1M159 426h1M159 428h1M159 430h1M160 418h1M160 419h1M160 425h1M183 454h1M188 395h1M188 396h1M188 398h1M188 400h1M188 404h1M189 389h1M189 399h1M190 385h1M190 392h1M190 399h1M192 412h1M193 412h1M193 414h1M195 395h1M195 396h1M201 454h1M206 396h1M209 389h1M210 392h1M210 394h1M233 428h1M234 456h1M237 385h1M262 413h1M278 465h1M278 468h1M283 360h1M283 367h1M285 480h1M291 469h1M291 480h1M299 378h1M302 443h1M302 451h1M302 452h1M302 459h1M302 460h1M303 457h1M303 463h1M303 475h1M304 413h1M304 429h1M304 441h1M304 463h1M304 471h1M305 447h1M305 469h1M306 443h1M306 450h1M306 453h1M306 469h1M306 477h1M307 405h1M307 456h1M308 438h1M308 468h1M308 477h1M309 343h1M312 357h1M314 464h1M329 439h1M329 456h1M329 459h1M329 467h1M329 471h1M329 472h1M330 445h1M330 449h1M330 456h1M330 462h1M331 431h1M331 434h1M331 451h1M331 452h1M331 462h1M332 465h1M332 474h1M332 476h1M337 474h1M338 474h1M362 480h1M378 393h1M380 427h1M381 409h1M381 412h1M381 418h1M381 425h1M382 375h1M382 389h1M382 405h1M383 380h1M383 384h1M383 385h1M383 401h1M388 459h1M391 445h1M408 381h1M409 379h1M410 378h1M410 389h1M410 393h1M411 389h1M412 374h1M412 380h1M425 429h1M429 406h1M436 428h1M436 449h1M436 459h1M438 449h1M438 454h1M439 447h1M439 452h1M439 455h1M439 456h1M439 461h1M439 463h1M439 468h1M440 449h1M440 451h1M440 465h1M440 466h1M440 468h1M441 458h1M444 435h1M485 379h1M490 360h1M496 380h1M505 339h1M519 401h1M520 356h1M520 389h1M527 368h1M537 473h1M538 438h1M538 440h1M538 452h1M538 464h1M538 470h1M538 474h1M538 475h1M538 477h1M539 458h1M539 460h1M539 473h1M540 458h1M540 468h1M540 474h1M540 475h1M540 476h1M541 470h1M558 423h1M559 424h1M559 434h1M559 437h1M560 436h1M560 441h1M561 418h1M561 427h1M568 474h1M581 468h1M602 469h1M615 424h1M621 398h1M622 380h1M622 383h1M623 380h1M637 479h1M642 454h1M642 472h1M643 445h1M643 462h1M643 468h1M643 469h1M643 473h1M644 455h1M644 469h1M645 449h1M645 469h1M645 473h1M645 476h1M646 454h1M646 457h1M646 471h1M646 472h1M647 399h1M647 404h1M648 409h1M651 402h1M651 431h1M651 432h1M651 435h1M651 437h1M651 439h1M652 367h1M652 380h1M653 370h1M657 415h1M664 480h1M665 479h1M665 481h1M666 463h1M666 478h1M667 480h1M667 481h1M668 451h1M695 382h1M696 429h1M709 409h1M710 406h1M715 388h1M715 403h1M716 399h1M716 401h1M716 402h1M717 390h1M718 384h1M718 388h1M718 399h1M727 437h1M728 426h1M731 434h1M731 441h1M747 463h1M748 442h1M748 459h1M762 432h1M765 440h1M770 457h1M771 469h1M774 393h1M774 467h1M802 477h1M805 467h1M814 451h1M815 454h1M833 375h1M838 482h1M843 463h1M843 471h1M857 399h1M857 408h1M863 418h1M863 419h1M863 424h1M864 413h1M864 416h1M864 422h1M864 424h1M864 427h1M865 415h1M865 418h1M866 365h1"/><path stroke="#00fffa" d="M59 406h1M72 413h1M82 363h1M82 460h1M84 397h1M87 401h1M91 465h1M99 407h1M100 413h1M108 395h1M108 404h1M108 407h1M109 408h1M109 414h1M110 401h1M110 409h1M113 447h1M117 475h1M129 460h1M153 408h1M154 373h1M154 375h1M154 384h1M154 386h1M154 388h1M155 377h1M155 380h1M155 388h1M155 389h1M156 405h1M156 406h1M156 415h1M158 418h1M158 419h1M159 434h1M160 422h1M160 426h1M160 428h1M181 413h1M183 419h1M183 463h1M184 422h1M188 388h1M188 412h1M189 401h1M189 403h1M189 406h1M190 396h1M190 401h1M194 392h1M194 396h1M194 397h1M194 398h1M194 401h1M194 402h1M195 382h1M195 388h1M195 398h1M209 396h1M211 468h1M225 421h1M228 437h1M233 403h1M235 430h1M256 422h1M262 428h1M271 382h1M272 339h1M272 343h1M291 482h1M292 480h1M293 481h1M293 482h1M301 456h1M301 468h1M302 462h1M302 467h1M302 468h1M302 474h1M304 459h1M304 462h1M304 474h1M305 429h1M305 441h1M306 462h1M306 467h1M306 472h1M306 475h1M307 474h1M322 443h1M329 461h1M329 466h1M331 449h1M331 455h1M331 458h1M332 453h1M332 456h1M332 479h1M349 391h1M356 478h1M362 481h1M375 454h1M375 460h1M376 461h1M379 379h1M380 439h1M381 423h1M382 376h1M382 380h1M382 384h1M382 392h1M382 401h1M382 402h1M382 417h1M382 427h1M383 420h1M383 423h1M383 425h1M383 427h1M389 416h1M397 474h1M398 413h1M407 414h1M407 427h1M408 407h1M408 411h1M408 413h1M409 377h1M409 382h1M409 383h1M409 392h1M410 399h1M411 377h1M411 380h1M411 384h1M411 388h1M411 394h1M412 389h1M429 424h1M430 388h1M436 465h1M437 472h1M438 456h1M439 460h1M439 472h1M440 445h1M440 452h1M440 469h1M440 474h1M441 469h1M462 472h1M486 381h1M492 476h1M494 477h1M501 407h1M503 382h1M505 387h1M507 347h1M507 379h1M517 408h1M519 367h1M524 481h1M529 413h1M529 454h1M536 482h1M537 475h1M539 479h1M539 480h1M540 472h1M558 429h1M558 435h1M558 442h1M559 429h1M559 430h1M559 441h1M560 439h1M561 421h1M561 425h1M561 426h1M561 429h1M561 431h1M590 370h1M599 414h1M601 479h1M602 426h1M604 474h1M621 404h1M622 362h1M625 397h1M642 460h1M642 462h1M642 465h1M642 468h1M642 474h1M643 453h1M643 454h1M643 461h1M644 454h1M644 463h1M644 475h1M645 460h1M645 477h1M646 442h1M646 453h1M646 468h1M646 474h1M647 401h1M648 399h1M649 405h1M649 415h1M650 407h1M650 422h1M650 426h1M651 443h1M651 454h1M652 386h1M652 408h1M652 428h1M652 432h1M652 446h1M653 400h1M657 433h1M667 472h1M668 454h1M686 411h1M709 399h1M709 400h1M709 413h1M709 414h1M710 403h1M710 404h1M711 406h1M711 409h1M711 412h1M711 413h1M711 414h1M715 407h1M716 405h1M717 396h1M717 402h1M717 403h1M718 405h1M718 409h1M728 425h1M731 466h1M744 468h1M749 460h1M764 430h1M764 441h1M773 394h1M774 459h1M790 479h1M793 460h1M801 470h1M803 473h1M805 470h1M806 461h1M812 432h1M825 400h1M825 466h1M826 463h1M829 365h1M838 467h1M838 476h1M844 425h1M852 452h1M854 439h1M863 411h1M863 423h1M863 428h1M863 431h1M863 441h1M865 416h1M865 426h1M865 427h1M865 432h1M867 401h1M867 403h1M868 402h1"/><path stroke="#00ffc1" d="M53 473h1M59 375h1M72 411h1M73 367h1M81 473h1M90 433h1M109 420h1M109 424h1M110 414h1M129 461h1M155 383h1M155 396h1M155 397h1M156 413h1M157 412h1M159 424h1M160 429h1M160 434h1M179 408h1M188 409h1M190 403h1M191 423h1M191 427h1M192 410h1M192 421h1M193 411h1M193 417h1M194 403h1M195 408h1M201 478h1M203 472h1M209 394h1M210 395h1M251 427h1M256 437h1M258 422h1M266 434h1M271 394h1M279 341h1M279 342h1M280 391h1M281 353h1M283 341h1M292 482h1M293 480h1M301 460h1M302 464h1M302 471h1M302 473h1M302 476h1M302 477h1M302 479h1M303 477h1M304 450h1M305 448h1M305 454h1M305 474h1M305 477h1M306 447h1M308 480h1M310 424h1M310 440h1M314 470h1M316 467h1M316 471h1M329 449h1M329 473h1M330 454h1M331 466h1M331 468h1M331 469h1M331 476h1M331 479h1M339 482h1M344 437h1M356 440h1M379 470h1M380 440h1M380 446h1M380 447h1M381 426h1M381 440h1M382 383h1M382 386h1M382 410h1M382 416h1M382 429h1M382 430h1M382 444h1M382 450h1M383 436h1M383 442h1M383 451h1M407 422h1M407 426h1M408 387h1M408 399h1M408 405h1M408 406h1M408 419h1M409 401h1M410 394h1M410 400h1M411 392h1M411 393h1M411 399h1M411 404h1M412 388h1M412 392h1M412 393h1M426 452h1M436 442h1M436 468h1M436 476h1M436 477h1M437 445h1M437 454h1M439 454h1M439 466h1M439 467h1M440 463h1M440 479h1M442 456h1M443 465h1M466 466h1M472 473h1M473 466h1M478 403h1M485 409h1M502 381h1M503 395h1M505 382h1M517 391h1M518 396h1M537 482h1M540 459h1M540 481h1M558 416h1M558 433h1M558 443h1M559 443h1M559 456h1M560 453h1M560 464h1M560 470h1M561 435h1M561 436h1M561 438h1M561 441h1M561 445h1M575 462h1M595 363h1M624 393h1M627 437h1M629 448h1M642 452h1M642 458h1M642 461h1M643 455h1M643 459h1M644 447h1M644 460h1M644 476h1M645 471h1M646 473h1M647 406h1M647 409h1M648 408h1M649 409h1M650 420h1M650 428h1M650 436h1M651 447h1M651 457h1M651 464h1M651 474h1M652 373h1M652 382h1M652 393h1M652 400h1M652 406h1M652 412h1M652 422h1M652 454h1M652 457h1M658 447h1M667 478h1M694 389h1M695 411h1M696 449h1M696 463h1M700 462h1M709 410h1M710 405h1M710 412h1M710 413h1M710 414h1M712 407h1M712 428h1M713 416h1M713 423h1M713 425h1M714 419h1M715 400h1M716 404h1M716 407h1M716 415h1M716 417h1M725 431h1M730 451h1M736 455h1M740 479h1M745 455h1M772 464h1M793 476h1M804 416h1M804 471h1M811 452h1M826 472h1M833 409h1M835 375h1M840 466h1M854 458h1M863 425h1M863 434h1M863 435h1M863 443h1M863 444h1M863 445h1M863 448h1M864 403h1M864 436h1M864 437h1M864 438h1M864 440h1M865 396h1M865 419h1M865 421h1M865 431h1"/><path stroke="#00ff89" d="M84 386h1M88 454h1M92 480h1M100 424h1M108 410h1M109 419h1M121 444h1M121 460h1M129 476h1M129 480h1M153 425h1M153 431h1M154 385h1M154 389h1M155 394h1M155 398h1M157 428h1M157 435h1M157 438h1M158 426h1M159 431h1M159 432h1M159 453h1M159 454h1M185 468h1M188 419h1M189 398h1M189 405h1M190 414h1M190 415h1M191 416h1M191 421h1M192 423h1M193 416h1M193 426h1M194 410h1M195 397h1M195 403h1M195 406h1M195 411h1M209 397h1M210 399h1M210 401h1M211 461h1M213 451h1M214 462h1M218 402h1M223 442h1M223 446h1M225 419h1M229 408h1M230 418h1M236 440h1M236 466h1M262 441h1M267 360h1M269 367h1M271 396h1M271 406h1M272 356h1M275 396h1M281 405h1M282 454h1M297 440h1M304 460h1M307 476h1M307 482h1M309 350h1M310 363h1M310 443h1M311 408h1M314 477h1M329 460h1M331 472h1M331 473h1M331 478h1M349 408h1M379 471h1M380 437h1M380 461h1M381 437h1M381 442h1M381 444h1M382 397h1M382 412h1M382 421h1M382 431h1M382 436h1M382 456h1M383 418h1M383 435h1M383 438h1M383 448h1M383 449h1M383 455h1M383 465h1M383 468h1M383 469h1M407 430h1M408 408h1M408 415h1M408 422h1M409 384h1M409 386h1M410 396h1M410 411h1M410 418h1M412 372h1M412 384h1M412 400h1M428 383h1M430 399h1M437 460h1M437 479h1M440 478h1M441 451h1M483 415h1M493 479h1M495 443h1M503 360h1M515 391h1M538 478h1M538 479h1M538 482h1M539 481h1M558 430h1M558 440h1M558 445h1M558 465h1M559 442h1M559 454h1M559 460h1M560 448h1M561 430h1M561 447h1M561 450h1M561 453h1M565 449h1M567 443h1M582 438h1M587 444h1M588 480h1M595 454h1M626 478h1M633 370h1M642 481h1M644 465h1M646 467h1M647 421h1M648 419h1M649 424h1M650 434h1M650 435h1M651 445h1M651 460h1M651 461h1M651 466h1M652 384h1M652 398h1M652 423h1M652 440h1M652 442h1M652 447h1M652 451h1M652 461h1M652 472h1M657 380h1M657 469h1M657 470h1M660 436h1M661 428h1M669 436h1M670 444h1M674 443h1M676 457h1M694 405h1M695 422h1M709 415h1M709 428h1M710 411h1M710 415h1M710 417h1M711 416h1M711 420h1M712 425h1M712 429h1M713 415h1M714 424h1M716 422h1M717 405h1M717 407h1M717 409h1M718 392h1M718 410h1M718 417h1M726 473h1M751 475h1M752 478h1M764 459h1M766 460h1M772 472h1M777 473h1M793 412h1M796 452h1M796 458h1M798 445h1M799 449h1M806 415h1M816 408h1M818 393h1M838 461h1M849 480h1M863 449h1M863 450h1M863 453h1M863 455h1M863 461h1M863 464h1M864 426h1M864 429h1M864 435h1M864 457h1M864 462h1M865 438h1M867 435h1"/><path stroke="#00ff51" d="M56 448h1M59 421h1M64 423h1M67 459h1M74 429h1M79 431h1M81 422h1M95 455h1M97 426h1M98 415h1M98 420h1M100 400h1M108 408h1M108 416h1M108 427h1M109 439h1M110 424h1M129 482h1M153 420h1M153 437h1M154 396h1M154 397h1M154 400h1M154 414h1M154 417h1M154 427h1M155 401h1M155 406h1M156 416h1M156 425h1M156 427h1M156 435h1M157 431h1M158 434h1M158 443h1M158 448h1M159 456h1M159 457h1M159 476h1M160 430h1M183 442h1M185 475h1M188 414h1M188 416h1M188 429h1M189 410h1M189 412h1M189 414h1M191 438h1M193 415h1M193 419h1M194 418h1M195 415h1M198 480h1M205 401h1M209 400h1M210 406h1M210 411h1M215 451h1M216 468h1M229 469h1M231 417h1M232 418h1M233 468h1M255 464h1M255 474h1M259 447h1M267 371h1M269 376h1M272 423h1M274 344h1M276 359h1M299 415h1M301 389h1M304 476h1M307 480h1M311 412h1M313 382h1M314 415h1M315 479h1M332 477h1M380 444h1M380 454h1M380 467h1M380 477h1M381 427h1M381 435h1M381 439h1M381 446h1M381 456h1M383 421h1M383 445h1M388 444h1M398 441h1M407 432h1M407 433h1M408 424h1M408 429h1M408 430h1M408 437h1M410 416h1M410 431h1M411 396h1M411 401h1M411 409h1M411 418h1M412 391h1M412 402h1M425 424h1M436 473h1M437 452h1M437 458h1M438 481h1M440 473h1M440 475h1M444 463h1M482 395h1M488 358h1M488 422h1M491 406h1M493 417h1M495 457h1M506 354h1M506 397h1M536 481h1M558 424h1M558 463h1M558 469h1M558 472h1M559 452h1M559 457h1M559 464h1M559 477h1M560 459h1M560 478h1M561 451h1M561 452h1M561 465h1M566 436h1M567 452h1M580 434h1M583 482h1M587 448h1M594 369h1M595 451h1M597 450h1M598 459h1M598 473h1M599 467h1M612 459h1M622 424h1M629 450h1M633 462h1M642 464h1M644 471h1M646 477h1M647 424h1M649 410h1M649 416h1M649 435h1M650 439h1M650 442h1M650 450h1M650 455h1M651 468h1M651 471h1M651 477h1M652 368h1M652 389h1M652 453h1M664 482h1M677 443h1M688 451h1M694 423h1M709 423h1M709 427h1M710 418h1M710 427h1M711 432h1M712 438h1M713 418h1M713 434h1M716 425h1M716 431h1M717 422h1M717 426h1M717 428h1M718 420h1M718 421h1M727 470h1M783 467h1M796 447h1M800 460h1M814 478h1M819 406h1M828 429h1M833 464h1M836 442h1M863 462h1M863 463h1M864 446h1M864 463h1M865 441h1M865 449h1M865 454h1M865 458h1"/><path stroke="#00ff18" d="M51 372h1M58 474h1M63 391h1M97 449h1M108 419h1M109 430h1M109 442h1M109 446h1M109 460h1M109 465h1M109 466h1M110 429h1M115 477h1M129 481h1M153 443h1M153 445h1M155 402h1M155 409h1M155 411h1M155 416h1M155 423h1M156 428h1M156 436h1M156 439h1M157 442h1M157 451h1M157 469h1M158 453h1M158 467h1M159 442h1M159 451h1M160 441h1M160 452h1M160 453h1M160 458h1M160 471h1M188 428h1M188 437h1M189 420h1M189 425h1M190 398h1M190 424h1M190 437h1M191 432h1M192 434h1M193 433h1M193 435h1M194 411h1M194 423h1M194 424h1M195 407h1M195 420h1M206 442h1M208 478h1M209 403h1M209 405h1M209 412h1M210 412h1M218 420h1M231 422h1M232 422h1M251 459h1M254 463h1M257 442h1M271 349h1M272 383h1M275 419h1M277 377h1M278 414h1M278 419h1M283 364h1M297 462h1M303 481h1M304 479h1M310 455h1M312 451h1M314 412h1M315 402h1M329 470h1M350 457h1M353 433h1M353 446h1M355 465h1M380 432h1M380 460h1M380 471h1M380 473h1M381 450h1M381 460h1M381 462h1M381 466h1M381 467h1M382 461h1M382 466h1M382 470h1M382 475h1M383 440h1M383 453h1M383 466h1M383 475h1M389 439h1M397 430h1M407 445h1M408 445h1M408 453h1M408 455h1M409 408h1M409 412h1M410 423h1M410 425h1M410 427h1M410 430h1M410 432h1M410 434h1M411 398h1M411 423h1M411 424h1M411 433h1M412 405h1M436 480h1M437 480h1M438 477h1M440 481h1M463 480h1M479 455h1M494 420h1M502 394h1M504 391h1M509 372h1M518 458h1M537 479h1M558 446h1M558 461h1M558 479h1M559 428h1M561 440h1M561 449h1M561 474h1M561 479h1M564 454h1M567 455h1M581 437h1M588 462h1M594 429h1M621 460h1M625 445h1M627 406h1M630 382h1M632 428h1M636 463h1M643 463h1M644 473h1M644 478h1M647 419h1M648 420h1M649 436h1M649 441h1M649 444h1M650 446h1M650 449h1M650 451h1M650 469h1M650 470h1M651 476h1M651 478h1M652 427h1M652 430h1M652 478h1M653 450h1M675 432h1M676 474h1M699 481h1M701 457h1M709 416h1M709 430h1M709 431h1M709 435h1M710 422h1M710 429h1M710 437h1M711 434h1M712 443h1M713 431h1M713 437h1M714 434h1M714 435h1M714 442h1M715 425h1M716 411h1M716 428h1M716 430h1M717 416h1M718 428h1M718 433h1M746 465h1M804 455h1M804 462h1M806 448h1M816 420h1M826 440h1M831 384h1M832 421h1M837 441h1M841 466h1M845 472h1M863 440h1M863 469h1M865 436h1M865 443h1M865 445h1M867 390h1"/><path stroke="#09ff00" d="M56 477h1M61 431h1M61 443h1M62 439h1M70 385h1M79 393h1M79 460h1M89 408h1M97 459h1M108 402h1M108 423h1M108 425h1M108 428h1M108 429h1M109 436h1M109 453h1M109 468h1M109 472h1M109 474h1M110 428h1M110 432h1M110 442h1M153 434h1M153 438h1M153 439h1M153 451h1M153 453h1M153 461h1M154 402h1M154 406h1M154 415h1M154 434h1M154 445h1M154 453h1M154 458h1M155 418h1M155 428h1M156 438h1M156 445h1M157 459h1M157 475h1M158 452h1M158 454h1M159 467h1M159 479h1M160 444h1M160 454h1M160 465h1M188 431h1M188 435h1M188 438h1M188 439h1M188 442h1M190 416h1M190 417h1M190 436h1M190 439h1M191 439h1M191 444h1M191 447h1M191 451h1M191 457h1M191 463h1M192 445h1M193 424h1M193 432h1M194 416h1M194 426h1M194 431h1M195 416h1M195 418h1M195 431h1M206 460h1M209 409h1M220 458h1M223 461h1M228 430h1M230 437h1M236 480h1M251 394h1M259 476h1M270 356h1M280 423h1M283 426h1M283 435h1M283 450h1M304 480h1M309 380h1M314 422h1M349 467h1M378 433h1M380 438h1M380 442h1M380 466h1M381 452h1M381 463h1M381 464h1M382 473h1M387 474h1M388 455h1M407 438h1M407 453h1M407 454h1M407 464h1M408 451h1M408 471h1M408 472h1M408 475h1M409 424h1M409 425h1M409 432h1M409 439h1M410 435h1M410 452h1M411 440h1M411 441h1M411 444h1M411 449h1M412 386h1M425 433h1M482 450h1M483 471h1M488 431h1M493 431h1M497 422h1M499 422h1M500 428h1M505 365h1M515 445h1M516 466h1M518 394h1M519 438h1M520 437h1M560 480h1M561 443h1M561 459h1M561 464h1M561 477h1M590 431h1M600 468h1M622 470h1M647 434h1M648 432h1M649 432h1M649 439h1M649 443h1M649 458h1M650 465h1M650 467h1M651 482h1M709 434h1M709 451h1M710 439h1M710 447h1M710 449h1M711 427h1M711 438h1M711 440h1M711 442h1M711 447h1M711 449h1M711 454h1M711 456h1M712 440h1M712 442h1M712 463h1M712 464h1M714 425h1M714 441h1M714 447h1M714 449h1M715 414h1M715 419h1M715 429h1M716 429h1M716 437h1M716 449h1M717 419h1M717 441h1M717 448h1M718 424h1M718 442h1M747 461h1M754 479h1M796 466h1M799 469h1M823 449h1M828 446h1M829 443h1M834 400h1M835 470h1M839 472h1M842 466h1M843 460h1M852 473h1M863 471h1M863 478h1M864 454h1M865 434h1M867 404h1"/><path stroke="#19ff00" d="M60 406h1M63 478h1M64 464h1M65 400h1M79 440h1M89 418h1M100 450h1M108 444h1M109 452h1M109 454h1M109 458h1M109 464h1M109 478h1M110 425h1M110 434h1M110 435h1M110 440h1M110 460h1M116 482h1M153 442h1M153 462h1M153 469h1M154 443h1M154 456h1M154 468h1M154 469h1M155 393h1M155 427h1M155 438h1M155 447h1M155 449h1M155 453h1M155 458h1M156 444h1M156 447h1M156 457h1M157 444h1M157 456h1M158 455h1M158 465h1M158 478h1M159 475h1M181 460h1M188 432h1M188 443h1M188 449h1M188 454h1M189 440h1M189 444h1M189 451h1M189 456h1M190 428h1M190 433h1M190 446h1M190 455h1M190 459h1M190 464h1M190 470h1M191 459h1M192 440h1M192 454h1M193 462h1M194 428h1M194 432h1M194 447h1M195 446h1M195 457h1M206 469h1M209 410h1M209 419h1M210 417h1M210 418h1M210 424h1M219 427h1M219 464h1M222 445h1M222 474h1M233 447h1M251 414h1M267 341h1M273 419h1M279 446h1M281 474h1M282 361h1M283 463h1M299 467h1M310 408h1M378 446h1M381 474h1M381 479h1M382 460h1M382 477h1M383 462h1M383 474h1M407 452h1M407 458h1M408 452h1M409 414h1M409 438h1M409 448h1M409 454h1M410 424h1M410 443h1M410 463h1M410 465h1M412 417h1M412 418h1M412 431h1M430 454h1M477 461h1M486 447h1M489 428h1M490 433h1M517 412h1M521 400h1M521 478h1M529 406h1M558 475h1M558 478h1M559 475h1M567 475h1M583 456h1M591 411h1M591 470h1M594 453h1M628 482h1M630 446h1M633 398h1M644 482h1M647 425h1M647 428h1M648 421h1M648 428h1M648 435h1M649 442h1M649 447h1M649 448h1M649 459h1M649 469h1M650 448h1M650 461h1M650 478h1M652 466h1M654 468h1M660 432h1M674 468h1M687 455h1M694 475h1M709 440h1M709 452h1M709 453h1M709 468h1M710 441h1M710 443h1M710 444h1M710 453h1M711 430h1M711 437h1M711 453h1M711 464h1M711 472h1M712 445h1M712 457h1M712 472h1M713 433h1M713 445h1M713 446h1M713 452h1M713 456h1M713 462h1M714 452h1M715 433h1M715 460h1M716 419h1M716 440h1M716 444h1M716 450h1M716 452h1M716 466h1M717 430h1M717 463h1M717 464h1M718 431h1M718 462h1M734 472h1M783 481h1M804 450h1M808 470h1M819 447h1M828 449h1M829 458h1M831 476h1M834 478h1M835 454h1M838 470h1M863 454h1M863 465h1M863 476h1M864 470h1M864 473h1M864 476h1M864 481h1M865 450h1M865 463h1"/><path stroke="#29ff00" d="M59 475h1M77 482h1M79 458h1M89 422h1M108 424h1M108 435h1M108 450h1M108 451h1M110 461h1M110 468h1M110 470h1M121 482h1M153 454h1M153 464h1M154 441h1M155 419h1M155 431h1M155 439h1M155 443h1M155 464h1M155 465h1M155 476h1M156 449h1M156 470h1M156 474h1M157 441h1M157 479h1M158 480h1M159 482h1M188 466h1M189 436h1M189 445h1M189 459h1M189 473h1M190 432h1M190 453h1M190 460h1M190 463h1M190 472h1M190 473h1M191 442h1M191 446h1M191 448h1M191 474h1M192 443h1M192 449h1M192 456h1M192 457h1M192 460h1M192 465h1M193 451h1M193 466h1M193 467h1M194 451h1M194 460h1M194 467h1M195 439h1M195 460h1M195 469h1M209 424h1M229 445h1M236 451h1M251 422h1M274 378h1M274 459h1M310 417h1M311 413h1M312 410h1M315 441h1M322 463h1M380 482h1M381 451h1M382 474h1M382 479h1M382 481h1M383 479h1M388 468h1M407 449h1M407 463h1M407 465h1M408 467h1M409 415h1M409 431h1M409 437h1M409 442h1M409 444h1M409 452h1M409 474h1M409 475h1M410 442h1M410 446h1M410 468h1M410 475h1M411 431h1M411 445h1M411 448h1M411 459h1M411 463h1M411 477h1M412 453h1M412 455h1M412 461h1M429 468h1M431 445h1M465 477h1M481 410h1M481 465h1M484 476h1M485 452h1M490 468h1M491 462h1M498 410h1M500 465h1M507 450h1M509 426h1M515 417h1M518 404h1M519 407h1M520 469h1M559 480h1M590 397h1M621 418h1M625 424h1M647 443h1M647 450h1M647 464h1M647 465h1M648 431h1M648 440h1M648 461h1M648 465h1M648 469h1M649 451h1M649 455h1M649 464h1M649 468h1M650 482h1M652 476h1M658 458h1M687 477h1M709 447h1M709 448h1M709 461h1M710 460h1M710 471h1M711 436h1M711 459h1M711 465h1M712 459h1M713 442h1M713 453h1M713 459h1M713 464h1M713 469h1M714 443h1M714 454h1M714 463h1M714 466h1M715 424h1M715 440h1M715 442h1M715 445h1M716 455h1M716 464h1M716 465h1M716 475h1M717 446h1M717 452h1M717 453h1M717 468h1M718 452h1M718 457h1M718 461h1M718 471h1M756 473h1M772 469h1M772 478h1M825 438h1M843 475h1M843 479h1M851 469h1M860 426h1M864 474h1"/><path stroke="#39ff00" d="M64 480h1M70 412h1M72 482h1M83 451h1M87 412h1M98 468h1M108 455h1M108 467h1M108 477h1M109 477h1M110 465h1M110 474h1M110 477h1M153 459h1M154 476h1M154 479h1M155 457h1M155 472h1M156 452h1M156 473h1M158 473h1M178 476h1M188 470h1M188 471h1M189 442h1M189 448h1M189 449h1M189 450h1M189 453h1M190 425h1M190 445h1M190 447h1M190 456h1M190 466h1M190 468h1M191 452h1M191 472h1M191 478h1M192 439h1M192 452h1M192 453h1M192 458h1M193 440h1M193 443h1M193 454h1M193 456h1M193 463h1M193 475h1M193 476h1M194 433h1M194 449h1M194 468h1M194 473h1M195 461h1M195 462h1M195 464h1M195 465h1M195 471h1M204 482h1M206 427h1M209 429h1M209 430h1M219 436h1M248 414h1M257 481h1M279 397h1M390 479h1M407 471h1M408 481h1M409 434h1M409 455h1M409 467h1M409 473h1M411 474h1M411 475h1M412 422h1M412 425h1M412 451h1M412 454h1M412 462h1M412 470h1M412 471h1M430 423h1M478 481h1M479 481h1M482 413h1M486 461h1M488 478h1M490 401h1M498 448h1M500 471h1M500 472h1M507 438h1M510 458h1M517 420h1M558 482h1M561 480h1M585 478h1M590 415h1M600 474h1M601 482h1M632 414h1M647 448h1M647 456h1M647 458h1M647 467h1M647 471h1M648 433h1M648 446h1M649 478h1M650 473h1M709 457h1M709 459h1M709 467h1M709 471h1M709 478h1M710 448h1M710 476h1M711 469h1M711 478h1M712 468h1M712 471h1M712 475h1M713 438h1M713 465h1M713 466h1M714 458h1M714 459h1M714 465h1M714 475h1M715 443h1M715 465h1M717 437h1M717 470h1M718 447h1M718 451h1M718 456h1M718 468h1M718 469h1M794 451h1M794 463h1M829 409h1M831 429h1M836 440h1M857 418h1M864 472h1M865 467h1"/><path stroke="#49ff00" d="M53 460h1M59 434h1M61 413h1M62 436h1M63 414h1M65 434h1M84 477h1M90 431h1M99 425h1M108 459h1M108 465h1M108 466h1M108 474h1M110 467h1M110 472h1M153 472h1M153 474h1M153 477h1M153 482h1M155 425h1M155 469h1M156 456h1M157 482h1M160 472h1M181 468h1M188 463h1M188 472h1M188 473h1M189 464h1M189 476h1M189 477h1M190 454h1M190 457h1M192 463h1M192 476h1M192 477h1M192 478h1M193 447h1M194 448h1M194 459h1M195 459h1M195 467h1M195 478h1M206 433h1M208 438h1M209 423h1M209 437h1M210 422h1M222 480h1M230 459h1M235 433h1M247 457h1M270 453h1M279 413h1M282 430h1M349 429h1M381 458h1M381 473h1M382 480h1M407 480h1M407 481h1M409 472h1M409 477h1M409 478h1M410 467h1M412 416h1M412 449h1M412 457h1M412 477h1M427 452h1M490 477h1M491 421h1M505 438h1M509 388h1M528 471h1M592 440h1M622 438h1M647 455h1M647 475h1M648 443h1M648 449h1M648 451h1M648 459h1M648 476h1M650 481h1M710 456h1M710 470h1M710 473h1M711 455h1M711 476h1M715 471h1M715 479h1M716 446h1M717 466h1M718 450h1M718 466h1M791 478h1M814 472h1M819 430h1M836 463h1M865 468h1M865 472h1M865 473h1M867 480h1"/><path stroke="#5aff00" d="M60 421h1M61 421h1M73 409h1M110 453h1M110 469h1M110 480h1M154 475h1M154 480h1M154 481h1M157 480h1M191 475h1M191 480h1M192 441h1M192 469h1M194 441h1M194 462h1M195 456h1M195 463h1M207 436h1M209 440h1M209 448h1M209 450h1M210 430h1M210 432h1M210 443h1M210 453h1M210 457h1M210 462h1M215 476h1M219 443h1M220 445h1M222 442h1M247 448h1M249 427h1M251 437h1M267 363h1M268 365h1M277 392h1M381 482h1M390 480h1M407 447h1M409 464h1M410 482h1M412 478h1M485 427h1M487 408h1M521 439h1M561 482h1M581 480h1M647 480h1M648 457h1M648 470h1M653 480h1M660 469h1M709 479h1M710 469h1M710 480h1M712 453h1M713 479h1M714 455h1M714 477h1M717 478h1M718 479h1M718 481h1M817 451h1M830 442h1M830 447h1M834 452h1"/><path stroke="#6aff00" d="M59 447h1M59 459h1M61 439h1M62 466h1M64 435h1M65 462h1M65 476h1M71 426h1M73 447h1M74 461h1M79 452h1M87 458h1M89 468h1M108 481h1M109 480h1M109 481h1M110 473h1M156 481h1M188 480h1M189 479h1M192 479h1M192 482h1M193 469h1M193 478h1M193 480h1M193 482h1M194 474h1M195 477h1M195 482h1M209 456h1M209 466h1M210 436h1M210 446h1M210 448h1M210 465h1M210 467h1M210 472h1M222 465h1M222 467h1M248 443h1M268 379h1M275 425h1M279 432h1M281 452h1M312 448h1M349 453h1M381 480h1M409 462h1M409 481h1M478 437h1M483 455h1M485 481h1M488 405h1M509 408h1M515 455h1M518 462h1M520 435h1M594 431h1M621 435h1M622 454h1M623 431h1M628 480h1M630 461h1M631 427h1M631 443h1M632 451h1M647 479h1M647 482h1M648 463h1M654 437h1M654 452h1M654 457h1M687 439h1M688 455h1M709 476h1M711 452h1M712 480h1M714 481h1M715 482h1M716 470h1M717 445h1M717 474h1M717 480h1M818 457h1M829 450h1M834 445h1M836 478h1"/><path stroke="#7aff00" d="M61 453h1M61 457h1M61 468h1M71 442h1M192 473h1M192 475h1M206 443h1M206 471h1M209 441h1M209 463h1M209 470h1M210 469h1M210 471h1M210 476h1M210 477h1M210 479h1M267 418h1M268 442h1M269 425h1M269 445h1M272 450h1M276 432h1M276 452h1M281 400h1M350 439h1M350 450h1M409 476h1M428 444h1M429 451h1M481 438h1M481 452h1M483 469h1M491 473h1M520 455h1M589 452h1M630 473h1M649 482h1M653 457h1M717 481h1M834 475h1M837 472h1M865 469h1"/><path stroke="#8aff00" d="M78 456h1M209 462h1M274 461h1M281 440h1M408 482h1M410 481h1M411 480h1M412 460h1M428 461h1M431 453h1M478 473h1M482 470h1M498 439h1M505 403h1M506 436h1M594 464h1M653 471h1M653 478h1M654 478h1M718 482h1M816 476h1M833 475h1"/><path stroke="#9aff00" d="M205 476h1M209 479h1M215 481h1M267 454h1M482 432h1M488 479h1M491 469h1M497 441h1M504 416h1M504 429h1M506 453h1M510 456h1M632 479h1M713 480h1M715 481h1M829 481h1"/><path stroke="#af0" d="M74 481h1M78 481h1M209 468h1M248 461h1M409 482h1M488 471h1M501 453h1M502 449h1M506 469h1M633 463h1"/><path stroke="#baff00" d="M65 481h1M210 481h1M270 442h1M275 480h1M281 480h1M311 482h1M500 477h1M505 449h1M505 463h1M508 457h1M510 462h1M517 481h1M660 480h1"/><path stroke="#caff00" d="M89 480h1M209 474h1M222 481h1"/><path stroke="#daff00" d="M501 478h1"/><path stroke="#eaff00" d="M64 481h1M249 481h1"/></g>
<rect x="878" y="50" width="9" height="435" fill="url(#cb)"/>
<g fill="#fff">
<rect x="50" y="50" width="820" height="1"/>
<rect x="50" y="483" width="820" height="1"/>
<rect x="50" y="50" width="1" height="434"/>
<rect x="869" y="50" width="1" height="434"/>
<rect x="47" y="484" width="3" height="1"/>
<rect x="47" y="447" width="3" height="1"/>
<rect x="47" y="411" width="3" height="1"/>
<rect x="47" y="375" width="3" height="1"/>
<rect x="47" y="339" width="3" height="1"/>
<rect x="47" y="303" width="3" height="1"/>
<rect x="47" y="267" width="3" height="1"/>
<rect x="47" y="230" width="3" height="1"/>
<rect x="47" y="194" width="3" height="1"/>
<rect x="47" y="158" width="3" height="1"/>
<rect x="47" y="122" width="3" height="1"/>
<rect x="47" y="86" width="3" height="1"/>
<rect x="47" y="50" width="3" height="1"/>
<rect x="50" y="484" width="1" height="3"/>
<rect x="87" y="484" width="1" height="3"/>
<rect x="124" y="484" width="1" height="3"/>
<rect x="162" y="484" width="1" height="3"/>
<rect x="199" y="484" width="1" height="3"/>
<rect x="236" y="484" width="1" height="3"/>
<rect x="274" y="484" width="1" height="3"/>
<rect x="311" y="484" width="1" height="3"/>
<rect x="349" y="484" width="1" height="3"/>
<rect x="386" y="484" width="1" height="3"/>
<rect x="423" y="484" width="1" height="3"/>
<rect x="461" y="484" width="1" height="3"/>
<rect x="498" y="484" width="1" height="3"/>
<rect x="536" y="484" width="1" height="3"/>
<rect x="573" y="484" width="1" height="3"/>
<rect x="610" y="484" width="1" height="3"/>
<rect x="648" y="484" width="1" height="3"/>
<rect x="685" y="484" width="1" height="3"/>
<rect x="722" y="484" width="1" height="3"/>
<rect x="760" y="484" width="1" height="3"/>
<rect x="797" y="484" width="1" height="3"/>
<rect x="835" y="484" width="1" height="3"/>
<rect x="869" y="484" width="1" height="3"/>
<rect x="887" y="50" width="3" height="1"/>
<rect x="887" y="86" width="3" height="1"/>
<rect x="887" y="122" width="3" height="1"/>
<rect x="887" y="158" width="3" height="1"/>
<rect x="887" y="194" width="3" height="1"/>
<rect x="887" y="230" width="3" height="1"/>
<rect x="887" y="267" width="3" height="1"/>
<rect x="887" y="303" width="3" height="1"/>
<rect x="887" y="339" width="3" height="1"/>
<rect x="887" y="375" width="3" height="1"/>
<rect x="887" y="411" width="3" height="1"/>
<rect x="887" y="447" width="3" height="1"/>
<rect x="887" y="484" width="3" height="1"/>
</g>
</svg>
<div class="title">C:\Users\micha\five-shaoline-masters-eng00002.ts</div>
<div class="sub">DCA (DTS Coherent Acoustics), 48000 Hz, 24 bits, 1 channel, W:2048, F:Hann</div>
<div class="brand"><b>spek</b> <span>0.8.2.3</span></div>
<div class="fl" style="top:479.5px">0 kHz</div>
<div class="fl" style="top:442.5px">2 kHz</div>
<div class="fl" style="top:406.5px">4 kHz</div>
<div class="fl" style="top:370.5px">6 kHz</div>
<div class="fl" style="top:334.5px">8 kHz</div>
<div class="fl" style="top:298.5px">10 kHz</div>
<div class="fl" style="top:262.5px">12 kHz</div>
<div class="fl" style="top:225.5px">14 kHz</div>
<div class="fl" style="top:189.5px">16 kHz</div>
<div class="fl" style="top:153.5px">18 kHz</div>
<div class="fl" style="top:117.5px">20 kHz</div>
<div class="fl" style="top:81.5px">22 kHz</div>
<div class="fl" style="top:45.5px">24 kHz</div>
<div class="tl" style="left:20.5px">0:00</div>
<div class="tl" style="left:57.5px">5:00</div>
<div class="tl" style="left:94.5px">10:00</div>
<div class="tl" style="left:132.5px">15:00</div>
<div class="tl" style="left:169.5px">20:00</div>
<div class="tl" style="left:206.5px">25:00</div>
<div class="tl" style="left:244.5px">30:00</div>
<div class="tl" style="left:281.5px">35:00</div>
<div class="tl" style="left:319.5px">40:00</div>
<div class="tl" style="left:356.5px">45:00</div>
<div class="tl" style="left:393.5px">50:00</div>
<div class="tl" style="left:431.5px">55:00</div>
<div class="tl" style="left:468.5px">60:00</div>
<div class="tl" style="left:506.5px">65:00</div>
<div class="tl" style="left:543.5px">70:00</div>
<div class="tl" style="left:580.5px">75:00</div>
<div class="tl" style="left:618.5px">80:00</div>
<div class="tl" style="left:655.5px">85:00</div>
<div class="tl" style="left:692.5px">90:00</div>
<div class="tl" style="left:730.5px">95:00</div>
<div class="tl" style="left:767.5px">100:00</div>
<div class="tl" style="left:805.5px">105:00</div>
<div class="tl" style="left:839.5px">109:40</div>
<div class="dl" style="top:45.5px">0 dB</div>
<div class="dl" style="top:81.5px">-10 dB</div>
<div class="dl" style="top:117.5px">-20 dB</div>
<div class="dl" style="top:153.5px">-30 dB</div>
<div class="dl" style="top:189.5px">-40 dB</div>
<div class="dl" style="top:225.5px">-50 dB</div>
<div class="dl" style="top:262.5px">-60 dB</div>
<div class="dl" style="top:298.5px">-70 dB</div>
<div class="dl" style="top:334.5px">-80 dB</div>
<div class="dl" style="top:370.5px">-90 dB</div>
<div class="dl" style="top:406.5px">-100 dB</div>
<div class="dl" style="top:442.5px">-110 dB</div>
<div class="dl" style="top:479.5px">-120 dB</div>
</div>
</body>
</html>
